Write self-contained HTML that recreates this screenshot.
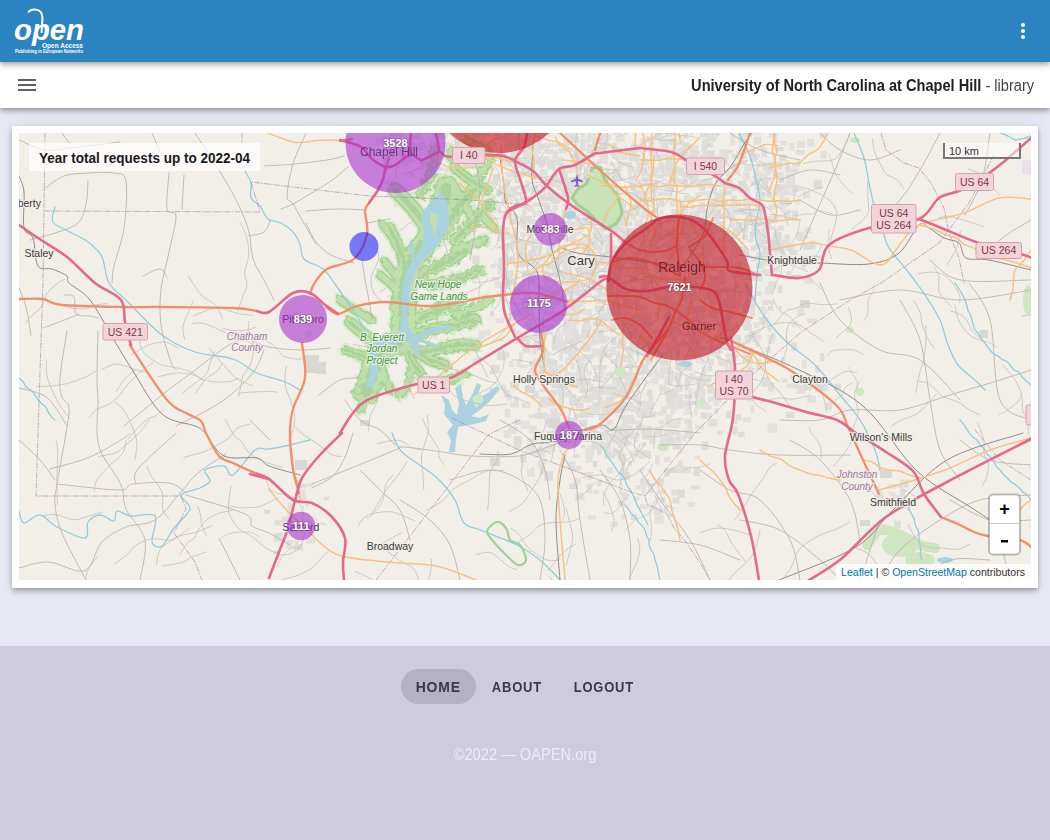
<!DOCTYPE html>
<html><head><meta charset="utf-8">
<style>
*{margin:0;padding:0;box-sizing:border-box}
html,body{width:1050px;height:840px;overflow:hidden;background:#e6e8f4;font-family:"Liberation Sans",sans-serif}
#hdr{position:absolute;left:0;top:0;width:1050px;height:62px;background:#2b83bf;z-index:3;box-shadow:0 2px 4px -1px rgba(0,0,0,.2),0 4px 5px 0 rgba(0,0,0,.14),0 1px 10px 0 rgba(0,0,0,.12)}
#bar{position:absolute;left:0;top:62px;width:1050px;height:46px;background:#fff;z-index:2;box-shadow:0 2px 4px -1px rgba(0,0,0,.2),0 4px 5px 0 rgba(0,0,0,.14),0 1px 10px 0 rgba(0,0,0,.12)}
#card{position:absolute;left:12px;top:126px;width:1026px;height:462px;background:#fff;box-shadow:0 2px 4px -1px rgba(0,0,0,.2),0 4px 5px 0 rgba(0,0,0,.14),0 1px 10px 0 rgba(0,0,0,.12)}
#map{position:absolute;left:19px;top:133px;width:1012px;height:447px;background:#f2efe9;overflow:hidden}
#map svg{position:absolute;left:0;top:0}
#foot{position:absolute;left:0;top:646px;width:1050px;height:194px;background:#cdcbdc}
.ham{position:absolute;left:18px;width:18px;height:2px;background:#5f5f5f}
.dot{position:absolute;left:1021px;width:4px;height:4px;border-radius:2px;background:#fff}
#inst{position:absolute;right:16px;top:15px;font-size:16px;color:#212121;white-space:nowrap;transform:scaleX(0.912);transform-origin:right center}
#inst b{font-weight:bold}
#inst span{color:#444}
.btn{position:absolute;top:669px;height:35px;border-radius:18px;font-size:15px;font-weight:bold;letter-spacing:0.9px;color:#3a3947;line-height:36px;text-align:center}
#copy{position:absolute;left:0;width:1050px;top:746px;text-align:center;font-size:16px;color:#ecebf2;transform:scaleX(0.915)}
</style></head><body>
<div id="hdr">
<svg width="90" height="62" viewBox="0 0 90 62" style="position:absolute;left:0;top:0">
<g fill="#fff">
<text x="14" y="40" font-family="Liberation Sans" font-style="italic" font-weight="bold" font-size="30" textLength="70" lengthAdjust="spacingAndGlyphs">open</text>
<text x="42" y="47.8" font-family="Liberation Sans" font-weight="bold" font-size="7.4" textLength="41" lengthAdjust="spacingAndGlyphs">Open Access</text>
<text x="15" y="52.8" font-family="Liberation Sans" font-weight="bold" font-size="5" textLength="68" lengthAdjust="spacingAndGlyphs">Publishing in European Networks</text>
</g>
<path d="M28 12.5 C31 8.5,42 7,42.5 18 L41.5 33" fill="none" stroke="#fff" stroke-width="2"/>
</svg>
<div class="dot" style="top:23px"></div><div class="dot" style="top:29px"></div><div class="dot" style="top:35px"></div>
</div>
<div id="bar">
 <div class="ham" style="top:17px"></div><div class="ham" style="top:22px"></div><div class="ham" style="top:27px"></div>
 <div id="inst"><b>University of North Carolina at Chapel Hill</b><span> - library</span></div>
</div>
<div id="card"></div>
<div id="map"><svg width="1012" height="447" viewBox="19 133 1012 447" font-family="Liberation Sans, sans-serif"><rect x="390.2" y="129.4" width="6.6" height="7.3" fill="#dddcd9"/><rect x="395.5" y="131.4" width="6.7" height="8.8" fill="#e3e1de"/><rect x="417.2" y="129.8" width="3.6" height="6.7" fill="#e1e0dd"/><rect x="435.9" y="130.2" width="7.0" height="4.7" fill="#dfdedb"/><rect x="456.4" y="131.8" width="9.5" height="9.5" fill="#dddcd9"/><rect x="465.4" y="129.4" width="3.7" height="6.9" fill="#dddcd9"/><rect x="471.0" y="129.8" width="9.2" height="8.6" fill="#dfdedb"/><rect x="477.3" y="131.5" width="9.4" height="5.9" fill="#dddcd9"/><rect x="484.6" y="132.7" width="5.4" height="3.6" fill="#e1e0dd"/><rect x="492.2" y="129.7" width="4.1" height="3.9" fill="#e1e0dd"/><rect x="495.5" y="131.6" width="4.6" height="7.9" fill="#dfdedb"/><rect x="504.5" y="132.9" width="9.4" height="3.5" fill="#dddcd9"/><rect x="515.4" y="131.3" width="4.6" height="9.5" fill="#dfdedb"/><rect x="526.3" y="130.2" width="5.0" height="8.1" fill="#dfdedb"/><rect x="531.1" y="130.5" width="4.8" height="7.3" fill="#e3e1de"/><rect x="537.5" y="130.5" width="7.0" height="8.5" fill="#e1e0dd"/><rect x="545.9" y="129.6" width="4.9" height="7.2" fill="#e1e0dd"/><rect x="555.2" y="129.4" width="6.4" height="4.0" fill="#dddcd9"/><rect x="564.3" y="131.4" width="7.7" height="5.0" fill="#dddcd9"/><rect x="567.5" y="130.9" width="9.1" height="9.4" fill="#dfdedb"/><rect x="573.1" y="130.1" width="9.0" height="4.7" fill="#e3e1de"/><rect x="581.1" y="132.9" width="3.8" height="5.2" fill="#dfdedb"/><rect x="587.6" y="131.8" width="8.8" height="9.4" fill="#e1e0dd"/><rect x="603.1" y="131.4" width="5.6" height="5.4" fill="#dfdedb"/><rect x="613.0" y="129.3" width="7.9" height="5.4" fill="#dddcd9"/><rect x="654.5" y="130.7" width="7.6" height="8.9" fill="#dfdedb"/><rect x="665.3" y="131.4" width="7.2" height="5.8" fill="#dfdedb"/><rect x="670.7" y="130.3" width="4.2" height="5.0" fill="#e3e1de"/><rect x="678.0" y="129.1" width="8.5" height="4.0" fill="#dfdedb"/><rect x="683.0" y="131.5" width="4.9" height="7.7" fill="#e3e1de"/><rect x="689.7" y="129.8" width="3.6" height="5.3" fill="#e1e0dd"/><rect x="700.0" y="130.6" width="9.1" height="6.5" fill="#dddcd9"/><rect x="708.7" y="132.5" width="6.1" height="8.3" fill="#e3e1de"/><rect x="711.5" y="130.4" width="9.0" height="4.8" fill="#dfdedb"/><rect x="730.1" y="129.9" width="4.5" height="6.2" fill="#e3e1de"/><rect x="737.9" y="132.4" width="6.6" height="7.5" fill="#e3e1de"/><rect x="743.4" y="131.7" width="8.5" height="5.2" fill="#dddcd9"/><rect x="753.5" y="130.8" width="8.2" height="3.6" fill="#dfdedb"/><rect x="768.9" y="129.5" width="8.2" height="8.3" fill="#dfdedb"/><rect x="819.7" y="130.1" width="6.3" height="7.8" fill="#dddcd9"/><rect x="375.9" y="136.6" width="8.6" height="7.7" fill="#e3e1de"/><rect x="384.6" y="136.5" width="6.2" height="7.3" fill="#dddcd9"/><rect x="401.6" y="137.9" width="7.8" height="8.4" fill="#e1e0dd"/><rect x="406.2" y="138.9" width="5.8" height="4.0" fill="#dddcd9"/><rect x="413.0" y="135.1" width="7.8" height="3.6" fill="#dddcd9"/><rect x="438.2" y="135.7" width="8.4" height="3.9" fill="#dddcd9"/><rect x="455.1" y="137.7" width="9.5" height="8.9" fill="#e3e1de"/><rect x="465.9" y="137.1" width="9.2" height="4.0" fill="#dddcd9"/><rect x="480.6" y="136.0" width="4.5" height="6.6" fill="#e3e1de"/><rect x="497.2" y="136.1" width="5.3" height="4.3" fill="#e3e1de"/><rect x="503.4" y="135.1" width="6.7" height="6.5" fill="#dfdedb"/><rect x="509.3" y="137.0" width="5.9" height="8.3" fill="#e1e0dd"/><rect x="516.8" y="138.7" width="6.7" height="6.0" fill="#dddcd9"/><rect x="522.6" y="138.7" width="6.5" height="5.5" fill="#e3e1de"/><rect x="525.1" y="136.0" width="4.2" height="6.0" fill="#dfdedb"/><rect x="532.1" y="137.9" width="4.4" height="3.6" fill="#e1e0dd"/><rect x="537.5" y="137.0" width="4.1" height="7.9" fill="#dddcd9"/><rect x="563.5" y="137.2" width="7.3" height="8.5" fill="#e1e0dd"/><rect x="570.4" y="135.9" width="8.6" height="7.2" fill="#dddcd9"/><rect x="579.9" y="139.0" width="5.4" height="9.0" fill="#dfdedb"/><rect x="586.0" y="135.4" width="4.9" height="7.9" fill="#e3e1de"/><rect x="593.5" y="138.2" width="7.7" height="4.7" fill="#dfdedb"/><rect x="600.9" y="135.5" width="7.6" height="9.0" fill="#dddcd9"/><rect x="603.3" y="135.4" width="7.6" height="4.6" fill="#dfdedb"/><rect x="615.8" y="135.5" width="8.9" height="6.4" fill="#e1e0dd"/><rect x="640.8" y="138.1" width="3.9" height="9.2" fill="#dddcd9"/><rect x="645.8" y="136.5" width="6.1" height="5.6" fill="#dfdedb"/><rect x="658.6" y="135.8" width="6.2" height="7.9" fill="#e1e0dd"/><rect x="663.3" y="138.4" width="8.3" height="5.4" fill="#e3e1de"/><rect x="670.4" y="138.0" width="4.6" height="7.0" fill="#dddcd9"/><rect x="701.8" y="138.1" width="8.9" height="8.8" fill="#e1e0dd"/><rect x="706.4" y="136.9" width="7.8" height="3.9" fill="#dfdedb"/><rect x="730.2" y="135.9" width="5.1" height="9.3" fill="#e3e1de"/><rect x="739.0" y="137.6" width="6.7" height="5.8" fill="#dfdedb"/><rect x="754.0" y="136.6" width="7.2" height="7.9" fill="#dfdedb"/><rect x="772.4" y="137.2" width="5.1" height="5.2" fill="#e3e1de"/><rect x="807.2" y="138.7" width="7.1" height="8.1" fill="#e1e0dd"/><rect x="383.1" y="142.9" width="5.9" height="5.4" fill="#dddcd9"/><rect x="393.1" y="142.0" width="7.8" height="5.3" fill="#dfdedb"/><rect x="406.3" y="142.6" width="7.6" height="3.8" fill="#dddcd9"/><rect x="412.9" y="144.9" width="8.9" height="6.1" fill="#e1e0dd"/><rect x="420.6" y="141.6" width="4.1" height="8.4" fill="#e1e0dd"/><rect x="429.8" y="141.2" width="7.2" height="6.2" fill="#e1e0dd"/><rect x="436.8" y="142.0" width="6.2" height="7.5" fill="#e3e1de"/><rect x="441.5" y="142.2" width="8.0" height="8.4" fill="#e1e0dd"/><rect x="450.1" y="143.5" width="4.2" height="8.9" fill="#dddcd9"/><rect x="455.8" y="141.8" width="7.2" height="7.9" fill="#dddcd9"/><rect x="468.7" y="144.5" width="5.0" height="9.4" fill="#dfdedb"/><rect x="477.2" y="141.9" width="5.1" height="3.7" fill="#dddcd9"/><rect x="485.2" y="143.5" width="4.0" height="7.6" fill="#dddcd9"/><rect x="491.0" y="141.5" width="5.6" height="5.5" fill="#dfdedb"/><rect x="504.1" y="142.8" width="8.4" height="8.5" fill="#dddcd9"/><rect x="510.3" y="143.4" width="4.4" height="4.4" fill="#dddcd9"/><rect x="514.7" y="142.5" width="8.0" height="9.0" fill="#dfdedb"/><rect x="520.7" y="143.3" width="5.4" height="6.8" fill="#e3e1de"/><rect x="525.9" y="143.6" width="8.2" height="4.0" fill="#dfdedb"/><rect x="532.3" y="144.5" width="6.5" height="8.1" fill="#e1e0dd"/><rect x="537.5" y="143.8" width="7.9" height="5.7" fill="#dddcd9"/><rect x="544.3" y="142.6" width="8.3" height="5.3" fill="#e1e0dd"/><rect x="551.7" y="143.3" width="8.5" height="3.6" fill="#e1e0dd"/><rect x="563.4" y="141.7" width="5.8" height="4.4" fill="#dfdedb"/><rect x="581.2" y="143.3" width="3.6" height="6.6" fill="#dfdedb"/><rect x="587.2" y="144.2" width="8.3" height="3.9" fill="#dfdedb"/><rect x="592.3" y="141.1" width="5.1" height="4.1" fill="#e1e0dd"/><rect x="599.8" y="143.0" width="8.4" height="6.0" fill="#dddcd9"/><rect x="611.7" y="143.0" width="5.5" height="9.3" fill="#dfdedb"/><rect x="630.4" y="144.2" width="8.5" height="7.5" fill="#dfdedb"/><rect x="648.2" y="142.7" width="6.6" height="7.8" fill="#e3e1de"/><rect x="659.7" y="142.3" width="4.5" height="7.3" fill="#e3e1de"/><rect x="663.2" y="142.2" width="5.3" height="9.3" fill="#dfdedb"/><rect x="672.6" y="144.0" width="4.4" height="9.0" fill="#dfdedb"/><rect x="675.4" y="141.7" width="9.0" height="3.7" fill="#e1e0dd"/><rect x="683.0" y="142.8" width="7.1" height="6.3" fill="#dddcd9"/><rect x="689.5" y="144.8" width="9.0" height="9.1" fill="#e3e1de"/><rect x="701.6" y="144.1" width="5.9" height="9.2" fill="#dfdedb"/><rect x="708.8" y="144.2" width="4.8" height="3.8" fill="#e3e1de"/><rect x="738.5" y="144.6" width="9.0" height="8.9" fill="#e3e1de"/><rect x="760.0" y="144.5" width="4.4" height="5.4" fill="#e1e0dd"/><rect x="780.1" y="141.0" width="6.7" height="4.4" fill="#e1e0dd"/><rect x="789.4" y="142.9" width="5.1" height="7.8" fill="#e3e1de"/><rect x="797.0" y="141.1" width="8.0" height="6.8" fill="#e1e0dd"/><rect x="389.9" y="148.4" width="5.3" height="6.3" fill="#e1e0dd"/><rect x="396.9" y="150.3" width="5.9" height="6.3" fill="#e3e1de"/><rect x="399.9" y="149.3" width="5.8" height="7.8" fill="#e3e1de"/><rect x="438.0" y="150.8" width="7.3" height="9.1" fill="#e3e1de"/><rect x="447.4" y="148.2" width="4.6" height="5.8" fill="#dddcd9"/><rect x="465.6" y="147.4" width="8.5" height="4.1" fill="#e1e0dd"/><rect x="473.4" y="147.4" width="5.9" height="8.5" fill="#e1e0dd"/><rect x="480.1" y="148.4" width="9.4" height="6.1" fill="#e3e1de"/><rect x="491.8" y="148.9" width="4.7" height="4.4" fill="#e3e1de"/><rect x="496.3" y="150.2" width="7.9" height="7.2" fill="#e1e0dd"/><rect x="502.3" y="148.4" width="7.2" height="3.6" fill="#e3e1de"/><rect x="510.2" y="150.3" width="5.8" height="6.6" fill="#e1e0dd"/><rect x="513.9" y="149.4" width="6.7" height="5.3" fill="#e1e0dd"/><rect x="523.0" y="149.8" width="4.7" height="9.1" fill="#e1e0dd"/><rect x="528.1" y="147.5" width="3.7" height="7.5" fill="#e3e1de"/><rect x="534.7" y="148.4" width="7.7" height="5.5" fill="#e3e1de"/><rect x="545.3" y="149.2" width="7.9" height="4.9" fill="#dfdedb"/><rect x="553.0" y="150.3" width="5.1" height="9.0" fill="#e1e0dd"/><rect x="558.6" y="148.0" width="8.4" height="5.2" fill="#dddcd9"/><rect x="567.1" y="147.7" width="6.8" height="4.0" fill="#e1e0dd"/><rect x="574.5" y="149.4" width="7.5" height="7.9" fill="#dfdedb"/><rect x="581.1" y="147.5" width="6.0" height="3.7" fill="#e3e1de"/><rect x="587.3" y="148.3" width="6.6" height="5.1" fill="#dfdedb"/><rect x="593.0" y="147.4" width="8.2" height="5.9" fill="#dddcd9"/><rect x="600.0" y="150.0" width="7.2" height="7.6" fill="#e3e1de"/><rect x="612.3" y="147.5" width="8.9" height="7.6" fill="#dfdedb"/><rect x="624.6" y="148.3" width="6.7" height="6.1" fill="#dfdedb"/><rect x="628.5" y="148.3" width="7.2" height="6.1" fill="#dddcd9"/><rect x="648.5" y="150.9" width="8.6" height="5.0" fill="#e3e1de"/><rect x="652.2" y="148.6" width="6.7" height="4.9" fill="#e1e0dd"/><rect x="671.2" y="149.3" width="8.7" height="5.7" fill="#e1e0dd"/><rect x="678.6" y="147.4" width="8.0" height="6.9" fill="#e1e0dd"/><rect x="681.0" y="148.0" width="6.7" height="9.2" fill="#dddcd9"/><rect x="688.8" y="149.1" width="4.5" height="6.1" fill="#e1e0dd"/><rect x="693.1" y="150.6" width="7.0" height="3.8" fill="#dddcd9"/><rect x="702.1" y="150.5" width="4.4" height="8.2" fill="#e1e0dd"/><rect x="705.8" y="150.4" width="9.0" height="8.9" fill="#dddcd9"/><rect x="719.2" y="149.1" width="7.3" height="7.7" fill="#e1e0dd"/><rect x="723.4" y="149.9" width="8.8" height="3.8" fill="#dddcd9"/><rect x="736.3" y="150.8" width="6.0" height="8.8" fill="#e3e1de"/><rect x="741.5" y="149.8" width="4.5" height="8.7" fill="#dddcd9"/><rect x="750.2" y="148.5" width="4.9" height="7.5" fill="#dfdedb"/><rect x="761.7" y="148.1" width="5.3" height="9.1" fill="#dfdedb"/><rect x="774.6" y="147.0" width="9.0" height="3.9" fill="#dddcd9"/><rect x="795.7" y="149.9" width="9.4" height="4.6" fill="#dfdedb"/><rect x="820.5" y="150.7" width="6.3" height="8.0" fill="#e3e1de"/><rect x="383.5" y="156.9" width="5.2" height="8.5" fill="#e1e0dd"/><rect x="401.2" y="154.0" width="6.1" height="7.5" fill="#e1e0dd"/><rect x="407.4" y="154.0" width="6.8" height="8.6" fill="#e1e0dd"/><rect x="437.0" y="154.7" width="4.4" height="3.6" fill="#e3e1de"/><rect x="455.6" y="155.3" width="4.2" height="4.6" fill="#e1e0dd"/><rect x="468.3" y="156.0" width="6.1" height="7.7" fill="#dddcd9"/><rect x="478.5" y="154.0" width="7.4" height="6.6" fill="#e3e1de"/><rect x="501.9" y="156.9" width="6.0" height="5.7" fill="#dfdedb"/><rect x="507.5" y="156.0" width="8.0" height="7.1" fill="#dfdedb"/><rect x="513.4" y="155.2" width="6.0" height="6.7" fill="#e3e1de"/><rect x="523.0" y="156.1" width="4.0" height="3.7" fill="#e1e0dd"/><rect x="526.7" y="153.3" width="4.2" height="8.6" fill="#e1e0dd"/><rect x="533.4" y="153.2" width="5.5" height="9.4" fill="#e3e1de"/><rect x="539.3" y="156.6" width="9.5" height="7.9" fill="#e1e0dd"/><rect x="544.5" y="156.1" width="5.9" height="8.6" fill="#e1e0dd"/><rect x="552.2" y="154.9" width="5.0" height="8.3" fill="#e3e1de"/><rect x="556.8" y="157.0" width="6.3" height="5.4" fill="#e1e0dd"/><rect x="569.8" y="154.5" width="5.8" height="3.9" fill="#dddcd9"/><rect x="575.0" y="155.3" width="6.6" height="7.9" fill="#e1e0dd"/><rect x="582.7" y="154.4" width="5.7" height="4.4" fill="#e1e0dd"/><rect x="586.3" y="154.5" width="8.9" height="3.6" fill="#dfdedb"/><rect x="599.7" y="154.2" width="5.0" height="8.8" fill="#e1e0dd"/><rect x="603.5" y="153.8" width="4.6" height="6.6" fill="#e3e1de"/><rect x="611.8" y="154.0" width="6.8" height="4.3" fill="#e3e1de"/><rect x="616.1" y="155.9" width="4.4" height="4.7" fill="#e3e1de"/><rect x="621.4" y="154.5" width="6.6" height="5.6" fill="#e1e0dd"/><rect x="628.9" y="153.0" width="8.6" height="8.0" fill="#dddcd9"/><rect x="635.2" y="154.4" width="3.9" height="8.6" fill="#dfdedb"/><rect x="652.7" y="154.6" width="7.3" height="4.0" fill="#dfdedb"/><rect x="659.8" y="153.9" width="9.1" height="5.2" fill="#e3e1de"/><rect x="665.8" y="155.1" width="8.1" height="5.6" fill="#dddcd9"/><rect x="682.2" y="156.7" width="5.0" height="8.6" fill="#e3e1de"/><rect x="688.1" y="154.5" width="9.0" height="9.0" fill="#dddcd9"/><rect x="693.1" y="154.4" width="5.5" height="5.0" fill="#dddcd9"/><rect x="699.7" y="154.9" width="5.1" height="7.5" fill="#dddcd9"/><rect x="714.1" y="155.5" width="7.0" height="9.2" fill="#e3e1de"/><rect x="718.9" y="154.8" width="3.9" height="3.9" fill="#e3e1de"/><rect x="724.2" y="154.4" width="4.3" height="6.5" fill="#dfdedb"/><rect x="731.7" y="153.9" width="4.7" height="4.9" fill="#dfdedb"/><rect x="750.1" y="153.3" width="6.8" height="8.6" fill="#dddcd9"/><rect x="756.2" y="153.8" width="4.1" height="3.6" fill="#e3e1de"/><rect x="779.3" y="154.5" width="7.2" height="6.4" fill="#dddcd9"/><rect x="400.9" y="160.4" width="7.2" height="6.0" fill="#e3e1de"/><rect x="419.9" y="160.3" width="7.8" height="5.0" fill="#dddcd9"/><rect x="432.9" y="161.6" width="6.9" height="4.3" fill="#e1e0dd"/><rect x="453.9" y="159.7" width="5.8" height="7.5" fill="#dfdedb"/><rect x="462.7" y="160.1" width="7.7" height="8.2" fill="#dddcd9"/><rect x="468.7" y="163.0" width="7.3" height="5.9" fill="#dfdedb"/><rect x="471.8" y="160.4" width="9.5" height="8.7" fill="#dfdedb"/><rect x="480.4" y="159.7" width="8.9" height="8.5" fill="#dfdedb"/><rect x="484.1" y="160.6" width="8.3" height="8.5" fill="#e3e1de"/><rect x="504.2" y="159.6" width="7.7" height="6.8" fill="#e1e0dd"/><rect x="514.7" y="159.6" width="8.9" height="8.8" fill="#dfdedb"/><rect x="520.6" y="160.3" width="6.9" height="5.1" fill="#dfdedb"/><rect x="525.2" y="159.3" width="5.7" height="5.1" fill="#dddcd9"/><rect x="531.6" y="162.2" width="3.5" height="5.5" fill="#e3e1de"/><rect x="538.6" y="159.2" width="6.0" height="8.3" fill="#dddcd9"/><rect x="547.0" y="160.8" width="9.1" height="8.7" fill="#dfdedb"/><rect x="549.5" y="159.3" width="3.7" height="4.5" fill="#dddcd9"/><rect x="556.9" y="162.5" width="6.8" height="3.9" fill="#dfdedb"/><rect x="570.2" y="161.9" width="6.7" height="8.4" fill="#e3e1de"/><rect x="576.2" y="162.1" width="6.7" height="7.5" fill="#e3e1de"/><rect x="582.6" y="159.1" width="7.7" height="5.0" fill="#e1e0dd"/><rect x="587.6" y="162.2" width="5.8" height="5.7" fill="#dddcd9"/><rect x="591.3" y="161.6" width="6.2" height="5.4" fill="#dfdedb"/><rect x="597.2" y="159.5" width="4.8" height="4.6" fill="#dddcd9"/><rect x="603.6" y="160.4" width="4.6" height="4.1" fill="#e3e1de"/><rect x="609.4" y="162.8" width="5.9" height="3.8" fill="#e1e0dd"/><rect x="617.4" y="161.3" width="4.5" height="3.9" fill="#dddcd9"/><rect x="622.6" y="161.8" width="9.3" height="4.8" fill="#e1e0dd"/><rect x="636.5" y="162.1" width="5.8" height="9.0" fill="#dfdedb"/><rect x="641.6" y="159.8" width="7.3" height="5.8" fill="#dddcd9"/><rect x="657.5" y="162.3" width="6.5" height="6.9" fill="#e3e1de"/><rect x="665.0" y="160.5" width="6.3" height="8.5" fill="#dfdedb"/><rect x="670.8" y="161.4" width="3.7" height="7.3" fill="#dfdedb"/><rect x="684.0" y="160.3" width="6.3" height="9.5" fill="#e3e1de"/><rect x="697.0" y="161.0" width="8.7" height="4.3" fill="#e1e0dd"/><rect x="699.6" y="159.5" width="9.0" height="8.2" fill="#dfdedb"/><rect x="708.5" y="161.8" width="9.5" height="3.9" fill="#dddcd9"/><rect x="711.1" y="160.7" width="5.6" height="4.7" fill="#e3e1de"/><rect x="719.2" y="162.1" width="7.4" height="3.9" fill="#e3e1de"/><rect x="732.5" y="162.9" width="6.5" height="3.8" fill="#dfdedb"/><rect x="741.1" y="160.4" width="5.7" height="4.1" fill="#e1e0dd"/><rect x="756.4" y="161.5" width="4.6" height="5.8" fill="#e3e1de"/><rect x="761.5" y="162.5" width="9.4" height="4.7" fill="#e1e0dd"/><rect x="768.3" y="161.8" width="9.5" height="5.8" fill="#dddcd9"/><rect x="777.7" y="161.3" width="4.8" height="8.1" fill="#dfdedb"/><rect x="785.4" y="160.4" width="4.2" height="9.1" fill="#e1e0dd"/><rect x="791.9" y="162.5" width="3.9" height="4.7" fill="#e3e1de"/><rect x="796.5" y="161.5" width="3.9" height="5.1" fill="#dddcd9"/><rect x="424.8" y="168.8" width="6.0" height="5.2" fill="#dddcd9"/><rect x="436.5" y="167.4" width="7.2" height="3.6" fill="#dddcd9"/><rect x="444.5" y="168.1" width="5.2" height="4.1" fill="#dfdedb"/><rect x="454.5" y="166.5" width="8.9" height="4.0" fill="#dddcd9"/><rect x="485.0" y="166.9" width="3.9" height="4.5" fill="#dfdedb"/><rect x="509.8" y="169.0" width="8.5" height="7.4" fill="#dfdedb"/><rect x="521.1" y="167.3" width="8.2" height="9.1" fill="#e3e1de"/><rect x="528.0" y="165.3" width="4.4" height="5.9" fill="#e1e0dd"/><rect x="539.7" y="168.9" width="8.2" height="8.9" fill="#e3e1de"/><rect x="552.4" y="168.8" width="6.3" height="3.6" fill="#dfdedb"/><rect x="558.9" y="168.1" width="6.0" height="6.9" fill="#dfdedb"/><rect x="563.3" y="165.5" width="6.5" height="4.2" fill="#dfdedb"/><rect x="568.0" y="167.4" width="5.4" height="5.6" fill="#e3e1de"/><rect x="575.2" y="166.8" width="4.8" height="6.2" fill="#dfdedb"/><rect x="585.7" y="167.5" width="4.4" height="6.9" fill="#dfdedb"/><rect x="594.3" y="167.9" width="3.6" height="4.4" fill="#e3e1de"/><rect x="597.4" y="166.2" width="6.7" height="3.7" fill="#dfdedb"/><rect x="605.1" y="167.6" width="5.3" height="4.8" fill="#e3e1de"/><rect x="612.5" y="168.8" width="6.4" height="7.4" fill="#dfdedb"/><rect x="616.0" y="166.5" width="5.3" height="7.9" fill="#e3e1de"/><rect x="627.5" y="166.2" width="7.4" height="5.5" fill="#dfdedb"/><rect x="636.3" y="167.7" width="5.8" height="5.4" fill="#dddcd9"/><rect x="641.1" y="167.1" width="5.7" height="9.2" fill="#dfdedb"/><rect x="647.8" y="166.4" width="7.1" height="4.1" fill="#e1e0dd"/><rect x="652.2" y="167.4" width="7.1" height="5.7" fill="#dfdedb"/><rect x="660.0" y="165.2" width="6.5" height="6.6" fill="#dfdedb"/><rect x="666.8" y="167.6" width="7.0" height="8.3" fill="#dddcd9"/><rect x="669.3" y="168.9" width="5.2" height="7.6" fill="#dddcd9"/><rect x="678.2" y="167.6" width="5.4" height="8.4" fill="#dfdedb"/><rect x="687.6" y="166.4" width="5.9" height="4.0" fill="#dfdedb"/><rect x="695.2" y="168.3" width="7.6" height="4.8" fill="#e3e1de"/><rect x="702.7" y="165.3" width="7.6" height="9.4" fill="#dfdedb"/><rect x="706.8" y="166.7" width="8.0" height="5.8" fill="#dfdedb"/><rect x="714.3" y="168.8" width="8.9" height="7.9" fill="#dddcd9"/><rect x="717.5" y="166.2" width="6.8" height="4.2" fill="#dfdedb"/><rect x="732.4" y="165.5" width="6.0" height="6.7" fill="#dddcd9"/><rect x="736.5" y="167.7" width="3.7" height="6.1" fill="#e3e1de"/><rect x="744.1" y="165.4" width="7.6" height="5.8" fill="#e1e0dd"/><rect x="755.6" y="166.5" width="3.6" height="8.4" fill="#e3e1de"/><rect x="762.1" y="165.6" width="7.0" height="6.3" fill="#e3e1de"/><rect x="766.0" y="167.9" width="7.7" height="4.9" fill="#dfdedb"/><rect x="772.5" y="167.9" width="3.9" height="8.4" fill="#e3e1de"/><rect x="785.1" y="166.5" width="4.6" height="6.0" fill="#dfdedb"/><rect x="790.2" y="168.4" width="8.0" height="4.1" fill="#dfdedb"/><rect x="409.0" y="172.5" width="4.6" height="4.5" fill="#dddcd9"/><rect x="430.1" y="172.0" width="8.6" height="7.9" fill="#dfdedb"/><rect x="436.1" y="173.2" width="8.8" height="7.5" fill="#dddcd9"/><rect x="449.0" y="174.5" width="5.2" height="5.2" fill="#e1e0dd"/><rect x="465.7" y="174.0" width="4.0" height="8.3" fill="#dddcd9"/><rect x="473.6" y="173.2" width="6.1" height="8.2" fill="#e3e1de"/><rect x="480.8" y="173.0" width="5.7" height="7.9" fill="#dddcd9"/><rect x="492.7" y="174.0" width="6.8" height="6.9" fill="#dddcd9"/><rect x="505.0" y="172.2" width="6.9" height="4.2" fill="#e1e0dd"/><rect x="507.1" y="173.3" width="7.5" height="3.9" fill="#dfdedb"/><rect x="515.8" y="173.5" width="7.6" height="4.0" fill="#e1e0dd"/><rect x="527.8" y="171.1" width="4.3" height="4.7" fill="#dfdedb"/><rect x="533.8" y="174.8" width="5.3" height="5.5" fill="#e1e0dd"/><rect x="551.7" y="173.5" width="6.4" height="7.0" fill="#dddcd9"/><rect x="561.1" y="171.4" width="6.6" height="9.3" fill="#dddcd9"/><rect x="575.8" y="173.1" width="3.7" height="8.5" fill="#dfdedb"/><rect x="582.9" y="174.3" width="3.9" height="8.3" fill="#e3e1de"/><rect x="588.6" y="172.0" width="4.8" height="5.9" fill="#dfdedb"/><rect x="593.7" y="172.8" width="6.7" height="5.5" fill="#e1e0dd"/><rect x="604.8" y="171.9" width="4.7" height="4.8" fill="#dddcd9"/><rect x="611.4" y="173.3" width="7.6" height="7.2" fill="#dfdedb"/><rect x="616.3" y="173.9" width="4.9" height="5.3" fill="#dfdedb"/><rect x="628.0" y="171.9" width="4.0" height="8.1" fill="#e3e1de"/><rect x="633.3" y="171.3" width="4.3" height="7.5" fill="#e3e1de"/><rect x="649.0" y="171.8" width="7.5" height="4.9" fill="#dddcd9"/><rect x="654.9" y="174.6" width="9.2" height="3.9" fill="#dfdedb"/><rect x="660.7" y="171.6" width="5.8" height="3.9" fill="#e1e0dd"/><rect x="664.3" y="171.6" width="6.5" height="4.9" fill="#e1e0dd"/><rect x="669.8" y="171.5" width="7.8" height="9.2" fill="#e1e0dd"/><rect x="682.5" y="171.5" width="9.2" height="6.2" fill="#dddcd9"/><rect x="689.9" y="173.7" width="8.7" height="9.4" fill="#dfdedb"/><rect x="695.1" y="173.2" width="4.6" height="4.2" fill="#e3e1de"/><rect x="705.9" y="171.3" width="9.2" height="4.0" fill="#dddcd9"/><rect x="725.6" y="171.4" width="4.6" height="9.3" fill="#e3e1de"/><rect x="742.9" y="171.8" width="7.1" height="8.6" fill="#e3e1de"/><rect x="753.2" y="171.7" width="8.1" height="5.9" fill="#e1e0dd"/><rect x="759.1" y="172.7" width="8.4" height="9.3" fill="#e3e1de"/><rect x="766.4" y="171.7" width="3.9" height="3.6" fill="#dfdedb"/><rect x="773.8" y="172.0" width="8.6" height="6.9" fill="#dddcd9"/><rect x="779.4" y="172.7" width="4.4" height="7.0" fill="#e3e1de"/><rect x="785.7" y="173.5" width="9.2" height="6.4" fill="#e1e0dd"/><rect x="384.0" y="180.2" width="6.4" height="4.2" fill="#e3e1de"/><rect x="423.2" y="177.6" width="5.4" height="7.3" fill="#dfdedb"/><rect x="432.2" y="177.9" width="6.2" height="4.0" fill="#e3e1de"/><rect x="442.7" y="179.2" width="8.9" height="6.5" fill="#dfdedb"/><rect x="460.4" y="177.8" width="8.5" height="6.5" fill="#e1e0dd"/><rect x="471.5" y="178.0" width="5.3" height="7.5" fill="#dddcd9"/><rect x="490.0" y="180.7" width="8.4" height="5.3" fill="#dfdedb"/><rect x="503.7" y="178.6" width="6.3" height="7.4" fill="#dfdedb"/><rect x="514.6" y="178.0" width="5.1" height="5.2" fill="#dddcd9"/><rect x="525.2" y="180.5" width="4.3" height="7.9" fill="#e3e1de"/><rect x="545.0" y="178.5" width="9.2" height="7.3" fill="#dddcd9"/><rect x="552.9" y="177.9" width="8.8" height="6.5" fill="#dfdedb"/><rect x="556.1" y="177.7" width="6.6" height="5.4" fill="#dddcd9"/><rect x="564.7" y="180.6" width="9.2" height="5.5" fill="#dddcd9"/><rect x="568.9" y="177.2" width="7.0" height="5.3" fill="#dfdedb"/><rect x="573.1" y="180.5" width="6.6" height="6.4" fill="#dfdedb"/><rect x="579.8" y="179.3" width="8.0" height="5.0" fill="#e1e0dd"/><rect x="588.8" y="178.2" width="5.9" height="5.5" fill="#e3e1de"/><rect x="594.7" y="177.3" width="9.0" height="8.2" fill="#e3e1de"/><rect x="599.2" y="179.6" width="7.6" height="8.1" fill="#dddcd9"/><rect x="603.3" y="177.7" width="6.0" height="3.6" fill="#dfdedb"/><rect x="612.1" y="179.3" width="4.6" height="9.3" fill="#dddcd9"/><rect x="615.2" y="177.2" width="8.3" height="3.7" fill="#dfdedb"/><rect x="629.2" y="177.0" width="5.0" height="8.9" fill="#e3e1de"/><rect x="634.7" y="179.3" width="6.1" height="4.3" fill="#e1e0dd"/><rect x="641.5" y="177.2" width="7.4" height="7.6" fill="#e1e0dd"/><rect x="646.5" y="180.0" width="6.9" height="5.9" fill="#e3e1de"/><rect x="654.0" y="180.9" width="4.7" height="5.0" fill="#dddcd9"/><rect x="666.3" y="179.9" width="5.5" height="3.6" fill="#e3e1de"/><rect x="669.1" y="177.4" width="8.7" height="4.6" fill="#dddcd9"/><rect x="676.8" y="178.3" width="5.7" height="6.1" fill="#dfdedb"/><rect x="682.8" y="178.9" width="5.3" height="8.1" fill="#e3e1de"/><rect x="690.2" y="180.7" width="7.6" height="6.5" fill="#dfdedb"/><rect x="696.8" y="179.6" width="5.3" height="7.8" fill="#e3e1de"/><rect x="702.1" y="179.2" width="7.4" height="4.9" fill="#dddcd9"/><rect x="706.4" y="178.7" width="5.8" height="8.5" fill="#dfdedb"/><rect x="715.0" y="177.8" width="4.8" height="5.9" fill="#e3e1de"/><rect x="720.3" y="178.6" width="7.0" height="8.4" fill="#dddcd9"/><rect x="725.8" y="179.2" width="7.0" height="5.0" fill="#e1e0dd"/><rect x="737.9" y="180.8" width="8.2" height="5.4" fill="#dddcd9"/><rect x="750.7" y="180.2" width="9.2" height="5.5" fill="#e3e1de"/><rect x="754.7" y="177.6" width="5.2" height="8.3" fill="#dfdedb"/><rect x="761.3" y="180.8" width="6.7" height="9.4" fill="#dddcd9"/><rect x="767.2" y="177.7" width="3.8" height="3.6" fill="#dddcd9"/><rect x="779.1" y="177.1" width="5.1" height="5.7" fill="#dddcd9"/><rect x="785.5" y="180.3" width="5.9" height="8.2" fill="#e1e0dd"/><rect x="791.5" y="177.1" width="3.7" height="9.0" fill="#e1e0dd"/><rect x="813.8" y="179.8" width="8.4" height="8.7" fill="#dddcd9"/><rect x="424.8" y="184.7" width="9.3" height="5.5" fill="#e1e0dd"/><rect x="441.9" y="186.5" width="5.6" height="7.7" fill="#e1e0dd"/><rect x="456.4" y="186.0" width="6.5" height="7.5" fill="#dfdedb"/><rect x="462.9" y="185.4" width="3.8" height="5.6" fill="#e3e1de"/><rect x="467.8" y="183.7" width="4.1" height="3.6" fill="#dddcd9"/><rect x="471.2" y="186.1" width="4.4" height="7.6" fill="#e1e0dd"/><rect x="484.2" y="184.0" width="5.7" height="5.0" fill="#dfdedb"/><rect x="489.7" y="183.6" width="6.0" height="4.5" fill="#dfdedb"/><rect x="498.5" y="186.0" width="6.6" height="5.4" fill="#e3e1de"/><rect x="502.6" y="185.0" width="6.5" height="6.0" fill="#e3e1de"/><rect x="510.2" y="186.4" width="7.0" height="9.5" fill="#dddcd9"/><rect x="516.2" y="185.5" width="5.3" height="3.7" fill="#dddcd9"/><rect x="521.2" y="184.9" width="5.7" height="9.0" fill="#dddcd9"/><rect x="527.2" y="186.5" width="6.2" height="5.9" fill="#e1e0dd"/><rect x="533.2" y="185.1" width="5.0" height="9.3" fill="#dddcd9"/><rect x="540.8" y="185.1" width="5.2" height="5.6" fill="#dfdedb"/><rect x="545.6" y="183.4" width="4.4" height="5.8" fill="#e3e1de"/><rect x="551.8" y="183.3" width="6.8" height="3.8" fill="#e1e0dd"/><rect x="557.2" y="184.3" width="4.8" height="6.2" fill="#dfdedb"/><rect x="563.4" y="184.0" width="7.8" height="9.0" fill="#dddcd9"/><rect x="567.4" y="185.5" width="9.2" height="6.9" fill="#dddcd9"/><rect x="573.7" y="184.4" width="8.3" height="4.8" fill="#e1e0dd"/><rect x="587.6" y="186.9" width="7.9" height="8.8" fill="#dddcd9"/><rect x="597.0" y="185.7" width="5.4" height="4.2" fill="#dddcd9"/><rect x="605.9" y="183.7" width="8.4" height="5.0" fill="#e3e1de"/><rect x="610.1" y="183.8" width="3.7" height="7.0" fill="#dfdedb"/><rect x="616.2" y="186.4" width="4.6" height="4.9" fill="#dfdedb"/><rect x="629.9" y="185.0" width="7.3" height="5.8" fill="#dfdedb"/><rect x="634.0" y="183.5" width="7.0" height="4.2" fill="#dddcd9"/><rect x="647.4" y="186.7" width="5.5" height="4.4" fill="#e1e0dd"/><rect x="653.6" y="185.5" width="3.6" height="7.4" fill="#e3e1de"/><rect x="660.5" y="183.1" width="7.8" height="4.0" fill="#e1e0dd"/><rect x="664.5" y="183.7" width="4.9" height="6.1" fill="#dddcd9"/><rect x="669.6" y="183.6" width="3.8" height="8.5" fill="#dfdedb"/><rect x="683.9" y="183.6" width="7.4" height="4.4" fill="#dddcd9"/><rect x="687.5" y="184.1" width="9.0" height="3.7" fill="#e1e0dd"/><rect x="695.1" y="183.3" width="6.1" height="3.9" fill="#e3e1de"/><rect x="699.4" y="183.0" width="5.8" height="8.0" fill="#dddcd9"/><rect x="706.3" y="183.0" width="7.2" height="4.7" fill="#e3e1de"/><rect x="711.6" y="186.2" width="5.2" height="7.5" fill="#dddcd9"/><rect x="724.2" y="184.0" width="7.4" height="5.1" fill="#dfdedb"/><rect x="730.6" y="186.4" width="9.0" height="4.6" fill="#dddcd9"/><rect x="738.5" y="184.4" width="9.4" height="7.9" fill="#dddcd9"/><rect x="754.6" y="185.3" width="9.3" height="4.4" fill="#e1e0dd"/><rect x="765.8" y="186.8" width="6.1" height="7.0" fill="#e3e1de"/><rect x="774.9" y="184.1" width="6.2" height="8.6" fill="#dddcd9"/><rect x="778.1" y="184.5" width="7.1" height="6.8" fill="#dddcd9"/><rect x="791.6" y="184.9" width="7.6" height="7.3" fill="#dfdedb"/><rect x="796.9" y="185.9" width="7.8" height="4.9" fill="#e3e1de"/><rect x="411.7" y="191.9" width="3.7" height="6.0" fill="#dddcd9"/><rect x="424.8" y="192.3" width="4.1" height="3.7" fill="#dddcd9"/><rect x="447.9" y="189.1" width="7.3" height="3.7" fill="#e1e0dd"/><rect x="461.8" y="192.4" width="5.6" height="4.1" fill="#dfdedb"/><rect x="478.0" y="189.2" width="6.1" height="7.3" fill="#dddcd9"/><rect x="484.9" y="189.0" width="8.1" height="7.3" fill="#e3e1de"/><rect x="496.1" y="191.2" width="9.0" height="4.4" fill="#dddcd9"/><rect x="504.2" y="190.2" width="7.6" height="9.4" fill="#e3e1de"/><rect x="510.8" y="191.7" width="6.0" height="5.2" fill="#e3e1de"/><rect x="513.5" y="191.8" width="8.6" height="4.0" fill="#dfdedb"/><rect x="531.9" y="189.6" width="6.9" height="4.1" fill="#dddcd9"/><rect x="539.9" y="189.0" width="5.8" height="9.0" fill="#e1e0dd"/><rect x="546.6" y="192.0" width="4.3" height="4.3" fill="#dfdedb"/><rect x="549.7" y="192.9" width="4.4" height="5.5" fill="#dddcd9"/><rect x="561.4" y="189.1" width="4.4" height="8.2" fill="#dddcd9"/><rect x="567.8" y="189.2" width="8.9" height="8.2" fill="#e1e0dd"/><rect x="573.8" y="191.6" width="5.3" height="9.0" fill="#dfdedb"/><rect x="579.7" y="189.2" width="4.4" height="6.2" fill="#e3e1de"/><rect x="599.2" y="192.8" width="6.5" height="4.3" fill="#dddcd9"/><rect x="603.7" y="192.0" width="6.8" height="5.4" fill="#e1e0dd"/><rect x="611.9" y="190.9" width="6.0" height="7.7" fill="#dfdedb"/><rect x="616.7" y="192.4" width="4.9" height="5.0" fill="#e3e1de"/><rect x="624.9" y="191.4" width="5.7" height="4.6" fill="#e1e0dd"/><rect x="630.9" y="192.3" width="6.5" height="6.6" fill="#e3e1de"/><rect x="634.6" y="190.5" width="7.4" height="5.7" fill="#dddcd9"/><rect x="642.2" y="191.7" width="5.6" height="8.6" fill="#dddcd9"/><rect x="646.3" y="189.4" width="7.4" height="5.0" fill="#e1e0dd"/><rect x="657.6" y="191.6" width="5.8" height="4.2" fill="#dfdedb"/><rect x="663.4" y="189.3" width="8.2" height="6.4" fill="#e3e1de"/><rect x="695.3" y="192.1" width="6.4" height="4.8" fill="#e3e1de"/><rect x="702.2" y="191.4" width="4.2" height="4.0" fill="#dfdedb"/><rect x="706.3" y="191.1" width="6.3" height="6.4" fill="#e3e1de"/><rect x="714.7" y="192.5" width="9.3" height="5.7" fill="#dfdedb"/><rect x="719.2" y="189.4" width="8.3" height="4.0" fill="#dfdedb"/><rect x="724.3" y="190.2" width="7.2" height="5.3" fill="#dddcd9"/><rect x="743.7" y="189.6" width="6.3" height="8.2" fill="#e3e1de"/><rect x="756.3" y="192.1" width="8.9" height="7.1" fill="#e3e1de"/><rect x="759.6" y="192.8" width="4.4" height="3.8" fill="#dddcd9"/><rect x="767.3" y="191.5" width="4.3" height="4.5" fill="#dddcd9"/><rect x="773.0" y="190.5" width="5.5" height="6.0" fill="#e1e0dd"/><rect x="779.4" y="191.7" width="5.1" height="8.1" fill="#e3e1de"/><rect x="783.2" y="189.2" width="7.4" height="6.1" fill="#e3e1de"/><rect x="791.1" y="191.3" width="4.3" height="4.7" fill="#dfdedb"/><rect x="802.9" y="191.6" width="7.4" height="7.3" fill="#e3e1de"/><rect x="489.2" y="196.5" width="6.9" height="4.4" fill="#dddcd9"/><rect x="501.9" y="196.4" width="8.9" height="7.5" fill="#dfdedb"/><rect x="507.5" y="197.4" width="5.7" height="5.4" fill="#e3e1de"/><rect x="514.8" y="198.1" width="4.6" height="5.5" fill="#e1e0dd"/><rect x="519.8" y="196.3" width="8.2" height="4.0" fill="#dfdedb"/><rect x="526.4" y="196.9" width="5.3" height="6.2" fill="#dddcd9"/><rect x="539.1" y="195.4" width="5.3" height="5.6" fill="#dddcd9"/><rect x="544.2" y="196.8" width="8.3" height="4.2" fill="#dddcd9"/><rect x="551.0" y="195.2" width="8.9" height="8.7" fill="#dddcd9"/><rect x="568.7" y="196.6" width="4.0" height="8.6" fill="#e3e1de"/><rect x="573.3" y="195.2" width="5.5" height="4.9" fill="#e3e1de"/><rect x="581.2" y="196.5" width="5.3" height="9.1" fill="#e3e1de"/><rect x="586.5" y="196.1" width="5.5" height="6.4" fill="#dfdedb"/><rect x="592.0" y="198.2" width="8.0" height="4.4" fill="#dfdedb"/><rect x="599.1" y="195.7" width="3.7" height="3.5" fill="#e3e1de"/><rect x="605.0" y="196.4" width="8.2" height="6.8" fill="#dddcd9"/><rect x="612.6" y="197.9" width="8.3" height="8.5" fill="#dddcd9"/><rect x="617.1" y="198.3" width="6.7" height="7.0" fill="#dfdedb"/><rect x="635.4" y="195.5" width="6.9" height="8.8" fill="#dfdedb"/><rect x="648.0" y="197.0" width="6.9" height="4.4" fill="#dddcd9"/><rect x="658.5" y="197.8" width="5.5" height="8.9" fill="#dddcd9"/><rect x="671.4" y="197.8" width="6.3" height="9.1" fill="#dfdedb"/><rect x="675.4" y="198.5" width="6.4" height="5.5" fill="#e3e1de"/><rect x="683.7" y="195.4" width="6.2" height="5.1" fill="#dddcd9"/><rect x="687.5" y="196.2" width="6.6" height="6.6" fill="#dfdedb"/><rect x="713.6" y="197.4" width="5.0" height="6.3" fill="#dddcd9"/><rect x="717.5" y="198.7" width="5.3" height="7.4" fill="#dfdedb"/><rect x="723.3" y="198.5" width="4.1" height="4.2" fill="#dfdedb"/><rect x="731.3" y="195.5" width="5.2" height="8.9" fill="#dddcd9"/><rect x="743.6" y="196.3" width="5.1" height="6.7" fill="#e1e0dd"/><rect x="747.9" y="198.8" width="9.3" height="4.8" fill="#dfdedb"/><rect x="780.3" y="198.4" width="3.9" height="7.9" fill="#dfdedb"/><rect x="783.2" y="197.3" width="6.6" height="8.0" fill="#e3e1de"/><rect x="795.2" y="198.9" width="5.4" height="6.1" fill="#e3e1de"/><rect x="393.9" y="201.9" width="5.9" height="5.0" fill="#e3e1de"/><rect x="448.4" y="205.0" width="4.0" height="7.3" fill="#dfdedb"/><rect x="491.6" y="204.5" width="3.6" height="7.2" fill="#dddcd9"/><rect x="497.5" y="204.9" width="3.5" height="8.5" fill="#e1e0dd"/><rect x="519.0" y="202.3" width="8.9" height="5.9" fill="#dddcd9"/><rect x="525.3" y="204.5" width="6.9" height="5.4" fill="#dddcd9"/><rect x="533.0" y="202.4" width="8.0" height="4.1" fill="#dfdedb"/><rect x="539.1" y="201.9" width="9.4" height="4.7" fill="#dfdedb"/><rect x="544.4" y="204.4" width="6.0" height="7.6" fill="#dddcd9"/><rect x="552.6" y="204.8" width="5.6" height="5.9" fill="#e1e0dd"/><rect x="564.0" y="204.4" width="3.8" height="4.3" fill="#e1e0dd"/><rect x="574.5" y="202.3" width="6.1" height="6.3" fill="#dddcd9"/><rect x="581.9" y="201.1" width="6.1" height="8.4" fill="#dfdedb"/><rect x="586.3" y="203.7" width="5.3" height="7.1" fill="#e1e0dd"/><rect x="605.3" y="201.3" width="8.4" height="4.0" fill="#dfdedb"/><rect x="611.9" y="203.3" width="7.6" height="4.8" fill="#e1e0dd"/><rect x="617.0" y="202.8" width="8.8" height="8.4" fill="#dfdedb"/><rect x="621.0" y="202.9" width="5.1" height="7.4" fill="#dfdedb"/><rect x="629.9" y="204.4" width="4.6" height="6.0" fill="#e1e0dd"/><rect x="634.1" y="204.6" width="6.7" height="5.2" fill="#dddcd9"/><rect x="642.7" y="201.4" width="5.9" height="4.7" fill="#dfdedb"/><rect x="657.2" y="203.4" width="3.9" height="4.5" fill="#e3e1de"/><rect x="669.6" y="201.1" width="4.9" height="4.8" fill="#e3e1de"/><rect x="678.5" y="202.2" width="6.0" height="6.8" fill="#e1e0dd"/><rect x="683.4" y="204.5" width="4.1" height="3.7" fill="#dfdedb"/><rect x="690.4" y="204.2" width="4.3" height="5.4" fill="#e1e0dd"/><rect x="696.7" y="204.7" width="4.4" height="9.3" fill="#e3e1de"/><rect x="699.3" y="202.2" width="5.7" height="9.0" fill="#dfdedb"/><rect x="708.5" y="201.2" width="9.0" height="8.7" fill="#e3e1de"/><rect x="712.4" y="202.2" width="8.6" height="4.9" fill="#e1e0dd"/><rect x="720.3" y="202.0" width="8.3" height="5.1" fill="#e3e1de"/><rect x="730.0" y="202.8" width="6.8" height="5.8" fill="#e1e0dd"/><rect x="736.9" y="202.1" width="4.8" height="4.7" fill="#dfdedb"/><rect x="743.1" y="201.2" width="5.6" height="8.7" fill="#e3e1de"/><rect x="755.9" y="204.8" width="9.4" height="4.5" fill="#e1e0dd"/><rect x="768.4" y="204.3" width="6.3" height="5.6" fill="#e3e1de"/><rect x="771.5" y="203.4" width="7.4" height="4.3" fill="#e1e0dd"/><rect x="779.1" y="203.5" width="6.2" height="5.9" fill="#e1e0dd"/><rect x="467.0" y="207.6" width="7.6" height="9.2" fill="#dfdedb"/><rect x="490.5" y="209.0" width="4.8" height="4.0" fill="#dfdedb"/><rect x="503.7" y="209.9" width="7.2" height="8.4" fill="#e1e0dd"/><rect x="507.5" y="210.3" width="4.0" height="6.0" fill="#dfdedb"/><rect x="522.4" y="209.3" width="4.5" height="5.2" fill="#dfdedb"/><rect x="528.0" y="207.5" width="5.6" height="4.1" fill="#dfdedb"/><rect x="532.6" y="210.7" width="3.8" height="6.9" fill="#e1e0dd"/><rect x="537.4" y="210.3" width="4.8" height="6.0" fill="#e3e1de"/><rect x="544.0" y="209.5" width="3.6" height="7.0" fill="#dddcd9"/><rect x="549.8" y="210.0" width="6.9" height="5.1" fill="#e1e0dd"/><rect x="562.0" y="209.6" width="9.2" height="7.0" fill="#dddcd9"/><rect x="568.0" y="207.3" width="8.1" height="7.0" fill="#e1e0dd"/><rect x="580.5" y="210.7" width="8.0" height="5.1" fill="#e1e0dd"/><rect x="587.3" y="208.3" width="9.1" height="7.2" fill="#e3e1de"/><rect x="592.6" y="207.7" width="5.2" height="9.4" fill="#e1e0dd"/><rect x="597.5" y="210.2" width="5.0" height="4.2" fill="#dddcd9"/><rect x="605.7" y="209.2" width="7.1" height="6.8" fill="#e1e0dd"/><rect x="609.4" y="210.7" width="7.0" height="5.4" fill="#dfdedb"/><rect x="615.7" y="210.2" width="6.6" height="6.2" fill="#dfdedb"/><rect x="621.0" y="209.6" width="7.6" height="8.5" fill="#e1e0dd"/><rect x="629.4" y="209.5" width="4.5" height="7.4" fill="#e3e1de"/><rect x="635.1" y="209.1" width="4.3" height="6.5" fill="#dddcd9"/><rect x="641.5" y="209.2" width="7.0" height="9.3" fill="#e1e0dd"/><rect x="647.9" y="209.9" width="5.7" height="6.1" fill="#e1e0dd"/><rect x="653.1" y="208.4" width="4.4" height="6.5" fill="#e1e0dd"/><rect x="659.4" y="209.9" width="4.0" height="3.6" fill="#e1e0dd"/><rect x="671.5" y="209.2" width="8.0" height="7.1" fill="#dddcd9"/><rect x="676.7" y="210.9" width="7.5" height="7.7" fill="#e3e1de"/><rect x="682.2" y="207.1" width="5.8" height="7.2" fill="#e1e0dd"/><rect x="689.1" y="211.0" width="7.8" height="4.5" fill="#dfdedb"/><rect x="693.8" y="210.6" width="6.2" height="6.8" fill="#dfdedb"/><rect x="700.4" y="208.8" width="6.3" height="4.5" fill="#dfdedb"/><rect x="705.0" y="209.3" width="9.4" height="8.4" fill="#e3e1de"/><rect x="712.1" y="209.2" width="9.2" height="7.1" fill="#dfdedb"/><rect x="724.8" y="207.8" width="5.6" height="6.5" fill="#e1e0dd"/><rect x="731.5" y="208.9" width="7.1" height="5.1" fill="#e1e0dd"/><rect x="736.3" y="208.0" width="9.4" height="6.8" fill="#e3e1de"/><rect x="743.5" y="208.5" width="9.5" height="7.1" fill="#e3e1de"/><rect x="750.7" y="208.7" width="6.0" height="4.4" fill="#e1e0dd"/><rect x="759.1" y="207.2" width="4.1" height="9.4" fill="#dddcd9"/><rect x="784.3" y="209.7" width="6.3" height="9.3" fill="#e3e1de"/><rect x="791.6" y="210.4" width="6.4" height="9.3" fill="#dfdedb"/><rect x="437.0" y="215.8" width="4.9" height="4.6" fill="#e1e0dd"/><rect x="444.5" y="213.1" width="9.1" height="5.1" fill="#e1e0dd"/><rect x="465.4" y="213.1" width="4.0" height="7.4" fill="#dfdedb"/><rect x="474.2" y="215.4" width="3.7" height="8.9" fill="#dddcd9"/><rect x="479.5" y="214.8" width="7.6" height="9.5" fill="#e1e0dd"/><rect x="501.5" y="215.0" width="8.2" height="4.1" fill="#e1e0dd"/><rect x="508.5" y="216.7" width="5.0" height="3.5" fill="#e3e1de"/><rect x="514.1" y="214.6" width="3.6" height="9.4" fill="#dddcd9"/><rect x="520.4" y="214.6" width="5.4" height="6.7" fill="#dddcd9"/><rect x="525.6" y="215.9" width="6.4" height="6.6" fill="#dddcd9"/><rect x="539.9" y="215.2" width="5.4" height="6.6" fill="#dddcd9"/><rect x="544.0" y="214.2" width="4.1" height="6.5" fill="#e3e1de"/><rect x="552.6" y="214.6" width="5.6" height="6.9" fill="#e1e0dd"/><rect x="556.2" y="215.9" width="4.3" height="6.8" fill="#e3e1de"/><rect x="561.3" y="213.9" width="3.8" height="8.1" fill="#e1e0dd"/><rect x="567.7" y="215.1" width="3.6" height="6.9" fill="#e1e0dd"/><rect x="575.4" y="214.8" width="4.6" height="6.6" fill="#e3e1de"/><rect x="582.5" y="216.9" width="8.6" height="6.7" fill="#e1e0dd"/><rect x="587.5" y="213.6" width="3.9" height="5.2" fill="#e3e1de"/><rect x="592.2" y="215.8" width="6.1" height="4.9" fill="#e1e0dd"/><rect x="598.7" y="215.5" width="5.4" height="6.2" fill="#dfdedb"/><rect x="616.8" y="215.6" width="9.3" height="6.2" fill="#dddcd9"/><rect x="624.2" y="214.7" width="5.1" height="4.9" fill="#dddcd9"/><rect x="630.8" y="213.5" width="5.2" height="6.4" fill="#dfdedb"/><rect x="639.3" y="214.2" width="3.6" height="8.8" fill="#e1e0dd"/><rect x="665.7" y="216.7" width="5.5" height="7.9" fill="#e3e1de"/><rect x="671.3" y="215.9" width="3.9" height="7.0" fill="#e3e1de"/><rect x="677.3" y="216.8" width="5.8" height="3.9" fill="#dddcd9"/><rect x="682.5" y="215.0" width="3.9" height="8.7" fill="#dddcd9"/><rect x="689.5" y="216.4" width="4.7" height="8.1" fill="#dddcd9"/><rect x="694.4" y="215.3" width="6.3" height="6.3" fill="#e1e0dd"/><rect x="701.6" y="214.8" width="4.6" height="5.8" fill="#e3e1de"/><rect x="713.7" y="217.0" width="5.7" height="5.5" fill="#e1e0dd"/><rect x="717.4" y="213.4" width="6.1" height="5.9" fill="#dddcd9"/><rect x="724.4" y="213.6" width="5.8" height="5.5" fill="#e3e1de"/><rect x="730.1" y="213.7" width="5.2" height="8.2" fill="#e1e0dd"/><rect x="744.7" y="214.7" width="8.5" height="9.0" fill="#e3e1de"/><rect x="749.5" y="213.0" width="5.7" height="5.5" fill="#e3e1de"/><rect x="756.4" y="215.5" width="6.0" height="6.4" fill="#e1e0dd"/><rect x="767.3" y="216.0" width="7.6" height="4.4" fill="#e1e0dd"/><rect x="772.4" y="214.0" width="5.4" height="9.2" fill="#dfdedb"/><rect x="479.8" y="220.2" width="6.1" height="6.6" fill="#dddcd9"/><rect x="486.3" y="219.4" width="8.4" height="5.8" fill="#e3e1de"/><rect x="508.7" y="219.5" width="8.6" height="5.1" fill="#dddcd9"/><rect x="515.6" y="220.8" width="6.4" height="4.5" fill="#dfdedb"/><rect x="520.6" y="220.3" width="6.9" height="8.3" fill="#e1e0dd"/><rect x="531.0" y="219.2" width="5.2" height="5.9" fill="#dfdedb"/><rect x="541.0" y="219.2" width="8.2" height="5.3" fill="#dfdedb"/><rect x="543.4" y="222.6" width="8.3" height="7.3" fill="#e3e1de"/><rect x="550.7" y="221.1" width="4.7" height="6.4" fill="#dfdedb"/><rect x="558.9" y="222.9" width="7.9" height="7.2" fill="#dddcd9"/><rect x="562.6" y="220.6" width="8.1" height="9.3" fill="#e3e1de"/><rect x="569.2" y="221.9" width="6.3" height="5.1" fill="#dfdedb"/><rect x="575.6" y="222.7" width="7.7" height="4.0" fill="#e3e1de"/><rect x="580.3" y="222.6" width="3.8" height="8.9" fill="#e3e1de"/><rect x="588.3" y="221.6" width="3.7" height="7.2" fill="#e1e0dd"/><rect x="591.7" y="219.8" width="4.2" height="8.7" fill="#e3e1de"/><rect x="597.2" y="221.6" width="4.6" height="4.5" fill="#e1e0dd"/><rect x="604.8" y="222.7" width="9.2" height="6.0" fill="#e3e1de"/><rect x="616.1" y="219.3" width="8.3" height="9.2" fill="#dfdedb"/><rect x="624.2" y="221.5" width="8.0" height="4.6" fill="#dfdedb"/><rect x="634.5" y="219.5" width="6.9" height="7.3" fill="#e1e0dd"/><rect x="640.5" y="222.2" width="8.1" height="8.7" fill="#e3e1de"/><rect x="654.8" y="219.1" width="4.5" height="5.4" fill="#e1e0dd"/><rect x="657.6" y="220.8" width="4.8" height="6.1" fill="#dfdedb"/><rect x="677.6" y="222.3" width="4.0" height="7.9" fill="#e3e1de"/><rect x="682.8" y="221.5" width="9.4" height="6.3" fill="#dddcd9"/><rect x="690.6" y="222.5" width="9.1" height="5.1" fill="#dddcd9"/><rect x="701.7" y="222.8" width="6.3" height="9.1" fill="#e1e0dd"/><rect x="705.9" y="220.1" width="7.5" height="6.1" fill="#dddcd9"/><rect x="720.7" y="221.7" width="4.0" height="9.2" fill="#e1e0dd"/><rect x="730.2" y="222.3" width="5.2" height="6.3" fill="#e1e0dd"/><rect x="735.9" y="221.6" width="5.7" height="6.1" fill="#dfdedb"/><rect x="741.5" y="221.2" width="6.1" height="4.0" fill="#e3e1de"/><rect x="750.9" y="219.8" width="6.4" height="9.4" fill="#e3e1de"/><rect x="755.4" y="221.9" width="8.0" height="4.7" fill="#dddcd9"/><rect x="765.5" y="219.7" width="5.1" height="7.3" fill="#dfdedb"/><rect x="469.0" y="225.4" width="5.2" height="9.2" fill="#dfdedb"/><rect x="490.4" y="226.2" width="7.3" height="8.1" fill="#dfdedb"/><rect x="497.3" y="225.7" width="8.2" height="7.3" fill="#e1e0dd"/><rect x="503.9" y="227.5" width="5.9" height="5.9" fill="#e3e1de"/><rect x="513.9" y="227.4" width="4.1" height="9.0" fill="#e1e0dd"/><rect x="521.8" y="226.5" width="5.6" height="4.3" fill="#e3e1de"/><rect x="534.7" y="227.5" width="6.0" height="5.6" fill="#e1e0dd"/><rect x="538.4" y="226.3" width="4.4" height="7.9" fill="#e3e1de"/><rect x="545.3" y="226.2" width="6.7" height="4.8" fill="#dfdedb"/><rect x="550.6" y="228.8" width="7.1" height="4.4" fill="#dfdedb"/><rect x="556.6" y="225.3" width="9.0" height="4.8" fill="#e3e1de"/><rect x="564.7" y="226.0" width="7.2" height="6.4" fill="#e1e0dd"/><rect x="569.4" y="227.2" width="3.5" height="4.7" fill="#e1e0dd"/><rect x="593.5" y="227.5" width="5.4" height="7.1" fill="#e1e0dd"/><rect x="598.1" y="226.9" width="6.4" height="5.0" fill="#e1e0dd"/><rect x="609.0" y="226.5" width="9.3" height="7.2" fill="#dddcd9"/><rect x="616.9" y="225.0" width="8.1" height="8.5" fill="#e3e1de"/><rect x="621.8" y="229.0" width="7.9" height="6.3" fill="#e3e1de"/><rect x="628.4" y="228.0" width="8.0" height="8.2" fill="#dddcd9"/><rect x="646.9" y="228.2" width="5.3" height="3.7" fill="#dfdedb"/><rect x="653.8" y="228.0" width="9.0" height="7.9" fill="#e3e1de"/><rect x="665.1" y="228.8" width="7.5" height="6.8" fill="#dddcd9"/><rect x="669.9" y="226.5" width="3.9" height="7.0" fill="#e3e1de"/><rect x="676.6" y="227.7" width="4.8" height="7.2" fill="#e3e1de"/><rect x="682.3" y="227.2" width="9.1" height="5.8" fill="#e3e1de"/><rect x="689.0" y="229.0" width="7.2" height="6.5" fill="#e3e1de"/><rect x="696.8" y="228.7" width="8.6" height="6.3" fill="#e1e0dd"/><rect x="702.1" y="227.4" width="5.8" height="7.1" fill="#e1e0dd"/><rect x="708.7" y="225.4" width="7.0" height="8.9" fill="#dfdedb"/><rect x="712.2" y="226.2" width="7.2" height="8.0" fill="#e1e0dd"/><rect x="732.8" y="227.9" width="7.3" height="7.9" fill="#dddcd9"/><rect x="737.7" y="227.4" width="9.2" height="5.2" fill="#dddcd9"/><rect x="744.3" y="225.5" width="4.0" height="7.6" fill="#dfdedb"/><rect x="753.1" y="228.5" width="6.7" height="8.4" fill="#dddcd9"/><rect x="761.0" y="228.2" width="9.0" height="6.5" fill="#e1e0dd"/><rect x="766.0" y="226.2" width="9.5" height="3.7" fill="#dfdedb"/><rect x="773.8" y="228.5" width="4.0" height="5.4" fill="#dfdedb"/><rect x="777.7" y="225.3" width="6.0" height="5.5" fill="#dfdedb"/><rect x="804.4" y="227.4" width="7.2" height="5.7" fill="#e1e0dd"/><rect x="442.1" y="233.1" width="8.8" height="4.3" fill="#dfdedb"/><rect x="480.6" y="233.1" width="6.7" height="3.8" fill="#e3e1de"/><rect x="498.0" y="232.5" width="5.6" height="4.8" fill="#e1e0dd"/><rect x="503.6" y="233.5" width="5.6" height="6.4" fill="#e1e0dd"/><rect x="508.6" y="233.9" width="7.0" height="5.0" fill="#dfdedb"/><rect x="513.1" y="231.1" width="4.8" height="4.2" fill="#dddcd9"/><rect x="520.1" y="231.7" width="3.7" height="4.9" fill="#e1e0dd"/><rect x="525.8" y="232.3" width="8.8" height="4.3" fill="#e3e1de"/><rect x="550.7" y="231.0" width="3.7" height="5.5" fill="#dddcd9"/><rect x="556.6" y="231.2" width="3.6" height="6.9" fill="#dddcd9"/><rect x="562.0" y="235.0" width="6.1" height="4.8" fill="#dddcd9"/><rect x="570.9" y="233.5" width="5.6" height="9.4" fill="#e1e0dd"/><rect x="574.1" y="231.7" width="5.9" height="4.2" fill="#e1e0dd"/><rect x="582.6" y="233.6" width="3.6" height="4.0" fill="#dddcd9"/><rect x="586.2" y="234.1" width="3.6" height="9.1" fill="#e3e1de"/><rect x="594.3" y="232.6" width="6.7" height="9.0" fill="#e1e0dd"/><rect x="597.2" y="232.6" width="5.6" height="5.4" fill="#dfdedb"/><rect x="603.5" y="234.9" width="6.1" height="8.3" fill="#dddcd9"/><rect x="617.0" y="234.3" width="9.3" height="7.2" fill="#dddcd9"/><rect x="622.0" y="234.0" width="5.9" height="9.4" fill="#dfdedb"/><rect x="635.3" y="231.8" width="9.5" height="5.6" fill="#e3e1de"/><rect x="653.3" y="232.5" width="8.2" height="7.8" fill="#dddcd9"/><rect x="660.3" y="235.0" width="5.7" height="4.9" fill="#e1e0dd"/><rect x="666.6" y="234.1" width="4.8" height="3.6" fill="#dddcd9"/><rect x="669.5" y="232.7" width="9.2" height="8.3" fill="#e3e1de"/><rect x="678.5" y="231.8" width="9.2" height="7.3" fill="#e3e1de"/><rect x="683.3" y="233.3" width="7.4" height="7.7" fill="#e1e0dd"/><rect x="700.6" y="233.0" width="7.9" height="4.0" fill="#dfdedb"/><rect x="711.2" y="231.8" width="4.1" height="8.8" fill="#dddcd9"/><rect x="723.2" y="233.8" width="6.1" height="4.4" fill="#e3e1de"/><rect x="731.3" y="233.8" width="5.0" height="5.1" fill="#e3e1de"/><rect x="742.2" y="234.0" width="5.5" height="6.1" fill="#dfdedb"/><rect x="749.7" y="232.0" width="3.8" height="9.0" fill="#dfdedb"/><rect x="756.0" y="233.6" width="4.5" height="5.8" fill="#e3e1de"/><rect x="759.8" y="233.5" width="8.7" height="5.1" fill="#e1e0dd"/><rect x="772.9" y="232.2" width="8.9" height="7.6" fill="#dddcd9"/><rect x="784.4" y="234.4" width="5.8" height="7.1" fill="#dfdedb"/><rect x="796.4" y="232.0" width="7.1" height="9.1" fill="#dfdedb"/><rect x="801.6" y="234.1" width="6.7" height="4.5" fill="#e1e0dd"/><rect x="437.1" y="240.8" width="7.7" height="3.7" fill="#dfdedb"/><rect x="487.0" y="240.1" width="4.2" height="6.5" fill="#e1e0dd"/><rect x="497.1" y="237.1" width="6.6" height="3.6" fill="#dfdedb"/><rect x="501.3" y="239.1" width="3.8" height="7.9" fill="#dfdedb"/><rect x="510.7" y="237.5" width="9.2" height="9.4" fill="#e1e0dd"/><rect x="514.8" y="238.6" width="5.0" height="8.0" fill="#dddcd9"/><rect x="519.1" y="239.9" width="6.9" height="5.5" fill="#dfdedb"/><rect x="527.3" y="237.1" width="6.9" height="9.1" fill="#e3e1de"/><rect x="532.9" y="238.7" width="7.9" height="5.3" fill="#e1e0dd"/><rect x="555.4" y="237.4" width="4.0" height="4.1" fill="#dddcd9"/><rect x="564.4" y="237.2" width="7.3" height="4.3" fill="#dfdedb"/><rect x="579.3" y="239.2" width="8.0" height="6.0" fill="#e3e1de"/><rect x="587.7" y="240.4" width="8.4" height="6.6" fill="#dddcd9"/><rect x="594.3" y="237.8" width="3.7" height="7.7" fill="#dddcd9"/><rect x="599.5" y="237.6" width="4.4" height="7.4" fill="#e1e0dd"/><rect x="604.7" y="239.1" width="7.4" height="3.6" fill="#e3e1de"/><rect x="618.4" y="238.3" width="6.0" height="4.9" fill="#dfdedb"/><rect x="627.2" y="238.6" width="5.2" height="7.6" fill="#e3e1de"/><rect x="640.4" y="238.8" width="6.4" height="8.4" fill="#dfdedb"/><rect x="645.1" y="238.5" width="8.4" height="3.6" fill="#e3e1de"/><rect x="653.8" y="239.3" width="4.2" height="4.8" fill="#e3e1de"/><rect x="664.7" y="238.8" width="3.9" height="6.3" fill="#e3e1de"/><rect x="672.3" y="239.7" width="5.9" height="6.6" fill="#e1e0dd"/><rect x="678.5" y="239.4" width="3.6" height="4.7" fill="#e3e1de"/><rect x="689.0" y="240.8" width="5.7" height="8.0" fill="#e1e0dd"/><rect x="702.6" y="240.1" width="6.7" height="7.0" fill="#dfdedb"/><rect x="706.8" y="240.9" width="9.3" height="6.4" fill="#e1e0dd"/><rect x="717.3" y="238.6" width="4.3" height="5.7" fill="#e3e1de"/><rect x="730.4" y="239.9" width="5.5" height="4.0" fill="#e3e1de"/><rect x="747.8" y="239.2" width="5.0" height="3.5" fill="#e1e0dd"/><rect x="756.0" y="239.5" width="8.1" height="9.3" fill="#e1e0dd"/><rect x="760.5" y="239.3" width="7.9" height="4.7" fill="#dddcd9"/><rect x="767.3" y="238.1" width="6.7" height="6.5" fill="#e3e1de"/><rect x="773.4" y="240.8" width="6.9" height="7.4" fill="#e3e1de"/><rect x="779.6" y="239.7" width="6.8" height="7.3" fill="#e1e0dd"/><rect x="783.1" y="239.4" width="6.0" height="7.8" fill="#e3e1de"/><rect x="809.2" y="240.9" width="6.2" height="8.5" fill="#dddcd9"/><rect x="503.7" y="243.4" width="5.8" height="7.8" fill="#dddcd9"/><rect x="510.2" y="243.6" width="4.1" height="6.8" fill="#e3e1de"/><rect x="515.6" y="246.0" width="8.7" height="7.3" fill="#e3e1de"/><rect x="519.0" y="245.5" width="8.2" height="4.0" fill="#dfdedb"/><rect x="531.5" y="245.5" width="9.0" height="4.8" fill="#dddcd9"/><rect x="538.1" y="246.8" width="4.0" height="8.2" fill="#e1e0dd"/><rect x="545.8" y="246.3" width="8.2" height="7.8" fill="#e3e1de"/><rect x="549.3" y="243.2" width="5.1" height="6.4" fill="#dfdedb"/><rect x="557.0" y="244.9" width="9.3" height="5.2" fill="#e1e0dd"/><rect x="562.4" y="244.4" width="5.0" height="7.3" fill="#e1e0dd"/><rect x="575.6" y="244.2" width="5.1" height="3.8" fill="#dfdedb"/><rect x="582.3" y="245.5" width="5.0" height="4.9" fill="#dfdedb"/><rect x="592.4" y="243.7" width="5.8" height="4.8" fill="#e3e1de"/><rect x="597.2" y="244.4" width="3.6" height="8.8" fill="#dfdedb"/><rect x="604.8" y="243.9" width="6.9" height="7.9" fill="#dfdedb"/><rect x="609.7" y="245.6" width="8.5" height="9.0" fill="#dddcd9"/><rect x="621.8" y="246.9" width="9.5" height="3.9" fill="#e3e1de"/><rect x="640.5" y="246.8" width="6.3" height="7.5" fill="#e3e1de"/><rect x="648.5" y="243.8" width="5.8" height="6.6" fill="#dfdedb"/><rect x="652.7" y="245.8" width="8.7" height="8.1" fill="#dfdedb"/><rect x="660.6" y="244.0" width="6.2" height="3.6" fill="#dfdedb"/><rect x="666.7" y="244.7" width="9.1" height="9.2" fill="#dfdedb"/><rect x="670.1" y="243.8" width="8.1" height="7.4" fill="#e1e0dd"/><rect x="675.5" y="245.1" width="8.9" height="5.1" fill="#dddcd9"/><rect x="684.7" y="245.3" width="5.8" height="8.0" fill="#e3e1de"/><rect x="691.0" y="244.2" width="7.0" height="5.8" fill="#dfdedb"/><rect x="696.8" y="243.3" width="3.8" height="5.7" fill="#dddcd9"/><rect x="701.1" y="246.2" width="4.9" height="6.9" fill="#dddcd9"/><rect x="707.9" y="245.7" width="7.4" height="6.4" fill="#e3e1de"/><rect x="712.3" y="244.2" width="9.2" height="3.6" fill="#dddcd9"/><rect x="723.0" y="246.3" width="4.6" height="7.1" fill="#e1e0dd"/><rect x="731.2" y="245.0" width="7.1" height="8.8" fill="#e3e1de"/><rect x="737.9" y="246.0" width="8.1" height="6.4" fill="#dddcd9"/><rect x="750.9" y="245.6" width="5.3" height="5.3" fill="#dfdedb"/><rect x="754.7" y="243.5" width="9.3" height="3.5" fill="#dddcd9"/><rect x="762.6" y="245.2" width="8.5" height="5.1" fill="#dddcd9"/><rect x="767.1" y="244.5" width="9.2" height="6.9" fill="#e3e1de"/><rect x="774.0" y="244.1" width="8.8" height="8.9" fill="#dfdedb"/><rect x="786.4" y="245.6" width="7.1" height="5.3" fill="#dddcd9"/><rect x="791.1" y="243.9" width="3.7" height="6.4" fill="#e1e0dd"/><rect x="803.0" y="244.1" width="7.4" height="5.7" fill="#dddcd9"/><rect x="502.0" y="250.5" width="6.6" height="7.4" fill="#dfdedb"/><rect x="516.1" y="251.9" width="9.1" height="7.4" fill="#dddcd9"/><rect x="522.8" y="252.8" width="8.4" height="5.9" fill="#e1e0dd"/><rect x="528.5" y="249.9" width="8.0" height="6.1" fill="#dddcd9"/><rect x="531.0" y="252.6" width="3.6" height="5.9" fill="#dfdedb"/><rect x="538.1" y="251.6" width="3.5" height="9.1" fill="#e1e0dd"/><rect x="545.9" y="249.5" width="4.2" height="5.0" fill="#e3e1de"/><rect x="557.5" y="251.0" width="8.8" height="7.0" fill="#e1e0dd"/><rect x="561.7" y="251.2" width="8.5" height="8.5" fill="#e3e1de"/><rect x="569.2" y="251.4" width="4.5" height="4.2" fill="#dddcd9"/><rect x="586.9" y="250.9" width="4.3" height="7.5" fill="#e1e0dd"/><rect x="592.5" y="251.3" width="4.3" height="8.8" fill="#e3e1de"/><rect x="599.1" y="252.5" width="8.1" height="8.3" fill="#dddcd9"/><rect x="605.4" y="250.6" width="5.1" height="8.8" fill="#e3e1de"/><rect x="616.8" y="251.7" width="7.4" height="8.4" fill="#dfdedb"/><rect x="622.4" y="249.1" width="5.0" height="7.2" fill="#e1e0dd"/><rect x="634.8" y="250.5" width="7.5" height="4.1" fill="#dddcd9"/><rect x="646.1" y="251.9" width="8.6" height="4.7" fill="#dddcd9"/><rect x="659.6" y="250.5" width="5.6" height="7.8" fill="#e3e1de"/><rect x="665.8" y="250.9" width="8.6" height="7.8" fill="#dfdedb"/><rect x="677.0" y="249.8" width="6.1" height="7.7" fill="#dfdedb"/><rect x="690.0" y="249.7" width="4.2" height="6.6" fill="#e3e1de"/><rect x="695.3" y="252.3" width="7.9" height="5.4" fill="#dddcd9"/><rect x="702.9" y="249.1" width="8.9" height="8.1" fill="#dfdedb"/><rect x="705.6" y="252.4" width="9.0" height="4.5" fill="#dfdedb"/><rect x="729.5" y="251.6" width="9.4" height="6.5" fill="#e3e1de"/><rect x="736.8" y="252.4" width="5.1" height="3.6" fill="#e3e1de"/><rect x="744.5" y="250.6" width="4.6" height="9.1" fill="#dddcd9"/><rect x="756.3" y="251.9" width="8.2" height="8.8" fill="#e1e0dd"/><rect x="762.0" y="250.4" width="9.2" height="4.5" fill="#dfdedb"/><rect x="780.0" y="249.2" width="5.1" height="6.5" fill="#dddcd9"/><rect x="789.2" y="250.0" width="8.4" height="5.2" fill="#dddcd9"/><rect x="472.5" y="255.6" width="7.1" height="8.7" fill="#dddcd9"/><rect x="498.2" y="257.2" width="9.2" height="7.9" fill="#dfdedb"/><rect x="504.8" y="256.3" width="9.2" height="6.2" fill="#dddcd9"/><rect x="520.6" y="255.5" width="7.7" height="6.7" fill="#dfdedb"/><rect x="525.3" y="256.5" width="5.4" height="5.5" fill="#dddcd9"/><rect x="531.2" y="257.7" width="5.5" height="4.4" fill="#dddcd9"/><rect x="538.9" y="255.7" width="6.2" height="5.7" fill="#e1e0dd"/><rect x="551.1" y="257.1" width="9.3" height="8.4" fill="#dfdedb"/><rect x="558.3" y="257.7" width="4.0" height="6.2" fill="#dfdedb"/><rect x="562.5" y="256.5" width="7.7" height="6.0" fill="#e1e0dd"/><rect x="570.5" y="257.0" width="7.2" height="7.8" fill="#dfdedb"/><rect x="580.2" y="257.8" width="4.4" height="4.1" fill="#e1e0dd"/><rect x="591.7" y="257.0" width="6.4" height="8.2" fill="#dfdedb"/><rect x="598.5" y="257.0" width="8.8" height="8.6" fill="#dddcd9"/><rect x="605.8" y="258.6" width="6.5" height="7.3" fill="#e1e0dd"/><rect x="610.7" y="255.1" width="4.7" height="8.6" fill="#dddcd9"/><rect x="615.8" y="258.3" width="5.1" height="9.0" fill="#dddcd9"/><rect x="622.4" y="256.9" width="5.5" height="5.5" fill="#e1e0dd"/><rect x="629.8" y="256.9" width="5.7" height="4.4" fill="#e3e1de"/><rect x="639.8" y="257.6" width="8.3" height="9.1" fill="#e3e1de"/><rect x="645.4" y="257.5" width="3.7" height="5.1" fill="#e1e0dd"/><rect x="654.6" y="258.1" width="3.7" height="5.3" fill="#dddcd9"/><rect x="666.6" y="258.0" width="7.1" height="9.4" fill="#e3e1de"/><rect x="669.4" y="255.3" width="7.5" height="4.6" fill="#e3e1de"/><rect x="677.5" y="255.9" width="3.6" height="5.6" fill="#e1e0dd"/><rect x="681.8" y="258.9" width="6.7" height="6.9" fill="#e1e0dd"/><rect x="690.7" y="256.7" width="3.9" height="8.8" fill="#dfdedb"/><rect x="694.0" y="257.7" width="5.8" height="6.7" fill="#e1e0dd"/><rect x="700.3" y="255.8" width="8.8" height="3.6" fill="#e1e0dd"/><rect x="712.3" y="257.1" width="5.9" height="3.8" fill="#dfdedb"/><rect x="719.2" y="256.8" width="6.5" height="8.1" fill="#e1e0dd"/><rect x="723.5" y="257.4" width="9.4" height="8.0" fill="#e1e0dd"/><rect x="750.7" y="258.4" width="6.7" height="3.5" fill="#e3e1de"/><rect x="766.0" y="255.2" width="6.9" height="7.4" fill="#e1e0dd"/><rect x="780.3" y="256.4" width="7.4" height="8.9" fill="#e3e1de"/><rect x="785.7" y="255.4" width="5.1" height="6.4" fill="#e1e0dd"/><rect x="789.3" y="257.1" width="4.8" height="8.7" fill="#dfdedb"/><rect x="814.1" y="255.3" width="6.6" height="5.1" fill="#e1e0dd"/><rect x="489.8" y="264.1" width="6.1" height="3.6" fill="#dfdedb"/><rect x="497.2" y="265.0" width="4.1" height="9.2" fill="#e1e0dd"/><rect x="501.3" y="262.3" width="3.8" height="6.9" fill="#dddcd9"/><rect x="513.6" y="262.7" width="9.3" height="5.1" fill="#e3e1de"/><rect x="519.9" y="261.2" width="7.6" height="5.6" fill="#dddcd9"/><rect x="528.0" y="262.0" width="5.1" height="4.0" fill="#dfdedb"/><rect x="532.9" y="261.7" width="5.2" height="8.5" fill="#e1e0dd"/><rect x="538.8" y="263.8" width="5.8" height="5.1" fill="#dddcd9"/><rect x="546.8" y="261.5" width="4.8" height="7.5" fill="#dddcd9"/><rect x="550.5" y="264.2" width="8.9" height="5.4" fill="#dfdedb"/><rect x="562.8" y="261.5" width="5.4" height="9.5" fill="#dfdedb"/><rect x="577.0" y="261.3" width="5.7" height="3.6" fill="#dfdedb"/><rect x="588.9" y="264.9" width="4.8" height="4.9" fill="#dfdedb"/><rect x="594.5" y="265.0" width="5.6" height="5.1" fill="#e1e0dd"/><rect x="597.1" y="261.3" width="4.4" height="4.2" fill="#dfdedb"/><rect x="611.5" y="261.3" width="8.3" height="8.1" fill="#dfdedb"/><rect x="616.4" y="261.6" width="6.6" height="8.2" fill="#dddcd9"/><rect x="629.8" y="262.4" width="4.7" height="3.9" fill="#e1e0dd"/><rect x="634.8" y="263.4" width="7.3" height="5.1" fill="#e1e0dd"/><rect x="639.7" y="263.8" width="8.2" height="3.8" fill="#dfdedb"/><rect x="653.1" y="263.3" width="5.1" height="6.6" fill="#e3e1de"/><rect x="663.9" y="262.3" width="7.1" height="3.7" fill="#e1e0dd"/><rect x="670.6" y="263.2" width="7.5" height="9.4" fill="#e3e1de"/><rect x="675.7" y="263.5" width="5.8" height="5.8" fill="#dddcd9"/><rect x="684.3" y="262.5" width="4.9" height="3.6" fill="#dddcd9"/><rect x="688.6" y="261.0" width="4.6" height="8.8" fill="#e3e1de"/><rect x="694.8" y="263.2" width="3.6" height="6.9" fill="#e1e0dd"/><rect x="700.9" y="261.6" width="9.3" height="6.3" fill="#e1e0dd"/><rect x="707.9" y="264.4" width="6.4" height="3.8" fill="#dfdedb"/><rect x="711.6" y="261.5" width="7.9" height="4.0" fill="#e3e1de"/><rect x="724.2" y="262.9" width="8.2" height="3.8" fill="#e3e1de"/><rect x="732.5" y="265.0" width="6.7" height="5.3" fill="#e1e0dd"/><rect x="735.4" y="261.5" width="6.4" height="6.0" fill="#dfdedb"/><rect x="755.9" y="263.0" width="7.7" height="5.6" fill="#dddcd9"/><rect x="760.2" y="261.2" width="8.3" height="5.1" fill="#e1e0dd"/><rect x="777.5" y="261.0" width="3.9" height="5.0" fill="#dddcd9"/><rect x="801.4" y="263.4" width="4.2" height="5.7" fill="#e3e1de"/><rect x="474.0" y="267.3" width="5.6" height="4.5" fill="#dfdedb"/><rect x="504.6" y="270.4" width="6.7" height="6.1" fill="#e3e1de"/><rect x="507.5" y="270.2" width="6.3" height="4.9" fill="#e3e1de"/><rect x="521.9" y="270.3" width="6.4" height="7.7" fill="#e1e0dd"/><rect x="525.2" y="270.8" width="8.8" height="6.5" fill="#e1e0dd"/><rect x="534.6" y="268.4" width="4.8" height="6.7" fill="#dddcd9"/><rect x="545.0" y="270.1" width="3.7" height="9.5" fill="#e3e1de"/><rect x="552.7" y="268.6" width="3.6" height="8.7" fill="#dfdedb"/><rect x="558.9" y="269.8" width="9.1" height="7.2" fill="#dddcd9"/><rect x="563.4" y="267.5" width="6.0" height="5.4" fill="#e3e1de"/><rect x="568.2" y="268.9" width="4.4" height="4.9" fill="#e3e1de"/><rect x="576.8" y="267.9" width="4.9" height="7.9" fill="#dddcd9"/><rect x="579.5" y="267.2" width="8.5" height="8.9" fill="#dfdedb"/><rect x="587.3" y="269.6" width="8.3" height="6.4" fill="#dddcd9"/><rect x="597.5" y="268.0" width="7.9" height="3.6" fill="#e1e0dd"/><rect x="604.3" y="267.3" width="3.5" height="5.6" fill="#e1e0dd"/><rect x="609.3" y="268.8" width="8.0" height="7.0" fill="#e1e0dd"/><rect x="616.1" y="269.9" width="6.0" height="7.7" fill="#e3e1de"/><rect x="624.7" y="267.2" width="5.9" height="6.5" fill="#e1e0dd"/><rect x="633.9" y="269.6" width="7.4" height="3.6" fill="#dddcd9"/><rect x="639.3" y="268.3" width="5.8" height="5.8" fill="#dddcd9"/><rect x="655.0" y="268.2" width="5.8" height="5.7" fill="#e3e1de"/><rect x="660.8" y="269.2" width="4.0" height="6.4" fill="#dfdedb"/><rect x="664.8" y="270.7" width="5.8" height="8.4" fill="#e3e1de"/><rect x="672.9" y="270.3" width="4.5" height="7.7" fill="#dfdedb"/><rect x="676.7" y="268.3" width="4.7" height="7.5" fill="#e3e1de"/><rect x="684.2" y="267.6" width="7.9" height="6.8" fill="#e3e1de"/><rect x="689.2" y="269.9" width="5.1" height="6.2" fill="#e3e1de"/><rect x="694.8" y="269.4" width="7.1" height="6.3" fill="#dddcd9"/><rect x="700.2" y="268.4" width="6.2" height="4.7" fill="#dfdedb"/><rect x="711.5" y="267.3" width="5.0" height="3.5" fill="#dddcd9"/><rect x="718.8" y="270.5" width="6.3" height="8.0" fill="#dddcd9"/><rect x="731.8" y="270.7" width="6.0" height="6.7" fill="#dddcd9"/><rect x="735.9" y="268.0" width="7.9" height="9.4" fill="#dfdedb"/><rect x="753.0" y="270.9" width="9.4" height="8.9" fill="#e3e1de"/><rect x="762.1" y="268.6" width="6.3" height="5.3" fill="#dfdedb"/><rect x="765.4" y="269.7" width="7.4" height="6.4" fill="#e3e1de"/><rect x="773.2" y="268.0" width="6.6" height="4.4" fill="#e1e0dd"/><rect x="786.2" y="270.8" width="5.4" height="4.5" fill="#dddcd9"/><rect x="465.9" y="274.5" width="4.7" height="6.7" fill="#dfdedb"/><rect x="491.1" y="276.9" width="8.3" height="3.6" fill="#dddcd9"/><rect x="502.2" y="276.5" width="8.9" height="4.7" fill="#dfdedb"/><rect x="507.6" y="273.9" width="5.2" height="7.3" fill="#e1e0dd"/><rect x="514.5" y="274.0" width="3.6" height="5.2" fill="#e3e1de"/><rect x="521.9" y="276.5" width="7.9" height="5.1" fill="#e1e0dd"/><rect x="528.3" y="275.1" width="6.8" height="4.0" fill="#dfdedb"/><rect x="532.9" y="275.5" width="3.7" height="6.5" fill="#e3e1de"/><rect x="543.9" y="273.1" width="8.7" height="9.5" fill="#dfdedb"/><rect x="552.9" y="273.1" width="5.2" height="5.0" fill="#e1e0dd"/><rect x="562.1" y="276.9" width="7.5" height="5.7" fill="#dfdedb"/><rect x="569.8" y="276.3" width="7.0" height="5.6" fill="#dddcd9"/><rect x="585.8" y="276.6" width="8.8" height="8.4" fill="#dfdedb"/><rect x="597.7" y="274.4" width="4.5" height="8.3" fill="#dfdedb"/><rect x="613.0" y="275.5" width="6.0" height="7.7" fill="#dddcd9"/><rect x="615.5" y="276.8" width="6.1" height="4.9" fill="#dddcd9"/><rect x="623.6" y="276.6" width="3.6" height="6.7" fill="#e1e0dd"/><rect x="629.2" y="275.6" width="7.2" height="7.2" fill="#dfdedb"/><rect x="635.0" y="275.5" width="3.8" height="7.6" fill="#dddcd9"/><rect x="643.0" y="275.3" width="5.0" height="7.5" fill="#dfdedb"/><rect x="646.9" y="276.7" width="8.3" height="5.3" fill="#e1e0dd"/><rect x="653.1" y="276.3" width="4.4" height="7.0" fill="#dfdedb"/><rect x="660.8" y="273.2" width="8.6" height="6.0" fill="#e1e0dd"/><rect x="689.0" y="275.4" width="7.3" height="6.7" fill="#e3e1de"/><rect x="693.2" y="273.8" width="9.4" height="4.2" fill="#dfdedb"/><rect x="708.2" y="276.6" width="6.5" height="6.5" fill="#e1e0dd"/><rect x="712.9" y="276.2" width="9.0" height="4.6" fill="#dddcd9"/><rect x="719.8" y="276.6" width="5.8" height="7.3" fill="#dddcd9"/><rect x="742.4" y="276.0" width="6.4" height="4.2" fill="#dfdedb"/><rect x="748.5" y="275.7" width="8.4" height="5.1" fill="#dddcd9"/><rect x="756.7" y="275.4" width="6.3" height="5.8" fill="#e3e1de"/><rect x="802.5" y="276.4" width="9.0" height="4.0" fill="#dddcd9"/><rect x="495.2" y="281.3" width="8.7" height="6.7" fill="#e3e1de"/><rect x="501.1" y="281.4" width="9.5" height="7.9" fill="#e1e0dd"/><rect x="508.0" y="280.7" width="8.7" height="4.4" fill="#dddcd9"/><rect x="520.1" y="282.3" width="5.1" height="9.1" fill="#e1e0dd"/><rect x="528.2" y="279.8" width="5.7" height="3.9" fill="#dfdedb"/><rect x="544.6" y="282.3" width="4.2" height="8.1" fill="#e3e1de"/><rect x="556.9" y="280.1" width="8.5" height="4.5" fill="#dddcd9"/><rect x="561.9" y="279.3" width="7.3" height="6.4" fill="#e3e1de"/><rect x="568.0" y="279.8" width="6.6" height="7.5" fill="#e3e1de"/><rect x="573.2" y="282.9" width="7.2" height="5.1" fill="#dddcd9"/><rect x="581.3" y="281.8" width="8.3" height="5.7" fill="#dddcd9"/><rect x="587.1" y="279.6" width="8.2" height="5.4" fill="#e3e1de"/><rect x="598.9" y="280.2" width="3.9" height="9.2" fill="#e1e0dd"/><rect x="605.8" y="279.8" width="3.8" height="8.9" fill="#e3e1de"/><rect x="609.7" y="281.3" width="3.8" height="7.1" fill="#dddcd9"/><rect x="616.0" y="282.5" width="5.2" height="4.7" fill="#e3e1de"/><rect x="640.7" y="281.7" width="8.7" height="7.7" fill="#dddcd9"/><rect x="648.5" y="279.4" width="7.1" height="3.8" fill="#dddcd9"/><rect x="672.0" y="282.2" width="6.9" height="3.9" fill="#e1e0dd"/><rect x="677.8" y="282.0" width="6.5" height="8.1" fill="#e1e0dd"/><rect x="681.9" y="280.5" width="8.9" height="8.8" fill="#dfdedb"/><rect x="687.3" y="282.3" width="8.7" height="6.1" fill="#dddcd9"/><rect x="695.8" y="283.0" width="6.6" height="5.5" fill="#dfdedb"/><rect x="700.9" y="281.6" width="3.9" height="4.3" fill="#dddcd9"/><rect x="708.9" y="282.9" width="4.8" height="6.6" fill="#e1e0dd"/><rect x="714.0" y="280.6" width="5.9" height="9.1" fill="#e3e1de"/><rect x="735.3" y="282.3" width="3.7" height="6.3" fill="#dddcd9"/><rect x="743.9" y="281.9" width="5.0" height="8.6" fill="#dfdedb"/><rect x="768.2" y="281.3" width="8.2" height="8.2" fill="#dfdedb"/><rect x="804.7" y="279.5" width="8.6" height="4.4" fill="#e1e0dd"/><rect x="514.2" y="286.5" width="7.0" height="9.2" fill="#e1e0dd"/><rect x="537.5" y="285.6" width="7.9" height="9.4" fill="#dfdedb"/><rect x="545.0" y="285.4" width="9.3" height="7.4" fill="#dfdedb"/><rect x="552.1" y="287.8" width="5.0" height="4.8" fill="#e3e1de"/><rect x="556.1" y="286.4" width="5.2" height="7.8" fill="#e3e1de"/><rect x="564.3" y="287.5" width="5.7" height="8.0" fill="#dddcd9"/><rect x="568.7" y="287.4" width="9.1" height="6.5" fill="#dfdedb"/><rect x="575.1" y="288.7" width="7.7" height="7.2" fill="#dddcd9"/><rect x="581.4" y="288.6" width="4.6" height="3.8" fill="#e1e0dd"/><rect x="592.5" y="287.2" width="4.1" height="4.0" fill="#dddcd9"/><rect x="597.5" y="288.3" width="5.1" height="8.4" fill="#dddcd9"/><rect x="606.8" y="285.9" width="5.1" height="6.6" fill="#dddcd9"/><rect x="617.2" y="288.4" width="5.6" height="4.2" fill="#e3e1de"/><rect x="630.2" y="286.4" width="6.5" height="5.7" fill="#dddcd9"/><rect x="640.6" y="285.8" width="8.7" height="6.8" fill="#dddcd9"/><rect x="647.5" y="288.6" width="5.1" height="7.5" fill="#e3e1de"/><rect x="653.6" y="287.2" width="6.7" height="4.3" fill="#dddcd9"/><rect x="658.4" y="288.1" width="9.0" height="3.9" fill="#e1e0dd"/><rect x="666.3" y="286.7" width="9.3" height="6.2" fill="#e1e0dd"/><rect x="672.9" y="287.4" width="6.9" height="7.0" fill="#dddcd9"/><rect x="675.5" y="286.5" width="5.0" height="5.4" fill="#dfdedb"/><rect x="683.0" y="288.6" width="4.7" height="7.5" fill="#dddcd9"/><rect x="702.0" y="288.0" width="4.8" height="9.2" fill="#e3e1de"/><rect x="706.1" y="289.0" width="3.7" height="8.9" fill="#e3e1de"/><rect x="713.4" y="285.5" width="5.1" height="5.0" fill="#e1e0dd"/><rect x="718.5" y="288.1" width="5.5" height="5.3" fill="#dddcd9"/><rect x="724.0" y="287.3" width="6.5" height="8.1" fill="#dfdedb"/><rect x="731.7" y="287.2" width="4.4" height="5.8" fill="#dddcd9"/><rect x="744.1" y="287.2" width="8.5" height="9.1" fill="#e1e0dd"/><rect x="747.2" y="287.7" width="3.5" height="8.4" fill="#e1e0dd"/><rect x="765.2" y="286.1" width="8.0" height="8.5" fill="#e1e0dd"/><rect x="777.9" y="285.5" width="4.3" height="7.7" fill="#dfdedb"/><rect x="527.1" y="293.5" width="4.0" height="8.1" fill="#dddcd9"/><rect x="551.8" y="291.8" width="7.9" height="5.0" fill="#e3e1de"/><rect x="556.0" y="294.4" width="6.9" height="4.6" fill="#dddcd9"/><rect x="568.8" y="292.9" width="5.5" height="7.0" fill="#dddcd9"/><rect x="581.1" y="291.8" width="4.8" height="4.3" fill="#e1e0dd"/><rect x="593.9" y="294.9" width="6.6" height="7.0" fill="#dfdedb"/><rect x="598.2" y="293.0" width="9.2" height="4.4" fill="#dddcd9"/><rect x="604.5" y="291.6" width="4.5" height="5.5" fill="#dfdedb"/><rect x="610.1" y="291.4" width="5.7" height="5.7" fill="#e3e1de"/><rect x="618.9" y="293.4" width="8.0" height="5.6" fill="#dddcd9"/><rect x="622.1" y="291.7" width="7.8" height="8.8" fill="#dddcd9"/><rect x="639.6" y="292.8" width="3.6" height="6.3" fill="#dddcd9"/><rect x="645.4" y="295.0" width="4.4" height="4.0" fill="#dfdedb"/><rect x="653.4" y="292.3" width="5.7" height="6.8" fill="#e3e1de"/><rect x="657.2" y="294.3" width="8.1" height="6.3" fill="#dfdedb"/><rect x="664.4" y="294.7" width="8.0" height="8.2" fill="#e1e0dd"/><rect x="670.3" y="294.6" width="5.7" height="4.4" fill="#e3e1de"/><rect x="677.9" y="294.0" width="7.8" height="7.9" fill="#e1e0dd"/><rect x="681.8" y="293.0" width="9.3" height="4.3" fill="#e1e0dd"/><rect x="688.0" y="293.4" width="9.3" height="7.4" fill="#dddcd9"/><rect x="693.6" y="291.6" width="7.0" height="6.8" fill="#e3e1de"/><rect x="699.1" y="294.6" width="6.6" height="4.4" fill="#e3e1de"/><rect x="706.3" y="294.2" width="7.3" height="4.7" fill="#dfdedb"/><rect x="713.8" y="291.6" width="8.2" height="7.8" fill="#dddcd9"/><rect x="726.4" y="293.5" width="7.6" height="8.8" fill="#e1e0dd"/><rect x="730.6" y="292.4" width="4.8" height="4.1" fill="#e1e0dd"/><rect x="738.0" y="293.5" width="3.8" height="4.7" fill="#e3e1de"/><rect x="749.7" y="294.9" width="6.3" height="4.3" fill="#e3e1de"/><rect x="756.5" y="291.3" width="4.7" height="4.5" fill="#e1e0dd"/><rect x="484.1" y="298.3" width="7.5" height="4.3" fill="#dfdedb"/><rect x="520.7" y="297.9" width="7.0" height="5.0" fill="#dddcd9"/><rect x="528.9" y="300.6" width="7.0" height="8.3" fill="#e1e0dd"/><rect x="534.4" y="300.0" width="6.9" height="4.5" fill="#e3e1de"/><rect x="537.7" y="297.2" width="8.8" height="4.2" fill="#e3e1de"/><rect x="545.8" y="298.1" width="9.3" height="5.7" fill="#e1e0dd"/><rect x="551.2" y="297.4" width="9.0" height="8.2" fill="#e1e0dd"/><rect x="569.8" y="299.9" width="8.3" height="8.2" fill="#e3e1de"/><rect x="574.0" y="299.1" width="9.1" height="8.3" fill="#e1e0dd"/><rect x="579.2" y="299.9" width="7.2" height="4.1" fill="#e1e0dd"/><rect x="594.7" y="300.2" width="5.4" height="4.2" fill="#e1e0dd"/><rect x="599.3" y="299.5" width="6.0" height="3.5" fill="#dddcd9"/><rect x="605.0" y="297.6" width="3.9" height="4.4" fill="#dfdedb"/><rect x="611.7" y="300.0" width="3.6" height="7.4" fill="#e3e1de"/><rect x="622.5" y="298.9" width="8.9" height="9.4" fill="#dfdedb"/><rect x="628.8" y="298.5" width="7.3" height="5.8" fill="#e1e0dd"/><rect x="635.4" y="297.0" width="4.5" height="8.4" fill="#e1e0dd"/><rect x="659.1" y="297.8" width="9.1" height="6.9" fill="#dddcd9"/><rect x="665.8" y="300.9" width="8.4" height="7.1" fill="#dddcd9"/><rect x="672.7" y="300.6" width="8.3" height="7.8" fill="#dfdedb"/><rect x="684.5" y="297.6" width="9.3" height="5.7" fill="#e3e1de"/><rect x="702.5" y="298.3" width="3.5" height="4.1" fill="#e3e1de"/><rect x="708.8" y="297.3" width="6.0" height="7.3" fill="#e3e1de"/><rect x="713.9" y="297.9" width="8.0" height="6.0" fill="#dddcd9"/><rect x="719.4" y="299.4" width="6.9" height="8.9" fill="#e3e1de"/><rect x="723.1" y="299.0" width="8.1" height="7.2" fill="#dddcd9"/><rect x="736.4" y="299.8" width="4.0" height="8.4" fill="#e1e0dd"/><rect x="744.9" y="298.8" width="4.1" height="5.3" fill="#dddcd9"/><rect x="750.7" y="299.8" width="5.2" height="7.2" fill="#dfdedb"/><rect x="761.7" y="300.1" width="7.3" height="5.0" fill="#e1e0dd"/><rect x="768.3" y="299.8" width="5.7" height="4.4" fill="#dfdedb"/><rect x="515.7" y="305.6" width="4.3" height="3.8" fill="#e1e0dd"/><rect x="522.9" y="307.0" width="7.0" height="8.5" fill="#dddcd9"/><rect x="526.8" y="305.9" width="6.4" height="8.0" fill="#dfdedb"/><rect x="538.7" y="305.7" width="4.2" height="6.4" fill="#e3e1de"/><rect x="546.0" y="304.3" width="6.6" height="5.6" fill="#e1e0dd"/><rect x="549.9" y="306.7" width="4.3" height="6.4" fill="#dddcd9"/><rect x="564.5" y="303.4" width="6.6" height="4.1" fill="#dddcd9"/><rect x="569.4" y="303.2" width="5.9" height="7.1" fill="#e3e1de"/><rect x="573.3" y="306.7" width="7.4" height="7.8" fill="#e1e0dd"/><rect x="594.7" y="305.7" width="4.3" height="6.1" fill="#dfdedb"/><rect x="597.4" y="305.4" width="7.3" height="6.1" fill="#dddcd9"/><rect x="606.1" y="306.4" width="8.2" height="6.9" fill="#e1e0dd"/><rect x="610.5" y="306.3" width="4.4" height="6.2" fill="#e1e0dd"/><rect x="615.9" y="304.5" width="9.5" height="6.0" fill="#dfdedb"/><rect x="629.0" y="304.0" width="4.2" height="5.8" fill="#dfdedb"/><rect x="633.6" y="304.8" width="7.1" height="4.7" fill="#e3e1de"/><rect x="639.9" y="304.6" width="7.3" height="6.1" fill="#e1e0dd"/><rect x="659.0" y="303.5" width="6.2" height="8.5" fill="#e1e0dd"/><rect x="672.0" y="304.6" width="9.4" height="8.2" fill="#dddcd9"/><rect x="676.8" y="304.9" width="7.8" height="7.5" fill="#e3e1de"/><rect x="684.9" y="305.4" width="7.6" height="9.5" fill="#dddcd9"/><rect x="688.1" y="306.6" width="4.7" height="6.6" fill="#dfdedb"/><rect x="694.0" y="306.0" width="7.4" height="7.2" fill="#dfdedb"/><rect x="699.5" y="305.5" width="6.8" height="6.5" fill="#dfdedb"/><rect x="707.8" y="303.1" width="6.7" height="4.0" fill="#e3e1de"/><rect x="726.2" y="304.7" width="7.3" height="4.2" fill="#dfdedb"/><rect x="729.3" y="304.0" width="8.7" height="4.7" fill="#e1e0dd"/><rect x="742.1" y="303.7" width="5.4" height="8.1" fill="#dfdedb"/><rect x="747.0" y="304.3" width="7.8" height="7.1" fill="#dddcd9"/><rect x="759.9" y="306.6" width="5.6" height="5.6" fill="#e1e0dd"/><rect x="768.2" y="306.1" width="5.3" height="5.1" fill="#e1e0dd"/><rect x="797.0" y="306.6" width="6.6" height="8.8" fill="#e3e1de"/><rect x="292.2" y="312.5" width="5.0" height="9.0" fill="#dddcd9"/><rect x="489.8" y="311.3" width="4.0" height="5.1" fill="#dddcd9"/><rect x="509.7" y="312.1" width="5.8" height="4.2" fill="#dfdedb"/><rect x="515.7" y="312.0" width="5.9" height="3.6" fill="#e1e0dd"/><rect x="520.2" y="310.7" width="6.1" height="5.5" fill="#e3e1de"/><rect x="540.4" y="309.9" width="6.5" height="5.5" fill="#e1e0dd"/><rect x="546.6" y="310.1" width="5.0" height="6.8" fill="#dddcd9"/><rect x="552.1" y="311.3" width="8.4" height="4.7" fill="#e3e1de"/><rect x="557.6" y="312.7" width="3.8" height="7.3" fill="#e3e1de"/><rect x="561.8" y="309.8" width="9.1" height="5.7" fill="#dfdedb"/><rect x="569.1" y="312.3" width="9.4" height="8.8" fill="#e1e0dd"/><rect x="575.2" y="310.3" width="4.3" height="4.5" fill="#dfdedb"/><rect x="580.3" y="309.2" width="9.2" height="5.5" fill="#e3e1de"/><rect x="587.7" y="309.1" width="4.6" height="9.5" fill="#e3e1de"/><rect x="598.6" y="310.8" width="5.6" height="7.3" fill="#e1e0dd"/><rect x="604.1" y="312.6" width="8.8" height="8.8" fill="#dddcd9"/><rect x="612.7" y="310.5" width="8.6" height="4.9" fill="#dfdedb"/><rect x="615.8" y="312.8" width="4.7" height="7.7" fill="#dfdedb"/><rect x="623.1" y="311.5" width="8.1" height="5.3" fill="#e1e0dd"/><rect x="635.6" y="312.4" width="6.8" height="8.7" fill="#dfdedb"/><rect x="640.8" y="311.1" width="4.8" height="5.4" fill="#e1e0dd"/><rect x="646.3" y="311.8" width="5.8" height="5.9" fill="#e3e1de"/><rect x="653.9" y="311.6" width="4.9" height="5.9" fill="#dfdedb"/><rect x="663.9" y="312.5" width="6.8" height="8.7" fill="#dddcd9"/><rect x="678.2" y="312.4" width="9.3" height="8.7" fill="#dddcd9"/><rect x="682.9" y="311.5" width="4.5" height="6.6" fill="#e1e0dd"/><rect x="688.8" y="310.2" width="3.8" height="3.7" fill="#e3e1de"/><rect x="696.0" y="312.5" width="5.8" height="9.0" fill="#e1e0dd"/><rect x="700.4" y="310.4" width="4.4" height="8.3" fill="#dfdedb"/><rect x="708.9" y="310.3" width="8.3" height="7.6" fill="#dfdedb"/><rect x="714.3" y="309.3" width="8.1" height="4.2" fill="#dddcd9"/><rect x="720.5" y="309.2" width="3.9" height="3.9" fill="#e1e0dd"/><rect x="724.8" y="310.9" width="7.4" height="6.2" fill="#dfdedb"/><rect x="732.0" y="310.2" width="6.0" height="3.9" fill="#dfdedb"/><rect x="744.3" y="309.4" width="9.0" height="3.6" fill="#dddcd9"/><rect x="750.1" y="309.9" width="4.9" height="6.5" fill="#e1e0dd"/><rect x="306.9" y="316.3" width="4.9" height="5.9" fill="#e1e0dd"/><rect x="495.5" y="318.4" width="8.6" height="4.8" fill="#e3e1de"/><rect x="508.7" y="317.0" width="8.1" height="4.5" fill="#dfdedb"/><rect x="527.4" y="317.9" width="5.7" height="8.4" fill="#e1e0dd"/><rect x="534.5" y="317.1" width="4.7" height="4.3" fill="#e3e1de"/><rect x="540.8" y="317.5" width="4.1" height="7.8" fill="#dddcd9"/><rect x="546.2" y="317.4" width="9.2" height="4.0" fill="#dddcd9"/><rect x="552.8" y="319.0" width="5.9" height="3.8" fill="#e1e0dd"/><rect x="556.7" y="315.0" width="9.4" height="5.8" fill="#dfdedb"/><rect x="563.3" y="318.1" width="7.0" height="7.2" fill="#e3e1de"/><rect x="574.4" y="315.2" width="5.1" height="9.3" fill="#e1e0dd"/><rect x="582.5" y="317.5" width="5.0" height="5.6" fill="#dddcd9"/><rect x="586.3" y="317.7" width="4.2" height="9.0" fill="#e3e1de"/><rect x="594.6" y="318.5" width="5.1" height="4.8" fill="#e3e1de"/><rect x="604.1" y="315.5" width="7.4" height="3.7" fill="#dfdedb"/><rect x="610.5" y="317.8" width="7.4" height="4.8" fill="#dfdedb"/><rect x="618.6" y="315.3" width="4.6" height="6.0" fill="#e3e1de"/><rect x="623.0" y="317.2" width="3.7" height="5.3" fill="#dfdedb"/><rect x="630.1" y="315.2" width="7.7" height="5.7" fill="#dddcd9"/><rect x="633.1" y="317.2" width="7.9" height="5.4" fill="#e1e0dd"/><rect x="640.8" y="316.4" width="6.9" height="4.8" fill="#dddcd9"/><rect x="648.2" y="318.0" width="3.8" height="8.9" fill="#dfdedb"/><rect x="663.4" y="315.9" width="3.6" height="4.4" fill="#dfdedb"/><rect x="671.5" y="317.8" width="8.5" height="5.8" fill="#e1e0dd"/><rect x="683.5" y="317.7" width="9.0" height="8.9" fill="#e1e0dd"/><rect x="688.4" y="317.2" width="6.6" height="7.0" fill="#dddcd9"/><rect x="693.2" y="316.2" width="4.4" height="6.2" fill="#e3e1de"/><rect x="726.0" y="316.6" width="4.6" height="7.7" fill="#dfdedb"/><rect x="741.9" y="318.4" width="8.5" height="8.8" fill="#dddcd9"/><rect x="759.2" y="316.9" width="9.4" height="8.0" fill="#dfdedb"/><rect x="807.3" y="318.5" width="9.3" height="4.6" fill="#dfdedb"/><rect x="525.0" y="322.1" width="5.5" height="6.5" fill="#e3e1de"/><rect x="534.6" y="323.6" width="4.1" height="3.6" fill="#e1e0dd"/><rect x="538.7" y="323.9" width="8.4" height="6.2" fill="#e1e0dd"/><rect x="546.2" y="323.9" width="6.9" height="6.8" fill="#dddcd9"/><rect x="550.1" y="323.5" width="4.2" height="6.6" fill="#dddcd9"/><rect x="563.0" y="321.7" width="9.5" height="6.2" fill="#dfdedb"/><rect x="567.2" y="321.7" width="9.4" height="7.8" fill="#e3e1de"/><rect x="581.7" y="324.7" width="7.2" height="8.6" fill="#dfdedb"/><rect x="586.0" y="324.5" width="4.0" height="8.9" fill="#e1e0dd"/><rect x="593.0" y="321.5" width="8.1" height="4.8" fill="#dddcd9"/><rect x="600.9" y="323.5" width="6.1" height="3.6" fill="#dddcd9"/><rect x="603.3" y="324.8" width="9.3" height="4.6" fill="#e3e1de"/><rect x="609.8" y="321.2" width="6.3" height="8.5" fill="#e1e0dd"/><rect x="617.7" y="321.8" width="4.9" height="4.4" fill="#dfdedb"/><rect x="622.6" y="322.4" width="7.7" height="5.6" fill="#e3e1de"/><rect x="627.9" y="322.9" width="9.2" height="6.6" fill="#dddcd9"/><rect x="634.2" y="321.3" width="3.9" height="9.1" fill="#e3e1de"/><rect x="640.1" y="321.2" width="8.2" height="5.7" fill="#dddcd9"/><rect x="646.0" y="324.2" width="4.0" height="7.6" fill="#e3e1de"/><rect x="666.2" y="324.3" width="8.7" height="9.0" fill="#e1e0dd"/><rect x="669.3" y="324.5" width="6.2" height="9.3" fill="#dfdedb"/><rect x="684.5" y="322.2" width="8.1" height="3.7" fill="#dddcd9"/><rect x="696.4" y="321.5" width="8.5" height="3.5" fill="#e3e1de"/><rect x="702.7" y="322.5" width="4.5" height="6.6" fill="#dfdedb"/><rect x="718.6" y="322.8" width="6.3" height="7.3" fill="#dfdedb"/><rect x="725.2" y="321.1" width="4.9" height="6.2" fill="#dfdedb"/><rect x="731.8" y="323.5" width="7.4" height="8.6" fill="#e1e0dd"/><rect x="743.5" y="324.5" width="8.7" height="6.2" fill="#dfdedb"/><rect x="753.6" y="322.1" width="5.5" height="6.0" fill="#e3e1de"/><rect x="767.9" y="324.7" width="3.6" height="7.3" fill="#e1e0dd"/><rect x="791.7" y="321.3" width="5.4" height="5.5" fill="#e1e0dd"/><rect x="305.2" y="330.9" width="7.4" height="6.4" fill="#dfdedb"/><rect x="478.8" y="330.9" width="5.8" height="8.3" fill="#dfdedb"/><rect x="484.7" y="329.9" width="6.0" height="5.7" fill="#e3e1de"/><rect x="509.7" y="328.2" width="6.2" height="4.2" fill="#dfdedb"/><rect x="515.9" y="330.4" width="4.8" height="4.6" fill="#e3e1de"/><rect x="528.5" y="328.7" width="6.7" height="4.2" fill="#e3e1de"/><rect x="534.9" y="330.9" width="5.1" height="5.2" fill="#dddcd9"/><rect x="539.8" y="327.0" width="4.5" height="9.2" fill="#dddcd9"/><rect x="545.6" y="330.4" width="7.6" height="4.5" fill="#e3e1de"/><rect x="557.0" y="329.4" width="3.8" height="6.6" fill="#e3e1de"/><rect x="562.0" y="327.9" width="8.3" height="7.8" fill="#e3e1de"/><rect x="570.7" y="328.6" width="5.1" height="8.1" fill="#e1e0dd"/><rect x="575.1" y="329.3" width="3.6" height="7.7" fill="#dfdedb"/><rect x="581.2" y="329.6" width="9.2" height="8.7" fill="#dfdedb"/><rect x="592.4" y="328.8" width="4.3" height="4.3" fill="#e3e1de"/><rect x="597.3" y="328.8" width="6.3" height="9.2" fill="#dddcd9"/><rect x="610.0" y="329.2" width="3.7" height="3.8" fill="#e1e0dd"/><rect x="621.1" y="329.0" width="7.4" height="9.1" fill="#e1e0dd"/><rect x="627.6" y="330.0" width="7.9" height="8.0" fill="#dfdedb"/><rect x="633.5" y="327.7" width="5.3" height="7.3" fill="#dddcd9"/><rect x="642.3" y="329.3" width="5.0" height="7.0" fill="#e1e0dd"/><rect x="652.8" y="330.8" width="4.2" height="3.7" fill="#e1e0dd"/><rect x="657.9" y="328.8" width="4.9" height="5.8" fill="#e3e1de"/><rect x="665.5" y="330.2" width="6.6" height="4.8" fill="#e3e1de"/><rect x="670.2" y="327.6" width="8.9" height="3.6" fill="#e3e1de"/><rect x="675.9" y="328.8" width="6.7" height="6.4" fill="#e1e0dd"/><rect x="690.5" y="328.2" width="7.1" height="6.1" fill="#e3e1de"/><rect x="693.9" y="329.8" width="7.3" height="9.4" fill="#dddcd9"/><rect x="700.6" y="328.4" width="6.3" height="4.5" fill="#e1e0dd"/><rect x="707.9" y="327.9" width="3.8" height="4.2" fill="#dfdedb"/><rect x="717.2" y="330.6" width="6.2" height="7.9" fill="#dfdedb"/><rect x="723.3" y="328.8" width="6.1" height="3.7" fill="#dddcd9"/><rect x="732.3" y="327.3" width="6.4" height="5.5" fill="#dfdedb"/><rect x="748.5" y="330.7" width="8.4" height="4.9" fill="#e3e1de"/><rect x="519.2" y="336.2" width="8.6" height="5.5" fill="#dfdedb"/><rect x="533.8" y="333.9" width="3.7" height="5.9" fill="#e1e0dd"/><rect x="537.4" y="333.7" width="4.7" height="6.0" fill="#dddcd9"/><rect x="552.2" y="335.3" width="4.0" height="9.3" fill="#dddcd9"/><rect x="555.5" y="334.4" width="7.4" height="8.4" fill="#e3e1de"/><rect x="564.9" y="336.3" width="4.2" height="7.4" fill="#dddcd9"/><rect x="567.1" y="336.5" width="7.6" height="7.4" fill="#e1e0dd"/><rect x="574.3" y="335.3" width="7.0" height="7.8" fill="#dfdedb"/><rect x="580.0" y="334.6" width="4.2" height="4.3" fill="#e1e0dd"/><rect x="591.9" y="333.0" width="4.7" height="6.7" fill="#e3e1de"/><rect x="598.7" y="335.6" width="8.7" height="8.0" fill="#dfdedb"/><rect x="603.2" y="336.6" width="6.8" height="4.5" fill="#dfdedb"/><rect x="610.9" y="336.7" width="5.4" height="8.7" fill="#dddcd9"/><rect x="618.8" y="336.8" width="6.5" height="4.8" fill="#dddcd9"/><rect x="624.4" y="334.8" width="7.3" height="4.3" fill="#e1e0dd"/><rect x="631.0" y="333.3" width="8.9" height="4.9" fill="#dddcd9"/><rect x="634.7" y="335.4" width="8.5" height="4.4" fill="#dfdedb"/><rect x="639.2" y="334.2" width="5.8" height="7.5" fill="#e1e0dd"/><rect x="646.0" y="336.3" width="6.5" height="8.3" fill="#e1e0dd"/><rect x="654.8" y="334.8" width="7.4" height="8.9" fill="#dfdedb"/><rect x="660.0" y="334.0" width="6.3" height="5.0" fill="#dddcd9"/><rect x="665.0" y="333.3" width="6.8" height="5.2" fill="#dfdedb"/><rect x="671.4" y="336.1" width="5.9" height="7.7" fill="#dddcd9"/><rect x="683.5" y="333.0" width="7.7" height="4.8" fill="#dfdedb"/><rect x="688.2" y="334.9" width="9.3" height="8.7" fill="#dfdedb"/><rect x="694.4" y="336.6" width="6.0" height="8.6" fill="#e1e0dd"/><rect x="699.5" y="336.4" width="4.6" height="3.8" fill="#e3e1de"/><rect x="713.0" y="333.6" width="4.9" height="5.1" fill="#e3e1de"/><rect x="720.4" y="336.6" width="7.0" height="6.6" fill="#e1e0dd"/><rect x="729.1" y="334.3" width="8.7" height="6.6" fill="#e3e1de"/><rect x="736.7" y="335.3" width="4.2" height="9.4" fill="#dddcd9"/><rect x="744.6" y="335.3" width="5.6" height="8.1" fill="#dfdedb"/><rect x="747.6" y="333.2" width="8.9" height="9.0" fill="#e1e0dd"/><rect x="756.3" y="334.9" width="5.0" height="5.0" fill="#e1e0dd"/><rect x="767.7" y="334.9" width="6.7" height="8.7" fill="#e1e0dd"/><rect x="771.1" y="333.4" width="4.8" height="5.7" fill="#e3e1de"/><rect x="525.4" y="340.0" width="4.5" height="4.9" fill="#dfdedb"/><rect x="533.7" y="340.7" width="6.8" height="7.3" fill="#dddcd9"/><rect x="538.3" y="342.1" width="5.3" height="5.7" fill="#dfdedb"/><rect x="551.5" y="341.0" width="9.3" height="7.8" fill="#e1e0dd"/><rect x="558.7" y="340.4" width="8.1" height="5.5" fill="#dfdedb"/><rect x="561.9" y="339.5" width="4.0" height="5.0" fill="#e3e1de"/><rect x="569.8" y="339.3" width="7.3" height="8.8" fill="#dddcd9"/><rect x="582.4" y="342.7" width="8.4" height="9.0" fill="#dddcd9"/><rect x="588.6" y="340.4" width="4.1" height="6.0" fill="#e3e1de"/><rect x="591.5" y="339.2" width="7.0" height="5.3" fill="#e1e0dd"/><rect x="616.6" y="342.2" width="5.4" height="6.5" fill="#dddcd9"/><rect x="621.1" y="340.8" width="4.8" height="6.9" fill="#e3e1de"/><rect x="629.5" y="340.4" width="5.0" height="8.8" fill="#dfdedb"/><rect x="634.8" y="340.4" width="3.6" height="5.7" fill="#e3e1de"/><rect x="639.4" y="340.2" width="4.1" height="4.8" fill="#dfdedb"/><rect x="647.6" y="339.6" width="4.3" height="8.6" fill="#e1e0dd"/><rect x="651.4" y="343.0" width="6.1" height="5.0" fill="#dddcd9"/><rect x="659.4" y="342.8" width="7.5" height="4.8" fill="#e3e1de"/><rect x="664.2" y="342.1" width="5.7" height="5.5" fill="#e3e1de"/><rect x="672.9" y="342.6" width="6.6" height="5.1" fill="#e3e1de"/><rect x="677.7" y="342.3" width="9.5" height="4.0" fill="#dfdedb"/><rect x="681.1" y="339.5" width="3.7" height="5.6" fill="#dddcd9"/><rect x="691.0" y="339.1" width="9.2" height="5.5" fill="#dddcd9"/><rect x="695.4" y="343.0" width="6.2" height="8.1" fill="#e1e0dd"/><rect x="706.2" y="339.3" width="6.3" height="4.4" fill="#e3e1de"/><rect x="720.1" y="342.3" width="3.8" height="5.7" fill="#dddcd9"/><rect x="724.4" y="339.6" width="7.0" height="9.4" fill="#e1e0dd"/><rect x="732.6" y="339.4" width="4.7" height="4.4" fill="#e3e1de"/><rect x="738.1" y="342.5" width="6.6" height="6.2" fill="#dddcd9"/><rect x="755.1" y="340.4" width="4.3" height="6.5" fill="#e1e0dd"/><rect x="791.3" y="342.4" width="5.6" height="8.7" fill="#dfdedb"/><rect x="497.4" y="347.2" width="5.4" height="3.5" fill="#e1e0dd"/><rect x="522.6" y="345.9" width="7.9" height="6.8" fill="#dddcd9"/><rect x="532.3" y="348.1" width="3.9" height="6.2" fill="#dfdedb"/><rect x="537.2" y="346.5" width="3.8" height="3.8" fill="#dddcd9"/><rect x="543.6" y="347.1" width="3.6" height="7.3" fill="#dddcd9"/><rect x="552.0" y="346.4" width="5.0" height="4.0" fill="#dddcd9"/><rect x="557.6" y="346.3" width="7.5" height="6.4" fill="#e1e0dd"/><rect x="563.6" y="346.1" width="8.7" height="7.5" fill="#dddcd9"/><rect x="573.2" y="347.6" width="8.1" height="4.7" fill="#e1e0dd"/><rect x="580.6" y="345.5" width="6.6" height="3.6" fill="#dfdedb"/><rect x="591.7" y="348.5" width="9.1" height="9.0" fill="#e3e1de"/><rect x="600.5" y="346.2" width="4.4" height="7.2" fill="#e3e1de"/><rect x="604.2" y="345.7" width="4.3" height="7.7" fill="#e3e1de"/><rect x="610.2" y="346.6" width="6.1" height="8.5" fill="#e3e1de"/><rect x="622.5" y="346.9" width="9.4" height="3.8" fill="#e1e0dd"/><rect x="627.7" y="345.8" width="9.1" height="8.5" fill="#dfdedb"/><rect x="641.8" y="345.2" width="3.6" height="8.7" fill="#e1e0dd"/><rect x="648.7" y="346.7" width="9.4" height="6.9" fill="#dddcd9"/><rect x="666.1" y="347.0" width="7.0" height="6.8" fill="#dddcd9"/><rect x="670.1" y="345.7" width="7.1" height="4.8" fill="#e1e0dd"/><rect x="675.5" y="348.9" width="4.3" height="8.4" fill="#dddcd9"/><rect x="688.8" y="346.0" width="4.1" height="8.9" fill="#e1e0dd"/><rect x="696.1" y="346.5" width="6.7" height="7.6" fill="#e3e1de"/><rect x="700.2" y="346.1" width="6.2" height="4.3" fill="#dddcd9"/><rect x="708.2" y="345.7" width="8.0" height="8.6" fill="#dddcd9"/><rect x="717.3" y="347.2" width="5.3" height="6.2" fill="#e1e0dd"/><rect x="732.3" y="347.7" width="5.1" height="4.8" fill="#dfdedb"/><rect x="742.6" y="346.9" width="3.8" height="6.9" fill="#e3e1de"/><rect x="748.4" y="347.3" width="5.1" height="6.8" fill="#dddcd9"/><rect x="765.1" y="347.1" width="6.0" height="5.7" fill="#e1e0dd"/><rect x="497.2" y="351.4" width="9.2" height="8.7" fill="#dfdedb"/><rect x="503.2" y="352.0" width="6.1" height="5.7" fill="#e1e0dd"/><rect x="519.1" y="352.6" width="3.5" height="9.4" fill="#dfdedb"/><rect x="539.4" y="353.5" width="9.0" height="6.5" fill="#e1e0dd"/><rect x="544.0" y="353.5" width="6.2" height="8.7" fill="#e1e0dd"/><rect x="558.9" y="352.2" width="3.9" height="8.7" fill="#e3e1de"/><rect x="567.7" y="351.4" width="8.3" height="8.5" fill="#e1e0dd"/><rect x="576.6" y="354.8" width="6.3" height="8.1" fill="#e3e1de"/><rect x="582.6" y="354.3" width="3.7" height="6.9" fill="#dfdedb"/><rect x="586.7" y="354.4" width="6.6" height="4.8" fill="#dddcd9"/><rect x="598.5" y="351.4" width="3.6" height="5.5" fill="#e3e1de"/><rect x="603.1" y="353.6" width="8.9" height="4.1" fill="#dddcd9"/><rect x="617.4" y="352.6" width="5.6" height="9.3" fill="#e1e0dd"/><rect x="623.3" y="354.6" width="8.6" height="4.0" fill="#dfdedb"/><rect x="628.2" y="354.2" width="5.1" height="3.8" fill="#dfdedb"/><rect x="636.2" y="351.4" width="9.2" height="4.6" fill="#dfdedb"/><rect x="642.5" y="353.5" width="7.7" height="7.0" fill="#e1e0dd"/><rect x="645.7" y="352.8" width="6.2" height="4.5" fill="#dddcd9"/><rect x="659.8" y="352.5" width="5.6" height="5.1" fill="#dfdedb"/><rect x="663.7" y="354.5" width="4.7" height="4.0" fill="#e3e1de"/><rect x="684.0" y="354.7" width="7.3" height="9.2" fill="#dfdedb"/><rect x="689.9" y="354.5" width="7.9" height="5.5" fill="#e1e0dd"/><rect x="695.1" y="351.8" width="5.2" height="7.7" fill="#e1e0dd"/><rect x="699.8" y="352.5" width="9.4" height="5.9" fill="#e3e1de"/><rect x="705.3" y="354.2" width="3.9" height="3.9" fill="#dfdedb"/><rect x="725.4" y="352.9" width="8.4" height="5.0" fill="#e1e0dd"/><rect x="732.8" y="353.8" width="6.0" height="4.0" fill="#e1e0dd"/><rect x="742.4" y="354.7" width="8.4" height="8.6" fill="#dddcd9"/><rect x="819.9" y="353.0" width="4.4" height="8.3" fill="#dddcd9"/><rect x="472.9" y="357.9" width="7.7" height="7.0" fill="#e3e1de"/><rect x="508.7" y="360.9" width="4.8" height="6.2" fill="#e3e1de"/><rect x="516.6" y="359.4" width="4.0" height="7.6" fill="#dfdedb"/><rect x="528.8" y="360.6" width="4.6" height="6.0" fill="#dddcd9"/><rect x="533.1" y="358.2" width="8.3" height="7.0" fill="#e3e1de"/><rect x="546.5" y="359.2" width="8.2" height="7.7" fill="#dddcd9"/><rect x="549.0" y="360.0" width="8.5" height="9.3" fill="#dfdedb"/><rect x="564.9" y="357.4" width="6.6" height="8.1" fill="#e3e1de"/><rect x="575.7" y="358.7" width="5.7" height="4.1" fill="#dddcd9"/><rect x="579.3" y="359.0" width="4.0" height="8.4" fill="#e3e1de"/><rect x="587.6" y="358.8" width="4.4" height="4.3" fill="#e1e0dd"/><rect x="598.1" y="357.5" width="5.6" height="4.0" fill="#e1e0dd"/><rect x="610.5" y="359.0" width="5.8" height="4.9" fill="#dfdedb"/><rect x="617.5" y="360.9" width="5.2" height="7.9" fill="#e3e1de"/><rect x="622.3" y="358.2" width="8.9" height="4.0" fill="#e1e0dd"/><rect x="628.7" y="360.4" width="4.4" height="7.9" fill="#e1e0dd"/><rect x="639.9" y="360.8" width="4.1" height="4.5" fill="#e3e1de"/><rect x="645.7" y="359.3" width="4.9" height="5.5" fill="#dddcd9"/><rect x="659.4" y="360.1" width="8.9" height="5.9" fill="#dddcd9"/><rect x="664.7" y="360.8" width="5.5" height="4.5" fill="#dfdedb"/><rect x="675.1" y="360.7" width="5.1" height="7.7" fill="#e1e0dd"/><rect x="682.5" y="359.5" width="6.0" height="9.2" fill="#dfdedb"/><rect x="687.4" y="357.9" width="4.3" height="3.6" fill="#e3e1de"/><rect x="699.6" y="357.4" width="4.7" height="6.7" fill="#e3e1de"/><rect x="707.5" y="359.1" width="6.3" height="6.2" fill="#dfdedb"/><rect x="717.9" y="359.0" width="8.3" height="7.1" fill="#e1e0dd"/><rect x="726.4" y="358.5" width="8.7" height="4.5" fill="#dddcd9"/><rect x="745.0" y="358.0" width="7.9" height="3.7" fill="#dddcd9"/><rect x="747.1" y="359.4" width="4.9" height="5.7" fill="#e3e1de"/><rect x="756.8" y="358.9" width="4.2" height="9.1" fill="#e1e0dd"/><rect x="781.0" y="357.1" width="4.5" height="8.1" fill="#e1e0dd"/><rect x="801.8" y="359.6" width="4.8" height="8.1" fill="#e3e1de"/><rect x="491.0" y="364.8" width="9.0" height="8.3" fill="#dfdedb"/><rect x="519.2" y="364.3" width="8.6" height="3.6" fill="#e1e0dd"/><rect x="531.2" y="366.6" width="6.6" height="8.6" fill="#e1e0dd"/><rect x="539.4" y="364.8" width="4.1" height="6.0" fill="#dfdedb"/><rect x="544.6" y="364.0" width="8.5" height="4.1" fill="#e3e1de"/><rect x="549.9" y="366.2" width="8.7" height="6.3" fill="#e3e1de"/><rect x="558.8" y="364.2" width="4.4" height="4.6" fill="#e1e0dd"/><rect x="564.0" y="366.9" width="3.7" height="5.7" fill="#e1e0dd"/><rect x="570.9" y="363.1" width="3.8" height="7.0" fill="#e3e1de"/><rect x="576.9" y="364.5" width="8.6" height="6.1" fill="#e1e0dd"/><rect x="580.3" y="363.1" width="7.7" height="8.6" fill="#e1e0dd"/><rect x="593.8" y="365.0" width="6.9" height="5.3" fill="#e1e0dd"/><rect x="599.9" y="364.9" width="7.1" height="4.3" fill="#dddcd9"/><rect x="615.0" y="365.0" width="4.3" height="5.5" fill="#dfdedb"/><rect x="624.9" y="364.2" width="9.2" height="3.5" fill="#dddcd9"/><rect x="628.8" y="365.0" width="3.9" height="7.5" fill="#dfdedb"/><rect x="635.6" y="365.2" width="3.7" height="5.7" fill="#e1e0dd"/><rect x="640.8" y="364.2" width="7.4" height="8.5" fill="#dfdedb"/><rect x="651.9" y="365.0" width="5.6" height="7.7" fill="#e3e1de"/><rect x="659.8" y="364.1" width="5.0" height="8.3" fill="#e3e1de"/><rect x="664.6" y="366.7" width="7.5" height="8.5" fill="#e3e1de"/><rect x="675.2" y="366.6" width="6.6" height="3.8" fill="#e3e1de"/><rect x="682.5" y="364.1" width="4.3" height="6.4" fill="#e1e0dd"/><rect x="687.3" y="365.3" width="4.8" height="5.8" fill="#dddcd9"/><rect x="701.4" y="366.3" width="4.9" height="9.0" fill="#e1e0dd"/><rect x="707.5" y="365.5" width="4.6" height="5.5" fill="#dddcd9"/><rect x="724.8" y="363.1" width="3.6" height="8.9" fill="#e1e0dd"/><rect x="729.0" y="364.0" width="7.5" height="6.9" fill="#dfdedb"/><rect x="747.0" y="366.4" width="5.5" height="6.1" fill="#e1e0dd"/><rect x="755.9" y="364.6" width="6.6" height="5.7" fill="#e1e0dd"/><rect x="815.1" y="365.3" width="4.1" height="7.4" fill="#dddcd9"/><rect x="489.5" y="370.6" width="5.5" height="3.8" fill="#dddcd9"/><rect x="527.5" y="371.9" width="9.3" height="6.8" fill="#e1e0dd"/><rect x="538.1" y="371.0" width="6.9" height="6.9" fill="#dddcd9"/><rect x="545.9" y="369.3" width="5.1" height="4.5" fill="#e3e1de"/><rect x="550.8" y="369.8" width="5.5" height="4.1" fill="#dddcd9"/><rect x="555.1" y="370.2" width="6.8" height="7.6" fill="#e3e1de"/><rect x="563.8" y="371.5" width="7.4" height="7.4" fill="#e3e1de"/><rect x="569.4" y="372.6" width="8.2" height="6.7" fill="#e3e1de"/><rect x="576.0" y="370.7" width="3.6" height="5.2" fill="#e3e1de"/><rect x="579.7" y="371.4" width="4.4" height="6.5" fill="#e3e1de"/><rect x="586.6" y="371.0" width="5.3" height="4.6" fill="#e3e1de"/><rect x="594.2" y="372.1" width="6.4" height="8.5" fill="#e1e0dd"/><rect x="599.3" y="369.5" width="5.1" height="8.4" fill="#e3e1de"/><rect x="605.3" y="372.5" width="7.0" height="3.5" fill="#e3e1de"/><rect x="609.2" y="371.9" width="4.7" height="6.6" fill="#dddcd9"/><rect x="618.2" y="369.1" width="3.5" height="3.7" fill="#e3e1de"/><rect x="621.2" y="372.1" width="9.0" height="7.0" fill="#dddcd9"/><rect x="629.3" y="372.2" width="6.6" height="8.8" fill="#dfdedb"/><rect x="637.0" y="371.5" width="7.0" height="3.7" fill="#dddcd9"/><rect x="642.1" y="369.2" width="4.4" height="5.1" fill="#dddcd9"/><rect x="647.3" y="369.7" width="5.9" height="7.2" fill="#e3e1de"/><rect x="654.1" y="371.9" width="8.0" height="6.4" fill="#e1e0dd"/><rect x="658.7" y="369.6" width="5.8" height="8.7" fill="#e3e1de"/><rect x="669.6" y="370.4" width="4.4" height="8.9" fill="#dfdedb"/><rect x="677.3" y="372.4" width="5.2" height="4.1" fill="#dddcd9"/><rect x="688.8" y="372.7" width="6.8" height="6.6" fill="#e3e1de"/><rect x="700.3" y="372.9" width="5.6" height="9.4" fill="#dfdedb"/><rect x="730.7" y="370.0" width="7.1" height="4.1" fill="#dfdedb"/><rect x="747.1" y="371.8" width="4.3" height="3.9" fill="#dddcd9"/><rect x="513.7" y="376.6" width="6.2" height="3.8" fill="#e3e1de"/><rect x="527.2" y="378.7" width="3.8" height="5.8" fill="#dfdedb"/><rect x="546.2" y="376.2" width="4.9" height="9.2" fill="#dddcd9"/><rect x="550.9" y="376.1" width="7.1" height="8.5" fill="#dfdedb"/><rect x="556.5" y="379.0" width="4.1" height="4.2" fill="#dddcd9"/><rect x="563.8" y="377.9" width="4.1" height="7.0" fill="#dddcd9"/><rect x="567.6" y="375.6" width="6.1" height="4.8" fill="#e3e1de"/><rect x="576.8" y="377.0" width="8.2" height="8.5" fill="#e3e1de"/><rect x="581.4" y="376.7" width="3.9" height="6.9" fill="#dddcd9"/><rect x="585.3" y="377.7" width="5.7" height="8.0" fill="#e1e0dd"/><rect x="592.9" y="376.0" width="5.6" height="5.8" fill="#e1e0dd"/><rect x="597.2" y="377.5" width="4.5" height="5.0" fill="#e1e0dd"/><rect x="603.1" y="376.8" width="5.8" height="4.3" fill="#e1e0dd"/><rect x="612.4" y="376.8" width="9.1" height="7.6" fill="#dfdedb"/><rect x="616.3" y="377.4" width="6.2" height="9.5" fill="#dddcd9"/><rect x="624.8" y="375.7" width="5.9" height="8.1" fill="#e1e0dd"/><rect x="634.2" y="378.3" width="6.1" height="8.6" fill="#e3e1de"/><rect x="640.9" y="377.0" width="5.0" height="4.0" fill="#e1e0dd"/><rect x="651.5" y="378.2" width="7.0" height="6.5" fill="#e3e1de"/><rect x="664.3" y="376.3" width="8.1" height="7.1" fill="#e1e0dd"/><rect x="670.5" y="376.3" width="6.5" height="5.0" fill="#e3e1de"/><rect x="675.8" y="375.7" width="5.3" height="8.4" fill="#e1e0dd"/><rect x="684.9" y="376.4" width="5.8" height="8.4" fill="#dddcd9"/><rect x="688.9" y="377.7" width="4.9" height="4.3" fill="#e3e1de"/><rect x="695.6" y="376.0" width="5.2" height="8.3" fill="#dfdedb"/><rect x="702.8" y="377.2" width="7.4" height="5.5" fill="#e1e0dd"/><rect x="706.1" y="375.4" width="5.4" height="5.1" fill="#e3e1de"/><rect x="719.5" y="375.9" width="9.2" height="6.6" fill="#dddcd9"/><rect x="726.8" y="377.3" width="6.0" height="6.1" fill="#dfdedb"/><rect x="732.5" y="378.6" width="7.5" height="3.6" fill="#e3e1de"/><rect x="736.2" y="376.5" width="7.0" height="4.6" fill="#dddcd9"/><rect x="761.3" y="377.0" width="7.3" height="6.7" fill="#dfdedb"/><rect x="780.8" y="378.4" width="6.8" height="4.2" fill="#e1e0dd"/><rect x="790.1" y="375.3" width="4.5" height="3.8" fill="#dfdedb"/><rect x="816.0" y="378.6" width="3.9" height="4.3" fill="#e1e0dd"/><rect x="501.2" y="384.4" width="4.9" height="5.7" fill="#e1e0dd"/><rect x="510.1" y="381.9" width="8.9" height="6.4" fill="#dddcd9"/><rect x="514.2" y="384.4" width="3.6" height="5.5" fill="#e3e1de"/><rect x="551.8" y="382.6" width="7.4" height="5.5" fill="#dddcd9"/><rect x="557.8" y="383.0" width="8.8" height="7.3" fill="#dddcd9"/><rect x="563.8" y="382.2" width="8.0" height="5.6" fill="#e3e1de"/><rect x="570.2" y="381.0" width="8.8" height="7.0" fill="#e1e0dd"/><rect x="577.0" y="382.3" width="6.8" height="4.2" fill="#e1e0dd"/><rect x="580.6" y="382.3" width="5.2" height="8.4" fill="#dddcd9"/><rect x="588.7" y="383.8" width="5.1" height="9.0" fill="#dfdedb"/><rect x="598.2" y="384.7" width="6.6" height="7.8" fill="#dfdedb"/><rect x="605.7" y="384.3" width="5.9" height="6.6" fill="#e3e1de"/><rect x="611.7" y="381.5" width="5.2" height="7.7" fill="#e3e1de"/><rect x="618.7" y="382.5" width="5.9" height="8.8" fill="#e3e1de"/><rect x="623.7" y="382.3" width="9.2" height="8.7" fill="#dfdedb"/><rect x="627.2" y="384.4" width="7.0" height="9.3" fill="#e3e1de"/><rect x="658.9" y="384.5" width="6.9" height="6.7" fill="#e1e0dd"/><rect x="665.2" y="381.4" width="7.0" height="3.6" fill="#dfdedb"/><rect x="676.2" y="383.7" width="6.3" height="8.3" fill="#e3e1de"/><rect x="684.9" y="382.2" width="4.2" height="8.2" fill="#dddcd9"/><rect x="696.8" y="382.8" width="6.7" height="8.0" fill="#dddcd9"/><rect x="702.3" y="381.8" width="5.7" height="4.2" fill="#dfdedb"/><rect x="707.3" y="384.4" width="6.5" height="9.3" fill="#dfdedb"/><rect x="724.6" y="381.2" width="5.2" height="5.1" fill="#dddcd9"/><rect x="731.2" y="383.3" width="7.0" height="3.5" fill="#dfdedb"/><rect x="735.6" y="383.0" width="6.1" height="8.0" fill="#dfdedb"/><rect x="743.6" y="382.6" width="8.7" height="6.0" fill="#dddcd9"/><rect x="748.5" y="383.4" width="4.2" height="7.3" fill="#dddcd9"/><rect x="760.9" y="381.8" width="8.2" height="5.0" fill="#dfdedb"/><rect x="768.2" y="382.1" width="5.8" height="9.4" fill="#dfdedb"/><rect x="786.3" y="384.0" width="6.1" height="3.6" fill="#dfdedb"/><rect x="790.5" y="383.3" width="7.9" height="5.0" fill="#dfdedb"/><rect x="796.8" y="384.9" width="9.1" height="8.8" fill="#e1e0dd"/><rect x="803.9" y="381.0" width="8.1" height="9.3" fill="#dddcd9"/><rect x="815.1" y="383.3" width="4.0" height="8.7" fill="#dddcd9"/><rect x="820.4" y="382.1" width="8.0" height="9.2" fill="#e3e1de"/><rect x="834.3" y="383.7" width="6.8" height="6.4" fill="#dfdedb"/><rect x="489.4" y="387.8" width="6.2" height="7.1" fill="#dddcd9"/><rect x="503.7" y="389.5" width="6.7" height="8.4" fill="#e1e0dd"/><rect x="527.2" y="388.8" width="8.7" height="4.0" fill="#e3e1de"/><rect x="532.1" y="391.0" width="6.8" height="7.7" fill="#e1e0dd"/><rect x="539.5" y="388.4" width="7.8" height="3.6" fill="#e1e0dd"/><rect x="549.5" y="389.8" width="7.0" height="5.2" fill="#e1e0dd"/><rect x="556.2" y="389.5" width="9.3" height="5.4" fill="#e3e1de"/><rect x="564.4" y="390.4" width="7.2" height="6.5" fill="#e1e0dd"/><rect x="579.7" y="388.8" width="8.0" height="3.9" fill="#dddcd9"/><rect x="591.6" y="388.6" width="9.0" height="9.2" fill="#dfdedb"/><rect x="599.4" y="390.4" width="6.8" height="4.2" fill="#dddcd9"/><rect x="604.5" y="388.3" width="9.3" height="7.4" fill="#e1e0dd"/><rect x="611.7" y="389.2" width="5.0" height="6.9" fill="#e3e1de"/><rect x="616.5" y="388.7" width="5.8" height="8.8" fill="#dddcd9"/><rect x="621.4" y="390.4" width="5.4" height="9.4" fill="#dddcd9"/><rect x="636.5" y="387.5" width="3.7" height="5.7" fill="#dfdedb"/><rect x="646.8" y="389.5" width="5.2" height="6.3" fill="#dddcd9"/><rect x="660.5" y="387.0" width="8.3" height="3.9" fill="#e1e0dd"/><rect x="664.2" y="387.6" width="6.4" height="7.7" fill="#dfdedb"/><rect x="669.5" y="390.2" width="8.9" height="9.4" fill="#dfdedb"/><rect x="687.9" y="388.5" width="5.0" height="7.5" fill="#e3e1de"/><rect x="693.8" y="390.4" width="6.7" height="7.6" fill="#dfdedb"/><rect x="701.3" y="389.1" width="4.1" height="6.7" fill="#e1e0dd"/><rect x="713.2" y="387.9" width="5.5" height="8.9" fill="#dddcd9"/><rect x="725.7" y="387.9" width="4.2" height="8.4" fill="#dddcd9"/><rect x="731.4" y="389.7" width="4.6" height="8.9" fill="#e1e0dd"/><rect x="507.3" y="395.1" width="4.4" height="5.5" fill="#dddcd9"/><rect x="513.9" y="396.4" width="4.7" height="6.4" fill="#dfdedb"/><rect x="531.6" y="394.6" width="6.9" height="4.1" fill="#dddcd9"/><rect x="539.5" y="396.7" width="6.5" height="7.6" fill="#dfdedb"/><rect x="544.8" y="396.7" width="4.8" height="6.8" fill="#dddcd9"/><rect x="549.6" y="393.3" width="5.8" height="7.9" fill="#dfdedb"/><rect x="557.9" y="393.2" width="6.4" height="8.6" fill="#e1e0dd"/><rect x="569.2" y="394.4" width="6.9" height="8.4" fill="#e1e0dd"/><rect x="573.4" y="396.1" width="9.1" height="5.7" fill="#e3e1de"/><rect x="581.2" y="395.9" width="8.1" height="6.6" fill="#e1e0dd"/><rect x="586.0" y="393.9" width="7.6" height="8.4" fill="#dfdedb"/><rect x="594.1" y="395.5" width="7.5" height="4.4" fill="#e1e0dd"/><rect x="597.4" y="397.0" width="5.4" height="9.4" fill="#dddcd9"/><rect x="605.4" y="396.9" width="8.6" height="8.0" fill="#dddcd9"/><rect x="611.1" y="393.1" width="5.7" height="5.7" fill="#dfdedb"/><rect x="623.7" y="394.2" width="5.8" height="6.1" fill="#dddcd9"/><rect x="633.6" y="393.6" width="5.3" height="9.3" fill="#e3e1de"/><rect x="648.2" y="394.4" width="5.2" height="7.2" fill="#dfdedb"/><rect x="665.4" y="393.9" width="9.1" height="7.1" fill="#dddcd9"/><rect x="678.6" y="394.3" width="4.3" height="9.0" fill="#e1e0dd"/><rect x="684.3" y="394.1" width="7.9" height="4.8" fill="#dddcd9"/><rect x="696.4" y="396.2" width="8.8" height="8.6" fill="#e3e1de"/><rect x="708.1" y="396.1" width="9.3" height="5.8" fill="#e1e0dd"/><rect x="713.9" y="395.3" width="7.7" height="7.5" fill="#e3e1de"/><rect x="747.2" y="394.4" width="8.2" height="6.8" fill="#e3e1de"/><rect x="807.3" y="396.0" width="8.7" height="6.7" fill="#e1e0dd"/><rect x="510.0" y="402.2" width="9.1" height="5.2" fill="#e3e1de"/><rect x="521.9" y="402.9" width="8.2" height="5.1" fill="#dfdedb"/><rect x="525.2" y="401.6" width="5.3" height="5.4" fill="#e3e1de"/><rect x="538.8" y="402.8" width="8.5" height="4.9" fill="#e3e1de"/><rect x="546.3" y="400.9" width="7.8" height="5.7" fill="#dfdedb"/><rect x="558.7" y="401.8" width="4.3" height="7.4" fill="#e3e1de"/><rect x="569.0" y="400.1" width="7.7" height="5.7" fill="#dfdedb"/><rect x="575.6" y="402.8" width="8.1" height="5.7" fill="#dfdedb"/><rect x="592.6" y="402.5" width="7.0" height="5.2" fill="#dddcd9"/><rect x="600.1" y="400.2" width="5.2" height="8.4" fill="#e1e0dd"/><rect x="611.0" y="401.0" width="5.7" height="6.0" fill="#dfdedb"/><rect x="616.9" y="402.1" width="6.8" height="7.9" fill="#e3e1de"/><rect x="623.0" y="401.9" width="5.5" height="7.2" fill="#e1e0dd"/><rect x="629.6" y="402.5" width="3.8" height="5.1" fill="#e3e1de"/><rect x="636.3" y="400.6" width="7.4" height="4.3" fill="#dfdedb"/><rect x="642.9" y="400.7" width="7.6" height="7.7" fill="#e3e1de"/><rect x="646.4" y="402.0" width="8.0" height="8.2" fill="#e3e1de"/><rect x="666.6" y="400.1" width="9.1" height="8.9" fill="#dfdedb"/><rect x="672.3" y="402.7" width="4.2" height="9.0" fill="#e1e0dd"/><rect x="676.4" y="399.6" width="7.1" height="9.2" fill="#dfdedb"/><rect x="683.9" y="400.8" width="7.7" height="5.8" fill="#e1e0dd"/><rect x="690.3" y="400.9" width="6.9" height="3.8" fill="#dddcd9"/><rect x="695.0" y="402.9" width="8.8" height="5.9" fill="#e1e0dd"/><rect x="700.4" y="402.0" width="8.6" height="4.1" fill="#e1e0dd"/><rect x="713.8" y="402.0" width="4.9" height="4.0" fill="#e1e0dd"/><rect x="825.1" y="402.2" width="6.8" height="7.7" fill="#dddcd9"/><rect x="504.6" y="408.8" width="5.8" height="8.4" fill="#e1e0dd"/><rect x="537.3" y="407.4" width="3.7" height="4.4" fill="#dfdedb"/><rect x="550.9" y="408.0" width="7.3" height="6.1" fill="#e1e0dd"/><rect x="567.5" y="407.5" width="4.3" height="3.8" fill="#e1e0dd"/><rect x="579.8" y="409.0" width="9.1" height="9.0" fill="#dddcd9"/><rect x="587.5" y="405.8" width="9.1" height="6.7" fill="#e1e0dd"/><rect x="592.7" y="408.0" width="7.5" height="5.6" fill="#e1e0dd"/><rect x="600.9" y="406.1" width="8.7" height="8.8" fill="#e1e0dd"/><rect x="605.0" y="405.0" width="8.8" height="8.2" fill="#dfdedb"/><rect x="612.4" y="406.3" width="7.6" height="6.3" fill="#dfdedb"/><rect x="617.3" y="405.7" width="7.2" height="8.2" fill="#dfdedb"/><rect x="623.4" y="405.1" width="8.7" height="5.9" fill="#dddcd9"/><rect x="630.5" y="405.4" width="9.2" height="6.8" fill="#e3e1de"/><rect x="636.5" y="407.8" width="8.1" height="9.1" fill="#e1e0dd"/><rect x="642.8" y="408.9" width="5.8" height="9.0" fill="#dfdedb"/><rect x="660.9" y="406.3" width="5.6" height="7.2" fill="#dfdedb"/><rect x="670.6" y="406.4" width="3.9" height="8.9" fill="#e1e0dd"/><rect x="684.9" y="405.6" width="5.9" height="5.9" fill="#e3e1de"/><rect x="694.2" y="408.6" width="3.6" height="7.2" fill="#e3e1de"/><rect x="702.3" y="405.2" width="9.3" height="4.4" fill="#e1e0dd"/><rect x="714.3" y="408.1" width="4.1" height="6.1" fill="#e3e1de"/><rect x="750.6" y="405.6" width="3.7" height="7.5" fill="#e3e1de"/><rect x="528.6" y="414.4" width="5.3" height="3.6" fill="#e1e0dd"/><rect x="534.1" y="412.7" width="8.1" height="5.3" fill="#dfdedb"/><rect x="537.7" y="412.6" width="8.9" height="6.2" fill="#dddcd9"/><rect x="543.2" y="414.3" width="7.2" height="3.6" fill="#e3e1de"/><rect x="551.2" y="412.3" width="8.5" height="7.3" fill="#dfdedb"/><rect x="556.9" y="412.2" width="5.2" height="4.0" fill="#e3e1de"/><rect x="574.3" y="413.5" width="6.4" height="4.4" fill="#dfdedb"/><rect x="587.7" y="411.5" width="6.1" height="5.7" fill="#e1e0dd"/><rect x="598.6" y="414.7" width="9.2" height="5.7" fill="#dfdedb"/><rect x="618.6" y="414.9" width="7.9" height="3.5" fill="#dddcd9"/><rect x="625.0" y="414.9" width="8.8" height="7.4" fill="#e1e0dd"/><rect x="646.8" y="411.2" width="9.3" height="6.6" fill="#e1e0dd"/><rect x="657.5" y="411.6" width="5.9" height="4.3" fill="#e1e0dd"/><rect x="665.2" y="413.7" width="6.7" height="7.5" fill="#e3e1de"/><rect x="683.5" y="411.1" width="9.2" height="3.8" fill="#e3e1de"/><rect x="700.6" y="412.4" width="6.5" height="6.6" fill="#dddcd9"/><rect x="706.7" y="412.7" width="5.2" height="5.1" fill="#e3e1de"/><rect x="726.0" y="411.2" width="5.6" height="6.9" fill="#dddcd9"/><rect x="735.9" y="414.5" width="5.4" height="5.7" fill="#dddcd9"/><rect x="785.2" y="412.1" width="8.9" height="6.0" fill="#dddcd9"/><rect x="515.0" y="419.5" width="5.9" height="5.5" fill="#dddcd9"/><rect x="520.8" y="420.6" width="8.7" height="8.2" fill="#e3e1de"/><rect x="544.5" y="418.3" width="4.1" height="8.6" fill="#e3e1de"/><rect x="558.9" y="420.9" width="8.2" height="5.8" fill="#e3e1de"/><rect x="563.3" y="419.3" width="8.2" height="3.7" fill="#e3e1de"/><rect x="568.0" y="417.8" width="8.6" height="8.6" fill="#dfdedb"/><rect x="579.4" y="419.5" width="7.9" height="7.1" fill="#dfdedb"/><rect x="606.4" y="419.8" width="5.8" height="4.8" fill="#e1e0dd"/><rect x="609.6" y="420.4" width="4.4" height="4.0" fill="#e3e1de"/><rect x="621.7" y="418.1" width="7.5" height="7.2" fill="#e1e0dd"/><rect x="630.3" y="418.5" width="5.2" height="5.5" fill="#dfdedb"/><rect x="636.0" y="420.6" width="5.7" height="7.3" fill="#dfdedb"/><rect x="658.8" y="420.3" width="5.6" height="4.0" fill="#e1e0dd"/><rect x="666.0" y="418.2" width="7.9" height="8.9" fill="#e1e0dd"/><rect x="670.4" y="420.3" width="8.9" height="7.9" fill="#e3e1de"/><rect x="676.6" y="418.2" width="4.3" height="6.3" fill="#e1e0dd"/><rect x="683.8" y="418.5" width="4.9" height="5.8" fill="#e1e0dd"/><rect x="687.4" y="420.2" width="4.8" height="8.5" fill="#dfdedb"/><rect x="707.9" y="419.0" width="9.2" height="7.6" fill="#e1e0dd"/><rect x="731.4" y="418.4" width="6.3" height="5.7" fill="#e3e1de"/><rect x="742.4" y="417.4" width="8.8" height="4.7" fill="#e3e1de"/><rect x="508.0" y="426.2" width="9.5" height="7.8" fill="#e3e1de"/><rect x="528.9" y="425.5" width="7.7" height="7.6" fill="#e3e1de"/><rect x="552.5" y="423.4" width="3.7" height="9.4" fill="#e1e0dd"/><rect x="557.8" y="423.4" width="8.6" height="7.0" fill="#e1e0dd"/><rect x="568.8" y="426.2" width="5.4" height="4.8" fill="#dddcd9"/><rect x="588.6" y="426.5" width="6.9" height="4.3" fill="#dfdedb"/><rect x="592.0" y="424.9" width="4.7" height="8.7" fill="#e3e1de"/><rect x="597.8" y="425.4" width="4.1" height="3.5" fill="#dfdedb"/><rect x="603.5" y="423.7" width="5.6" height="5.8" fill="#e3e1de"/><rect x="611.5" y="426.2" width="9.4" height="4.1" fill="#dfdedb"/><rect x="617.7" y="426.3" width="8.8" height="6.1" fill="#dddcd9"/><rect x="621.6" y="423.8" width="7.0" height="5.4" fill="#e1e0dd"/><rect x="627.9" y="425.1" width="4.1" height="5.9" fill="#e1e0dd"/><rect x="640.2" y="425.2" width="5.1" height="6.1" fill="#e3e1de"/><rect x="646.4" y="426.0" width="5.7" height="5.5" fill="#dddcd9"/><rect x="654.1" y="426.7" width="8.7" height="8.9" fill="#dfdedb"/><rect x="695.0" y="424.7" width="9.1" height="4.3" fill="#e3e1de"/><rect x="731.7" y="426.2" width="5.7" height="8.2" fill="#dddcd9"/><rect x="767.7" y="423.5" width="9.4" height="9.4" fill="#e3e1de"/><rect x="503.9" y="430.0" width="7.3" height="8.0" fill="#e1e0dd"/><rect x="532.9" y="430.5" width="8.3" height="7.0" fill="#e3e1de"/><rect x="545.6" y="431.3" width="9.1" height="8.7" fill="#dddcd9"/><rect x="558.8" y="431.9" width="4.4" height="9.1" fill="#dfdedb"/><rect x="575.1" y="429.2" width="6.9" height="6.0" fill="#e1e0dd"/><rect x="585.7" y="430.6" width="9.1" height="7.0" fill="#e1e0dd"/><rect x="592.8" y="431.3" width="7.8" height="7.0" fill="#dddcd9"/><rect x="600.2" y="431.9" width="8.7" height="8.2" fill="#dfdedb"/><rect x="605.8" y="432.7" width="9.4" height="7.1" fill="#e3e1de"/><rect x="612.9" y="431.2" width="6.3" height="9.1" fill="#e3e1de"/><rect x="615.6" y="431.9" width="7.4" height="5.9" fill="#e3e1de"/><rect x="624.5" y="429.0" width="8.7" height="9.1" fill="#dddcd9"/><rect x="628.6" y="431.2" width="6.1" height="7.9" fill="#e1e0dd"/><rect x="635.2" y="432.8" width="4.5" height="4.8" fill="#dfdedb"/><rect x="641.5" y="429.2" width="7.2" height="5.7" fill="#dfdedb"/><rect x="647.0" y="430.5" width="5.6" height="9.1" fill="#dfdedb"/><rect x="664.4" y="430.4" width="8.5" height="9.3" fill="#e1e0dd"/><rect x="671.9" y="429.8" width="3.9" height="5.4" fill="#dfdedb"/><rect x="675.9" y="430.8" width="4.6" height="7.6" fill="#e3e1de"/><rect x="684.3" y="429.2" width="8.6" height="9.3" fill="#dfdedb"/><rect x="717.3" y="430.8" width="5.2" height="4.0" fill="#dfdedb"/><rect x="738.0" y="432.0" width="6.5" height="5.3" fill="#dddcd9"/><rect x="513.7" y="436.3" width="8.0" height="8.3" fill="#dddcd9"/><rect x="527.1" y="438.3" width="9.3" height="3.6" fill="#dfdedb"/><rect x="533.9" y="435.7" width="4.5" height="4.6" fill="#e3e1de"/><rect x="544.5" y="436.5" width="4.5" height="4.3" fill="#dddcd9"/><rect x="563.5" y="436.1" width="7.8" height="7.0" fill="#dfdedb"/><rect x="585.9" y="435.1" width="6.8" height="6.3" fill="#dfdedb"/><rect x="591.5" y="438.5" width="5.5" height="5.8" fill="#e1e0dd"/><rect x="606.4" y="435.6" width="9.1" height="7.6" fill="#e1e0dd"/><rect x="615.6" y="437.7" width="7.8" height="6.3" fill="#e3e1de"/><rect x="621.8" y="435.4" width="5.6" height="8.8" fill="#dfdedb"/><rect x="633.9" y="436.8" width="4.5" height="5.9" fill="#e3e1de"/><rect x="642.6" y="435.3" width="7.5" height="4.3" fill="#dfdedb"/><rect x="649.0" y="436.4" width="6.5" height="7.5" fill="#e1e0dd"/><rect x="659.8" y="436.1" width="9.2" height="9.3" fill="#e3e1de"/><rect x="666.7" y="438.4" width="8.7" height="6.1" fill="#dddcd9"/><rect x="673.0" y="437.5" width="7.9" height="5.6" fill="#dfdedb"/><rect x="681.8" y="435.0" width="4.2" height="6.1" fill="#e1e0dd"/><rect x="513.9" y="443.4" width="7.0" height="5.1" fill="#e1e0dd"/><rect x="526.4" y="443.2" width="8.9" height="7.4" fill="#e3e1de"/><rect x="545.6" y="444.1" width="9.1" height="8.1" fill="#e3e1de"/><rect x="551.5" y="444.6" width="3.6" height="7.0" fill="#dddcd9"/><rect x="557.9" y="443.2" width="5.4" height="5.2" fill="#e3e1de"/><rect x="581.1" y="444.7" width="4.4" height="3.6" fill="#dfdedb"/><rect x="587.2" y="444.8" width="6.9" height="6.2" fill="#e3e1de"/><rect x="592.2" y="441.9" width="5.6" height="7.8" fill="#dddcd9"/><rect x="598.1" y="441.0" width="6.6" height="8.0" fill="#e3e1de"/><rect x="604.4" y="443.1" width="6.8" height="7.3" fill="#e3e1de"/><rect x="617.8" y="442.4" width="5.4" height="5.3" fill="#e1e0dd"/><rect x="624.2" y="441.3" width="5.7" height="4.5" fill="#dddcd9"/><rect x="641.2" y="442.0" width="5.0" height="4.7" fill="#e3e1de"/><rect x="672.5" y="444.5" width="8.8" height="4.9" fill="#dddcd9"/><rect x="701.6" y="441.5" width="7.0" height="8.5" fill="#dfdedb"/><rect x="531.4" y="450.7" width="9.3" height="4.0" fill="#e3e1de"/><rect x="538.0" y="447.4" width="7.2" height="9.4" fill="#e1e0dd"/><rect x="585.7" y="448.6" width="8.5" height="8.1" fill="#e3e1de"/><rect x="597.1" y="449.4" width="4.2" height="5.9" fill="#dddcd9"/><rect x="604.1" y="450.9" width="7.7" height="7.8" fill="#e1e0dd"/><rect x="612.5" y="448.6" width="5.2" height="7.5" fill="#e1e0dd"/><rect x="617.8" y="449.4" width="3.5" height="4.8" fill="#dddcd9"/><rect x="630.4" y="450.8" width="5.5" height="4.4" fill="#e3e1de"/><rect x="636.7" y="450.4" width="7.6" height="7.1" fill="#e1e0dd"/><rect x="642.4" y="450.4" width="8.7" height="7.6" fill="#dfdedb"/><rect x="677.8" y="449.5" width="5.2" height="4.0" fill="#e3e1de"/><rect x="520.2" y="453.7" width="6.1" height="9.2" fill="#dfdedb"/><rect x="573.2" y="454.0" width="6.0" height="3.7" fill="#dfdedb"/><rect x="585.7" y="453.9" width="6.9" height="8.8" fill="#e1e0dd"/><rect x="609.4" y="453.9" width="5.4" height="4.5" fill="#dfdedb"/><rect x="619.0" y="453.8" width="7.0" height="7.8" fill="#dfdedb"/><rect x="639.3" y="453.8" width="3.9" height="5.2" fill="#dfdedb"/><rect x="655.0" y="455.6" width="4.8" height="9.1" fill="#e1e0dd"/><rect x="663.7" y="456.8" width="6.9" height="5.4" fill="#e3e1de"/><rect x="695.1" y="455.5" width="5.2" height="3.8" fill="#dfdedb"/><rect x="537.9" y="459.8" width="7.5" height="7.9" fill="#e3e1de"/><rect x="562.6" y="459.2" width="3.9" height="4.2" fill="#e3e1de"/><rect x="567.2" y="461.6" width="8.3" height="8.2" fill="#e3e1de"/><rect x="593.0" y="461.0" width="3.9" height="6.2" fill="#dddcd9"/><rect x="621.4" y="461.4" width="4.0" height="5.3" fill="#dddcd9"/><rect x="628.0" y="460.6" width="3.9" height="5.0" fill="#dddcd9"/><rect x="677.7" y="460.4" width="4.9" height="8.8" fill="#e1e0dd"/><rect x="527.1" y="468.8" width="7.6" height="8.2" fill="#e3e1de"/><rect x="531.1" y="467.1" width="3.8" height="9.3" fill="#e1e0dd"/><rect x="539.8" y="466.2" width="5.1" height="8.6" fill="#dddcd9"/><rect x="576.0" y="465.7" width="5.6" height="4.4" fill="#dfdedb"/><rect x="607.0" y="467.1" width="6.0" height="6.3" fill="#e3e1de"/><rect x="621.1" y="467.6" width="5.8" height="7.2" fill="#e1e0dd"/><rect x="639.6" y="467.5" width="5.2" height="3.6" fill="#e3e1de"/><rect x="664.4" y="468.3" width="5.1" height="7.9" fill="#dddcd9"/><rect x="669.3" y="467.6" width="7.9" height="5.4" fill="#dddcd9"/><rect x="677.3" y="468.2" width="7.4" height="5.0" fill="#e1e0dd"/><rect x="682.1" y="466.3" width="8.9" height="6.7" fill="#e1e0dd"/><rect x="693.6" y="466.9" width="6.3" height="9.2" fill="#dddcd9"/><rect x="544.2" y="471.3" width="8.8" height="9.4" fill="#dddcd9"/><rect x="587.8" y="474.6" width="3.7" height="5.3" fill="#dddcd9"/><rect x="622.6" y="471.9" width="7.2" height="7.8" fill="#dddcd9"/><rect x="573.8" y="477.9" width="7.0" height="5.6" fill="#dfdedb"/><rect x="597.1" y="479.7" width="4.5" height="6.1" fill="#dddcd9"/><rect x="605.1" y="478.0" width="3.5" height="6.0" fill="#e1e0dd"/><rect x="640.1" y="479.0" width="9.2" height="6.7" fill="#e1e0dd"/><rect x="658.6" y="478.3" width="5.6" height="7.5" fill="#e3e1de"/><rect x="900.1" y="479.6" width="8.6" height="8.0" fill="#dfdedb"/><rect x="297.7" y="483.7" width="8.8" height="4.7" fill="#dfdedb"/><rect x="305.9" y="483.4" width="7.6" height="3.8" fill="#e1e0dd"/><rect x="569.3" y="483.5" width="8.7" height="5.5" fill="#dddcd9"/><rect x="586.3" y="483.6" width="5.9" height="9.5" fill="#dfdedb"/><rect x="635.5" y="485.1" width="5.5" height="4.4" fill="#dfdedb"/><rect x="641.7" y="485.6" width="3.9" height="8.3" fill="#e1e0dd"/><rect x="647.8" y="484.0" width="5.7" height="9.0" fill="#e3e1de"/><rect x="690.7" y="485.6" width="8.8" height="3.8" fill="#dfdedb"/><rect x="876.0" y="485.9" width="3.5" height="9.2" fill="#e3e1de"/><rect x="887.9" y="483.7" width="8.4" height="5.0" fill="#e1e0dd"/><rect x="298.3" y="489.6" width="7.0" height="7.8" fill="#e3e1de"/><rect x="575.6" y="492.6" width="8.9" height="7.6" fill="#e3e1de"/><rect x="593.6" y="490.0" width="4.9" height="3.7" fill="#e3e1de"/><rect x="618.7" y="489.1" width="4.3" height="6.1" fill="#e1e0dd"/><rect x="621.7" y="492.6" width="6.3" height="7.9" fill="#e1e0dd"/><rect x="660.5" y="489.3" width="5.4" height="4.1" fill="#dfdedb"/><rect x="671.4" y="489.8" width="6.9" height="5.7" fill="#dfdedb"/><rect x="677.8" y="489.6" width="7.0" height="8.1" fill="#dddcd9"/><rect x="876.7" y="491.5" width="6.3" height="8.5" fill="#e1e0dd"/><rect x="888.8" y="491.5" width="3.5" height="4.2" fill="#e3e1de"/><rect x="891.7" y="492.1" width="3.8" height="9.1" fill="#e3e1de"/><rect x="899.7" y="489.2" width="5.9" height="6.9" fill="#dddcd9"/><rect x="300.8" y="495.9" width="5.7" height="4.2" fill="#e3e1de"/><rect x="323.8" y="496.7" width="5.3" height="3.7" fill="#dddcd9"/><rect x="633.5" y="496.8" width="5.4" height="4.1" fill="#e1e0dd"/><rect x="659.6" y="497.1" width="5.8" height="5.6" fill="#dfdedb"/><rect x="672.4" y="497.5" width="7.2" height="6.2" fill="#dfdedb"/><rect x="874.6" y="495.4" width="9.2" height="4.8" fill="#dfdedb"/><rect x="892.1" y="495.2" width="9.2" height="5.6" fill="#dfdedb"/><rect x="897.3" y="496.5" width="8.8" height="6.9" fill="#dddcd9"/><rect x="287.9" y="502.7" width="4.3" height="8.8" fill="#e1e0dd"/><rect x="305.0" y="502.0" width="4.4" height="4.4" fill="#e1e0dd"/><rect x="617.7" y="501.0" width="7.0" height="5.3" fill="#dddcd9"/><rect x="640.1" y="504.4" width="9.2" height="4.4" fill="#e1e0dd"/><rect x="663.9" y="505.0" width="4.7" height="5.9" fill="#e3e1de"/><rect x="687.8" y="501.7" width="7.3" height="5.2" fill="#e3e1de"/><rect x="901.0" y="504.2" width="4.6" height="4.8" fill="#e1e0dd"/><rect x="264.3" y="510.0" width="6.2" height="3.7" fill="#dddcd9"/><rect x="286.8" y="510.9" width="6.7" height="8.7" fill="#e3e1de"/><rect x="654.1" y="507.5" width="7.8" height="8.0" fill="#e1e0dd"/><rect x="906.6" y="507.2" width="4.0" height="3.8" fill="#e3e1de"/><rect x="281.9" y="516.4" width="6.4" height="6.3" fill="#dfdedb"/><rect x="587.8" y="515.0" width="7.9" height="4.6" fill="#e3e1de"/><rect x="621.2" y="513.9" width="4.2" height="5.8" fill="#e3e1de"/><rect x="630.6" y="514.5" width="6.2" height="5.3" fill="#dfdedb"/><rect x="654.8" y="515.3" width="8.9" height="8.6" fill="#e3e1de"/><rect x="274.4" y="519.8" width="7.2" height="5.9" fill="#dfdedb"/><rect x="282.2" y="520.7" width="7.5" height="5.9" fill="#dddcd9"/><rect x="286.5" y="521.7" width="7.2" height="9.4" fill="#e1e0dd"/><rect x="305.8" y="521.7" width="4.7" height="9.4" fill="#dddcd9"/><rect x="610.4" y="521.8" width="7.4" height="5.0" fill="#e1e0dd"/><rect x="893.8" y="520.7" width="6.9" height="7.4" fill="#dfdedb"/><rect x="288.2" y="525.8" width="4.5" height="7.0" fill="#dfdedb"/><rect x="274.0" y="532.9" width="8.8" height="8.7" fill="#dddcd9"/><rect x="285.8" y="540.0" width="7.0" height="8.6" fill="#e1e0dd"/><rect x="294.9" y="540.4" width="3.7" height="8.2" fill="#e1e0dd"/><rect x="306.3" y="537.8" width="8.7" height="5.9" fill="#e3e1de"/><rect x="293.8" y="544.3" width="9.2" height="6.0" fill="#dddcd9"/><rect x="273.8" y="550.6" width="6.3" height="3.7" fill="#dddcd9"/><rect x="305" y="355" width="14" height="18" fill="#dad8d5"/><rect x="316" y="362" width="10" height="12" fill="#dad8d5"/><rect x="525" y="385" width="10" height="8" fill="#dad8d5"/><rect x="548" y="418" width="12" height="10" fill="#dad8d5"/><rect x="640" y="262" width="8" height="6" fill="#dad8d5"/><rect x="800" y="300" width="10" height="8" fill="#dad8d5"/><rect x="980" y="330" width="8" height="8" fill="#dad8d5"/><rect x="880" y="470" width="12" height="8" fill="#dad8d5"/><rect x="360" y="420" width="10" height="6" fill="#dad8d5"/><rect x="770" y="240" width="10" height="8" fill="#dad8d5"/><rect x="295" y="460" width="12" height="10" fill="#dad8d5"/><rect x="490" y="458" width="10" height="8" fill="#dad8d5"/><rect x="860" y="520" width="10" height="6" fill="#dad8d5"/><path d="M499.3 245.8 C500.6 247.7 506.1 253.4 507.4 257.3 C508.6 261.3 507.1 265.9 506.9 269.4 C506.7 273.0 506.2 277.1 506.1 278.6" fill="none" stroke="#c6c3be" stroke-width="0.75" stroke-linecap="round" stroke-linejoin="round" /><path d="M682.1 388.4 C681.2 387.2 677.8 383.9 676.8 381.3 C675.8 378.6 676.1 373.9 675.9 372.4" fill="none" stroke="#c6c3be" stroke-width="0.75" stroke-linecap="round" stroke-linejoin="round" /><path d="M545.2 326.8 C543.3 328.2 536.5 333.4 533.7 335.6 C530.8 337.9 529.0 339.5 528.0 340.2" fill="none" stroke="#c6c3be" stroke-width="0.75" stroke-linecap="round" stroke-linejoin="round" /><path d="M443.5 195.6 C443.6 197.8 443.8 204.7 444.2 208.9 C444.6 213.2 445.5 219.1 445.7 221.1" fill="none" stroke="#c6c3be" stroke-width="0.75" stroke-linecap="round" stroke-linejoin="round" /><path d="M829.2 154.4 C829.6 155.7 830.7 159.2 831.7 162.3 C832.7 165.4 833.3 169.3 835.2 173.1 C837.1 176.8 840.3 181.2 843.2 184.6 C846.1 188.0 850.8 192.1 852.4 193.6" fill="none" stroke="#c6c3be" stroke-width="0.75" stroke-linecap="round" stroke-linejoin="round" /><path d="M756.3 198.5 C756.5 197.1 756.4 193.5 757.2 190.2 C757.9 186.8 760.3 180.4 760.9 178.5" fill="none" stroke="#c6c3be" stroke-width="0.75" stroke-linecap="round" stroke-linejoin="round" /><path d="M661.3 138.7 C663.0 137.5 668.2 134.3 671.7 131.4 C675.3 128.6 679.6 124.0 682.7 121.7 C685.8 119.3 689.0 118.0 690.2 117.2" fill="none" stroke="#c6c3be" stroke-width="0.75" stroke-linecap="round" stroke-linejoin="round" /><path d="M553.7 343.3 C554.3 341.0 554.9 333.4 557.4 329.8 C559.8 326.1 565.8 324.1 568.3 321.5 C570.7 318.9 571.4 315.3 572.1 314.1" fill="none" stroke="#c6c3be" stroke-width="0.75" stroke-linecap="round" stroke-linejoin="round" /><path d="M650.0 415.5 C650.3 414.2 651.3 410.1 652.2 408.0 C653.1 405.9 653.9 405.5 655.5 402.7 C657.1 399.9 660.7 393.3 661.7 391.4" fill="none" stroke="#c6c3be" stroke-width="0.75" stroke-linecap="round" stroke-linejoin="round" /><path d="M764.7 274.1 C765.7 274.4 767.3 275.4 770.9 275.9 C774.4 276.4 781.0 277.2 786.0 277.1 C791.0 276.9 798.5 275.3 800.9 275.0" fill="none" stroke="#c6c3be" stroke-width="0.75" stroke-linecap="round" stroke-linejoin="round" /><path d="M550.9 453.9 C549.7 453.4 547.8 451.0 544.1 450.8 C540.3 450.6 531.0 452.5 528.4 452.8" fill="none" stroke="#c6c3be" stroke-width="0.75" stroke-linecap="round" stroke-linejoin="round" /><path d="M520.9 314.6 C520.2 313.5 518.1 310.7 516.7 307.8 C515.4 304.8 513.8 300.0 512.6 296.9 C511.5 293.8 511.1 293.1 509.9 289.4 C508.7 285.6 506.1 276.7 505.4 274.1" fill="none" stroke="#c6c3be" stroke-width="0.75" stroke-linecap="round" stroke-linejoin="round" /><path d="M559.6 220.3 C560.7 222.1 565.3 227.5 566.6 231.1 C567.8 234.7 567.2 240.1 567.3 242.0" fill="none" stroke="#c6c3be" stroke-width="0.75" stroke-linecap="round" stroke-linejoin="round" /><path d="M772.6 293.7 C773.2 291.7 775.1 285.1 776.6 281.7 C778.0 278.3 780.3 276.2 781.2 273.2 C782.0 270.2 781.6 265.2 781.7 263.6" fill="none" stroke="#c6c3be" stroke-width="0.75" stroke-linecap="round" stroke-linejoin="round" /><path d="M576.0 181.4 C577.6 180.8 582.8 178.9 585.6 177.9 C588.3 177.0 589.8 176.8 592.5 175.9 C595.1 174.9 600.0 172.7 601.5 172.1" fill="none" stroke="#c6c3be" stroke-width="0.75" stroke-linecap="round" stroke-linejoin="round" /><path d="M610.0 198.8 C607.9 198.2 600.7 197.4 597.3 195.5 C593.9 193.6 590.7 188.8 589.4 187.5" fill="none" stroke="#c6c3be" stroke-width="0.75" stroke-linecap="round" stroke-linejoin="round" /><path d="M499.0 218.9 C497.4 218.7 492.7 217.9 489.0 218.1 C485.4 218.2 479.0 219.5 476.9 219.8" fill="none" stroke="#c6c3be" stroke-width="0.75" stroke-linecap="round" stroke-linejoin="round" /><path d="M414.8 169.9 C416.0 169.6 419.4 169.5 422.4 168.2 C425.4 166.9 431.1 163.1 432.8 162.1" fill="none" stroke="#c6c3be" stroke-width="0.75" stroke-linecap="round" stroke-linejoin="round" /><path d="M659.9 349.4 C659.2 351.8 657.3 359.5 655.2 363.6 C653.1 367.7 648.5 372.2 647.1 374.0" fill="none" stroke="#c6c3be" stroke-width="0.75" stroke-linecap="round" stroke-linejoin="round" /><path d="M610.8 298.9 C609.4 300.2 604.5 303.1 602.1 306.7 C599.8 310.3 597.5 317.0 596.8 320.7 C596.1 324.3 597.7 327.2 597.9 328.5" fill="none" stroke="#c6c3be" stroke-width="0.75" stroke-linecap="round" stroke-linejoin="round" /><path d="M675.7 155.5 C676.7 155.1 679.0 155.0 681.7 153.2 C684.5 151.5 690.5 146.2 692.3 144.8" fill="none" stroke="#c6c3be" stroke-width="0.75" stroke-linecap="round" stroke-linejoin="round" /><path d="M772.1 164.2 C770.6 164.1 766.5 165.3 763.1 163.4 C759.7 161.5 753.5 154.5 751.6 152.7" fill="none" stroke="#c6c3be" stroke-width="0.75" stroke-linecap="round" stroke-linejoin="round" /><path d="M548.5 328.0 C547.9 330.2 546.4 337.0 544.4 341.0 C542.5 344.9 537.9 350.1 536.6 352.0" fill="none" stroke="#c6c3be" stroke-width="0.75" stroke-linecap="round" stroke-linejoin="round" /><path d="M705.6 334.0 C706.9 335.4 711.1 340.4 713.4 342.6 C715.8 344.9 716.8 346.3 719.5 347.5 C722.2 348.7 726.5 349.8 729.7 349.8 C732.8 349.9 737.1 348.1 738.6 347.7" fill="none" stroke="#c6c3be" stroke-width="0.75" stroke-linecap="round" stroke-linejoin="round" /><path d="M389.9 159.9 C391.6 158.8 397.3 155.9 400.1 153.1 C402.9 150.2 405.8 144.5 406.9 142.8" fill="none" stroke="#c6c3be" stroke-width="0.75" stroke-linecap="round" stroke-linejoin="round" /><path d="M751.0 212.4 C750.2 213.3 747.6 215.8 746.6 217.8 C745.6 219.8 745.2 220.7 744.7 224.2 C744.3 227.6 743.9 236.3 743.7 238.7" fill="none" stroke="#c6c3be" stroke-width="0.75" stroke-linecap="round" stroke-linejoin="round" /><path d="M561.5 423.8 C561.5 425.1 562.5 429.2 561.7 431.7 C560.8 434.3 558.1 435.4 556.7 439.1 C555.2 442.9 553.6 450.4 552.8 454.3 C551.9 458.1 551.6 460.8 551.3 462.1" fill="none" stroke="#c6c3be" stroke-width="0.75" stroke-linecap="round" stroke-linejoin="round" /><path d="M684.2 339.4 C685.4 340.9 689.3 345.8 691.5 348.8 C693.7 351.7 694.8 354.9 697.3 357.1 C699.8 359.3 704.8 361.3 706.3 362.1" fill="none" stroke="#c6c3be" stroke-width="0.75" stroke-linecap="round" stroke-linejoin="round" /><path d="M259.1 536.4 C257.6 535.6 252.6 532.8 250.0 532.1 C247.3 531.4 246.6 532.0 243.2 532.2 C239.8 532.4 234.0 532.1 229.8 533.4 C225.7 534.7 220.2 538.9 218.3 540.0" fill="none" stroke="#c6c3be" stroke-width="0.75" stroke-linecap="round" stroke-linejoin="round" /><path d="M734.2 333.5 C733.1 332.7 730.9 330.2 727.6 328.5 C724.3 326.8 716.8 324.3 714.6 323.4" fill="none" stroke="#c6c3be" stroke-width="0.75" stroke-linecap="round" stroke-linejoin="round" /><path d="M657.2 491.9 C657.1 493.7 658.0 498.8 656.7 502.4 C655.3 506.0 652.8 510.6 649.2 513.5 C645.6 516.5 638.9 517.2 634.8 520.1 C630.8 523.0 626.5 529.2 624.9 531.0" fill="none" stroke="#c6c3be" stroke-width="0.75" stroke-linecap="round" stroke-linejoin="round" /><path d="M693.1 181.7 C691.2 183.3 685.0 189.6 681.2 191.1 C677.4 192.6 674.6 191.3 670.4 190.9 C666.2 190.5 658.4 189.0 656.0 188.6" fill="none" stroke="#c6c3be" stroke-width="0.75" stroke-linecap="round" stroke-linejoin="round" /><path d="M616.1 274.0 C614.0 273.6 607.5 271.5 603.3 271.4 C599.1 271.3 594.0 273.1 590.8 273.4 C587.6 273.7 587.1 272.1 583.9 273.2 C580.7 274.3 573.6 278.8 571.6 279.9" fill="none" stroke="#c6c3be" stroke-width="0.75" stroke-linecap="round" stroke-linejoin="round" /><path d="M621.1 170.2 C619.8 170.2 616.5 169.9 613.1 169.8 C609.7 169.7 603.6 169.0 600.7 169.6 C597.7 170.2 597.2 171.5 595.3 173.5 C593.5 175.6 590.6 180.3 589.7 181.7" fill="none" stroke="#c6c3be" stroke-width="0.75" stroke-linecap="round" stroke-linejoin="round" /><path d="M631.7 492.5 C630.5 493.6 627.0 496.4 624.6 499.3 C622.2 502.1 619.9 507.0 617.4 509.4 C615.0 511.8 612.2 513.1 609.9 513.6 C607.7 514.1 604.9 512.7 603.9 512.5" fill="none" stroke="#c6c3be" stroke-width="0.75" stroke-linecap="round" stroke-linejoin="round" /><path d="M791.9 270.6 C792.7 269.2 793.9 264.6 796.7 262.3 C799.6 259.9 805.2 257.4 809.1 256.5 C812.9 255.6 818.0 256.9 819.8 257.0" fill="none" stroke="#c6c3be" stroke-width="0.75" stroke-linecap="round" stroke-linejoin="round" /><path d="M619.0 306.3 C616.4 305.9 608.2 305.2 603.3 303.6 C598.4 301.9 593.7 297.2 589.7 296.4 C585.6 295.6 580.6 298.4 578.8 298.8" fill="none" stroke="#c6c3be" stroke-width="0.75" stroke-linecap="round" stroke-linejoin="round" /><path d="M632.2 215.1 C630.1 214.5 623.9 211.9 619.8 211.3 C615.8 210.7 609.9 211.4 607.9 211.4" fill="none" stroke="#c6c3be" stroke-width="0.75" stroke-linecap="round" stroke-linejoin="round" /><path d="M773.3 199.5 C771.2 198.1 763.4 193.5 760.8 191.0 C758.2 188.4 759.1 186.7 757.8 184.3 C756.5 182.0 753.7 178.1 752.9 176.8" fill="none" stroke="#c6c3be" stroke-width="0.75" stroke-linecap="round" stroke-linejoin="round" /><path d="M605.7 320.3 C604.6 319.9 601.4 317.8 599.0 317.6 C596.7 317.4 592.7 318.9 591.4 319.2" fill="none" stroke="#c6c3be" stroke-width="0.75" stroke-linecap="round" stroke-linejoin="round" /><path d="M579.3 402.1 C577.6 400.4 571.6 394.3 569.3 391.7 C567.0 389.1 568.2 388.5 565.3 386.7 C562.5 384.9 554.4 382.0 552.2 381.1" fill="none" stroke="#c6c3be" stroke-width="0.75" stroke-linecap="round" stroke-linejoin="round" /><path d="M591.9 326.1 C590.9 328.2 588.0 335.9 585.7 338.7 C583.3 341.5 581.0 341.6 577.9 343.1 C574.7 344.6 570.6 346.0 566.7 347.7 C562.7 349.5 556.2 352.7 554.1 353.7" fill="none" stroke="#c6c3be" stroke-width="0.75" stroke-linecap="round" stroke-linejoin="round" /><path d="M809.0 427.4 C809.5 428.5 810.3 431.5 812.0 434.0 C813.6 436.6 817.3 440.1 818.8 442.8 C820.3 445.4 820.6 447.4 821.0 450.0 C821.4 452.7 821.0 457.2 821.0 458.6" fill="none" stroke="#c6c3be" stroke-width="0.75" stroke-linecap="round" stroke-linejoin="round" /><path d="M532.5 167.7 C531.6 168.4 530.2 170.8 527.3 172.3 C524.4 173.8 517.1 176.0 515.1 176.7" fill="none" stroke="#c6c3be" stroke-width="0.75" stroke-linecap="round" stroke-linejoin="round" /><path d="M895.8 484.6 C897.3 485.5 901.1 488.0 904.8 490.2 C908.5 492.4 915.8 496.6 918.0 497.9" fill="none" stroke="#c6c3be" stroke-width="0.75" stroke-linecap="round" stroke-linejoin="round" /><path d="M597.2 249.2 C594.8 249.7 586.7 250.0 582.7 252.2 C578.6 254.5 574.9 259.8 572.7 262.7 C570.6 265.6 570.2 267.2 570.0 269.6 C569.8 271.9 571.3 275.6 571.6 276.8" fill="none" stroke="#c6c3be" stroke-width="0.75" stroke-linecap="round" stroke-linejoin="round" /><path d="M630.5 434.2 C629.8 435.0 627.4 436.7 626.4 438.6 C625.4 440.6 625.6 443.4 624.6 445.8 C623.5 448.3 621.2 450.9 620.1 453.2 C619.0 455.4 618.3 458.2 618.0 459.3" fill="none" stroke="#c6c3be" stroke-width="0.75" stroke-linecap="round" stroke-linejoin="round" /><path d="M525.8 335.5 C528.0 336.7 534.9 339.7 538.7 342.6 C542.6 345.5 546.0 350.7 548.8 352.7 C551.5 354.7 554.1 354.2 555.2 354.6" fill="none" stroke="#c6c3be" stroke-width="0.75" stroke-linecap="round" stroke-linejoin="round" /><path d="M302.2 522.1 C302.3 520.1 303.8 514.0 302.8 510.2 C301.8 506.4 297.2 502.3 296.2 499.0 C295.1 495.8 296.4 492.0 296.5 490.6" fill="none" stroke="#c6c3be" stroke-width="0.75" stroke-linecap="round" stroke-linejoin="round" /><path d="M791.7 203.5 C789.9 203.4 784.2 204.2 781.0 203.2 C777.8 202.2 774.9 200.2 772.5 197.4 C770.1 194.5 767.6 188.0 766.6 186.2" fill="none" stroke="#c6c3be" stroke-width="0.75" stroke-linecap="round" stroke-linejoin="round" /><path d="M630.8 399.4 C632.8 397.9 640.2 393.4 642.8 390.3 C645.5 387.2 646.1 382.2 646.7 380.6" fill="none" stroke="#c6c3be" stroke-width="0.75" stroke-linecap="round" stroke-linejoin="round" /><path d="M573.9 310.4 C573.4 309.2 570.7 306.1 570.4 302.8 C570.2 299.4 572.0 293.5 572.6 290.4 C573.2 287.4 573.8 285.5 574.0 284.5" fill="none" stroke="#c6c3be" stroke-width="0.75" stroke-linecap="round" stroke-linejoin="round" /><path d="M676.6 140.4 C674.0 140.3 665.8 140.5 661.5 140.1 C657.3 139.6 652.9 138.2 651.1 137.8" fill="none" stroke="#c6c3be" stroke-width="0.75" stroke-linecap="round" stroke-linejoin="round" /><path d="M588.0 182.3 C587.3 183.9 584.2 188.2 583.6 191.4 C583.0 194.7 584.3 199.9 584.5 201.6" fill="none" stroke="#c6c3be" stroke-width="0.75" stroke-linecap="round" stroke-linejoin="round" /><path d="M493.3 166.6 C492.5 165.5 490.7 162.2 488.3 160.1 C486.0 158.0 480.7 155.1 479.2 154.1" fill="none" stroke="#c6c3be" stroke-width="0.75" stroke-linecap="round" stroke-linejoin="round" /><path d="M623.5 208.4 C622.9 210.4 621.3 217.9 619.9 220.6 C618.5 223.2 615.8 223.6 615.0 224.2" fill="none" stroke="#c6c3be" stroke-width="0.75" stroke-linecap="round" stroke-linejoin="round" /><path d="M734.3 211.7 C735.3 211.5 737.5 211.1 740.4 210.7 C743.3 210.3 748.2 209.1 751.8 209.2 C755.4 209.3 760.3 211.1 762.0 211.5" fill="none" stroke="#c6c3be" stroke-width="0.75" stroke-linecap="round" stroke-linejoin="round" /><path d="M476.7 270.5 C477.2 272.6 479.5 280.2 479.9 283.6 C480.3 287.0 479.3 287.3 479.1 290.8 C478.8 294.3 478.6 302.2 478.5 304.5" fill="none" stroke="#c6c3be" stroke-width="0.75" stroke-linecap="round" stroke-linejoin="round" /><path d="M312.9 516.1 C314.0 517.2 317.3 521.1 319.5 522.5 C321.7 523.9 325.0 524.2 326.1 524.5" fill="none" stroke="#c6c3be" stroke-width="0.75" stroke-linecap="round" stroke-linejoin="round" /><path d="M576.7 220.9 C578.0 221.5 581.7 224.0 584.5 224.6 C587.2 225.1 589.6 223.7 593.2 224.0 C596.8 224.4 602.8 226.0 606.0 226.7 C609.2 227.4 611.3 228.0 612.4 228.2" fill="none" stroke="#c6c3be" stroke-width="0.75" stroke-linecap="round" stroke-linejoin="round" /><path d="M633.7 247.2 C632.9 246.1 630.4 243.9 629.3 240.9 C628.2 237.9 628.2 233.2 627.3 229.2 C626.4 225.2 624.5 218.8 623.9 216.7" fill="none" stroke="#c6c3be" stroke-width="0.75" stroke-linecap="round" stroke-linejoin="round" /><path d="M821.4 260.9 C821.8 259.6 822.5 256.6 823.6 253.1 C824.8 249.7 827.4 244.0 828.3 240.2 C829.2 236.3 828.9 231.7 829.0 230.0" fill="none" stroke="#c6c3be" stroke-width="0.75" stroke-linecap="round" stroke-linejoin="round" /><path d="M442.2 184.9 C443.3 184.7 446.7 184.1 448.9 183.7 C451.0 183.4 452.9 183.6 455.1 182.9 C457.3 182.2 458.8 181.1 462.1 179.6 C465.3 178.1 472.5 174.6 474.5 173.7" fill="none" stroke="#c6c3be" stroke-width="0.75" stroke-linecap="round" stroke-linejoin="round" /><path d="M604.9 191.0 C606.8 191.5 611.8 193.7 616.2 194.0 C620.6 194.4 627.3 192.3 631.1 192.9 C635.0 193.5 635.9 196.3 639.1 197.7 C642.2 199.2 648.2 200.9 650.1 201.5" fill="none" stroke="#c6c3be" stroke-width="0.75" stroke-linecap="round" stroke-linejoin="round" /><path d="M598.7 197.7 C599.0 196.7 598.2 194.5 600.5 191.8 C602.9 189.2 608.7 183.8 612.7 181.7 C616.8 179.7 621.2 180.4 624.8 179.5 C628.4 178.6 632.9 176.9 634.5 176.4" fill="none" stroke="#c6c3be" stroke-width="0.75" stroke-linecap="round" stroke-linejoin="round" /><path d="M510.6 245.6 C511.2 247.6 514.0 254.6 514.5 257.6 C515.1 260.7 514.1 262.7 514.0 263.8" fill="none" stroke="#c6c3be" stroke-width="0.75" stroke-linecap="round" stroke-linejoin="round" /><path d="M586.7 413.5 C589.1 413.7 597.2 414.8 601.5 414.7 C605.8 414.7 609.4 413.8 612.3 413.1 C615.2 412.4 615.7 412.4 618.9 410.6 C622.2 408.8 629.6 403.7 631.8 402.3" fill="none" stroke="#c6c3be" stroke-width="0.75" stroke-linecap="round" stroke-linejoin="round" /><path d="M289.3 495.2 C287.8 495.0 282.9 494.7 280.1 494.0 C277.4 493.4 274.7 492.8 272.8 491.5 C270.8 490.2 269.4 488.5 268.4 486.4 C267.3 484.3 266.6 480.1 266.2 478.8" fill="none" stroke="#c6c3be" stroke-width="0.75" stroke-linecap="round" stroke-linejoin="round" /><path d="M681.8 275.8 C682.8 275.0 686.0 272.6 687.6 270.6 C689.2 268.6 690.8 266.3 691.4 263.8 C691.9 261.2 691.6 259.1 690.9 255.5 C690.2 251.8 688.0 244.0 687.4 241.7" fill="none" stroke="#c6c3be" stroke-width="0.75" stroke-linecap="round" stroke-linejoin="round" /><path d="M607.2 222.7 C608.4 223.1 611.4 223.3 614.0 224.8 C616.6 226.3 619.9 229.6 622.8 231.8 C625.8 234.0 629.2 236.1 631.5 238.1 C633.8 240.1 635.6 242.8 636.5 243.7" fill="none" stroke="#c6c3be" stroke-width="0.75" stroke-linecap="round" stroke-linejoin="round" /><path d="M519.6 239.2 C521.3 239.6 526.3 241.2 529.7 242.0 C533.1 242.8 535.8 243.2 540.1 244.0 C544.3 244.8 552.6 246.4 555.2 246.8" fill="none" stroke="#c6c3be" stroke-width="0.75" stroke-linecap="round" stroke-linejoin="round" /><path d="M700.6 247.5 C700.1 246.4 699.1 242.5 697.6 240.8 C696.2 239.2 694.7 239.7 691.9 237.9 C689.0 236.0 682.4 231.1 680.5 229.7" fill="none" stroke="#c6c3be" stroke-width="0.75" stroke-linecap="round" stroke-linejoin="round" /><path d="M535.9 451.0 C536.9 449.9 540.9 447.7 542.1 444.6 C543.4 441.5 542.4 436.5 543.2 432.4 C544.1 428.3 546.6 422.1 547.2 420.0" fill="none" stroke="#c6c3be" stroke-width="0.75" stroke-linecap="round" stroke-linejoin="round" /><path d="M573.5 292.5 C571.9 292.3 566.4 292.0 563.7 291.1 C561.0 290.2 559.3 289.2 557.3 287.1 C555.4 285.0 554.6 281.3 551.9 278.5 C549.2 275.7 542.7 271.5 540.9 270.1" fill="none" stroke="#c6c3be" stroke-width="0.75" stroke-linecap="round" stroke-linejoin="round" /><path d="M719.3 337.5 C720.4 338.6 723.5 342.4 726.0 343.9 C728.6 345.4 731.2 346.6 734.4 346.5 C737.7 346.5 742.4 345.4 745.7 343.4 C749.0 341.3 752.8 335.8 754.2 334.3" fill="none" stroke="#c6c3be" stroke-width="0.75" stroke-linecap="round" stroke-linejoin="round" /><path d="M775.9 205.7 C777.2 206.8 781.9 209.2 783.9 212.5 C785.9 215.8 787.3 223.3 788.0 225.4" fill="none" stroke="#c6c3be" stroke-width="0.75" stroke-linecap="round" stroke-linejoin="round" /><path d="M720.4 231.2 C722.1 231.5 727.2 231.2 730.8 233.4 C734.5 235.6 740.4 242.6 742.3 244.4" fill="none" stroke="#c6c3be" stroke-width="0.75" stroke-linecap="round" stroke-linejoin="round" /><path d="M672.5 178.2 C672.7 179.6 674.1 183.6 673.6 186.9 C673.1 190.1 671.2 194.4 669.6 197.6 C667.9 200.8 664.7 204.7 663.8 206.1" fill="none" stroke="#c6c3be" stroke-width="0.75" stroke-linecap="round" stroke-linejoin="round" /><path d="M848.7 367.5 C850.0 369.8 855.3 377.5 856.7 381.3 C858.1 385.1 857.0 388.9 857.1 390.5" fill="none" stroke="#c6c3be" stroke-width="0.75" stroke-linecap="round" stroke-linejoin="round" /><path d="M596.5 258.2 C595.3 258.9 593.0 260.5 589.5 262.3 C586.0 264.1 577.9 267.9 575.6 269.0" fill="none" stroke="#c6c3be" stroke-width="0.75" stroke-linecap="round" stroke-linejoin="round" /><path d="M574.5 152.8 C574.9 154.2 576.5 158.1 576.8 160.8 C577.2 163.4 576.8 167.3 576.8 168.6" fill="none" stroke="#c6c3be" stroke-width="0.75" stroke-linecap="round" stroke-linejoin="round" /><path d="M661.8 263.6 C661.8 265.2 663.0 269.5 662.2 273.1 C661.3 276.8 657.6 283.5 656.7 285.6" fill="none" stroke="#c6c3be" stroke-width="0.75" stroke-linecap="round" stroke-linejoin="round" /><path d="M698.7 273.7 C700.2 275.2 705.7 279.5 707.5 282.8 C709.3 286.0 708.8 289.3 709.5 293.2 C710.2 297.2 710.3 301.8 711.5 306.4 C712.8 311.1 716.3 318.6 717.2 321.1" fill="none" stroke="#c6c3be" stroke-width="0.75" stroke-linecap="round" stroke-linejoin="round" /><path d="M576.1 360.4 C576.5 361.6 577.8 363.6 578.7 367.4 C579.6 371.1 580.8 380.5 581.3 383.1" fill="none" stroke="#c6c3be" stroke-width="0.75" stroke-linecap="round" stroke-linejoin="round" /><path d="M562.6 412.0 C562.7 410.3 563.0 405.4 562.9 401.5 C562.8 397.5 563.5 392.1 562.0 388.3 C560.4 384.5 555.2 380.3 553.9 378.7" fill="none" stroke="#c6c3be" stroke-width="0.75" stroke-linecap="round" stroke-linejoin="round" /><path d="M492.6 311.2 C493.7 309.8 497.9 306.6 499.3 302.8 C500.7 298.9 500.6 290.6 500.9 288.1" fill="none" stroke="#c6c3be" stroke-width="0.75" stroke-linecap="round" stroke-linejoin="round" /><path d="M655.6 500.3 C654.6 502.3 650.5 508.0 649.8 512.2 C649.1 516.5 651.4 520.9 651.5 525.7 C651.6 530.4 650.6 538.3 650.4 540.9" fill="none" stroke="#c6c3be" stroke-width="0.75" stroke-linecap="round" stroke-linejoin="round" /><path d="M786.8 206.3 C787.9 205.2 791.8 202.5 793.5 199.5 C795.1 196.5 796.1 190.3 796.6 188.4" fill="none" stroke="#c6c3be" stroke-width="0.75" stroke-linecap="round" stroke-linejoin="round" /><path d="M641.2 144.2 C641.7 145.7 644.0 150.4 644.4 153.4 C644.8 156.3 643.8 160.5 643.7 161.9" fill="none" stroke="#c6c3be" stroke-width="0.75" stroke-linecap="round" stroke-linejoin="round" /><path d="M682.9 141.8 C681.8 139.6 678.9 132.7 676.6 128.4 C674.3 124.1 670.7 120.1 669.1 116.0 C667.6 111.8 668.3 107.8 667.3 103.4 C666.3 99.1 663.8 92.1 663.1 89.9" fill="none" stroke="#c6c3be" stroke-width="0.75" stroke-linecap="round" stroke-linejoin="round" /><path d="M511.5 258.0 C510.4 260.2 507.0 268.0 504.9 271.3 C502.7 274.6 501.6 276.1 498.5 277.8 C495.4 279.6 490.3 281.1 486.0 281.9 C481.8 282.6 475.1 282.1 472.9 282.2" fill="none" stroke="#c6c3be" stroke-width="0.75" stroke-linecap="round" stroke-linejoin="round" /><path d="M576.3 279.4 C578.4 280.7 585.5 285.7 589.0 287.3 C592.6 288.9 594.5 288.9 597.5 288.8 C600.5 288.6 604.1 287.4 607.1 286.4 C610.0 285.4 613.9 283.4 615.2 282.8" fill="none" stroke="#c6c3be" stroke-width="0.75" stroke-linecap="round" stroke-linejoin="round" /><path d="M706.3 353.4 C707.3 353.7 709.7 353.8 712.6 354.9 C715.5 356.0 720.3 358.3 723.7 359.8 C727.1 361.3 729.8 363.5 733.0 364.1 C736.3 364.6 741.4 363.2 743.1 363.1" fill="none" stroke="#c6c3be" stroke-width="0.75" stroke-linecap="round" stroke-linejoin="round" /><path d="M669.1 292.0 C668.4 291.3 666.6 288.8 664.8 287.8 C663.0 286.8 660.6 288.0 658.2 285.9 C655.8 283.7 651.8 276.5 650.5 274.6" fill="none" stroke="#c6c3be" stroke-width="0.75" stroke-linecap="round" stroke-linejoin="round" /><path d="M488.2 162.9 C489.5 163.7 494.5 165.9 496.4 167.9 C498.3 170.0 498.8 172.2 499.5 175.2 C500.1 178.2 500.3 182.3 500.1 185.9 C500.0 189.4 498.9 194.7 498.7 196.5" fill="none" stroke="#c6c3be" stroke-width="0.75" stroke-linecap="round" stroke-linejoin="round" /><path d="M616.8 294.8 C617.0 296.1 617.2 299.3 617.8 302.6 C618.5 305.9 620.2 312.5 620.7 314.4" fill="none" stroke="#c6c3be" stroke-width="0.75" stroke-linecap="round" stroke-linejoin="round" /><path d="M706.3 222.6 C704.4 224.3 699.3 230.8 694.9 232.7 C690.5 234.6 685.0 233.7 680.1 234.0 C675.3 234.3 670.0 233.2 665.9 234.6 C661.8 236.0 657.4 241.3 655.7 242.6" fill="none" stroke="#c6c3be" stroke-width="0.75" stroke-linecap="round" stroke-linejoin="round" /><path d="M726.8 161.8 C724.6 162.0 717.9 161.6 713.9 162.6 C709.9 163.7 706.8 166.3 702.8 168.1 C698.9 169.9 693.7 171.1 690.2 173.6 C686.7 176.1 683.2 181.5 681.9 183.1" fill="none" stroke="#c6c3be" stroke-width="0.75" stroke-linecap="round" stroke-linejoin="round" /><path d="M660.9 161.7 C660.3 160.5 658.6 156.6 657.5 154.4 C656.4 152.1 654.8 149.2 654.3 148.2" fill="none" stroke="#c6c3be" stroke-width="0.75" stroke-linecap="round" stroke-linejoin="round" /><path d="M584.9 398.3 C585.4 396.4 587.8 390.5 587.7 386.6 C587.6 382.8 585.0 378.5 584.5 375.3 C584.1 372.1 584.5 369.9 585.2 367.4 C586.0 364.8 588.5 361.3 589.1 360.0" fill="none" stroke="#c6c3be" stroke-width="0.75" stroke-linecap="round" stroke-linejoin="round" /><path d="M666.7 434.5 C665.0 434.9 660.7 436.5 656.8 436.7 C652.8 437.0 645.3 436.1 643.0 435.9" fill="none" stroke="#c6c3be" stroke-width="0.75" stroke-linecap="round" stroke-linejoin="round" /><path d="M771.7 178.1 C770.4 178.2 767.2 177.6 763.8 178.8 C760.5 179.9 754.7 183.2 751.8 185.1 C748.9 187.1 747.5 189.5 746.6 190.4" fill="none" stroke="#c6c3be" stroke-width="0.75" stroke-linecap="round" stroke-linejoin="round" /><path d="M729.0 309.3 C729.9 308.5 733.0 307.6 734.1 304.1 C735.2 300.5 735.4 293.1 735.5 288.3 C735.6 283.4 734.7 277.2 734.6 275.0" fill="none" stroke="#c6c3be" stroke-width="0.75" stroke-linecap="round" stroke-linejoin="round" /><path d="M601.5 250.0 C601.6 248.3 603.0 243.2 602.1 239.6 C601.2 236.1 597.0 230.6 596.0 228.8" fill="none" stroke="#c6c3be" stroke-width="0.75" stroke-linecap="round" stroke-linejoin="round" /><path d="M747.6 160.4 C745.6 161.1 738.3 163.1 735.3 164.6 C732.2 166.0 731.6 167.2 729.4 169.2 C727.1 171.1 723.1 175.2 721.9 176.4" fill="none" stroke="#c6c3be" stroke-width="0.75" stroke-linecap="round" stroke-linejoin="round" /><path d="M615.2 175.2 C613.8 176.6 608.6 180.1 606.3 183.5 C604.1 186.9 602.7 193.4 601.9 195.4" fill="none" stroke="#c6c3be" stroke-width="0.75" stroke-linecap="round" stroke-linejoin="round" /><path d="M503.6 350.3 C503.7 352.7 504.5 360.1 503.8 364.4 C503.1 368.7 501.6 372.3 499.5 376.0 C497.4 379.7 494.6 383.7 491.1 386.5 C487.7 389.4 481.0 392.2 479.0 393.3" fill="none" stroke="#c6c3be" stroke-width="0.75" stroke-linecap="round" stroke-linejoin="round" /><path d="M740.0 209.0 C742.4 209.2 750.3 210.1 754.1 210.1 C757.9 210.0 761.4 209.0 762.8 208.8" fill="none" stroke="#c6c3be" stroke-width="0.75" stroke-linecap="round" stroke-linejoin="round" /><path d="M583.5 189.4 C585.5 188.5 592.6 185.9 595.8 184.0 C599.0 182.0 600.0 179.5 602.6 177.6 C605.3 175.8 609.3 173.7 611.8 172.9 C614.3 172.0 616.8 172.4 617.8 172.3" fill="none" stroke="#c6c3be" stroke-width="0.75" stroke-linecap="round" stroke-linejoin="round" /><path d="M532.2 292.7 C534.1 294.2 541.4 298.9 543.6 301.8 C545.8 304.7 545.6 307.1 545.5 310.0 C545.4 312.9 543.4 316.5 543.1 319.2 C542.8 322.0 543.6 325.2 543.7 326.3" fill="none" stroke="#c6c3be" stroke-width="0.75" stroke-linecap="round" stroke-linejoin="round" /><path d="M624.9 263.1 C623.8 265.2 620.0 271.2 618.7 275.3 C617.4 279.3 617.6 284.0 617.2 287.4 C616.9 290.9 616.3 293.3 616.7 296.1 C617.1 298.9 619.1 302.8 619.6 304.1" fill="none" stroke="#c6c3be" stroke-width="0.75" stroke-linecap="round" stroke-linejoin="round" /><path d="M574.1 452.6 C574.3 450.8 575.8 445.3 575.2 441.8 C574.7 438.2 571.5 432.9 570.8 431.1" fill="none" stroke="#c6c3be" stroke-width="0.75" stroke-linecap="round" stroke-linejoin="round" /><path d="M569.6 381.4 C571.9 381.1 578.9 379.8 583.0 379.6 C587.2 379.4 590.8 379.8 594.5 380.3 C598.2 380.8 603.6 382.3 605.4 382.8" fill="none" stroke="#c6c3be" stroke-width="0.75" stroke-linecap="round" stroke-linejoin="round" /><path d="M755.8 204.8 C757.7 205.2 763.7 205.7 767.0 207.6 C770.4 209.4 773.1 214.1 776.0 215.7 C778.8 217.2 780.5 216.3 784.0 216.9 C787.4 217.5 794.5 218.8 796.7 219.1" fill="none" stroke="#c6c3be" stroke-width="0.75" stroke-linecap="round" stroke-linejoin="round" /><path d="M572.4 406.8 C573.3 409.0 574.8 416.3 577.6 420.1 C580.4 424.0 586.1 428.1 589.2 429.9 C592.2 431.7 594.8 430.7 595.9 430.9" fill="none" stroke="#c6c3be" stroke-width="0.75" stroke-linecap="round" stroke-linejoin="round" /><path d="M669.6 385.8 C669.4 384.6 668.6 381.8 668.6 378.7 C668.7 375.6 669.1 371.5 669.6 367.3 C670.2 363.2 671.6 356.0 672.0 353.7" fill="none" stroke="#c6c3be" stroke-width="0.75" stroke-linecap="round" stroke-linejoin="round" /><path d="M575.7 404.4 C577.2 402.6 581.5 396.6 584.6 393.8 C587.7 391.0 590.9 388.6 594.3 387.6 C597.6 386.6 601.2 387.7 604.9 387.8 C608.6 388.0 614.6 388.3 616.5 388.4" fill="none" stroke="#c6c3be" stroke-width="0.75" stroke-linecap="round" stroke-linejoin="round" /><path d="M647.9 335.5 C649.1 334.8 652.7 331.9 655.4 331.1 C658.1 330.2 660.8 331.0 663.9 330.4 C667.1 329.9 670.5 329.2 674.5 327.7 C678.5 326.3 685.5 322.8 687.7 321.8" fill="none" stroke="#c6c3be" stroke-width="0.75" stroke-linecap="round" stroke-linejoin="round" /><path d="M621.9 180.6 C621.1 179.3 619.0 175.6 617.2 172.4 C615.5 169.2 612.2 163.1 611.2 161.3" fill="none" stroke="#c6c3be" stroke-width="0.75" stroke-linecap="round" stroke-linejoin="round" /><path d="M300.1 501.8 C299.0 501.2 295.6 499.0 293.5 498.1 C291.4 497.2 289.4 497.8 287.5 496.4 C285.7 494.9 283.3 490.6 282.5 489.5" fill="none" stroke="#c6c3be" stroke-width="0.75" stroke-linecap="round" stroke-linejoin="round" /><path d="M772.5 221.8 C770.6 222.1 765.2 221.5 761.5 223.4 C757.8 225.2 752.2 231.3 750.3 232.9" fill="none" stroke="#c6c3be" stroke-width="0.75" stroke-linecap="round" stroke-linejoin="round" /><path d="M675.3 278.6 C677.6 278.5 684.4 277.8 689.4 277.8 C694.3 277.9 702.5 278.7 705.1 278.9" fill="none" stroke="#c6c3be" stroke-width="0.75" stroke-linecap="round" stroke-linejoin="round" /><path d="M709.7 171.3 C710.5 170.5 713.0 168.5 714.7 166.5 C716.5 164.5 719.2 160.4 720.2 159.2" fill="none" stroke="#c6c3be" stroke-width="0.75" stroke-linecap="round" stroke-linejoin="round" /><path d="M627.0 394.0 C626.1 391.8 623.2 384.9 621.6 380.9 C619.9 376.9 617.7 373.8 616.8 370.0 C616.0 366.2 616.0 361.4 616.4 358.3 C616.8 355.1 618.8 352.2 619.3 351.0" fill="none" stroke="#c6c3be" stroke-width="0.75" stroke-linecap="round" stroke-linejoin="round" /><path d="M688.4 421.6 C688.9 420.6 691.4 418.9 691.5 415.8 C691.7 412.7 689.5 406.4 689.4 402.9 C689.2 399.4 690.4 396.2 690.7 394.8" fill="none" stroke="#c6c3be" stroke-width="0.75" stroke-linecap="round" stroke-linejoin="round" /><path d="M506.2 284.0 C505.8 282.0 505.5 275.9 503.6 272.4 C501.8 268.8 496.6 264.2 495.3 262.6" fill="none" stroke="#c6c3be" stroke-width="0.75" stroke-linecap="round" stroke-linejoin="round" /><path d="M642.3 154.4 C643.6 153.2 648.0 149.9 650.1 147.1 C652.1 144.3 653.1 141.0 654.6 137.7 C656.0 134.3 657.9 128.9 658.6 127.1" fill="none" stroke="#c6c3be" stroke-width="0.75" stroke-linecap="round" stroke-linejoin="round" /><path d="M722.8 323.5 C723.4 326.1 724.5 335.3 726.0 339.1 C727.4 343.0 730.0 342.9 731.6 346.4 C733.3 349.9 735.4 357.9 736.1 360.2" fill="none" stroke="#c6c3be" stroke-width="0.75" stroke-linecap="round" stroke-linejoin="round" /><path d="M749.4 204.1 C749.6 206.0 749.7 211.8 750.6 215.6 C751.5 219.4 752.3 223.4 754.8 227.0 C757.4 230.7 763.9 235.7 765.8 237.5" fill="none" stroke="#c6c3be" stroke-width="0.75" stroke-linecap="round" stroke-linejoin="round" /><path d="M637.2 355.0 C637.6 354.0 637.4 351.1 639.6 349.1 C641.8 347.2 648.6 344.3 650.5 343.3" fill="none" stroke="#c6c3be" stroke-width="0.75" stroke-linecap="round" stroke-linejoin="round" /><path d="M699.3 323.7 C698.5 321.5 696.2 314.2 694.9 310.4 C693.6 306.6 691.5 303.8 691.3 301.0 C691.1 298.2 692.4 297.0 693.4 293.9 C694.5 290.7 696.8 284.2 697.5 282.3" fill="none" stroke="#c6c3be" stroke-width="0.75" stroke-linecap="round" stroke-linejoin="round" /><path d="M672.4 335.6 C671.9 334.4 671.6 330.8 669.6 328.7 C667.6 326.5 661.9 323.6 660.4 322.6" fill="none" stroke="#c6c3be" stroke-width="0.75" stroke-linecap="round" stroke-linejoin="round" /><path d="M674.2 508.9 C672.9 508.2 668.5 506.9 666.2 504.5 C663.9 502.0 662.2 498.5 660.4 494.2 C658.6 490.0 657.5 483.2 655.5 479.1 C653.4 475.0 649.1 471.1 647.9 469.5" fill="none" stroke="#c6c3be" stroke-width="0.75" stroke-linecap="round" stroke-linejoin="round" /><path d="M634.6 462.2 C633.5 460.2 630.9 453.7 628.2 449.7 C625.5 445.8 621.8 441.4 618.2 438.6 C614.6 435.7 609.9 435.4 606.7 432.9 C603.5 430.4 600.3 425.1 599.0 423.5" fill="none" stroke="#c6c3be" stroke-width="0.75" stroke-linecap="round" stroke-linejoin="round" /><path d="M770.3 214.2 C772.1 214.4 778.1 216.0 781.3 215.5 C784.6 215.0 788.3 212.1 789.7 211.4" fill="none" stroke="#c6c3be" stroke-width="0.75" stroke-linecap="round" stroke-linejoin="round" /><path d="M681.7 471.8 C682.8 471.2 685.6 468.7 688.5 468.0 C691.5 467.2 695.8 468.0 699.4 467.3 C702.9 466.7 708.2 464.4 710.0 463.9" fill="none" stroke="#c6c3be" stroke-width="0.75" stroke-linecap="round" stroke-linejoin="round" /><path d="M775.2 221.0 C774.2 221.3 772.7 222.7 769.1 223.2 C765.5 223.7 757.5 223.7 753.7 224.0 C749.9 224.4 747.6 225.1 746.4 225.4" fill="none" stroke="#c6c3be" stroke-width="0.75" stroke-linecap="round" stroke-linejoin="round" /><path d="M490.3 212.6 C491.6 214.3 496.6 219.1 498.1 222.8 C499.5 226.6 499.1 231.6 498.9 235.2 C498.7 238.8 498.0 241.9 496.7 244.4 C495.5 246.9 492.4 249.4 491.5 250.3" fill="none" stroke="#c6c3be" stroke-width="0.75" stroke-linecap="round" stroke-linejoin="round" /><path d="M626.7 472.0 C627.0 470.8 627.3 467.8 628.8 465.2 C630.3 462.6 633.9 459.9 635.8 456.4 C637.6 452.8 639.1 446.0 639.8 444.0" fill="none" stroke="#c6c3be" stroke-width="0.75" stroke-linecap="round" stroke-linejoin="round" /><path d="M544.9 368.7 C542.8 367.7 536.8 364.4 532.4 363.0 C528.1 361.6 522.1 360.7 518.8 360.2 C515.5 359.7 513.7 360.0 512.6 360.0" fill="none" stroke="#c6c3be" stroke-width="0.75" stroke-linecap="round" stroke-linejoin="round" /><path d="M544.2 279.6 C545.8 278.5 551.3 274.4 554.0 273.1 C556.8 271.7 558.1 271.1 560.9 271.6 C563.6 272.1 568.9 275.3 570.5 276.1" fill="none" stroke="#c6c3be" stroke-width="0.75" stroke-linecap="round" stroke-linejoin="round" /><path d="M653.8 448.6 C653.9 447.3 654.0 443.7 654.1 441.0 C654.2 438.3 654.2 434.0 654.3 432.6" fill="none" stroke="#c6c3be" stroke-width="0.75" stroke-linecap="round" stroke-linejoin="round" /><path d="M433.6 211.0 C431.6 212.0 426.0 215.0 421.9 217.1 C417.7 219.2 412.0 221.6 408.7 223.5 C405.5 225.5 405.2 227.2 402.4 229.0 C399.6 230.7 393.5 233.4 391.8 234.3" fill="none" stroke="#c6c3be" stroke-width="0.75" stroke-linecap="round" stroke-linejoin="round" /><path d="M642.7 180.3 C645.0 180.3 651.8 179.5 656.1 180.5 C660.5 181.5 665.3 184.3 668.7 186.3 C672.1 188.2 673.1 190.9 676.5 192.2 C679.9 193.5 687.2 193.7 689.3 194.0" fill="none" stroke="#c6c3be" stroke-width="0.75" stroke-linecap="round" stroke-linejoin="round" /><path d="M768.8 192.9 C767.1 191.3 761.4 185.3 758.7 183.7 C755.9 182.1 753.4 183.2 752.4 183.1" fill="none" stroke="#c6c3be" stroke-width="0.75" stroke-linecap="round" stroke-linejoin="round" /><path d="M679.6 211.7 C678.0 213.2 672.7 218.4 669.7 220.3 C666.8 222.2 664.2 221.7 662.0 223.1 C659.8 224.4 658.3 225.3 656.5 228.4 C654.7 231.6 652.1 239.7 651.2 242.0" fill="none" stroke="#c6c3be" stroke-width="0.75" stroke-linecap="round" stroke-linejoin="round" /><path d="M487.7 181.9 C489.5 183.3 494.9 188.6 498.1 190.8 C501.4 192.9 504.3 193.4 507.1 194.6 C509.8 195.7 512.5 195.8 514.5 197.5 C516.5 199.3 518.2 204.0 519.0 205.2" fill="none" stroke="#c6c3be" stroke-width="0.75" stroke-linecap="round" stroke-linejoin="round" /><path d="M645.0 350.9 C643.0 349.4 635.9 345.5 633.3 342.4 C630.7 339.2 631.4 335.9 629.4 332.0 C627.4 328.2 622.6 321.4 621.3 319.3" fill="none" stroke="#c6c3be" stroke-width="0.75" stroke-linecap="round" stroke-linejoin="round" /><path d="M758.8 380.5 C756.6 380.1 750.4 377.8 745.6 378.2 C740.9 378.6 734.9 381.5 730.4 382.9 C726.0 384.4 720.8 386.1 718.9 386.8" fill="none" stroke="#c6c3be" stroke-width="0.75" stroke-linecap="round" stroke-linejoin="round" /><path d="M642.0 405.8 C640.3 404.6 635.3 400.4 631.8 398.7 C628.3 397.1 624.2 396.9 621.1 396.0 C618.1 395.0 614.8 393.6 613.5 393.2" fill="none" stroke="#c6c3be" stroke-width="0.75" stroke-linecap="round" stroke-linejoin="round" /><path d="M638.6 268.5 C640.3 269.7 645.4 274.3 649.0 275.9 C652.5 277.5 656.2 277.1 659.9 278.2 C663.7 279.4 669.5 282.0 671.4 282.8" fill="none" stroke="#c6c3be" stroke-width="0.75" stroke-linecap="round" stroke-linejoin="round" /><path d="M625.4 459.8 C624.9 458.7 623.3 455.4 622.5 453.2 C621.6 451.0 622.2 449.3 620.2 446.7 C618.3 444.1 612.3 439.1 610.7 437.6" fill="none" stroke="#c6c3be" stroke-width="0.75" stroke-linecap="round" stroke-linejoin="round" /><path d="M622.6 326.4 C624.3 324.8 630.6 319.7 632.9 316.8 C635.3 313.9 636.5 312.6 636.7 309.1 C637.0 305.6 635.0 298.1 634.6 295.9" fill="none" stroke="#c6c3be" stroke-width="0.75" stroke-linecap="round" stroke-linejoin="round" /><path d="M635.5 362.8 C634.0 360.9 629.4 354.8 626.7 351.4 C624.1 348.0 620.6 343.9 619.4 342.4" fill="none" stroke="#c6c3be" stroke-width="0.75" stroke-linecap="round" stroke-linejoin="round" /><path d="M501.5 153.9 C502.6 154.4 505.5 156.5 508.0 157.1 C510.5 157.7 515.0 157.4 516.4 157.5" fill="none" stroke="#c6c3be" stroke-width="0.75" stroke-linecap="round" stroke-linejoin="round" /><path d="M631.8 368.1 C632.8 366.5 637.1 362.6 638.0 358.8 C639.0 355.0 637.0 349.8 637.7 345.3 C638.3 340.9 640.8 335.3 641.8 332.1 C642.8 328.9 643.4 327.1 643.8 326.1" fill="none" stroke="#c6c3be" stroke-width="0.75" stroke-linecap="round" stroke-linejoin="round" /><path d="M709.8 330.5 C708.0 332.2 701.8 336.6 699.2 340.6 C696.6 344.5 694.9 351.8 694.0 354.1" fill="none" stroke="#c6c3be" stroke-width="0.75" stroke-linecap="round" stroke-linejoin="round" /><path d="M455.7 158.5 C453.7 158.0 447.3 157.4 444.0 155.4 C440.8 153.5 437.7 148.3 436.4 146.9" fill="none" stroke="#c6c3be" stroke-width="0.75" stroke-linecap="round" stroke-linejoin="round" /><path d="M601.7 223.5 C600.1 223.2 596.2 220.6 592.2 221.4 C588.3 222.1 580.4 226.8 578.0 227.9" fill="none" stroke="#c6c3be" stroke-width="0.75" stroke-linecap="round" stroke-linejoin="round" /><path d="M299.8 547.2 C298.4 547.4 294.2 547.0 291.3 548.3 C288.5 549.6 285.3 552.0 282.9 555.1 C280.6 558.2 278.2 564.9 277.3 566.9" fill="none" stroke="#c6c3be" stroke-width="0.75" stroke-linecap="round" stroke-linejoin="round" /><path d="M560.3 323.5 C558.0 324.7 550.2 328.6 546.9 330.5 C543.7 332.4 544.0 334.0 540.7 335.0 C537.4 336.0 531.2 335.0 527.1 336.4 C523.1 337.7 518.1 341.8 516.2 342.9" fill="none" stroke="#c6c3be" stroke-width="0.75" stroke-linecap="round" stroke-linejoin="round" /><path d="M589.2 193.1 C588.6 190.8 586.5 184.3 585.7 179.6 C584.8 174.9 584.3 167.4 584.0 165.0" fill="none" stroke="#c6c3be" stroke-width="0.75" stroke-linecap="round" stroke-linejoin="round" /><path d="M513.0 162.4 C513.9 161.5 515.8 158.8 518.1 156.6 C520.5 154.4 524.5 150.8 527.0 149.1 C529.5 147.5 532.2 147.2 533.2 146.8" fill="none" stroke="#c6c3be" stroke-width="0.75" stroke-linecap="round" stroke-linejoin="round" /><path d="M742.8 292.7 C741.3 292.4 737.5 291.1 733.5 290.8 C729.4 290.4 722.0 290.2 718.3 290.6 C714.7 290.9 712.5 292.5 711.4 292.8" fill="none" stroke="#c6c3be" stroke-width="0.75" stroke-linecap="round" stroke-linejoin="round" /><path d="M656.4 413.7 C655.4 414.1 653.0 415.6 650.2 416.3 C647.4 416.9 641.3 417.6 639.6 417.9" fill="none" stroke="#c6c3be" stroke-width="0.75" stroke-linecap="round" stroke-linejoin="round" /><path d="M603.6 504.7 C603.7 503.0 603.1 498.4 604.1 494.9 C605.1 491.4 606.9 487.3 609.7 483.5 C612.5 479.8 619.0 474.0 620.8 472.1" fill="none" stroke="#c6c3be" stroke-width="0.75" stroke-linecap="round" stroke-linejoin="round" /><path d="M569.0 263.0 C570.2 264.1 574.0 266.8 575.8 269.5 C577.6 272.3 578.2 276.1 579.6 279.6 C581.1 283.0 582.0 287.3 584.3 290.2 C586.7 293.2 592.3 296.1 593.9 297.3" fill="none" stroke="#c6c3be" stroke-width="0.75" stroke-linecap="round" stroke-linejoin="round" /><path d="M383.7 172.3 C383.6 171.3 382.6 168.4 383.1 166.3 C383.6 164.2 384.8 162.0 386.6 159.7 C388.4 157.5 392.4 155.9 394.0 152.6 C395.6 149.3 395.8 141.9 396.1 139.8" fill="none" stroke="#c6c3be" stroke-width="0.75" stroke-linecap="round" stroke-linejoin="round" /><path d="M665.7 178.9 C664.0 179.7 658.7 182.8 655.0 183.7 C651.4 184.7 646.6 183.6 644.0 184.5 C641.4 185.3 640.1 188.2 639.3 188.9" fill="none" stroke="#c6c3be" stroke-width="0.75" stroke-linecap="round" stroke-linejoin="round" /><path d="M420.7 142.7 C422.1 144.0 427.4 148.3 429.3 150.6 C431.1 152.9 431.5 154.4 432.1 156.6 C432.6 158.8 432.5 162.5 432.6 163.7" fill="none" stroke="#c6c3be" stroke-width="0.75" stroke-linecap="round" stroke-linejoin="round" /><path d="M692.9 364.0 C691.1 365.4 684.4 368.8 681.8 372.5 C679.3 376.2 679.5 383.0 677.6 386.0 C675.8 389.0 673.4 389.2 670.6 390.6 C667.8 392.0 662.4 393.8 660.7 394.4" fill="none" stroke="#c6c3be" stroke-width="0.75" stroke-linecap="round" stroke-linejoin="round" /><path d="M583.6 324.4 C585.7 322.7 592.6 317.0 595.8 314.1 C599.0 311.3 601.2 309.4 602.7 307.2 C604.1 304.9 604.2 301.8 604.5 300.7" fill="none" stroke="#c6c3be" stroke-width="0.75" stroke-linecap="round" stroke-linejoin="round" /><path d="M794.2 215.8 C796.1 215.5 802.3 214.4 805.2 214.1 C808.1 213.8 809.3 214.7 811.6 214.1 C814.0 213.5 815.7 210.6 819.1 210.6 C822.6 210.6 830.1 213.3 832.3 213.8" fill="none" stroke="#c6c3be" stroke-width="0.75" stroke-linecap="round" stroke-linejoin="round" /><path d="M521.2 190.4 C522.8 189.2 527.1 184.1 531.1 183.0 C535.1 181.8 541.6 182.6 545.0 183.5 C548.4 184.5 549.1 186.8 551.2 188.7 C553.3 190.6 556.4 194.0 557.5 195.0" fill="none" stroke="#c6c3be" stroke-width="0.75" stroke-linecap="round" stroke-linejoin="round" /><path d="M529.4 166.1 C530.9 165.3 535.3 163.5 537.9 161.0 C540.5 158.5 543.1 153.7 545.0 151.2 C546.9 148.8 548.6 147.0 549.3 146.2" fill="none" stroke="#c6c3be" stroke-width="0.75" stroke-linecap="round" stroke-linejoin="round" /><path d="M647.6 229.9 C647.7 230.9 649.2 233.0 648.0 236.0 C646.8 238.9 642.1 243.9 640.1 247.5 C638.2 251.1 636.9 255.9 636.2 257.6" fill="none" stroke="#c6c3be" stroke-width="0.75" stroke-linecap="round" stroke-linejoin="round" /><path d="M685.1 219.5 C683.6 221.1 678.7 226.7 676.1 229.0 C673.5 231.4 672.0 231.6 669.2 233.6 C666.5 235.5 661.4 239.7 659.9 240.9" fill="none" stroke="#c6c3be" stroke-width="0.75" stroke-linecap="round" stroke-linejoin="round" /><path d="M834.3 401.2 C835.7 400.0 840.8 396.3 842.6 394.1 C844.3 391.9 843.2 389.7 844.8 387.8 C846.3 386.0 850.6 383.8 851.7 383.0" fill="none" stroke="#c6c3be" stroke-width="0.75" stroke-linecap="round" stroke-linejoin="round" /><path d="M693.4 320.4 C695.6 321.0 703.3 323.4 706.7 324.1 C710.0 324.8 711.5 324.8 713.8 324.5 C716.1 324.2 717.9 323.4 720.5 322.1 C723.1 320.8 728.0 317.5 729.5 316.6" fill="none" stroke="#c6c3be" stroke-width="0.75" stroke-linecap="round" stroke-linejoin="round" /><path d="M600.1 388.5 C601.4 387.2 605.0 383.9 608.1 380.7 C611.1 377.5 614.9 371.5 618.3 369.3 C621.7 367.0 625.1 367.7 628.4 367.3 C631.6 366.8 636.2 366.6 637.7 366.5" fill="none" stroke="#c6c3be" stroke-width="0.75" stroke-linecap="round" stroke-linejoin="round" /><path d="M645.1 168.8 C646.2 171.1 650.1 178.9 651.6 182.5 C653.2 186.2 654.3 187.3 654.4 190.9 C654.5 194.6 652.5 202.2 652.1 204.5" fill="none" stroke="#c6c3be" stroke-width="0.75" stroke-linecap="round" stroke-linejoin="round" /><path d="M595.5 481.6 C594.1 483.2 589.6 488.6 587.1 491.0 C584.6 493.3 582.4 494.4 580.4 495.8 C578.4 497.2 576.0 498.7 575.1 499.3" fill="none" stroke="#c6c3be" stroke-width="0.75" stroke-linecap="round" stroke-linejoin="round" /><path d="M802.2 265.2 C803.2 265.1 806.4 265.6 808.3 264.7 C810.1 263.8 811.2 262.9 813.4 259.8 C815.6 256.8 820.3 248.6 821.7 246.3" fill="none" stroke="#c6c3be" stroke-width="0.75" stroke-linecap="round" stroke-linejoin="round" /><path d="M609.9 349.6 C608.4 351.2 602.9 354.9 601.3 359.1 C599.6 363.2 600.1 369.3 599.8 374.3 C599.5 379.3 599.5 386.7 599.5 389.2" fill="none" stroke="#c6c3be" stroke-width="0.75" stroke-linecap="round" stroke-linejoin="round" /><path d="M597.7 378.2 C596.8 376.0 594.4 369.1 592.0 365.1 C589.6 361.1 586.2 357.1 583.2 354.2 C580.3 351.3 576.8 349.6 574.3 347.6 C571.7 345.6 568.9 343.2 567.9 342.3" fill="none" stroke="#c6c3be" stroke-width="0.75" stroke-linecap="round" stroke-linejoin="round" /><path d="M670.6 308.1 C669.8 309.5 668.0 314.2 665.6 316.3 C663.1 318.3 659.7 318.5 656.2 320.6 C652.7 322.7 646.4 327.6 644.5 329.0" fill="none" stroke="#c6c3be" stroke-width="0.75" stroke-linecap="round" stroke-linejoin="round" /><path d="M662.7 358.8 C662.2 357.7 661.9 354.8 659.8 352.6 C657.6 350.3 652.6 348.0 649.7 345.2 C646.8 342.5 643.7 337.4 642.5 335.9" fill="none" stroke="#c6c3be" stroke-width="0.75" stroke-linecap="round" stroke-linejoin="round" /><path d="M621.8 151.4 C619.8 150.3 613.7 146.5 609.5 145.1 C605.2 143.8 598.3 143.6 596.1 143.3" fill="none" stroke="#c6c3be" stroke-width="0.75" stroke-linecap="round" stroke-linejoin="round" /><path d="M593.5 472.9 C591.4 472.9 584.4 473.8 581.0 472.9 C577.6 472.0 574.5 468.4 573.2 467.5" fill="none" stroke="#c6c3be" stroke-width="0.75" stroke-linecap="round" stroke-linejoin="round" /><path d="M581.6 222.2 C580.4 221.1 576.4 217.2 574.6 215.3 C572.7 213.4 571.1 211.6 570.4 210.9" fill="none" stroke="#c6c3be" stroke-width="0.75" stroke-linecap="round" stroke-linejoin="round" /><path d="M724.6 160.2 C726.3 162.1 732.2 168.9 735.0 171.6 C737.8 174.3 740.4 175.4 741.5 176.2" fill="none" stroke="#c6c3be" stroke-width="0.75" stroke-linecap="round" stroke-linejoin="round" /><path d="M586.9 274.4 C587.6 275.7 588.2 279.9 590.9 282.1 C593.6 284.4 599.9 286.2 603.0 287.9 C606.1 289.5 606.7 291.1 609.5 292.3 C612.2 293.4 617.9 294.2 619.5 294.6" fill="none" stroke="#c6c3be" stroke-width="0.75" stroke-linecap="round" stroke-linejoin="round" /><path d="M539.5 264.4 C538.5 263.6 535.1 261.6 533.4 259.7 C531.7 257.9 530.0 254.5 529.4 253.5" fill="none" stroke="#c6c3be" stroke-width="0.75" stroke-linecap="round" stroke-linejoin="round" /><path d="M504.9 159.2 C506.7 161.0 512.7 167.7 516.1 170.0 C519.6 172.2 521.4 171.5 525.5 172.8 C529.6 174.1 535.5 177.3 540.6 177.6 C545.7 178.0 553.6 175.3 556.2 174.8" fill="none" stroke="#c6c3be" stroke-width="0.75" stroke-linecap="round" stroke-linejoin="round" /><path d="M673.9 319.7 C673.0 318.1 669.6 312.8 668.3 310.2 C667.0 307.7 666.3 307.7 665.9 304.3 C665.6 300.9 666.3 292.2 666.4 289.7" fill="none" stroke="#c6c3be" stroke-width="0.75" stroke-linecap="round" stroke-linejoin="round" /><path d="M753.7 368.4 C753.4 369.4 752.3 371.0 751.7 374.6 C751.1 378.2 749.8 385.3 750.2 390.0 C750.6 394.7 751.4 399.2 754.0 402.7 C756.7 406.2 764.2 409.8 766.3 411.2" fill="none" stroke="#c6c3be" stroke-width="0.75" stroke-linecap="round" stroke-linejoin="round" /><path d="M531.9 264.6 C533.0 263.0 536.5 257.9 538.0 254.9 C539.5 252.0 540.4 249.9 541.2 247.1 C541.9 244.3 542.1 239.6 542.3 238.1" fill="none" stroke="#c6c3be" stroke-width="0.75" stroke-linecap="round" stroke-linejoin="round" /><path d="M428.8 211.4 C431.0 212.0 438.2 214.7 442.0 214.7 C445.7 214.7 447.2 212.7 451.2 211.4 C455.2 210.2 463.6 207.9 466.1 207.2" fill="none" stroke="#c6c3be" stroke-width="0.75" stroke-linecap="round" stroke-linejoin="round" /><path d="M661.5 427.4 C663.2 426.2 668.2 421.5 671.7 420.1 C675.2 418.6 680.7 419.0 682.5 418.8" fill="none" stroke="#c6c3be" stroke-width="0.75" stroke-linecap="round" stroke-linejoin="round" /><path d="M697.0 137.7 C695.7 137.4 692.0 136.4 689.2 136.1 C686.4 135.7 683.2 136.0 680.0 135.6 C676.8 135.1 673.9 134.1 670.0 133.6 C666.1 133.1 658.7 132.9 656.4 132.8" fill="none" stroke="#c6c3be" stroke-width="0.75" stroke-linecap="round" stroke-linejoin="round" /><path d="M714.5 177.2 C716.6 176.0 722.7 172.1 727.0 169.9 C731.4 167.7 736.2 164.8 740.5 164.0 C744.7 163.2 748.3 165.0 752.5 165.2 C756.8 165.4 763.9 165.3 766.2 165.3" fill="none" stroke="#c6c3be" stroke-width="0.75" stroke-linecap="round" stroke-linejoin="round" /><path d="M698.5 169.7 C696.9 171.3 691.7 176.6 689.0 178.9 C686.3 181.2 683.5 182.9 682.4 183.7" fill="none" stroke="#c6c3be" stroke-width="0.75" stroke-linecap="round" stroke-linejoin="round" /><path d="M403.8 174.5 C406.2 173.5 413.3 170.6 418.1 168.4 C422.8 166.2 429.3 163.8 432.3 161.4 C435.2 159.0 435.1 155.4 435.7 154.2" fill="none" stroke="#c6c3be" stroke-width="0.75" stroke-linecap="round" stroke-linejoin="round" /><path d="M611.2 217.4 C612.8 216.6 617.2 214.0 620.7 212.7 C624.3 211.4 629.5 210.6 632.6 209.5 C635.7 208.4 638.3 206.5 639.4 205.9" fill="none" stroke="#c6c3be" stroke-width="0.75" stroke-linecap="round" stroke-linejoin="round" /><path d="M579.5 178.0 C579.7 176.1 581.1 171.0 580.6 166.5 C580.0 162.1 576.8 155.8 576.1 151.5 C575.3 147.2 575.8 144.1 575.9 140.7 C576.0 137.4 576.7 133.0 576.9 131.4" fill="none" stroke="#c6c3be" stroke-width="0.75" stroke-linecap="round" stroke-linejoin="round" /><path d="M651.1 220.5 C651.4 218.6 652.8 212.8 653.3 209.2 C653.8 205.6 653.9 200.5 654.0 198.7" fill="none" stroke="#c6c3be" stroke-width="0.75" stroke-linecap="round" stroke-linejoin="round" /><path d="M530.4 231.5 C529.8 230.5 528.8 228.4 526.4 225.8 C524.1 223.1 519.3 217.6 516.3 215.6 C513.3 213.6 511.6 214.7 508.6 213.9 C505.6 213.1 499.9 211.3 498.1 210.7" fill="none" stroke="#c6c3be" stroke-width="0.75" stroke-linecap="round" stroke-linejoin="round" /><path d="M777.2 254.5 C774.8 254.8 767.0 256.2 762.7 256.6 C758.4 257.0 754.5 257.7 751.5 257.0 C748.4 256.3 745.6 253.3 744.4 252.5" fill="none" stroke="#c6c3be" stroke-width="0.75" stroke-linecap="round" stroke-linejoin="round" /><path d="M619.0 283.5 C621.2 283.0 628.6 281.8 632.2 280.1 C635.9 278.5 638.3 274.6 641.0 273.6 C643.6 272.5 647.0 273.7 648.2 273.8" fill="none" stroke="#c6c3be" stroke-width="0.75" stroke-linecap="round" stroke-linejoin="round" /><path d="M681.2 213.1 C680.0 215.0 675.6 220.2 674.1 224.2 C672.7 228.2 673.5 232.9 672.5 237.2 C671.5 241.5 668.9 247.8 668.1 249.9" fill="none" stroke="#c6c3be" stroke-width="0.75" stroke-linecap="round" stroke-linejoin="round" /><path d="M646.8 160.6 C645.9 159.1 643.5 155.0 641.1 151.8 C638.6 148.5 633.6 142.9 632.1 141.2" fill="none" stroke="#c6c3be" stroke-width="0.75" stroke-linecap="round" stroke-linejoin="round" /><path d="M578.4 169.6 C579.9 167.9 585.1 162.9 587.7 159.4 C590.4 155.9 592.1 152.1 594.3 148.6 C596.5 145.0 599.9 141.3 601.0 138.1 C602.2 134.9 601.1 130.8 601.2 129.4" fill="none" stroke="#c6c3be" stroke-width="0.75" stroke-linecap="round" stroke-linejoin="round" /><path d="M596.3 146.4 C598.2 147.3 604.2 149.4 607.8 151.8 C611.4 154.3 614.0 158.7 618.1 161.2 C622.1 163.7 629.5 165.9 631.8 166.8" fill="none" stroke="#c6c3be" stroke-width="0.75" stroke-linecap="round" stroke-linejoin="round" /><path d="M596.4 267.7 C597.7 265.5 601.7 257.1 604.3 254.3 C606.8 251.5 609.2 251.1 611.5 250.7 C613.9 250.4 615.0 252.8 618.4 252.0 C621.8 251.2 629.7 246.9 631.9 245.9" fill="none" stroke="#c6c3be" stroke-width="0.75" stroke-linecap="round" stroke-linejoin="round" /><path d="M579.0 241.7 C578.4 243.0 578.1 247.1 575.3 249.5 C572.4 252.0 565.5 254.6 561.8 256.6 C558.1 258.6 555.6 259.8 552.9 261.5 C550.3 263.1 547.1 265.7 545.9 266.5" fill="none" stroke="#c6c3be" stroke-width="0.75" stroke-linecap="round" stroke-linejoin="round" /><path d="M616.0 195.1 C614.6 196.2 611.0 200.3 607.5 202.1 C604.1 203.9 598.6 203.6 595.3 205.8 C592.0 208.0 589.3 212.7 587.7 215.4 C586.1 218.0 585.9 220.7 585.5 221.8" fill="none" stroke="#c6c3be" stroke-width="0.75" stroke-linecap="round" stroke-linejoin="round" /><path d="M631.2 280.5 C632.1 278.7 635.3 273.6 636.3 270.1 C637.3 266.5 635.9 262.7 637.1 259.3 C638.4 255.9 640.6 252.3 643.8 249.6 C647.0 247.0 654.4 244.6 656.6 243.6" fill="none" stroke="#c6c3be" stroke-width="0.75" stroke-linecap="round" stroke-linejoin="round" /><path d="M501.9 230.3 C500.0 229.5 493.8 227.9 490.2 225.7 C486.5 223.4 482.3 220.2 479.8 216.9 C477.3 213.6 475.9 207.8 475.2 206.0" fill="none" stroke="#c6c3be" stroke-width="0.75" stroke-linecap="round" stroke-linejoin="round" /><path d="M570.2 409.7 C570.1 410.9 570.2 413.9 569.3 416.9 C568.3 419.9 566.8 425.0 564.4 427.6 C561.9 430.2 557.5 430.9 554.7 432.5 C551.8 434.1 548.6 436.5 547.4 437.3" fill="none" stroke="#c6c3be" stroke-width="0.75" stroke-linecap="round" stroke-linejoin="round" /><path d="M636.9 277.0 C636.2 277.8 635.0 280.5 632.8 282.0 C630.6 283.5 626.3 283.4 623.6 286.1 C620.9 288.7 618.4 294.7 616.7 297.8 C615.0 300.9 614.0 303.6 613.4 304.8" fill="none" stroke="#c6c3be" stroke-width="0.75" stroke-linecap="round" stroke-linejoin="round" /><path d="M694.7 333.7 C694.4 336.3 692.3 344.2 692.8 349.1 C693.4 353.9 697.1 360.7 698.0 363.1" fill="none" stroke="#c6c3be" stroke-width="0.75" stroke-linecap="round" stroke-linejoin="round" /><path d="M718.5 241.7 C720.3 241.4 725.1 241.8 728.9 240.1 C732.8 238.4 738.5 234.2 741.6 231.4 C744.8 228.6 745.6 225.0 747.9 223.1 C750.2 221.3 754.2 220.7 755.5 220.3" fill="none" stroke="#c6c3be" stroke-width="0.75" stroke-linecap="round" stroke-linejoin="round" /><path d="M490.8 154.2 C492.5 154.1 497.4 152.5 501.1 153.2 C504.8 153.9 508.7 157.5 512.9 158.4 C517.2 159.2 524.3 158.3 526.6 158.3" fill="none" stroke="#c6c3be" stroke-width="0.75" stroke-linecap="round" stroke-linejoin="round" /><path d="M595.2 266.7 C594.3 269.0 590.5 277.0 589.5 280.8 C588.6 284.7 590.6 286.7 589.7 289.7 C588.8 292.7 585.2 297.2 584.3 298.7" fill="none" stroke="#c6c3be" stroke-width="0.75" stroke-linecap="round" stroke-linejoin="round" /><path d="M718.1 358.8 C717.9 357.4 716.4 353.7 717.0 350.1 C717.5 346.4 720.2 340.7 721.1 336.8 C722.0 332.8 722.2 328.1 722.4 326.3" fill="none" stroke="#c6c3be" stroke-width="0.75" stroke-linecap="round" stroke-linejoin="round" /><path d="M555.4 275.6 C553.5 275.0 548.3 272.0 543.8 271.8 C539.4 271.6 533.7 273.1 528.7 274.3 C523.8 275.6 518.9 277.3 514.2 279.4 C509.4 281.5 502.5 285.7 500.2 286.9" fill="none" stroke="#c6c3be" stroke-width="0.75" stroke-linecap="round" stroke-linejoin="round" /><path d="M772.7 250.1 C775.3 249.5 783.9 249.0 788.0 246.3 C792.0 243.6 795.0 238.4 797.0 233.9 C799.1 229.4 799.6 221.9 800.2 219.5" fill="none" stroke="#c6c3be" stroke-width="0.75" stroke-linecap="round" stroke-linejoin="round" /><path d="M460.1 162.8 C459.9 161.5 459.6 157.9 458.9 155.0 C458.2 152.1 456.5 148.2 455.9 145.6 C455.3 143.0 455.2 140.6 455.0 139.6" fill="none" stroke="#c6c3be" stroke-width="0.75" stroke-linecap="round" stroke-linejoin="round" /><path d="M643.8 413.5 C643.3 415.5 642.1 421.2 640.5 425.6 C639.0 430.0 635.2 435.4 634.5 439.7 C633.8 444.1 635.9 449.6 636.2 451.6" fill="none" stroke="#c6c3be" stroke-width="0.75" stroke-linecap="round" stroke-linejoin="round" /><path d="M594.5 283.5 C594.9 281.9 595.1 276.7 596.9 274.0 C598.6 271.4 602.6 270.8 605.0 267.8 C607.5 264.9 610.4 258.4 611.5 256.5" fill="none" stroke="#c6c3be" stroke-width="0.75" stroke-linecap="round" stroke-linejoin="round" /><path d="M709.0 276.1 C710.0 276.4 712.3 276.0 715.3 278.2 C718.2 280.4 724.6 287.4 726.4 289.3" fill="none" stroke="#c6c3be" stroke-width="0.75" stroke-linecap="round" stroke-linejoin="round" /><path d="M596.3 233.9 C595.0 235.6 590.0 240.7 588.8 243.8 C587.5 246.9 588.9 251.2 588.9 252.7" fill="none" stroke="#c6c3be" stroke-width="0.75" stroke-linecap="round" stroke-linejoin="round" /><path d="M706.4 146.8 C707.7 145.9 712.2 143.6 714.1 141.3 C716.0 139.0 717.3 134.6 718.0 133.2" fill="none" stroke="#c6c3be" stroke-width="0.75" stroke-linecap="round" stroke-linejoin="round" /><path d="M863.6 320.8 C864.3 319.6 866.9 317.2 867.7 313.7 C868.5 310.3 867.1 304.3 868.2 300.2 C869.3 296.1 873.4 291.0 874.5 289.2" fill="none" stroke="#c6c3be" stroke-width="0.75" stroke-linecap="round" stroke-linejoin="round" /><path d="M515.5 270.3 C516.5 270.7 519.4 271.7 521.5 272.6 C523.6 273.4 525.4 273.1 528.3 275.4 C531.1 277.8 534.9 283.9 538.7 286.8 C542.5 289.7 549.0 292.0 551.1 293.0" fill="none" stroke="#c6c3be" stroke-width="0.75" stroke-linecap="round" stroke-linejoin="round" /><path d="M562.2 260.4 C561.6 261.5 559.5 264.6 558.8 266.9 C558.1 269.1 559.2 270.7 558.2 273.9 C557.1 277.1 553.3 284.2 552.3 286.2" fill="none" stroke="#c6c3be" stroke-width="0.75" stroke-linecap="round" stroke-linejoin="round" /><path d="M546.2 336.7 C545.1 335.7 541.6 333.8 539.4 330.7 C537.3 327.7 534.7 321.8 533.5 318.5 C532.3 315.2 532.6 312.2 532.4 311.0" fill="none" stroke="#c6c3be" stroke-width="0.75" stroke-linecap="round" stroke-linejoin="round" /><path d="M593.8 332.4 C596.2 332.2 604.3 331.5 608.2 330.8 C612.1 330.2 615.5 329.1 617.0 328.7" fill="none" stroke="#c6c3be" stroke-width="0.75" stroke-linecap="round" stroke-linejoin="round" /><path d="M509.5 216.8 C508.8 215.2 508.1 210.5 505.4 207.2 C502.7 204.0 496.6 201.0 493.0 197.3 C489.5 193.6 485.5 187.0 484.0 185.0" fill="none" stroke="#c6c3be" stroke-width="0.75" stroke-linecap="round" stroke-linejoin="round" /><path d="M497.1 248.0 C499.4 247.2 507.0 244.4 510.8 243.3 C514.5 242.2 517.5 242.7 519.7 241.6 C521.9 240.5 522.3 239.7 524.0 236.5 C525.7 233.3 528.8 224.7 529.8 222.3" fill="none" stroke="#c6c3be" stroke-width="0.75" stroke-linecap="round" stroke-linejoin="round" /><path d="M504.2 189.2 C505.4 187.6 509.3 182.5 511.7 179.7 C514.0 176.9 517.1 173.6 518.2 172.4" fill="none" stroke="#c6c3be" stroke-width="0.75" stroke-linecap="round" stroke-linejoin="round" /><path d="M649.8 220.2 C651.3 221.2 656.0 223.9 659.0 226.1 C662.1 228.4 664.8 231.4 667.9 233.6 C671.0 235.7 675.9 238.1 677.5 239.1" fill="none" stroke="#c6c3be" stroke-width="0.75" stroke-linecap="round" stroke-linejoin="round" /><path d="M502.4 192.7 C500.5 193.4 494.9 195.6 491.0 197.3 C487.1 198.9 480.9 201.7 478.9 202.6" fill="none" stroke="#c6c3be" stroke-width="0.75" stroke-linecap="round" stroke-linejoin="round" /><path d="M669.9 259.4 C671.4 257.8 675.2 253.1 678.6 250.0 C681.9 247.0 686.0 243.8 690.0 241.2 C694.0 238.7 700.4 235.7 702.5 234.6" fill="none" stroke="#c6c3be" stroke-width="0.75" stroke-linecap="round" stroke-linejoin="round" /><path d="M601.3 365.7 C601.3 364.3 600.4 361.0 601.2 357.8 C602.0 354.6 603.2 350.1 605.9 346.4 C608.7 342.8 614.6 338.9 617.7 335.8 C620.8 332.6 623.5 328.9 624.7 327.5" fill="none" stroke="#c6c3be" stroke-width="0.75" stroke-linecap="round" stroke-linejoin="round" /><path d="M785.8 255.1 C784.5 253.2 779.6 248.1 777.8 244.0 C776.0 239.9 775.6 232.7 775.2 230.4" fill="none" stroke="#c6c3be" stroke-width="0.75" stroke-linecap="round" stroke-linejoin="round" /><path d="M659.8 133.6 C658.4 134.3 655.2 135.8 651.9 137.8 C648.5 139.8 641.5 144.4 639.4 145.7" fill="none" stroke="#c6c3be" stroke-width="0.75" stroke-linecap="round" stroke-linejoin="round" /><path d="M677.9 465.0 C676.8 465.8 673.2 467.7 671.2 469.5 C669.3 471.2 668.5 473.3 666.1 475.5 C663.8 477.7 660.1 481.2 657.1 482.8 C654.2 484.4 649.9 484.8 648.5 485.2" fill="none" stroke="#c6c3be" stroke-width="0.75" stroke-linecap="round" stroke-linejoin="round" /><path d="M822.6 388.1 C823.2 387.3 823.3 385.3 826.0 383.1 C828.7 380.8 835.4 376.6 839.0 374.7 C842.5 372.7 844.3 371.7 847.3 371.3 C850.3 371.0 855.2 372.6 856.8 372.8" fill="none" stroke="#c6c3be" stroke-width="0.75" stroke-linecap="round" stroke-linejoin="round" /><path d="M717.5 176.6 C715.0 177.3 705.8 179.3 702.5 180.9 C699.2 182.6 698.6 185.6 697.9 186.5" fill="none" stroke="#c6c3be" stroke-width="0.75" stroke-linecap="round" stroke-linejoin="round" /><path d="M575.7 194.1 C577.7 193.3 584.3 191.8 587.7 189.2 C591.0 186.6 594.1 182.9 595.7 178.6 C597.4 174.3 597.4 165.8 597.7 163.2" fill="none" stroke="#c6c3be" stroke-width="0.75" stroke-linecap="round" stroke-linejoin="round" /><path d="M483.0 158.1 C484.0 158.9 486.9 161.5 488.8 163.2 C490.7 164.8 493.5 167.3 494.4 168.2" fill="none" stroke="#c6c3be" stroke-width="0.75" stroke-linecap="round" stroke-linejoin="round" /><path d="M707.0 277.0 C706.9 275.4 706.8 270.1 706.8 267.5 C706.7 264.9 707.7 263.5 706.8 261.3 C705.9 259.2 704.1 256.8 701.3 254.6 C698.6 252.4 692.1 249.3 690.2 248.2" fill="none" stroke="#c6c3be" stroke-width="0.75" stroke-linecap="round" stroke-linejoin="round" /><path d="M691.4 337.9 C690.9 340.0 689.4 347.4 688.5 350.6 C687.6 353.9 686.5 356.4 686.1 357.5" fill="none" stroke="#c6c3be" stroke-width="0.75" stroke-linecap="round" stroke-linejoin="round" /><path d="M678.0 368.8 C678.8 369.6 679.7 372.0 682.8 373.7 C685.9 375.4 691.7 378.1 696.3 379.2 C701.0 380.4 708.5 380.2 710.9 380.4" fill="none" stroke="#c6c3be" stroke-width="0.75" stroke-linecap="round" stroke-linejoin="round" /><path d="M548.6 253.6 C547.5 254.1 544.4 254.7 542.0 257.0 C539.6 259.2 537.4 264.1 534.2 267.1 C531.0 270.1 524.8 273.6 522.9 274.9" fill="none" stroke="#c6c3be" stroke-width="0.75" stroke-linecap="round" stroke-linejoin="round" /><path d="M554.0 301.8 C556.3 301.6 564.0 300.7 567.8 300.2 C571.6 299.6 574.0 300.0 576.8 298.4 C579.6 296.9 581.9 293.6 584.8 290.8 C587.6 288.0 592.4 283.0 593.9 281.4" fill="none" stroke="#c6c3be" stroke-width="0.75" stroke-linecap="round" stroke-linejoin="round" /><path d="M632.9 252.1 C633.5 253.0 634.2 255.8 636.8 257.4 C639.3 259.0 643.8 260.3 648.2 261.7 C652.6 263.0 660.6 264.9 663.1 265.5" fill="none" stroke="#c6c3be" stroke-width="0.75" stroke-linecap="round" stroke-linejoin="round" /><path d="M504.0 317.0 C505.5 316.2 509.2 313.9 513.2 312.2 C517.3 310.5 523.2 308.8 528.1 306.9 C532.9 305.0 540.1 301.8 542.5 300.8" fill="none" stroke="#c6c3be" stroke-width="0.75" stroke-linecap="round" stroke-linejoin="round" /><path d="M579.8 232.1 C581.4 233.3 586.4 236.5 589.2 239.4 C592.0 242.2 595.4 247.6 596.7 249.3" fill="none" stroke="#c6c3be" stroke-width="0.75" stroke-linecap="round" stroke-linejoin="round" /><path d="M529.3 303.9 C531.1 303.3 537.1 301.4 540.3 300.5 C543.4 299.5 545.2 299.4 548.2 298.3 C551.2 297.3 556.6 294.7 558.3 294.0" fill="none" stroke="#c6c3be" stroke-width="0.75" stroke-linecap="round" stroke-linejoin="round" /><path d="M604.0 350.7 C604.7 351.9 606.5 355.8 608.3 358.1 C610.1 360.3 612.7 361.9 614.7 364.1 C616.8 366.3 619.7 370.2 620.7 371.4" fill="none" stroke="#c6c3be" stroke-width="0.75" stroke-linecap="round" stroke-linejoin="round" /><path d="M774.3 268.9 C775.2 268.5 777.2 267.4 779.9 266.6 C782.6 265.9 786.9 264.0 790.4 264.4 C794.0 264.8 798.3 268.0 801.2 269.2 C804.0 270.3 806.6 271.0 807.7 271.4" fill="none" stroke="#c6c3be" stroke-width="0.75" stroke-linecap="round" stroke-linejoin="round" /><path d="M881.8 505.5 C880.4 503.5 876.1 496.7 873.2 493.3 C870.3 489.8 865.8 486.3 864.4 484.9" fill="none" stroke="#c6c3be" stroke-width="0.75" stroke-linecap="round" stroke-linejoin="round" /><path d="M710.4 352.1 C710.7 350.3 711.3 344.3 712.1 341.6 C712.8 338.8 714.6 336.7 715.1 335.7" fill="none" stroke="#c6c3be" stroke-width="0.75" stroke-linecap="round" stroke-linejoin="round" /><path d="M625.9 260.8 C626.8 259.3 630.7 255.1 631.7 252.0 C632.7 249.0 631.9 244.1 632.0 242.5" fill="none" stroke="#c6c3be" stroke-width="0.75" stroke-linecap="round" stroke-linejoin="round" /><path d="M701.2 237.4 C701.3 235.5 700.5 230.2 702.0 226.3 C703.5 222.4 707.8 217.4 710.2 214.1 C712.6 210.7 713.6 207.9 716.3 206.1 C718.9 204.3 724.5 203.7 726.1 203.3" fill="none" stroke="#c6c3be" stroke-width="0.75" stroke-linecap="round" stroke-linejoin="round" /><path d="M616.6 431.0 C617.5 431.5 619.5 431.8 622.0 434.0 C624.5 436.1 628.8 441.1 631.5 443.7 C634.1 446.4 634.6 447.4 637.7 449.9 C640.8 452.5 648.0 457.4 650.1 458.9" fill="none" stroke="#c6c3be" stroke-width="0.75" stroke-linecap="round" stroke-linejoin="round" /><path d="M545.0 357.8 C543.1 359.3 536.6 363.2 533.1 366.7 C529.6 370.2 525.6 376.6 524.1 378.6" fill="none" stroke="#c6c3be" stroke-width="0.75" stroke-linecap="round" stroke-linejoin="round" /><path d="M747.5 310.6 C746.4 311.0 743.1 311.9 740.6 312.8 C738.2 313.7 735.7 314.1 732.8 316.1 C729.8 318.0 724.4 323.3 722.8 324.7" fill="none" stroke="#c6c3be" stroke-width="0.75" stroke-linecap="round" stroke-linejoin="round" /><path d="M693.6 371.2 C695.8 371.9 702.5 374.8 706.6 375.5 C710.6 376.3 716.1 375.6 717.9 375.6" fill="none" stroke="#c6c3be" stroke-width="0.75" stroke-linecap="round" stroke-linejoin="round" /><path d="M648.4 185.7 C649.5 187.2 653.5 192.0 655.0 194.8 C656.4 197.7 656.5 199.1 657.0 202.6 C657.5 206.2 657.2 212.2 658.0 216.2 C658.8 220.2 661.1 224.9 661.7 226.6" fill="none" stroke="#c6c3be" stroke-width="0.75" stroke-linecap="round" stroke-linejoin="round" /><path d="M528.9 272.9 C528.9 275.1 529.3 282.9 528.8 286.4 C528.4 289.8 527.4 290.4 526.2 293.8 C525.1 297.2 524.2 302.4 522.1 306.7 C520.0 310.9 515.0 317.2 513.6 319.3" fill="none" stroke="#c6c3be" stroke-width="0.75" stroke-linecap="round" stroke-linejoin="round" /><path d="M528.1 402.6 C525.8 401.8 517.8 398.7 514.1 397.5 C510.3 396.2 507.1 395.3 505.7 394.9" fill="none" stroke="#c6c3be" stroke-width="0.75" stroke-linecap="round" stroke-linejoin="round" /><path d="M553.2 178.1 C551.9 178.5 548.6 178.8 545.6 180.5 C542.5 182.3 537.6 185.6 535.0 188.6 C532.4 191.7 530.9 197.0 530.1 198.7" fill="none" stroke="#c6c3be" stroke-width="0.75" stroke-linecap="round" stroke-linejoin="round" /><path d="M679.0 350.1 C678.6 352.2 676.2 359.2 676.6 362.9 C677.1 366.7 680.9 370.9 681.8 372.5" fill="none" stroke="#c6c3be" stroke-width="0.75" stroke-linecap="round" stroke-linejoin="round" /><path d="M488.5 159.5 C487.9 158.6 485.9 156.7 484.6 154.1 C483.2 151.5 481.1 145.6 480.4 143.9" fill="none" stroke="#c6c3be" stroke-width="0.75" stroke-linecap="round" stroke-linejoin="round" /><path d="M724.8 221.7 C722.6 222.1 716.2 224.3 711.6 224.1 C706.9 224.0 699.2 221.3 696.7 220.7" fill="none" stroke="#c6c3be" stroke-width="0.75" stroke-linecap="round" stroke-linejoin="round" /><path d="M600.2 135.6 C600.3 134.6 600.7 133.0 601.1 129.5 C601.5 126.1 602.3 119.8 602.4 115.0 C602.5 110.3 601.1 105.4 601.8 101.0 C602.5 96.7 605.6 90.9 606.4 88.9" fill="none" stroke="#c6c3be" stroke-width="0.75" stroke-linecap="round" stroke-linejoin="round" /><path d="M613.5 447.8 C614.4 448.8 617.2 451.2 618.7 453.6 C620.2 456.0 621.6 459.4 622.3 462.3 C623.0 465.3 623.6 467.5 623.1 471.4 C622.7 475.3 620.1 483.4 619.5 485.8" fill="none" stroke="#c6c3be" stroke-width="0.75" stroke-linecap="round" stroke-linejoin="round" /><path d="M708.6 358.2 C707.9 359.5 706.2 362.4 704.8 366.1 C703.3 369.9 701.0 376.7 699.8 380.6 C698.7 384.6 698.3 385.7 697.6 389.6 C696.9 393.6 695.8 401.9 695.5 404.3" fill="none" stroke="#c6c3be" stroke-width="0.75" stroke-linecap="round" stroke-linejoin="round" /><path d="M605.1 150.0 C605.3 148.8 605.9 145.4 606.3 142.8 C606.8 140.2 608.2 137.9 607.6 134.6 C607.0 131.4 603.6 125.2 602.8 123.4" fill="none" stroke="#c6c3be" stroke-width="0.75" stroke-linecap="round" stroke-linejoin="round" /><path d="M558.9 491.4 C559.6 493.4 562.4 499.5 563.3 503.4 C564.2 507.3 564.6 512.1 564.4 514.9 C564.2 517.8 562.4 519.7 562.0 520.6" fill="none" stroke="#c6c3be" stroke-width="0.75" stroke-linecap="round" stroke-linejoin="round" /><path d="M582.0 203.2 C580.4 201.6 575.4 196.7 572.3 193.4 C569.2 190.2 566.9 186.0 563.3 183.7 C559.6 181.3 552.5 180.0 550.3 179.3" fill="none" stroke="#c6c3be" stroke-width="0.75" stroke-linecap="round" stroke-linejoin="round" /><path d="M723.2 342.2 C722.7 343.2 720.4 345.3 719.8 348.1 C719.3 350.8 720.0 357.0 720.1 358.7" fill="none" stroke="#c6c3be" stroke-width="0.75" stroke-linecap="round" stroke-linejoin="round" /><path d="M690.5 300.8 C690.9 302.0 692.2 305.2 692.8 307.8 C693.4 310.5 694.2 313.1 694.0 316.6 C693.8 320.0 691.1 324.1 691.6 328.5 C692.2 332.8 696.3 340.2 697.3 342.6" fill="none" stroke="#c6c3be" stroke-width="0.75" stroke-linecap="round" stroke-linejoin="round" /><path d="M573.0 178.6 C574.9 177.5 582.3 174.5 584.8 172.3 C587.4 170.1 586.8 167.3 588.2 165.5 C589.7 163.6 592.7 161.8 593.6 161.1" fill="none" stroke="#c6c3be" stroke-width="0.75" stroke-linecap="round" stroke-linejoin="round" /><path d="M768.2 232.7 C766.9 230.7 764.1 223.7 760.7 220.5 C757.3 217.4 751.5 215.6 747.7 213.8 C744.0 212.1 739.8 210.6 738.3 210.0" fill="none" stroke="#c6c3be" stroke-width="0.75" stroke-linecap="round" stroke-linejoin="round" /><path d="M563.9 279.3 C563.1 277.4 559.6 272.0 558.6 268.3 C557.7 264.6 558.1 260.4 558.3 257.2 C558.5 254.0 559.7 250.5 559.9 249.2" fill="none" stroke="#c6c3be" stroke-width="0.75" stroke-linecap="round" stroke-linejoin="round" /><path d="M792.4 275.2 C794.9 275.7 804.0 276.9 807.6 277.9 C811.1 279.0 811.7 279.7 813.9 281.7 C816.2 283.6 819.9 288.3 821.1 289.6" fill="none" stroke="#c6c3be" stroke-width="0.75" stroke-linecap="round" stroke-linejoin="round" /><path d="M494.4 200.0 C493.3 200.7 490.6 203.1 487.5 204.4 C484.4 205.8 477.8 207.5 475.9 208.1" fill="none" stroke="#c6c3be" stroke-width="0.75" stroke-linecap="round" stroke-linejoin="round" /><path d="M773.2 303.5 C771.6 305.5 765.6 311.8 763.9 315.4 C762.3 319.1 764.2 322.8 763.5 325.5 C762.8 328.2 762.5 329.7 759.9 331.5 C757.4 333.3 749.9 335.3 747.9 336.1" fill="none" stroke="#c6c3be" stroke-width="0.75" stroke-linecap="round" stroke-linejoin="round" /><path d="M694.5 384.5 C692.0 384.8 683.4 385.8 679.3 385.9 C675.3 386.0 671.7 385.2 670.2 385.1" fill="none" stroke="#c6c3be" stroke-width="0.75" stroke-linecap="round" stroke-linejoin="round" /><path d="M414.6 155.9 C415.8 156.8 419.3 159.4 421.8 161.7 C424.3 164.0 427.8 166.5 429.5 169.5 C431.2 172.6 431.4 178.3 431.8 180.0" fill="none" stroke="#c6c3be" stroke-width="0.75" stroke-linecap="round" stroke-linejoin="round" /><path d="M617.2 136.5 C619.2 135.8 626.6 133.9 629.2 132.3 C631.8 130.8 632.0 128.2 632.6 127.4" fill="none" stroke="#c6c3be" stroke-width="0.75" stroke-linecap="round" stroke-linejoin="round" /><path d="M613.7 291.3 C612.9 289.4 609.7 284.3 608.9 280.3 C608.2 276.3 609.3 269.6 609.4 267.4" fill="none" stroke="#c6c3be" stroke-width="0.75" stroke-linecap="round" stroke-linejoin="round" /><path d="M618.3 339.9 C620.1 341.4 625.7 346.3 629.2 348.5 C632.6 350.7 635.5 351.1 639.2 352.9 C642.9 354.7 649.1 358.2 651.1 359.3" fill="none" stroke="#c6c3be" stroke-width="0.75" stroke-linecap="round" stroke-linejoin="round" /><path d="M710.7 339.3 C712.0 339.2 715.2 339.0 718.7 338.6 C722.2 338.2 729.5 337.0 731.6 336.7" fill="none" stroke="#c6c3be" stroke-width="0.75" stroke-linecap="round" stroke-linejoin="round" /><path d="M710.4 202.9 C712.6 203.7 720.8 205.3 723.9 207.4 C727.1 209.4 728.3 212.8 729.4 215.4 C730.4 218.0 730.9 219.7 730.3 222.9 C729.7 226.1 726.5 232.8 725.8 234.8" fill="none" stroke="#c6c3be" stroke-width="0.75" stroke-linecap="round" stroke-linejoin="round" /><path d="M497.1 291.9 C498.6 293.5 502.6 299.1 506.3 301.2 C509.9 303.2 514.6 304.3 519.1 304.1 C523.5 303.9 528.9 301.8 532.7 300.0 C536.5 298.1 540.2 294.2 541.7 293.0" fill="none" stroke="#c6c3be" stroke-width="0.75" stroke-linecap="round" stroke-linejoin="round" /><path d="M822.0 187.3 C819.7 188.0 812.5 189.7 808.4 191.4 C804.3 193.0 799.2 196.2 797.3 197.1" fill="none" stroke="#c6c3be" stroke-width="0.75" stroke-linecap="round" stroke-linejoin="round" /><path d="M637.9 367.7 C637.9 368.9 639.3 371.3 638.1 374.7 C636.9 378.1 633.1 384.6 630.7 388.2 C628.2 391.7 624.5 394.8 623.3 396.1" fill="none" stroke="#c6c3be" stroke-width="0.75" stroke-linecap="round" stroke-linejoin="round" /><path d="M581.4 158.7 C582.4 158.6 585.4 159.0 587.4 157.8 C589.3 156.6 590.9 154.8 592.9 151.7 C594.8 148.6 598.1 142.4 599.1 139.1 C600.1 135.8 598.8 133.1 598.8 131.9" fill="none" stroke="#c6c3be" stroke-width="0.75" stroke-linecap="round" stroke-linejoin="round" /><path d="M826.9 356.0 C827.9 355.2 830.2 351.7 832.8 350.7 C835.4 349.7 839.0 350.1 842.4 349.9 C845.7 349.8 849.4 349.1 852.9 349.8 C856.3 350.5 861.5 353.4 863.2 354.1" fill="none" stroke="#c6c3be" stroke-width="0.75" stroke-linecap="round" stroke-linejoin="round" /><path d="M640.2 423.9 C638.5 425.7 632.8 432.3 629.8 434.9 C626.7 437.4 623.1 438.6 621.8 439.3" fill="none" stroke="#c6c3be" stroke-width="0.75" stroke-linecap="round" stroke-linejoin="round" /><path d="M652.5 463.8 C651.7 465.6 649.2 472.0 647.4 474.6 C645.5 477.1 642.4 478.5 641.4 479.3" fill="none" stroke="#c6c3be" stroke-width="0.75" stroke-linecap="round" stroke-linejoin="round" /><path d="M480.0 213.7 C478.3 215.6 472.3 222.4 470.0 225.2 C467.6 228.1 466.8 227.8 465.9 230.9 C465.0 234.1 464.8 240.1 464.5 244.2 C464.1 248.3 463.9 253.7 463.7 255.6" fill="none" stroke="#c6c3be" stroke-width="0.75" stroke-linecap="round" stroke-linejoin="round" /><path d="M603.7 245.5 C602.8 244.5 600.5 242.0 598.6 239.9 C596.7 237.8 593.2 234.2 592.1 233.0" fill="none" stroke="#c6c3be" stroke-width="0.75" stroke-linecap="round" stroke-linejoin="round" /><path d="M618.2 172.7 C619.0 173.9 619.8 177.9 622.9 180.0 C625.9 182.1 633.4 184.1 636.6 185.5 C639.8 187.0 641.1 188.0 642.0 188.5" fill="none" stroke="#c6c3be" stroke-width="0.75" stroke-linecap="round" stroke-linejoin="round" /><path d="M606.5 449.4 C604.4 448.1 597.4 443.3 593.6 441.9 C589.8 440.6 587.3 442.1 583.7 441.4 C580.0 440.6 573.5 438.2 571.5 437.6" fill="none" stroke="#c6c3be" stroke-width="0.75" stroke-linecap="round" stroke-linejoin="round" /><path d="M614.6 252.7 C615.3 255.1 616.5 263.4 618.4 267.4 C620.4 271.3 624.8 274.7 626.1 276.2" fill="none" stroke="#c6c3be" stroke-width="0.75" stroke-linecap="round" stroke-linejoin="round" /><path d="M605.7 210.5 C604.6 211.3 602.2 214.1 599.2 215.5 C596.2 216.9 592.0 218.6 587.7 219.1 C583.4 219.6 575.7 218.4 573.3 218.3" fill="none" stroke="#c6c3be" stroke-width="0.75" stroke-linecap="round" stroke-linejoin="round" /><path d="M413.8 145.2 C412.2 147.2 406.7 153.1 403.9 157.1 C401.0 161.1 397.7 165.8 396.5 169.3 C395.2 172.9 396.3 176.9 396.3 178.4" fill="none" stroke="#c6c3be" stroke-width="0.75" stroke-linecap="round" stroke-linejoin="round" /><path d="M646.7 249.8 C646.2 251.6 643.8 256.5 644.0 260.2 C644.1 264.0 647.1 270.2 647.7 272.2" fill="none" stroke="#c6c3be" stroke-width="0.75" stroke-linecap="round" stroke-linejoin="round" /><path d="M773.6 299.0 C774.4 300.8 776.2 307.1 778.7 309.9 C781.1 312.7 785.5 313.5 788.4 315.8 C791.3 318.1 794.1 321.3 796.3 323.6 C798.4 326.0 800.5 328.9 801.3 329.9" fill="none" stroke="#c6c3be" stroke-width="0.75" stroke-linecap="round" stroke-linejoin="round" /><path d="M600.0 190.4 C600.7 189.6 602.5 188.1 604.3 185.4 C606.1 182.7 607.7 177.5 610.8 174.0 C613.9 170.5 620.8 166.2 622.8 164.7" fill="none" stroke="#c6c3be" stroke-width="0.75" stroke-linecap="round" stroke-linejoin="round" /><path d="M650.9 381.5 C650.0 382.2 647.0 382.5 645.2 385.2 C643.4 387.9 641.0 394.1 640.2 397.8 C639.4 401.5 640.9 404.8 640.1 407.5 C639.4 410.2 636.5 412.9 635.7 413.9" fill="none" stroke="#c6c3be" stroke-width="0.75" stroke-linecap="round" stroke-linejoin="round" /><path d="M654.8 495.6 C655.8 497.6 658.4 504.0 661.1 507.5 C663.9 511.0 669.6 515.0 671.3 516.5" fill="none" stroke="#c6c3be" stroke-width="0.75" stroke-linecap="round" stroke-linejoin="round" /><path d="M645.1 443.4 C643.8 445.0 640.5 450.4 637.4 453.3 C634.2 456.1 629.1 457.3 626.2 460.5 C623.4 463.8 620.9 468.3 620.2 472.7 C619.4 477.1 621.4 484.5 621.7 486.9" fill="none" stroke="#c6c3be" stroke-width="0.75" stroke-linecap="round" stroke-linejoin="round" /><path d="M605.9 451.8 C606.5 450.4 608.0 446.0 609.4 443.3 C610.8 440.7 613.0 438.4 614.2 435.7 C615.4 433.0 616.2 428.7 616.6 427.2" fill="none" stroke="#c6c3be" stroke-width="0.75" stroke-linecap="round" stroke-linejoin="round" /><path d="M657.1 209.9 C655.3 208.8 649.7 205.7 646.5 203.5 C643.4 201.3 640.8 199.8 638.1 196.7 C635.4 193.5 631.7 186.7 630.4 184.7" fill="none" stroke="#c6c3be" stroke-width="0.75" stroke-linecap="round" stroke-linejoin="round" /><path d="M657.6 273.0 C659.2 271.4 664.8 267.6 667.2 263.6 C669.7 259.6 671.5 251.4 672.3 249.0" fill="none" stroke="#c6c3be" stroke-width="0.75" stroke-linecap="round" stroke-linejoin="round" /><path d="M402.3 139.4 C403.1 140.0 404.3 142.3 407.0 143.1 C409.8 143.9 416.8 143.9 418.7 144.0" fill="none" stroke="#c6c3be" stroke-width="0.75" stroke-linecap="round" stroke-linejoin="round" /><path d="M712.4 221.7 C713.5 220.2 716.1 215.9 718.5 212.6 C720.9 209.2 725.4 203.5 726.8 201.7" fill="none" stroke="#c6c3be" stroke-width="0.75" stroke-linecap="round" stroke-linejoin="round" /><path d="M719.1 217.8 C720.5 217.7 724.2 216.4 727.4 217.1 C730.5 217.8 735.5 219.7 738.0 222.0 C740.5 224.4 741.7 229.7 742.5 231.3" fill="none" stroke="#c6c3be" stroke-width="0.75" stroke-linecap="round" stroke-linejoin="round" /><rect x="724.2" y="243.3" width="2.9" height="5.1" fill="#cfe8c4"/><rect x="711.1" y="311.9" width="4.2" height="5.9" fill="#cfe8c4"/><rect x="659.2" y="198.4" width="2.3" height="5.4" fill="#cfe8c4"/><rect x="301.3" y="506.4" width="2.1" height="5.0" fill="#cfe8c4"/><rect x="561.5" y="168.8" width="4.4" height="4.8" fill="#cfe8c4"/><rect x="617.1" y="236.3" width="3.7" height="4.5" fill="#cfe8c4"/><rect x="700.1" y="398.9" width="5.2" height="5.5" fill="#cfe8c4"/><rect x="674.0" y="166.4" width="5.1" height="5.9" fill="#cfe8c4"/><rect x="592.9" y="272.5" width="4.3" height="4.8" fill="#cfe8c4"/><rect x="540.9" y="359.6" width="3.3" height="4.9" fill="#cfe8c4"/><rect x="758.7" y="262.4" width="4.5" height="5.2" fill="#cfe8c4"/><rect x="631.7" y="270.4" width="5.6" height="3.0" fill="#cfe8c4"/><rect x="604.2" y="447.4" width="3.8" height="5.8" fill="#cfe8c4"/><rect x="573.5" y="301.1" width="2.5" height="2.9" fill="#cfe8c4"/><rect x="778.7" y="305.7" width="2.7" height="5.3" fill="#cfe8c4"/><rect x="684.3" y="236.2" width="4.9" height="6.0" fill="#cfe8c4"/><rect x="670.2" y="354.9" width="2.2" height="5.9" fill="#cfe8c4"/><rect x="534.1" y="162.2" width="4.7" height="2.6" fill="#cfe8c4"/><rect x="498.1" y="338.9" width="5.7" height="2.6" fill="#cfe8c4"/><defs><filter id="rough" x="-5%" y="-5%" width="110%" height="110%"><feTurbulence type="fractalNoise" baseFrequency="0.18" numOctaves="2" seed="3"/><feDisplacementMap in="SourceGraphic" scale="7"/></filter></defs><g filter="url(#rough)"><path d="M447.0 188.0 C445.8 192.5 443.2 206.3 440.0 215.0 C436.8 223.7 432.7 232.2 428.0 240.0 C423.3 247.8 416.0 253.7 412.0 262.0 C408.0 270.3 405.3 280.3 404.0 290.0 C402.7 299.7 404.7 311.7 404.0 320.0 C403.3 328.3 404.0 334.7 400.0 340.0 C396.0 345.3 384.7 346.2 380.0 352.0 C375.3 357.8 374.3 368.3 372.0 375.0 C369.7 381.7 367.0 389.2 366.0 392.0" fill="none" stroke="#d9ebcb" stroke-width="29" stroke-linecap="round" stroke-linejoin="round" /><path d="M395.0 190.0 C397.5 192.5 405.0 199.2 410.0 205.0 C415.0 210.8 421.7 219.2 425.0 225.0 C428.3 230.8 429.2 237.5 430.0 240.0" fill="none" stroke="#d9ebcb" stroke-width="19" stroke-linecap="round" stroke-linejoin="round" /><path d="M475.0 190.0 C472.5 192.5 464.2 200.0 460.0 205.0 C455.8 210.0 453.3 215.0 450.0 220.0 C446.7 225.0 441.7 232.5 440.0 235.0" fill="none" stroke="#d9ebcb" stroke-width="19" stroke-linecap="round" stroke-linejoin="round" /><path d="M490.0 205.0 C486.7 208.3 475.8 219.2 470.0 225.0 C464.2 230.8 457.5 237.5 455.0 240.0" fill="none" stroke="#d9ebcb" stroke-width="16" stroke-linecap="round" stroke-linejoin="round" /><path d="M465.0 250.0 C462.5 251.7 455.8 256.7 450.0 260.0 C444.2 263.3 435.3 266.7 430.0 270.0 C424.7 273.3 420.0 278.3 418.0 280.0" fill="none" stroke="#d9ebcb" stroke-width="16" stroke-linecap="round" stroke-linejoin="round" /><path d="M480.0 270.0 C475.8 271.7 463.3 277.5 455.0 280.0 C446.7 282.5 434.2 284.2 430.0 285.0" fill="none" stroke="#d9ebcb" stroke-width="15" stroke-linecap="round" stroke-linejoin="round" /><path d="M460.0 300.0 C456.7 301.7 446.7 307.0 440.0 310.0 C433.3 313.0 423.3 316.7 420.0 318.0" fill="none" stroke="#d9ebcb" stroke-width="17" stroke-linecap="round" stroke-linejoin="round" /><path d="M475.0 320.0 C471.7 320.8 462.5 323.3 455.0 325.0 C447.5 326.7 436.7 328.2 430.0 330.0 C423.3 331.8 417.5 335.0 415.0 336.0" fill="none" stroke="#d9ebcb" stroke-width="17" stroke-linecap="round" stroke-linejoin="round" /><path d="M475.0 345.0 C471.7 345.0 461.7 344.2 455.0 345.0 C448.3 345.8 440.8 348.8 435.0 350.0 C429.2 351.2 422.5 351.7 420.0 352.0" fill="none" stroke="#d9ebcb" stroke-width="16" stroke-linecap="round" stroke-linejoin="round" /><path d="M445.0 365.0 C442.5 364.2 435.0 362.5 430.0 360.0 C425.0 357.5 417.5 351.7 415.0 350.0" fill="none" stroke="#d9ebcb" stroke-width="15" stroke-linecap="round" stroke-linejoin="round" /><path d="M420.0 372.0 C418.7 370.3 414.0 365.7 412.0 362.0 C410.0 358.3 408.7 352.0 408.0 350.0" fill="none" stroke="#d9ebcb" stroke-width="14" stroke-linecap="round" stroke-linejoin="round" /><path d="M350.0 322.0 C352.5 324.2 360.0 331.2 365.0 335.0 C370.0 338.8 377.5 343.3 380.0 345.0" fill="none" stroke="#d9ebcb" stroke-width="16" stroke-linecap="round" stroke-linejoin="round" /><path d="M345.0 350.0 C347.5 350.8 355.5 353.3 360.0 355.0 C364.5 356.7 370.0 359.2 372.0 360.0" fill="none" stroke="#d9ebcb" stroke-width="14" stroke-linecap="round" stroke-linejoin="round" /><path d="M358.0 395.0 C359.2 393.3 362.7 388.8 365.0 385.0 C367.3 381.2 370.8 374.2 372.0 372.0" fill="none" stroke="#d9ebcb" stroke-width="15" stroke-linecap="round" stroke-linejoin="round" /><path d="M390.0 390.0 C389.2 388.0 386.7 382.2 385.0 378.0 C383.3 373.8 380.8 367.2 380.0 365.0" fill="none" stroke="#d9ebcb" stroke-width="13" stroke-linecap="round" stroke-linejoin="round" /><path d="M390.0 228.0 C391.7 231.7 397.5 243.8 400.0 250.0 C402.5 256.2 404.2 262.5 405.0 265.0" fill="none" stroke="#d9ebcb" stroke-width="15" stroke-linecap="round" stroke-linejoin="round" /><path d="M383.0 225.0 L395.0 240.0" fill="none" stroke="#d9ebcb" stroke-width="13" stroke-linecap="round" stroke-linejoin="round" /><path d="M420.0 195.0 C421.7 191.7 427.5 182.5 430.0 175.0 C432.5 167.5 434.2 154.2 435.0 150.0" fill="none" stroke="#d9ebcb" stroke-width="14" stroke-linecap="round" stroke-linejoin="round" /><path d="M455.0 170.0 L450.0 150.0" fill="none" stroke="#d9ebcb" stroke-width="13" stroke-linecap="round" stroke-linejoin="round" /><path d="M380.0 275.0 C382.0 276.7 388.7 281.7 392.0 285.0 C395.3 288.3 398.7 293.3 400.0 295.0" fill="none" stroke="#d9ebcb" stroke-width="13" stroke-linecap="round" stroke-linejoin="round" /><path d="M470.0 190.0 C471.7 187.5 476.7 180.0 480.0 175.0 C483.3 170.0 488.3 162.5 490.0 160.0" fill="none" stroke="#d9ebcb" stroke-width="13" stroke-linecap="round" stroke-linejoin="round" /><path d="M455.0 168.0 C457.5 170.0 464.5 176.3 470.0 180.0 C475.5 183.7 485.0 188.3 488.0 190.0" fill="none" stroke="#d9ebcb" stroke-width="14" stroke-linecap="round" stroke-linejoin="round" /><path d="M478.0 212.0 L494.0 228.0" fill="none" stroke="#d9ebcb" stroke-width="13" stroke-linecap="round" stroke-linejoin="round" /><path d="M466.0 140.0 L488.0 150.0" fill="none" stroke="#d9ebcb" stroke-width="12" stroke-linecap="round" stroke-linejoin="round" /><path d="M452.0 185.0 C453.7 187.2 459.0 193.0 462.0 198.0 C465.0 203.0 468.7 212.2 470.0 215.0" fill="none" stroke="#d9ebcb" stroke-width="13" stroke-linecap="round" stroke-linejoin="round" /><path d="M485.0 240.0 C482.5 240.8 475.0 243.3 470.0 245.0 C465.0 246.7 457.5 249.2 455.0 250.0" fill="none" stroke="#d9ebcb" stroke-width="13" stroke-linecap="round" stroke-linejoin="round" /><path d="M490.0 300.0 C486.7 301.7 475.8 307.5 470.0 310.0 C464.2 312.5 457.5 314.2 455.0 315.0" fill="none" stroke="#d9ebcb" stroke-width="13" stroke-linecap="round" stroke-linejoin="round" /><path d="M385.0 262.0 L395.0 275.0" fill="none" stroke="#d9ebcb" stroke-width="13" stroke-linecap="round" stroke-linejoin="round" /><path d="M340.0 300.0 C342.5 301.7 349.7 306.7 355.0 310.0 C360.3 313.3 369.2 318.3 372.0 320.0" fill="none" stroke="#d9ebcb" stroke-width="13" stroke-linecap="round" stroke-linejoin="round" /><path d="M465.0 375.0 C462.5 375.8 455.5 378.8 450.0 380.0 C444.5 381.2 435.0 381.7 432.0 382.0" fill="none" stroke="#d9ebcb" stroke-width="13" stroke-linecap="round" stroke-linejoin="round" /><path d="M400.0 395.0 C401.7 392.5 408.0 385.0 410.0 380.0 C412.0 375.0 411.7 367.5 412.0 365.0" fill="none" stroke="#d9ebcb" stroke-width="13" stroke-linecap="round" stroke-linejoin="round" /><path d="M360.0 410.0 L368.0 398.0" fill="none" stroke="#d9ebcb" stroke-width="12" stroke-linecap="round" stroke-linejoin="round" /><path d="M447.0 188.0 C445.8 192.5 443.2 206.3 440.0 215.0 C436.8 223.7 432.7 232.2 428.0 240.0 C423.3 247.8 416.0 253.7 412.0 262.0 C408.0 270.3 405.3 280.3 404.0 290.0 C402.7 299.7 404.7 311.7 404.0 320.0 C403.3 328.3 404.0 334.7 400.0 340.0 C396.0 345.3 384.7 346.2 380.0 352.0 C375.3 357.8 374.3 368.3 372.0 375.0 C369.7 381.7 367.0 389.2 366.0 392.0" fill="none" stroke="#a3d094" stroke-width="25" stroke-linecap="round" stroke-linejoin="round" /><path d="M395.0 190.0 C397.5 192.5 405.0 199.2 410.0 205.0 C415.0 210.8 421.7 219.2 425.0 225.0 C428.3 230.8 429.2 237.5 430.0 240.0" fill="none" stroke="#a3d094" stroke-width="15" stroke-linecap="round" stroke-linejoin="round" /><path d="M475.0 190.0 C472.5 192.5 464.2 200.0 460.0 205.0 C455.8 210.0 453.3 215.0 450.0 220.0 C446.7 225.0 441.7 232.5 440.0 235.0" fill="none" stroke="#a3d094" stroke-width="15" stroke-linecap="round" stroke-linejoin="round" /><path d="M490.0 205.0 C486.7 208.3 475.8 219.2 470.0 225.0 C464.2 230.8 457.5 237.5 455.0 240.0" fill="none" stroke="#a3d094" stroke-width="12" stroke-linecap="round" stroke-linejoin="round" /><path d="M465.0 250.0 C462.5 251.7 455.8 256.7 450.0 260.0 C444.2 263.3 435.3 266.7 430.0 270.0 C424.7 273.3 420.0 278.3 418.0 280.0" fill="none" stroke="#a3d094" stroke-width="12" stroke-linecap="round" stroke-linejoin="round" /><path d="M480.0 270.0 C475.8 271.7 463.3 277.5 455.0 280.0 C446.7 282.5 434.2 284.2 430.0 285.0" fill="none" stroke="#a3d094" stroke-width="11" stroke-linecap="round" stroke-linejoin="round" /><path d="M460.0 300.0 C456.7 301.7 446.7 307.0 440.0 310.0 C433.3 313.0 423.3 316.7 420.0 318.0" fill="none" stroke="#a3d094" stroke-width="13" stroke-linecap="round" stroke-linejoin="round" /><path d="M475.0 320.0 C471.7 320.8 462.5 323.3 455.0 325.0 C447.5 326.7 436.7 328.2 430.0 330.0 C423.3 331.8 417.5 335.0 415.0 336.0" fill="none" stroke="#a3d094" stroke-width="13" stroke-linecap="round" stroke-linejoin="round" /><path d="M475.0 345.0 C471.7 345.0 461.7 344.2 455.0 345.0 C448.3 345.8 440.8 348.8 435.0 350.0 C429.2 351.2 422.5 351.7 420.0 352.0" fill="none" stroke="#a3d094" stroke-width="12" stroke-linecap="round" stroke-linejoin="round" /><path d="M445.0 365.0 C442.5 364.2 435.0 362.5 430.0 360.0 C425.0 357.5 417.5 351.7 415.0 350.0" fill="none" stroke="#a3d094" stroke-width="11" stroke-linecap="round" stroke-linejoin="round" /><path d="M420.0 372.0 C418.7 370.3 414.0 365.7 412.0 362.0 C410.0 358.3 408.7 352.0 408.0 350.0" fill="none" stroke="#a3d094" stroke-width="10" stroke-linecap="round" stroke-linejoin="round" /><path d="M350.0 322.0 C352.5 324.2 360.0 331.2 365.0 335.0 C370.0 338.8 377.5 343.3 380.0 345.0" fill="none" stroke="#a3d094" stroke-width="12" stroke-linecap="round" stroke-linejoin="round" /><path d="M345.0 350.0 C347.5 350.8 355.5 353.3 360.0 355.0 C364.5 356.7 370.0 359.2 372.0 360.0" fill="none" stroke="#a3d094" stroke-width="10" stroke-linecap="round" stroke-linejoin="round" /><path d="M358.0 395.0 C359.2 393.3 362.7 388.8 365.0 385.0 C367.3 381.2 370.8 374.2 372.0 372.0" fill="none" stroke="#a3d094" stroke-width="11" stroke-linecap="round" stroke-linejoin="round" /><path d="M390.0 390.0 C389.2 388.0 386.7 382.2 385.0 378.0 C383.3 373.8 380.8 367.2 380.0 365.0" fill="none" stroke="#a3d094" stroke-width="9" stroke-linecap="round" stroke-linejoin="round" /><path d="M390.0 228.0 C391.7 231.7 397.5 243.8 400.0 250.0 C402.5 256.2 404.2 262.5 405.0 265.0" fill="none" stroke="#a3d094" stroke-width="11" stroke-linecap="round" stroke-linejoin="round" /><path d="M383.0 225.0 L395.0 240.0" fill="none" stroke="#a3d094" stroke-width="9" stroke-linecap="round" stroke-linejoin="round" /><path d="M420.0 195.0 C421.7 191.7 427.5 182.5 430.0 175.0 C432.5 167.5 434.2 154.2 435.0 150.0" fill="none" stroke="#a3d094" stroke-width="10" stroke-linecap="round" stroke-linejoin="round" /><path d="M455.0 170.0 L450.0 150.0" fill="none" stroke="#a3d094" stroke-width="9" stroke-linecap="round" stroke-linejoin="round" /><path d="M380.0 275.0 C382.0 276.7 388.7 281.7 392.0 285.0 C395.3 288.3 398.7 293.3 400.0 295.0" fill="none" stroke="#a3d094" stroke-width="9" stroke-linecap="round" stroke-linejoin="round" /><path d="M470.0 190.0 C471.7 187.5 476.7 180.0 480.0 175.0 C483.3 170.0 488.3 162.5 490.0 160.0" fill="none" stroke="#a3d094" stroke-width="9" stroke-linecap="round" stroke-linejoin="round" /><path d="M455.0 168.0 C457.5 170.0 464.5 176.3 470.0 180.0 C475.5 183.7 485.0 188.3 488.0 190.0" fill="none" stroke="#a3d094" stroke-width="10" stroke-linecap="round" stroke-linejoin="round" /><path d="M478.0 212.0 L494.0 228.0" fill="none" stroke="#a3d094" stroke-width="9" stroke-linecap="round" stroke-linejoin="round" /><path d="M466.0 140.0 L488.0 150.0" fill="none" stroke="#a3d094" stroke-width="8" stroke-linecap="round" stroke-linejoin="round" /><path d="M452.0 185.0 C453.7 187.2 459.0 193.0 462.0 198.0 C465.0 203.0 468.7 212.2 470.0 215.0" fill="none" stroke="#a3d094" stroke-width="9" stroke-linecap="round" stroke-linejoin="round" /><path d="M485.0 240.0 C482.5 240.8 475.0 243.3 470.0 245.0 C465.0 246.7 457.5 249.2 455.0 250.0" fill="none" stroke="#a3d094" stroke-width="9" stroke-linecap="round" stroke-linejoin="round" /><path d="M490.0 300.0 C486.7 301.7 475.8 307.5 470.0 310.0 C464.2 312.5 457.5 314.2 455.0 315.0" fill="none" stroke="#a3d094" stroke-width="9" stroke-linecap="round" stroke-linejoin="round" /><path d="M385.0 262.0 L395.0 275.0" fill="none" stroke="#a3d094" stroke-width="9" stroke-linecap="round" stroke-linejoin="round" /><path d="M340.0 300.0 C342.5 301.7 349.7 306.7 355.0 310.0 C360.3 313.3 369.2 318.3 372.0 320.0" fill="none" stroke="#a3d094" stroke-width="9" stroke-linecap="round" stroke-linejoin="round" /><path d="M465.0 375.0 C462.5 375.8 455.5 378.8 450.0 380.0 C444.5 381.2 435.0 381.7 432.0 382.0" fill="none" stroke="#a3d094" stroke-width="9" stroke-linecap="round" stroke-linejoin="round" /><path d="M400.0 395.0 C401.7 392.5 408.0 385.0 410.0 380.0 C412.0 375.0 411.7 367.5 412.0 365.0" fill="none" stroke="#a3d094" stroke-width="9" stroke-linecap="round" stroke-linejoin="round" /><path d="M360.0 410.0 L368.0 398.0" fill="none" stroke="#a3d094" stroke-width="8" stroke-linecap="round" stroke-linejoin="round" /><path d="M447.0 188.0 C445.8 192.5 443.2 206.3 440.0 215.0 C436.8 223.7 432.7 232.2 428.0 240.0 C423.3 247.8 416.0 253.7 412.0 262.0 C408.0 270.3 405.3 280.3 404.0 290.0 C402.7 299.7 404.7 311.7 404.0 320.0 C403.3 328.3 404.0 334.7 400.0 340.0 C396.0 345.3 384.7 346.2 380.0 352.0 C375.3 357.8 374.3 368.3 372.0 375.0 C369.7 381.7 367.0 389.2 366.0 392.0" fill="none" stroke="#c0deab" stroke-width="22" stroke-linecap="round" stroke-linejoin="round" /><path d="M395.0 190.0 C397.5 192.5 405.0 199.2 410.0 205.0 C415.0 210.8 421.7 219.2 425.0 225.0 C428.3 230.8 429.2 237.5 430.0 240.0" fill="none" stroke="#c0deab" stroke-width="12" stroke-linecap="round" stroke-linejoin="round" /><path d="M475.0 190.0 C472.5 192.5 464.2 200.0 460.0 205.0 C455.8 210.0 453.3 215.0 450.0 220.0 C446.7 225.0 441.7 232.5 440.0 235.0" fill="none" stroke="#c0deab" stroke-width="12" stroke-linecap="round" stroke-linejoin="round" /><path d="M490.0 205.0 C486.7 208.3 475.8 219.2 470.0 225.0 C464.2 230.8 457.5 237.5 455.0 240.0" fill="none" stroke="#c0deab" stroke-width="9" stroke-linecap="round" stroke-linejoin="round" /><path d="M465.0 250.0 C462.5 251.7 455.8 256.7 450.0 260.0 C444.2 263.3 435.3 266.7 430.0 270.0 C424.7 273.3 420.0 278.3 418.0 280.0" fill="none" stroke="#c0deab" stroke-width="9" stroke-linecap="round" stroke-linejoin="round" /><path d="M480.0 270.0 C475.8 271.7 463.3 277.5 455.0 280.0 C446.7 282.5 434.2 284.2 430.0 285.0" fill="none" stroke="#c0deab" stroke-width="8" stroke-linecap="round" stroke-linejoin="round" /><path d="M460.0 300.0 C456.7 301.7 446.7 307.0 440.0 310.0 C433.3 313.0 423.3 316.7 420.0 318.0" fill="none" stroke="#c0deab" stroke-width="10" stroke-linecap="round" stroke-linejoin="round" /><path d="M475.0 320.0 C471.7 320.8 462.5 323.3 455.0 325.0 C447.5 326.7 436.7 328.2 430.0 330.0 C423.3 331.8 417.5 335.0 415.0 336.0" fill="none" stroke="#c0deab" stroke-width="10" stroke-linecap="round" stroke-linejoin="round" /><path d="M475.0 345.0 C471.7 345.0 461.7 344.2 455.0 345.0 C448.3 345.8 440.8 348.8 435.0 350.0 C429.2 351.2 422.5 351.7 420.0 352.0" fill="none" stroke="#c0deab" stroke-width="9" stroke-linecap="round" stroke-linejoin="round" /><path d="M445.0 365.0 C442.5 364.2 435.0 362.5 430.0 360.0 C425.0 357.5 417.5 351.7 415.0 350.0" fill="none" stroke="#c0deab" stroke-width="8" stroke-linecap="round" stroke-linejoin="round" /><path d="M420.0 372.0 C418.7 370.3 414.0 365.7 412.0 362.0 C410.0 358.3 408.7 352.0 408.0 350.0" fill="none" stroke="#c0deab" stroke-width="7" stroke-linecap="round" stroke-linejoin="round" /><path d="M350.0 322.0 C352.5 324.2 360.0 331.2 365.0 335.0 C370.0 338.8 377.5 343.3 380.0 345.0" fill="none" stroke="#c0deab" stroke-width="9" stroke-linecap="round" stroke-linejoin="round" /><path d="M345.0 350.0 C347.5 350.8 355.5 353.3 360.0 355.0 C364.5 356.7 370.0 359.2 372.0 360.0" fill="none" stroke="#c0deab" stroke-width="7" stroke-linecap="round" stroke-linejoin="round" /><path d="M358.0 395.0 C359.2 393.3 362.7 388.8 365.0 385.0 C367.3 381.2 370.8 374.2 372.0 372.0" fill="none" stroke="#c0deab" stroke-width="8" stroke-linecap="round" stroke-linejoin="round" /><path d="M390.0 390.0 C389.2 388.0 386.7 382.2 385.0 378.0 C383.3 373.8 380.8 367.2 380.0 365.0" fill="none" stroke="#c0deab" stroke-width="6" stroke-linecap="round" stroke-linejoin="round" /><path d="M390.0 228.0 C391.7 231.7 397.5 243.8 400.0 250.0 C402.5 256.2 404.2 262.5 405.0 265.0" fill="none" stroke="#c0deab" stroke-width="8" stroke-linecap="round" stroke-linejoin="round" /><path d="M383.0 225.0 L395.0 240.0" fill="none" stroke="#c0deab" stroke-width="6" stroke-linecap="round" stroke-linejoin="round" /><path d="M420.0 195.0 C421.7 191.7 427.5 182.5 430.0 175.0 C432.5 167.5 434.2 154.2 435.0 150.0" fill="none" stroke="#c0deab" stroke-width="7" stroke-linecap="round" stroke-linejoin="round" /><path d="M455.0 170.0 L450.0 150.0" fill="none" stroke="#c0deab" stroke-width="6" stroke-linecap="round" stroke-linejoin="round" /><path d="M380.0 275.0 C382.0 276.7 388.7 281.7 392.0 285.0 C395.3 288.3 398.7 293.3 400.0 295.0" fill="none" stroke="#c0deab" stroke-width="6" stroke-linecap="round" stroke-linejoin="round" /><path d="M470.0 190.0 C471.7 187.5 476.7 180.0 480.0 175.0 C483.3 170.0 488.3 162.5 490.0 160.0" fill="none" stroke="#c0deab" stroke-width="6" stroke-linecap="round" stroke-linejoin="round" /><path d="M455.0 168.0 C457.5 170.0 464.5 176.3 470.0 180.0 C475.5 183.7 485.0 188.3 488.0 190.0" fill="none" stroke="#c0deab" stroke-width="7" stroke-linecap="round" stroke-linejoin="round" /><path d="M478.0 212.0 L494.0 228.0" fill="none" stroke="#c0deab" stroke-width="6" stroke-linecap="round" stroke-linejoin="round" /><path d="M466.0 140.0 L488.0 150.0" fill="none" stroke="#c0deab" stroke-width="5" stroke-linecap="round" stroke-linejoin="round" /><path d="M452.0 185.0 C453.7 187.2 459.0 193.0 462.0 198.0 C465.0 203.0 468.7 212.2 470.0 215.0" fill="none" stroke="#c0deab" stroke-width="6" stroke-linecap="round" stroke-linejoin="round" /><path d="M485.0 240.0 C482.5 240.8 475.0 243.3 470.0 245.0 C465.0 246.7 457.5 249.2 455.0 250.0" fill="none" stroke="#c0deab" stroke-width="6" stroke-linecap="round" stroke-linejoin="round" /><path d="M490.0 300.0 C486.7 301.7 475.8 307.5 470.0 310.0 C464.2 312.5 457.5 314.2 455.0 315.0" fill="none" stroke="#c0deab" stroke-width="6" stroke-linecap="round" stroke-linejoin="round" /><path d="M385.0 262.0 L395.0 275.0" fill="none" stroke="#c0deab" stroke-width="6" stroke-linecap="round" stroke-linejoin="round" /><path d="M340.0 300.0 C342.5 301.7 349.7 306.7 355.0 310.0 C360.3 313.3 369.2 318.3 372.0 320.0" fill="none" stroke="#c0deab" stroke-width="6" stroke-linecap="round" stroke-linejoin="round" /><path d="M465.0 375.0 C462.5 375.8 455.5 378.8 450.0 380.0 C444.5 381.2 435.0 381.7 432.0 382.0" fill="none" stroke="#c0deab" stroke-width="6" stroke-linecap="round" stroke-linejoin="round" /><path d="M400.0 395.0 C401.7 392.5 408.0 385.0 410.0 380.0 C412.0 375.0 411.7 367.5 412.0 365.0" fill="none" stroke="#c0deab" stroke-width="6" stroke-linecap="round" stroke-linejoin="round" /><path d="M360.0 410.0 L368.0 398.0" fill="none" stroke="#c0deab" stroke-width="5" stroke-linecap="round" stroke-linejoin="round" /><path d="M447.0 188.0 C445.8 192.5 443.2 206.3 440.0 215.0 C436.8 223.7 432.7 232.2 428.0 240.0 C423.3 247.8 416.0 253.7 412.0 262.0 C408.0 270.3 405.3 280.3 404.0 290.0 C402.7 299.7 404.7 311.7 404.0 320.0 C403.3 328.3 404.0 334.7 400.0 340.0 C396.0 345.3 384.7 346.2 380.0 352.0 C375.3 357.8 374.3 368.3 372.0 375.0 C369.7 381.7 367.0 389.2 366.0 392.0" fill="none" stroke="#a9d39a" stroke-width="9.9" stroke-linecap="round" stroke-linejoin="round" /><path d="M395.0 190.0 C397.5 192.5 405.0 199.2 410.0 205.0 C415.0 210.8 421.7 219.2 425.0 225.0 C428.3 230.8 429.2 237.5 430.0 240.0" fill="none" stroke="#a9d39a" stroke-width="5.4" stroke-linecap="round" stroke-linejoin="round" /><path d="M475.0 190.0 C472.5 192.5 464.2 200.0 460.0 205.0 C455.8 210.0 453.3 215.0 450.0 220.0 C446.7 225.0 441.7 232.5 440.0 235.0" fill="none" stroke="#a9d39a" stroke-width="5.4" stroke-linecap="round" stroke-linejoin="round" /><path d="M490.0 205.0 C486.7 208.3 475.8 219.2 470.0 225.0 C464.2 230.8 457.5 237.5 455.0 240.0" fill="none" stroke="#a9d39a" stroke-width="4.05" stroke-linecap="round" stroke-linejoin="round" /><path d="M465.0 250.0 C462.5 251.7 455.8 256.7 450.0 260.0 C444.2 263.3 435.3 266.7 430.0 270.0 C424.7 273.3 420.0 278.3 418.0 280.0" fill="none" stroke="#a9d39a" stroke-width="4.05" stroke-linecap="round" stroke-linejoin="round" /><path d="M480.0 270.0 C475.8 271.7 463.3 277.5 455.0 280.0 C446.7 282.5 434.2 284.2 430.0 285.0" fill="none" stroke="#a9d39a" stroke-width="3.6" stroke-linecap="round" stroke-linejoin="round" /><path d="M460.0 300.0 C456.7 301.7 446.7 307.0 440.0 310.0 C433.3 313.0 423.3 316.7 420.0 318.0" fill="none" stroke="#a9d39a" stroke-width="4.5" stroke-linecap="round" stroke-linejoin="round" /><path d="M475.0 320.0 C471.7 320.8 462.5 323.3 455.0 325.0 C447.5 326.7 436.7 328.2 430.0 330.0 C423.3 331.8 417.5 335.0 415.0 336.0" fill="none" stroke="#a9d39a" stroke-width="4.5" stroke-linecap="round" stroke-linejoin="round" /><path d="M475.0 345.0 C471.7 345.0 461.7 344.2 455.0 345.0 C448.3 345.8 440.8 348.8 435.0 350.0 C429.2 351.2 422.5 351.7 420.0 352.0" fill="none" stroke="#a9d39a" stroke-width="4.05" stroke-linecap="round" stroke-linejoin="round" /><path d="M445.0 365.0 C442.5 364.2 435.0 362.5 430.0 360.0 C425.0 357.5 417.5 351.7 415.0 350.0" fill="none" stroke="#a9d39a" stroke-width="3.6" stroke-linecap="round" stroke-linejoin="round" /><path d="M420.0 372.0 C418.7 370.3 414.0 365.7 412.0 362.0 C410.0 358.3 408.7 352.0 408.0 350.0" fill="none" stroke="#a9d39a" stroke-width="3.15" stroke-linecap="round" stroke-linejoin="round" /><path d="M350.0 322.0 C352.5 324.2 360.0 331.2 365.0 335.0 C370.0 338.8 377.5 343.3 380.0 345.0" fill="none" stroke="#a9d39a" stroke-width="4.05" stroke-linecap="round" stroke-linejoin="round" /><path d="M345.0 350.0 C347.5 350.8 355.5 353.3 360.0 355.0 C364.5 356.7 370.0 359.2 372.0 360.0" fill="none" stroke="#a9d39a" stroke-width="3.15" stroke-linecap="round" stroke-linejoin="round" /><path d="M358.0 395.0 C359.2 393.3 362.7 388.8 365.0 385.0 C367.3 381.2 370.8 374.2 372.0 372.0" fill="none" stroke="#a9d39a" stroke-width="3.6" stroke-linecap="round" stroke-linejoin="round" /><path d="M390.0 228.0 C391.7 231.7 397.5 243.8 400.0 250.0 C402.5 256.2 404.2 262.5 405.0 265.0" fill="none" stroke="#a9d39a" stroke-width="3.6" stroke-linecap="round" stroke-linejoin="round" /><path d="M420.0 195.0 C421.7 191.7 427.5 182.5 430.0 175.0 C432.5 167.5 434.2 154.2 435.0 150.0" fill="none" stroke="#a9d39a" stroke-width="3.15" stroke-linecap="round" stroke-linejoin="round" /><path d="M455.0 168.0 C457.5 170.0 464.5 176.3 470.0 180.0 C475.5 183.7 485.0 188.3 488.0 190.0" fill="none" stroke="#a9d39a" stroke-width="3.15" stroke-linecap="round" stroke-linejoin="round" /></g><path d="M592.0 168.0 L600.0 167.0 L604.0 178.0 L609.0 186.0 L617.0 194.0 L620.0 204.0 L622.0 214.0 L616.0 224.0 L606.0 229.0 L598.0 222.0 L588.0 212.0 L578.0 205.0 L572.0 198.0 L577.0 190.0 L586.0 184.0 L590.0 176.0Z" fill="#c8e3b7" stroke="#9fd092" stroke-width="3" stroke-linejoin="round"/><ellipse cx="620" cy="372" rx="6" ry="5" fill="#d0e5c1"/><ellipse cx="663" cy="447" rx="6" ry="4" fill="#d0e5c1"/><ellipse cx="860" cy="392" rx="4" ry="4" fill="#d0e5c1"/><ellipse cx="440" cy="135" rx="8" ry="4" fill="#d0e5c1"/><ellipse cx="590" cy="175" rx="4" ry="3" fill="#d0e5c1"/><ellipse cx="855" cy="140" rx="5" ry="3" fill="#d0e5c1"/><ellipse cx="900" cy="545" rx="18" ry="12" fill="#d0e5c1"/><ellipse cx="920" cy="560" rx="15" ry="8" fill="#d0e5c1"/><ellipse cx="850" cy="330" rx="4" ry="3" fill="#d0e5c1"/><ellipse cx="1028" cy="300" rx="5" ry="15" fill="#d0e5c1"/><path d="M867.0 545.0 C869.2 542.5 874.5 531.7 880.0 530.0 C885.5 528.3 893.3 532.5 900.0 535.0 C906.7 537.5 914.2 542.8 920.0 545.0 C925.8 547.2 932.5 547.5 935.0 548.0" fill="none" stroke="#d0e4c0" stroke-width="10" stroke-linecap="round" stroke-linejoin="round" /><path d="M487.0 531.0 C487.7 527.8 493.8 522.5 497.0 522.0 C500.2 521.5 503.8 525.0 506.0 528.0 C508.2 531.0 507.7 537.2 510.0 540.0 C512.3 542.8 517.3 541.7 520.0 545.0 C522.7 548.3 526.3 556.7 526.0 560.0 C525.7 563.3 521.3 565.8 518.0 565.0 C514.7 564.2 510.2 559.0 506.0 555.0 C501.8 551.0 496.2 545.0 493.0 541.0 C489.8 537.0 486.3 534.2 487.0 531.0Z" fill="none" stroke="#a3d096" stroke-width="2.2" stroke-linecap="round" stroke-linejoin="round" /><path d="M443.0 193.0 L448.0 205.0 L449.0 220.0 L448.0 228.0 L443.0 237.0 L437.0 246.0 L430.0 253.0 L422.0 262.0 L416.0 270.0 L411.0 285.0 L409.0 300.0 L407.0 315.0 L409.0 328.0 L415.0 336.0 L425.0 331.0 L439.0 326.0 L450.0 325.0 L451.0 329.0 L439.0 331.0 L425.0 337.0 L419.0 342.0 L419.0 355.0 L415.0 356.0 L412.0 345.0 L405.0 341.0 L398.0 343.0 L386.0 348.0 L379.0 351.0 L377.0 358.0 L378.0 370.0 L373.0 386.0 L366.0 387.0 L370.0 372.0 L370.0 358.0 L368.0 348.0 L376.0 341.0 L390.0 337.0 L399.0 332.0 L402.0 318.0 L401.0 300.0 L403.0 283.0 L407.0 270.0 L414.0 259.0 L420.0 250.0 L423.0 240.0 L424.0 231.0 L421.0 222.0 L423.0 211.0 L428.0 205.0 L436.0 197.0Z" fill="#aad3df"/><path d="M431 211 L438 216 L435 236 L430 222 Z" fill="#c2dfae"/><path d="M411.0 242.0 L413.0 260.0" fill="none" stroke="#aad3df" stroke-width="3" stroke-linecap="round" stroke-linejoin="round" /><path d="M425.0 342.0 L438.0 347.0" fill="none" stroke="#aad3df" stroke-width="3" stroke-linecap="round" stroke-linejoin="round" /><path d="M449.0 452.0 L451.0 440.0 L447.0 432.0 L453.0 425.0 L444.0 414.0 L445.0 405.0 L441.0 395.0 L449.0 400.0 L452.0 410.0 L457.0 415.0 L459.0 403.0 L455.0 388.0 L461.0 384.0 L463.0 398.0 L466.0 405.0 L472.0 395.0 L477.0 383.0 L481.0 385.0 L477.0 398.0 L488.0 393.0 L497.0 386.0 L500.0 389.0 L490.0 401.0 L480.0 410.0 L471.0 416.0 L480.0 418.0 L489.0 414.0 L486.0 421.0 L470.0 425.0 L458.0 427.0 L456.0 440.0 L455.0 452.0Z" fill="#aad3df"/><path d="M472 398 L480 392 L484 400 L476 408 Z" fill="#cdebc0"/><ellipse cx="570" cy="215" rx="6" ry="4" fill="#aad3df"/><ellipse cx="685" cy="364" rx="7" ry="3" fill="#aad3df"/><ellipse cx="945" cy="560" rx="8" ry="3" fill="#aad3df"/><rect x="1022" y="160" width="9" height="14" fill="#ebdfee"/><path d="M55.0 207.0 C54.7 209.5 50.5 217.8 53.0 222.0 C55.5 226.2 64.2 228.7 70.0 232.0 C75.8 235.3 82.7 237.8 88.0 242.0 C93.3 246.2 98.5 250.2 102.0 257.0 C105.5 263.8 104.7 275.5 109.0 283.0 C113.3 290.5 119.2 293.3 128.0 302.0 C136.8 310.7 150.8 326.7 162.0 335.0 C173.2 343.3 183.2 348.0 195.0 352.0 C206.8 356.0 222.7 355.5 233.0 359.0 C243.3 362.5 248.3 369.2 257.0 373.0 C265.7 376.8 277.8 379.2 285.0 382.0 C292.2 384.8 297.5 388.7 300.0 390.0" fill="none" stroke="#94cbde" stroke-width="1.3" stroke-linecap="round" stroke-linejoin="round" /><path d="M19.0 511.0 C19.8 513.0 20.5 522.3 24.0 523.0 C27.5 523.7 34.5 514.3 40.0 515.0 C45.5 515.7 49.5 523.2 57.0 527.0 C64.5 530.8 79.8 538.8 85.0 538.0 C90.2 537.2 85.5 525.8 88.0 522.0 C90.5 518.2 95.7 515.2 100.0 515.0 C104.3 514.8 111.2 521.7 114.0 521.0 C116.8 520.3 114.2 511.8 117.0 511.0 C119.8 510.2 124.7 515.2 131.0 516.0 C137.3 516.8 151.5 511.7 155.0 516.0 C158.5 520.3 150.8 537.0 152.0 542.0 C153.2 547.0 158.3 548.3 162.0 546.0 C165.7 543.7 169.3 534.2 174.0 528.0 C178.7 521.8 188.8 514.5 190.0 509.0 C191.2 503.5 179.3 498.5 181.0 495.0 C182.7 491.5 195.2 490.3 200.0 488.0 C204.8 485.7 209.2 484.0 210.0 481.0 C210.8 478.0 202.7 472.5 205.0 470.0 C207.3 467.5 219.3 465.2 224.0 466.0 C228.7 466.8 227.8 477.7 233.0 475.0 C238.2 472.3 249.0 454.3 255.0 450.0 C261.0 445.7 263.2 449.8 269.0 449.0 C274.8 448.2 283.2 446.5 290.0 445.0 C296.8 443.5 306.7 440.8 310.0 440.0" fill="none" stroke="#94cbde" stroke-width="1.3" stroke-linecap="round" stroke-linejoin="round" /><path d="M392.0 433.0 C393.7 436.2 394.7 444.7 402.0 452.0 C409.3 459.3 427.2 469.0 436.0 477.0 C444.8 485.0 450.3 492.3 455.0 500.0 C459.7 507.7 459.3 517.8 464.0 523.0 C468.7 528.2 474.2 527.3 483.0 531.0 C491.8 534.7 507.5 540.2 517.0 545.0 C526.5 549.8 532.8 554.2 540.0 560.0 C547.2 565.8 556.7 576.7 560.0 580.0" fill="none" stroke="#94cbde" stroke-width="1.3" stroke-linecap="round" stroke-linejoin="round" /><path d="M739.0 133.0 C740.8 136.8 747.2 148.3 750.0 156.0 C752.8 163.7 754.3 171.3 756.0 179.0 C757.7 186.7 760.0 195.0 760.0 202.0 C760.0 209.0 756.7 214.7 756.0 221.0 C755.3 227.3 755.3 234.7 756.0 240.0 C756.7 245.3 759.8 247.2 760.0 253.0 C760.2 258.8 757.8 267.2 757.0 275.0 C756.2 282.8 755.3 295.8 755.0 300.0" fill="none" stroke="#94cbde" stroke-width="1.3" stroke-linecap="round" stroke-linejoin="round" /><path d="M854.0 133.0 C855.7 137.2 861.5 149.7 864.0 158.0 C866.5 166.3 867.3 175.2 869.0 183.0 C870.7 190.8 871.5 196.3 874.0 205.0 C876.5 213.7 881.5 227.8 884.0 235.0 C886.5 242.2 884.8 241.7 889.0 248.0 C893.2 254.3 903.0 265.2 909.0 273.0 C915.0 280.8 919.8 287.2 925.0 295.0 C930.2 302.8 936.2 311.7 940.0 320.0 C943.8 328.3 945.0 337.5 948.0 345.0 C951.0 352.5 953.5 359.2 958.0 365.0 C962.5 370.8 970.5 375.8 975.0 380.0 C979.5 384.2 983.3 388.3 985.0 390.0" fill="none" stroke="#94cbde" stroke-width="1.3" stroke-linecap="round" stroke-linejoin="round" /><path d="M955.0 283.0 C955.6 283.9 957.5 286.6 958.7 288.5 C959.9 290.3 961.0 292.2 962.1 294.1 C963.1 296.0 964.2 298.2 965.0 300.0 C965.8 301.8 966.3 303.3 966.8 305.0 C967.2 306.7 967.2 308.5 967.8 310.2 C968.4 311.8 969.7 313.3 970.4 314.9 C971.0 316.5 971.5 318.2 972.0 319.9 C972.4 321.6 972.8 323.3 973.3 325.0 C973.8 326.7 974.1 328.6 975.0 330.0 C975.9 331.4 977.6 332.2 978.6 333.6 C979.6 334.9 980.0 336.7 980.9 338.1 C981.8 339.5 983.0 340.7 984.0 342.0 C985.0 343.3 985.9 344.8 986.9 346.1 C987.9 347.4 988.9 348.7 990.0 350.0 C991.1 351.3 992.2 352.7 993.5 353.7 C994.8 354.7 996.5 355.2 997.9 356.1 C999.3 357.0 1000.4 358.3 1001.9 359.2 C1003.3 360.0 1005.2 360.3 1006.5 361.3 C1007.9 362.2 1008.8 363.6 1010.0 365.0 C1011.2 366.4 1012.2 368.3 1013.6 369.6 C1015.1 370.8 1017.4 371.2 1018.9 372.5 C1020.3 373.8 1021.1 375.8 1022.4 377.2 C1023.7 378.7 1025.1 380.0 1026.6 381.2 C1028.0 382.5 1030.3 384.4 1031.0 385.0" fill="none" stroke="#94cbde" stroke-width="1.3" stroke-linecap="round" stroke-linejoin="round" /><path d="M745.0 283.0 C747.5 287.5 755.0 302.2 760.0 310.0 C765.0 317.8 770.0 324.2 775.0 330.0 C780.0 335.8 783.3 339.2 790.0 345.0 C796.7 350.8 806.7 356.7 815.0 365.0 C823.3 373.3 832.5 385.8 840.0 395.0 C847.5 404.2 854.2 410.8 860.0 420.0 C865.8 429.2 871.7 441.7 875.0 450.0 C878.3 458.3 879.2 466.7 880.0 470.0" fill="none" stroke="#94cbde" stroke-width="1.3" stroke-linecap="round" stroke-linejoin="round" /><path d="M1000.0 133.0 C1000.9 133.3 1003.6 133.9 1005.3 134.6 C1007.0 135.3 1008.6 136.4 1010.2 137.3 C1011.8 138.2 1013.3 139.7 1015.0 140.0 C1016.7 140.3 1018.6 139.4 1020.4 139.0 C1022.2 138.7 1024.0 138.3 1025.8 137.8 C1027.6 137.3 1030.1 136.3 1031.0 136.0" fill="none" stroke="#94cbde" stroke-width="1.3" stroke-linecap="round" stroke-linejoin="round" /><path d="M600.0 445.0 C600.6 445.8 602.8 448.0 603.9 449.6 C605.0 451.3 605.5 453.4 606.5 455.1 C607.6 456.8 608.9 458.5 610.0 460.0 C611.1 461.5 612.1 462.6 613.1 463.9 C614.0 465.3 614.8 466.8 615.7 468.2 C616.6 469.6 617.3 471.2 618.5 472.4 C619.6 473.6 621.5 474.3 622.6 475.6 C623.7 476.8 624.3 478.4 625.0 480.0 C625.7 481.6 626.0 483.7 626.8 485.3 C627.7 487.0 629.3 488.3 630.3 489.9 C631.3 491.4 632.1 493.1 632.9 494.8 C633.7 496.5 634.3 498.3 635.0 500.0 C635.7 501.7 636.5 503.5 637.3 505.1 C638.2 506.8 639.1 508.5 640.0 510.1 C640.8 511.8 641.7 513.4 642.6 515.1 C643.5 516.7 644.5 518.4 645.4 520.0 C646.3 521.7 647.6 524.2 648.0 525.0" fill="none" stroke="#94cbde" stroke-width="1.3" stroke-linecap="round" stroke-linejoin="round" /><path d="M245.0 171.0 C246.0 173.0 250.0 178.5 251.0 183.0 C252.0 187.5 249.5 194.2 251.0 198.0 C252.5 201.8 257.2 202.5 260.0 206.0 C262.8 209.5 264.5 216.2 268.0 219.0 C271.5 221.8 276.8 220.8 281.0 223.0 C285.2 225.2 289.8 228.5 293.0 232.0 C296.2 235.5 298.2 239.5 300.0 244.0 C301.8 248.5 300.2 254.8 304.0 259.0 C307.8 263.2 317.8 264.8 323.0 269.0 C328.2 273.2 331.2 278.8 335.0 284.0 C338.8 289.2 342.5 294.8 346.0 300.0 C349.5 305.2 352.8 310.0 356.0 315.0 C359.2 320.0 363.5 327.5 365.0 330.0" fill="none" stroke="#94cbde" stroke-width="1.3" stroke-linecap="round" stroke-linejoin="round" /><path d="M625.0 505.0 C625.6 505.7 627.5 507.5 628.6 509.0 C629.7 510.4 630.3 512.2 631.4 513.5 C632.5 514.9 634.2 515.8 635.3 517.2 C636.5 518.6 637.0 520.4 638.1 521.8 C639.2 523.2 640.9 524.2 642.0 525.6 C643.2 526.9 644.3 528.4 645.0 530.0 C645.7 531.6 645.8 533.4 646.4 535.1 C647.1 536.7 648.5 538.1 648.9 539.8 C649.4 541.5 648.8 543.6 649.2 545.3 C649.6 547.0 650.5 548.5 651.3 550.1 C652.2 551.7 653.4 553.1 654.0 554.8 C654.6 556.4 654.5 558.3 655.0 560.0 C655.5 561.7 656.3 563.2 656.8 564.9 C657.3 566.5 657.5 568.2 657.9 569.9 C658.2 571.6 658.4 573.3 658.8 575.0 C659.1 576.7 659.8 579.2 660.0 580.0" fill="none" stroke="#94cbde" stroke-width="1.3" stroke-linecap="round" stroke-linejoin="round" /><path d="M19.0 378.0 C19.7 378.7 22.0 380.5 23.2 382.0 C24.4 383.6 24.9 385.8 26.3 387.2 C27.6 388.6 29.8 389.2 31.3 390.5 C32.8 391.8 33.9 393.5 35.0 395.0 C36.1 396.5 36.9 398.0 38.0 399.5 C39.0 400.9 40.1 402.3 41.4 403.5 C42.7 404.8 44.7 405.5 45.8 406.9 C46.9 408.3 47.2 410.3 48.1 411.9 C48.9 413.5 49.9 415.0 51.1 416.3 C52.2 417.7 54.3 419.4 55.0 420.0" fill="none" stroke="#94cbde" stroke-width="1.3" stroke-linecap="round" stroke-linejoin="round" /><path d="M960.0 420.0 C960.6 420.7 962.4 422.6 963.5 424.0 C964.6 425.5 965.4 427.1 966.4 428.6 C967.4 430.1 968.2 431.6 969.3 433.1 C970.4 434.5 971.5 435.9 972.8 437.1 C974.1 438.3 976.1 439.0 977.3 440.4 C978.5 441.7 978.9 443.6 980.0 445.0 C981.1 446.4 982.9 447.2 984.0 448.6 C985.1 450.1 985.4 452.1 986.5 453.5 C987.6 454.9 989.3 455.8 990.5 457.1 C991.8 458.4 992.9 459.8 993.8 461.3 C994.8 462.8 995.2 464.7 996.2 466.2 C997.3 467.6 998.8 468.6 1000.0 470.0 C1001.2 471.4 1002.1 473.0 1003.3 474.3 C1004.5 475.7 1005.9 476.8 1007.2 478.0 C1008.5 479.3 1009.6 480.8 1011.0 481.9 C1012.4 483.0 1014.3 483.6 1015.7 484.7 C1017.2 485.9 1018.3 487.3 1019.6 488.5 C1020.8 489.8 1022.0 491.2 1023.3 492.4 C1024.7 493.6 1026.5 494.4 1027.7 495.6 C1029.0 496.9 1030.5 499.3 1031.0 500.0" fill="none" stroke="#94cbde" stroke-width="1.3" stroke-linecap="round" stroke-linejoin="round" /><path d="M905.0 500.0 C905.4 500.8 906.6 503.2 907.4 504.9 C908.1 506.6 908.6 508.3 909.4 510.0 C910.2 511.6 911.2 513.2 912.0 514.8 C912.8 516.4 913.7 518.0 914.3 519.7 C914.8 521.5 914.8 523.5 915.4 525.2 C916.1 526.9 917.4 528.4 918.0 530.0 C918.6 531.6 918.8 533.3 919.0 535.0 C919.1 536.6 918.8 538.4 918.9 540.1 C919.1 541.7 919.6 543.4 919.9 545.0 C920.2 546.7 920.6 548.3 920.7 550.0 C920.7 551.7 920.2 553.5 920.4 555.1 C920.6 556.8 921.7 559.2 922.0 560.0" fill="none" stroke="#94cbde" stroke-width="1.3" stroke-linecap="round" stroke-linejoin="round" /><path d="M45.0 133.0 L43.0 283.0 L38.0 433.0 L36.0 496.0 L181.0 496.0 L186.0 509.0 L174.0 533.0 L195.0 562.0 L202.0 580.0" fill="none" stroke="#a87aa9" stroke-width="1.0" stroke-linecap="round" stroke-linejoin="round" stroke-dasharray="5 2 1 2" opacity="0.6"/><path d="M45.0 211.0 L260.0 212.0 L251.0 182.0 L369.0 196.0 L400.0 197.0 L470.0 200.0 L530.0 205.0" fill="none" stroke="#a87aa9" stroke-width="1.0" stroke-linecap="round" stroke-linejoin="round" stroke-dasharray="5 2 1 2" opacity="0.6"/><path d="M242.0 133.0 L242.0 144.0" fill="none" stroke="#a87aa9" stroke-width="1.0" stroke-linecap="round" stroke-linejoin="round" stroke-dasharray="5 2 1 2" opacity="0.6"/><path d="M376.0 580.0 L488.0 435.0 L519.0 420.0" fill="none" stroke="#a87aa9" stroke-width="1.0" stroke-linecap="round" stroke-linejoin="round" stroke-dasharray="5 2 1 2" opacity="0.6"/><path d="M452.0 418.0 L519.0 450.0 L631.0 492.0 L645.0 496.0 L647.0 504.0 L667.0 514.0 L674.0 528.0 L686.0 542.0 L702.0 566.0 L710.0 580.0" fill="none" stroke="#a87aa9" stroke-width="1.0" stroke-linecap="round" stroke-linejoin="round" stroke-dasharray="5 2 1 2" opacity="0.6"/><path d="M645.0 496.0 L695.0 433.0 L752.0 375.0 L800.0 333.0 L850.0 300.0 L881.0 283.0 L939.0 243.0 L969.0 203.0 L994.0 155.0" fill="none" stroke="#a87aa9" stroke-width="1.0" stroke-linecap="round" stroke-linejoin="round" stroke-dasharray="5 2 1 2" opacity="0.6"/><path d="M881.0 133.0 L886.0 150.0 L904.0 163.0 L919.0 168.0 L931.0 183.0 L944.0 208.0 L949.0 233.0 L959.0 258.0 L964.0 283.0" fill="none" stroke="#a87aa9" stroke-width="1.0" stroke-linecap="round" stroke-linejoin="round" stroke-dasharray="5 2 1 2" opacity="0.6"/><path d="M975.0 430.0 L1000.0 460.0 L1031.0 480.0" fill="none" stroke="#a87aa9" stroke-width="1.0" stroke-linecap="round" stroke-linejoin="round" stroke-dasharray="5 2 1 2" opacity="0.6"/><path d="M606.0 431.0 C613.0 430.7 632.3 428.7 648.0 429.0 C663.7 429.3 691.3 432.3 700.0 433.0" fill="none" stroke="#b9b5b0" stroke-width="0.9" stroke-linecap="round" stroke-linejoin="round" /><path d="M195.0 133.0 C199.5 140.0 214.7 162.8 222.0 175.0 C229.3 187.2 234.5 196.5 239.0 206.0 C243.5 215.5 246.7 223.2 249.0 232.0 C251.3 240.8 250.5 251.0 253.0 259.0 C255.5 267.0 260.5 273.2 264.0 280.0 C267.5 286.8 272.3 296.7 274.0 300.0" fill="none" stroke="#b9b5b0" stroke-width="0.9" stroke-linecap="round" stroke-linejoin="round" /><path d="M264.0 166.0 C269.2 165.7 284.5 165.0 295.0 164.0 C305.5 163.0 318.8 161.3 327.0 160.0 C335.2 158.7 341.2 156.7 344.0 156.0" fill="none" stroke="#b9b5b0" stroke-width="0.9" stroke-linecap="round" stroke-linejoin="round" /><path d="M306.0 133.0 C303.8 138.2 296.2 153.5 293.0 164.0 C289.8 174.5 287.0 189.3 287.0 196.0 C287.0 202.7 289.8 198.8 293.0 204.0 C296.2 209.2 302.2 220.3 306.0 227.0 C309.8 233.7 314.3 241.2 316.0 244.0" fill="none" stroke="#b9b5b0" stroke-width="0.9" stroke-linecap="round" stroke-linejoin="round" /><path d="M281.0 209.0 C283.0 208.2 288.2 206.5 293.0 204.0 C297.8 201.5 303.7 197.8 310.0 194.0 C316.3 190.2 324.7 185.5 331.0 181.0 C337.3 176.5 345.2 169.3 348.0 167.0" fill="none" stroke="#b9b5b0" stroke-width="0.9" stroke-linecap="round" stroke-linejoin="round" /><path d="M306.0 211.0 C311.2 210.7 327.2 209.2 337.0 209.0 C346.8 208.8 360.3 209.8 365.0 210.0" fill="none" stroke="#b9b5b0" stroke-width="0.9" stroke-linecap="round" stroke-linejoin="round" /><path d="M249.0 236.0 C251.5 235.3 260.5 234.5 264.0 232.0 C267.5 229.5 269.0 222.8 270.0 221.0" fill="none" stroke="#b9b5b0" stroke-width="0.9" stroke-linecap="round" stroke-linejoin="round" /><path d="M306.0 223.0 C307.7 226.2 311.8 236.7 316.0 242.0 C320.2 247.3 324.7 251.5 331.0 255.0 C337.3 258.5 350.2 261.7 354.0 263.0" fill="none" stroke="#b9b5b0" stroke-width="0.9" stroke-linecap="round" stroke-linejoin="round" /><path d="M367.0 223.0 L390.0 219.0" fill="none" stroke="#b9b5b0" stroke-width="0.9" stroke-linecap="round" stroke-linejoin="round" /><path d="M362.0 259.0 C362.5 262.5 363.8 273.2 365.0 280.0 C366.2 286.8 367.8 293.3 369.0 300.0 C370.2 306.7 371.5 316.7 372.0 320.0" fill="none" stroke="#b9b5b0" stroke-width="0.9" stroke-linecap="round" stroke-linejoin="round" /><path d="M184.0 175.0 L182.0 209.0" fill="none" stroke="#b9b5b0" stroke-width="0.9" stroke-linecap="round" stroke-linejoin="round" /><path d="M62.0 133.0 L69.0 143.0" fill="none" stroke="#b9b5b0" stroke-width="0.9" stroke-linecap="round" stroke-linejoin="round" /><path d="M43.0 190.0 C46.5 187.7 56.2 178.8 64.0 176.0 C71.8 173.2 81.7 173.5 90.0 173.0 C98.3 172.5 108.0 171.7 114.0 173.0 C120.0 174.3 124.3 171.8 126.0 181.0 C127.7 190.2 126.0 213.8 124.0 228.0 C122.0 242.2 116.0 256.8 114.0 266.0 C112.0 275.2 112.3 280.2 112.0 283.0" fill="none" stroke="#b9b5b0" stroke-width="0.9" stroke-linecap="round" stroke-linejoin="round" /><path d="M88.0 181.0 C87.7 184.8 87.7 197.0 86.0 204.0 C84.3 211.0 83.2 218.2 78.0 223.0 C72.8 227.8 63.0 230.2 55.0 233.0 C47.0 235.8 34.2 238.8 30.0 240.0" fill="none" stroke="#b9b5b0" stroke-width="0.9" stroke-linecap="round" stroke-linejoin="round" /><path d="M169.0 173.0 C168.7 179.0 165.8 201.8 167.0 209.0 C168.2 216.2 175.7 208.8 176.0 216.0 C176.3 223.2 171.3 240.8 169.0 252.0 C166.7 263.2 163.5 274.0 162.0 283.0 C160.5 292.0 160.0 298.0 160.0 306.0 C160.0 314.0 160.2 321.7 162.0 331.0 C163.8 340.3 168.7 355.7 171.0 362.0 C173.3 368.3 175.2 367.8 176.0 369.0" fill="none" stroke="#b9b5b0" stroke-width="0.9" stroke-linecap="round" stroke-linejoin="round" /><path d="M152.0 133.0 L167.0 169.0" fill="none" stroke="#b9b5b0" stroke-width="0.9" stroke-linecap="round" stroke-linejoin="round" /><path d="M143.0 276.0 C145.8 274.8 156.0 268.7 160.0 269.0 C164.0 269.3 165.8 276.5 167.0 278.0" fill="none" stroke="#b9b5b0" stroke-width="0.9" stroke-linecap="round" stroke-linejoin="round" /><path d="M19.0 288.0 C20.2 291.2 24.0 299.2 26.0 307.0 C28.0 314.8 30.2 330.3 31.0 335.0" fill="none" stroke="#b9b5b0" stroke-width="0.9" stroke-linecap="round" stroke-linejoin="round" /><path d="M64.0 295.0 C65.7 295.3 72.0 293.8 74.0 297.0 C76.0 300.2 73.3 310.8 76.0 314.0 C78.7 317.2 86.3 315.3 90.0 316.0 C93.7 316.7 96.7 317.7 98.0 318.0" fill="none" stroke="#b9b5b0" stroke-width="0.9" stroke-linecap="round" stroke-linejoin="round" /><path d="M43.0 328.0 C47.0 326.5 61.0 321.3 67.0 319.0 C73.0 316.7 77.0 314.8 79.0 314.0" fill="none" stroke="#b9b5b0" stroke-width="0.9" stroke-linecap="round" stroke-linejoin="round" /><path d="M67.0 331.0 C65.8 338.8 60.8 367.0 60.0 378.0 C59.2 389.0 60.5 392.2 62.0 397.0 C63.5 401.8 68.3 401.0 69.0 407.0 C69.7 413.0 68.0 420.2 66.0 433.0 C64.0 445.8 58.8 472.2 57.0 484.0 C55.2 495.8 54.2 495.8 55.0 504.0 C55.8 512.2 56.8 520.3 62.0 533.0 C67.2 545.7 82.0 572.2 86.0 580.0" fill="none" stroke="#b9b5b0" stroke-width="0.9" stroke-linecap="round" stroke-linejoin="round" /><path d="M19.0 388.0 C23.0 389.2 37.0 391.8 43.0 395.0 C49.0 398.2 51.0 401.8 55.0 407.0 C59.0 412.2 65.0 422.8 67.0 426.0" fill="none" stroke="#b9b5b0" stroke-width="0.9" stroke-linecap="round" stroke-linejoin="round" /><path d="M98.0 331.0 C97.8 338.8 97.0 366.2 97.0 378.0 C97.0 389.8 98.0 392.8 98.0 402.0 C98.0 411.2 96.3 424.3 97.0 433.0 C97.7 441.7 98.0 445.3 102.0 454.0 C106.0 462.7 117.0 475.8 121.0 485.0 C125.0 494.2 122.0 499.8 126.0 509.0 C130.0 518.2 142.7 528.2 145.0 540.0 C147.3 551.8 140.8 573.3 140.0 580.0" fill="none" stroke="#b9b5b0" stroke-width="0.9" stroke-linecap="round" stroke-linejoin="round" /><path d="M124.0 426.0 C130.3 420.8 151.0 403.7 162.0 395.0 C173.0 386.3 178.8 382.3 190.0 374.0 C201.2 365.7 219.3 350.7 229.0 345.0 C238.7 339.3 241.3 339.7 248.0 340.0 C254.7 340.3 260.3 345.3 269.0 347.0 C277.7 348.7 289.8 349.8 300.0 350.0 C310.2 350.2 325.0 348.3 330.0 348.0" fill="none" stroke="#b9b5b0" stroke-width="0.9" stroke-linecap="round" stroke-linejoin="round" /><path d="M176.0 426.0 C183.5 422.0 208.3 410.7 221.0 402.0 C233.7 393.3 244.8 382.7 252.0 374.0 C259.2 365.3 262.0 354.0 264.0 350.0" fill="none" stroke="#b9b5b0" stroke-width="0.9" stroke-linecap="round" stroke-linejoin="round" /><path d="M19.0 140.0 C23.3 141.7 36.5 148.7 45.0 150.0 C53.5 151.3 57.5 149.3 70.0 148.0 C82.5 146.7 111.7 143.0 120.0 142.0" fill="none" stroke="#b9b5b0" stroke-width="0.9" stroke-linecap="round" stroke-linejoin="round" /><path d="M50.0 469.0 C56.7 467.0 77.7 462.2 90.0 457.0 C102.3 451.8 117.3 442.0 124.0 438.0 C130.7 434.0 129.0 433.8 130.0 433.0" fill="none" stroke="#b9b5b0" stroke-width="0.9" stroke-linecap="round" stroke-linejoin="round" /><path d="M136.0 484.0 C136.3 481.5 131.3 477.5 138.0 469.0 C144.7 460.5 169.7 439.0 176.0 433.0" fill="none" stroke="#b9b5b0" stroke-width="0.9" stroke-linecap="round" stroke-linejoin="round" /><path d="M57.0 484.0 C67.3 485.0 106.3 490.0 119.0 490.0 C131.7 490.0 124.7 485.2 133.0 484.0 C141.3 482.8 160.3 481.7 169.0 483.0 C177.7 484.3 182.3 490.5 185.0 492.0" fill="none" stroke="#b9b5b0" stroke-width="0.9" stroke-linecap="round" stroke-linejoin="round" /><path d="M186.0 495.0 C195.8 498.2 234.0 508.8 245.0 514.0 C256.0 519.2 248.0 522.8 252.0 526.0 C256.0 529.2 262.7 529.8 269.0 533.0 C275.3 536.2 286.5 543.0 290.0 545.0" fill="none" stroke="#b9b5b0" stroke-width="0.9" stroke-linecap="round" stroke-linejoin="round" /><path d="M19.0 568.0 C23.8 567.0 38.2 561.5 48.0 562.0 C57.8 562.5 71.0 570.3 78.0 571.0 C85.0 571.7 86.0 570.8 90.0 566.0 C94.0 561.2 96.0 548.5 102.0 542.0 C108.0 535.5 117.2 530.7 126.0 527.0 C134.8 523.3 145.8 525.8 155.0 520.0 C164.2 514.2 173.8 499.8 181.0 492.0 C188.2 484.2 190.5 479.3 198.0 473.0 C205.5 466.7 221.3 457.2 226.0 454.0" fill="none" stroke="#b9b5b0" stroke-width="0.9" stroke-linecap="round" stroke-linejoin="round" /><path d="M312.0 484.0 C325.5 478.5 378.0 457.2 393.0 451.0 C408.0 444.8 394.8 447.0 402.0 447.0 C409.2 447.0 424.5 449.5 436.0 451.0 C447.5 452.5 457.2 455.2 471.0 456.0 C484.8 456.8 506.7 457.3 519.0 456.0 C531.3 454.7 537.2 450.7 545.0 448.0 C552.8 445.3 562.5 441.3 566.0 440.0" fill="none" stroke="#b9b5b0" stroke-width="0.9" stroke-linecap="round" stroke-linejoin="round" /><path d="M353.0 433.0 C351.7 437.0 348.3 449.8 345.0 457.0 C341.7 464.2 338.5 470.8 333.0 476.0 C327.5 481.2 315.5 486.0 312.0 488.0" fill="none" stroke="#b9b5b0" stroke-width="0.9" stroke-linecap="round" stroke-linejoin="round" /><path d="M345.0 400.0 C347.5 403.3 354.2 415.0 360.0 420.0 C365.8 425.0 374.2 425.8 380.0 430.0 C385.8 434.2 392.5 442.5 395.0 445.0" fill="none" stroke="#b9b5b0" stroke-width="0.9" stroke-linecap="round" stroke-linejoin="round" /><path d="M319.0 395.0 C322.5 392.5 333.2 382.8 340.0 380.0 C346.8 377.2 356.7 378.3 360.0 378.0" fill="none" stroke="#b9b5b0" stroke-width="0.9" stroke-linecap="round" stroke-linejoin="round" /><path d="M500.0 420.0 C505.0 423.3 522.5 431.7 530.0 440.0 C537.5 448.3 541.7 460.0 545.0 470.0 C548.3 480.0 549.2 495.0 550.0 500.0" fill="none" stroke="#b9b5b0" stroke-width="0.9" stroke-linecap="round" stroke-linejoin="round" /><path d="M450.0 480.0 C456.7 478.3 478.3 470.0 490.0 470.0 C501.7 470.0 511.7 475.0 520.0 480.0 C528.3 485.0 535.8 490.0 540.0 500.0 C544.2 510.0 545.0 526.7 545.0 540.0 C545.0 553.3 540.8 573.3 540.0 580.0" fill="none" stroke="#b9b5b0" stroke-width="0.9" stroke-linecap="round" stroke-linejoin="round" /><path d="M400.0 500.0 C405.0 503.3 421.7 512.5 430.0 520.0 C438.3 527.5 445.0 535.0 450.0 545.0 C455.0 555.0 458.3 574.2 460.0 580.0" fill="none" stroke="#b9b5b0" stroke-width="0.9" stroke-linecap="round" stroke-linejoin="round" /><path d="M360.0 470.0 C363.3 473.3 373.3 483.3 380.0 490.0 C386.7 496.7 395.0 501.7 400.0 510.0 C405.0 518.3 408.3 535.0 410.0 540.0" fill="none" stroke="#b9b5b0" stroke-width="0.9" stroke-linecap="round" stroke-linejoin="round" /><path d="M560.0 450.0 C562.5 455.0 571.7 468.3 575.0 480.0 C578.3 491.7 577.5 503.3 580.0 520.0 C582.5 536.7 588.3 570.0 590.0 580.0" fill="none" stroke="#b9b5b0" stroke-width="0.9" stroke-linecap="round" stroke-linejoin="round" /><path d="M600.0 470.0 C603.3 475.0 615.0 488.3 620.0 500.0 C625.0 511.7 628.3 526.7 630.0 540.0 C631.7 553.3 630.0 573.3 630.0 580.0" fill="none" stroke="#b9b5b0" stroke-width="0.9" stroke-linecap="round" stroke-linejoin="round" /><path d="M640.0 470.0 C643.3 475.0 651.7 488.3 660.0 500.0 C668.3 511.7 681.7 526.7 690.0 540.0 C698.3 553.3 706.7 573.3 710.0 580.0" fill="none" stroke="#b9b5b0" stroke-width="0.9" stroke-linecap="round" stroke-linejoin="round" /><path d="M660.0 445.0 C666.7 445.0 688.3 444.2 700.0 445.0 C711.7 445.8 716.7 448.3 730.0 450.0 C743.3 451.7 760.0 454.2 780.0 455.0 C800.0 455.8 838.3 455.0 850.0 455.0" fill="none" stroke="#b9b5b0" stroke-width="0.9" stroke-linecap="round" stroke-linejoin="round" /><path d="M700.0 470.0 C705.0 473.3 720.0 485.0 730.0 490.0 C740.0 495.0 750.0 491.7 760.0 500.0 C770.0 508.3 783.3 526.7 790.0 540.0 C796.7 553.3 798.3 573.3 800.0 580.0" fill="none" stroke="#b9b5b0" stroke-width="0.9" stroke-linecap="round" stroke-linejoin="round" /><path d="M790.0 440.0 C795.0 443.3 810.0 450.0 820.0 460.0 C830.0 470.0 843.3 486.7 850.0 500.0 C856.7 513.3 858.3 533.3 860.0 540.0" fill="none" stroke="#b9b5b0" stroke-width="0.9" stroke-linecap="round" stroke-linejoin="round" /><path d="M780.0 420.0 C786.7 420.0 808.3 421.7 820.0 420.0 C831.7 418.3 836.7 411.7 850.0 410.0 C863.3 408.3 883.3 412.5 900.0 410.0 C916.7 407.5 933.3 400.0 950.0 395.0 C966.7 390.0 986.5 384.2 1000.0 380.0 C1013.5 375.8 1025.8 371.7 1031.0 370.0" fill="none" stroke="#b9b5b0" stroke-width="0.9" stroke-linecap="round" stroke-linejoin="round" /><path d="M840.0 300.0 C850.0 298.3 880.0 290.0 900.0 290.0 C920.0 290.0 938.2 300.0 960.0 300.0 C981.8 300.0 1019.2 291.7 1031.0 290.0" fill="none" stroke="#b9b5b0" stroke-width="0.9" stroke-linecap="round" stroke-linejoin="round" /><path d="M820.0 283.0 C823.3 289.2 830.0 308.8 840.0 320.0 C850.0 331.2 866.7 343.3 880.0 350.0 C893.3 356.7 906.7 351.7 920.0 360.0 C933.3 368.3 953.3 393.3 960.0 400.0" fill="none" stroke="#b9b5b0" stroke-width="0.9" stroke-linecap="round" stroke-linejoin="round" /><path d="M900.0 300.0 C903.3 306.7 915.0 323.3 920.0 340.0 C925.0 356.7 926.7 381.7 930.0 400.0 C933.3 418.3 935.0 436.7 940.0 450.0 C945.0 463.3 956.7 475.0 960.0 480.0" fill="none" stroke="#b9b5b0" stroke-width="0.9" stroke-linecap="round" stroke-linejoin="round" /><path d="M969.0 283.0 C972.5 289.2 984.8 300.5 990.0 320.0 C995.2 339.5 993.2 383.3 1000.0 400.0 C1006.8 416.7 1025.8 416.7 1031.0 420.0" fill="none" stroke="#b9b5b0" stroke-width="0.9" stroke-linecap="round" stroke-linejoin="round" /><path d="M850.0 133.0 C847.5 139.2 840.8 156.3 835.0 170.0 C829.2 183.7 820.8 201.7 815.0 215.0 C809.2 228.3 802.5 244.2 800.0 250.0" fill="none" stroke="#b9b5b0" stroke-width="0.9" stroke-linecap="round" stroke-linejoin="round" /><path d="M940.0 133.0 C936.7 139.2 926.7 158.8 920.0 170.0 C913.3 181.2 908.3 190.0 900.0 200.0 C891.7 210.0 875.0 225.0 870.0 230.0" fill="none" stroke="#b9b5b0" stroke-width="0.9" stroke-linecap="round" stroke-linejoin="round" /><path d="M990.0 133.0 C988.7 140.8 986.2 166.3 982.0 180.0 C977.8 193.7 967.8 209.2 965.0 215.0" fill="none" stroke="#b9b5b0" stroke-width="0.9" stroke-linecap="round" stroke-linejoin="round" /><path d="M930.0 260.0 C935.0 263.3 943.2 276.7 960.0 280.0 C976.8 283.3 1019.2 280.0 1031.0 280.0" fill="none" stroke="#b9b5b0" stroke-width="0.9" stroke-linecap="round" stroke-linejoin="round" /><path d="M880.0 580.0 C883.3 575.0 890.0 560.0 900.0 550.0 C910.0 540.0 926.7 528.3 940.0 520.0 C953.3 511.7 964.8 504.2 980.0 500.0 C995.2 495.8 1022.5 495.8 1031.0 495.0" fill="none" stroke="#b9b5b0" stroke-width="0.9" stroke-linecap="round" stroke-linejoin="round" /><path d="M740.0 520.0 C746.7 521.7 766.7 523.3 780.0 530.0 C793.3 536.7 810.0 551.7 820.0 560.0 C830.0 568.3 836.7 576.7 840.0 580.0" fill="none" stroke="#b9b5b0" stroke-width="0.9" stroke-linecap="round" stroke-linejoin="round" /><path d="M660.0 540.0 C666.7 540.8 686.7 541.7 700.0 545.0 C713.3 548.3 733.3 557.5 740.0 560.0" fill="none" stroke="#b9b5b0" stroke-width="0.9" stroke-linecap="round" stroke-linejoin="round" /><path d="M960.0 440.0 C965.0 443.3 978.2 455.8 990.0 460.0 C1001.8 464.2 1024.2 464.2 1031.0 465.0" fill="none" stroke="#b9b5b0" stroke-width="0.9" stroke-linecap="round" stroke-linejoin="round" /><path d="M820.0 133.0 C823.3 135.8 831.7 145.5 840.0 150.0 C848.3 154.5 860.0 160.0 870.0 160.0 C880.0 160.0 895.0 151.7 900.0 150.0" fill="none" stroke="#b9b5b0" stroke-width="0.9" stroke-linecap="round" stroke-linejoin="round" /><path d="M800.0 200.0 C805.0 202.5 820.0 213.3 830.0 215.0 C840.0 216.7 855.0 210.8 860.0 210.0" fill="none" stroke="#b9b5b0" stroke-width="0.9" stroke-linecap="round" stroke-linejoin="round" /><path d="M1031.0 220.0 C1025.8 223.3 1006.8 233.3 1000.0 240.0 C993.2 246.7 991.7 256.7 990.0 260.0" fill="none" stroke="#b9b5b0" stroke-width="0.9" stroke-linecap="round" stroke-linejoin="round" /><path d="M860.0 580.0 C861.7 575.0 866.7 560.0 870.0 550.0 C873.3 540.0 878.3 525.0 880.0 520.0" fill="none" stroke="#b9b5b0" stroke-width="0.9" stroke-linecap="round" stroke-linejoin="round" /><path d="M950.0 500.0 C956.7 503.3 976.5 516.7 990.0 520.0 C1003.5 523.3 1024.2 520.0 1031.0 520.0" fill="none" stroke="#b9b5b0" stroke-width="0.9" stroke-linecap="round" stroke-linejoin="round" /><path d="M1000.0 540.0 L1010.0 580.0" fill="none" stroke="#b9b5b0" stroke-width="0.9" stroke-linecap="round" stroke-linejoin="round" /><path d="M920.0 580.0 C925.0 576.7 938.3 563.3 950.0 560.0 C961.7 556.7 983.3 560.0 990.0 560.0" fill="none" stroke="#b9b5b0" stroke-width="0.9" stroke-linecap="round" stroke-linejoin="round" /><path d="M19.0 440.0 C22.5 443.3 34.0 453.3 40.0 460.0 C46.0 466.7 52.5 476.7 55.0 480.0" fill="none" stroke="#b9b5b0" stroke-width="0.9" stroke-linecap="round" stroke-linejoin="round" /><path d="M220.0 540.0 L240.0 580.0" fill="none" stroke="#b9b5b0" stroke-width="0.9" stroke-linecap="round" stroke-linejoin="round" /><path d="M250.0 420.0 L270.0 440.0" fill="none" stroke="#b9b5b0" stroke-width="0.9" stroke-linecap="round" stroke-linejoin="round" /><path d="M475.0 160.0 C475.8 165.0 480.0 178.3 480.0 190.0 C480.0 201.7 476.7 218.3 475.0 230.0 C473.3 241.7 470.8 255.0 470.0 260.0" fill="none" stroke="#b9b5b0" stroke-width="0.9" stroke-linecap="round" stroke-linejoin="round" /><path d="M730.0 133.0 C735.0 135.8 748.3 145.5 760.0 150.0 C771.7 154.5 793.3 158.3 800.0 160.0" fill="none" stroke="#b9b5b0" stroke-width="0.9" stroke-linecap="round" stroke-linejoin="round" /><path d="M780.0 180.0 C785.0 178.3 800.0 170.8 810.0 170.0 C820.0 169.2 835.0 174.2 840.0 175.0" fill="none" stroke="#b9b5b0" stroke-width="0.9" stroke-linecap="round" stroke-linejoin="round" /><path d="M427.8 222.4 C429.0 223.4 432.3 225.2 434.8 228.1 C437.4 231.1 441.2 236.5 443.1 239.9 C445.0 243.3 445.5 245.3 446.4 248.4 C447.3 251.5 448.3 256.8 448.7 258.5" fill="none" stroke="#c3bfba" stroke-width="0.8" stroke-linecap="round" stroke-linejoin="round" /><path d="M749.9 396.0 C751.8 393.6 758.5 386.0 761.1 381.5 C763.6 376.9 764.7 373.2 765.2 368.6 C765.7 364.0 765.8 358.6 764.1 353.8 C762.4 349.0 757.1 343.6 755.0 339.9 C753.0 336.2 752.3 332.8 751.8 331.4" fill="none" stroke="#c3bfba" stroke-width="0.8" stroke-linecap="round" stroke-linejoin="round" /><path d="M385.9 550.1 C388.5 552.1 397.5 559.1 401.8 561.8 C406.0 564.5 408.7 564.4 411.2 566.5 C413.8 568.7 415.3 570.9 416.9 574.7 C418.4 578.5 420.0 586.9 420.6 589.4" fill="none" stroke="#c3bfba" stroke-width="0.8" stroke-linecap="round" stroke-linejoin="round" /><path d="M1013.7 554.9 C1012.2 554.1 1008.1 552.1 1005.1 549.8 C1002.0 547.4 997.9 544.8 995.6 540.8 C993.3 536.8 991.9 528.3 991.2 525.9" fill="none" stroke="#c3bfba" stroke-width="0.8" stroke-linecap="round" stroke-linejoin="round" /><path d="M163.6 409.0 C162.3 410.1 158.4 414.2 155.8 415.8 C153.1 417.5 150.5 417.3 147.7 419.0 C145.0 420.8 142.7 423.0 139.4 426.3 C136.1 429.7 129.8 436.9 127.9 439.1" fill="none" stroke="#c3bfba" stroke-width="0.8" stroke-linecap="round" stroke-linejoin="round" /><path d="M377.1 443.7 C379.8 443.1 389.0 440.7 393.3 440.3 C397.7 440.0 400.2 440.4 403.1 441.6 C405.9 442.8 407.4 446.1 410.5 447.4 C413.7 448.8 420.0 449.4 421.9 449.8" fill="none" stroke="#c3bfba" stroke-width="0.8" stroke-linecap="round" stroke-linejoin="round" /><path d="M1022.0 316.2 C1024.9 315.8 1035.0 313.6 1039.4 313.6 C1043.8 313.5 1045.6 314.6 1048.5 316.0 C1051.3 317.4 1053.4 320.9 1056.6 322.2 C1059.9 323.5 1064.7 323.2 1068.0 323.8 C1071.2 324.4 1074.9 325.5 1076.3 325.8" fill="none" stroke="#c3bfba" stroke-width="0.8" stroke-linecap="round" stroke-linejoin="round" /><path d="M237.9 311.4 C238.8 308.6 241.9 298.9 243.5 294.5 C245.0 290.1 246.9 288.6 247.0 285.0 C247.2 281.4 244.4 277.6 244.6 272.8 C244.9 267.9 248.2 261.8 248.6 256.0 C249.0 250.2 248.3 243.4 246.9 237.8 C245.5 232.2 241.3 225.1 240.2 222.6" fill="none" stroke="#c3bfba" stroke-width="0.8" stroke-linecap="round" stroke-linejoin="round" /><path d="M126.0 440.5 C125.4 442.6 125.4 449.0 122.6 453.3 C119.8 457.6 113.4 461.6 109.1 466.1 C104.8 470.6 99.1 476.0 96.7 480.3 C94.2 484.5 94.7 489.7 94.3 491.6" fill="none" stroke="#c3bfba" stroke-width="0.8" stroke-linecap="round" stroke-linejoin="round" /><path d="M925.8 325.6 C925.8 328.3 926.2 335.8 925.8 341.8 C925.4 347.7 924.5 356.1 923.4 361.5 C922.3 366.8 920.5 368.9 919.3 374.1 C918.0 379.2 916.5 389.4 916.0 392.4" fill="none" stroke="#c3bfba" stroke-width="0.8" stroke-linecap="round" stroke-linejoin="round" /><path d="M368.5 431.2 C368.8 428.5 369.3 419.6 370.4 415.3 C371.6 411.0 373.6 409.6 375.5 405.3 C377.3 401.0 379.3 393.8 381.6 389.4 C383.8 385.0 387.8 380.7 389.0 378.9" fill="none" stroke="#c3bfba" stroke-width="0.8" stroke-linecap="round" stroke-linejoin="round" /><path d="M891.1 426.5 C892.7 425.4 896.7 422.2 900.9 420.1 C905.2 418.0 912.0 417.0 916.8 414.0 C921.5 410.9 926.0 405.2 929.3 401.9 C932.5 398.6 935.1 395.4 936.3 394.1" fill="none" stroke="#c3bfba" stroke-width="0.8" stroke-linecap="round" stroke-linejoin="round" /><path d="M776.6 463.3 C775.4 464.0 771.7 465.3 769.6 467.7 C767.4 470.1 766.5 473.4 763.6 477.7 C760.7 482.0 755.0 489.1 752.0 493.5 C749.1 497.9 748.6 499.7 745.7 504.2 C742.8 508.6 736.6 517.5 734.8 520.2" fill="none" stroke="#c3bfba" stroke-width="0.8" stroke-linecap="round" stroke-linejoin="round" /><path d="M784.7 576.3 C785.8 574.8 788.9 571.6 791.2 567.3 C793.6 562.9 795.1 555.0 798.7 550.3 C802.4 545.6 808.8 541.6 813.1 538.8 C817.5 536.0 820.1 535.3 824.6 533.4 C829.1 531.6 836.0 529.4 840.1 527.5 C844.2 525.7 847.6 523.1 849.1 522.2" fill="none" stroke="#c3bfba" stroke-width="0.8" stroke-linecap="round" stroke-linejoin="round" /><path d="M487.7 510.4 C488.0 507.2 488.8 497.5 489.2 491.2 C489.6 484.9 488.9 477.6 490.1 472.5 C491.4 467.4 495.6 464.1 496.9 460.6 C498.3 457.2 497.8 453.3 498.0 451.8" fill="none" stroke="#c3bfba" stroke-width="0.8" stroke-linecap="round" stroke-linejoin="round" /><path d="M261.4 338.6 C262.8 339.2 267.0 341.0 269.4 342.4 C271.8 343.9 273.6 345.0 275.9 347.2 C278.2 349.5 280.2 353.8 283.3 355.8 C286.4 357.7 291.2 358.4 294.7 358.9 C298.2 359.4 302.7 358.8 304.3 358.8" fill="none" stroke="#c3bfba" stroke-width="0.8" stroke-linecap="round" stroke-linejoin="round" /><path d="M950.0 310.6 C951.8 311.3 957.9 313.0 960.8 314.7 C963.6 316.4 965.2 318.1 967.0 320.8 C968.9 323.4 969.3 327.2 971.9 330.4 C974.4 333.5 980.5 338.0 982.2 339.5" fill="none" stroke="#c3bfba" stroke-width="0.8" stroke-linecap="round" stroke-linejoin="round" /><path d="M295.1 426.6 C296.3 427.8 298.4 430.6 302.3 433.7 C306.2 436.7 313.5 441.1 318.4 444.7 C323.4 448.2 328.1 452.8 332.0 454.8 C335.8 456.7 339.8 456.2 341.3 456.5" fill="none" stroke="#c3bfba" stroke-width="0.8" stroke-linecap="round" stroke-linejoin="round" /><path d="M157.6 376.8 C160.6 376.2 170.1 373.6 175.7 373.2 C181.3 372.8 186.1 373.2 191.1 374.3 C196.0 375.4 201.5 378.8 205.3 380.0 C209.1 381.2 209.8 381.3 213.8 381.6 C217.8 381.9 225.1 382.2 229.3 381.6 C233.4 381.0 237.1 378.5 238.7 377.9" fill="none" stroke="#c3bfba" stroke-width="0.8" stroke-linecap="round" stroke-linejoin="round" /><path d="M131.5 355.0 C134.2 353.4 142.3 347.4 147.8 345.3 C153.4 343.2 159.8 341.7 165.0 342.2 C170.1 342.7 176.3 347.1 178.5 348.1" fill="none" stroke="#c3bfba" stroke-width="0.8" stroke-linecap="round" stroke-linejoin="round" /><path d="M760.8 402.3 C763.7 401.6 773.4 398.6 778.4 398.0 C783.3 397.5 787.3 399.2 790.8 399.2 C794.3 399.1 796.0 398.7 799.2 398.0 C802.5 397.3 808.6 395.5 810.5 395.1" fill="none" stroke="#c3bfba" stroke-width="0.8" stroke-linecap="round" stroke-linejoin="round" /><path d="M179.7 554.8 C181.0 552.9 184.9 545.9 187.3 543.1 C189.6 540.3 191.6 541.2 194.1 538.1 C196.6 534.9 198.7 528.0 202.3 524.1 C205.8 520.2 209.9 517.1 215.2 514.7 C220.5 512.3 231.0 510.5 234.2 509.7" fill="none" stroke="#c3bfba" stroke-width="0.8" stroke-linecap="round" stroke-linejoin="round" /><path d="M400.2 254.0 C400.1 255.4 400.5 259.2 399.5 262.2 C398.4 265.2 395.6 268.3 393.8 272.1 C391.9 276.0 390.5 281.8 388.2 285.2 C385.9 288.5 381.3 290.8 380.0 292.0" fill="none" stroke="#c3bfba" stroke-width="0.8" stroke-linecap="round" stroke-linejoin="round" /><path d="M549.4 576.3 C550.9 578.2 555.2 584.3 558.3 588.1 C561.4 592.0 564.7 596.9 568.0 599.3 C571.3 601.6 575.1 600.5 578.0 602.2 C580.9 603.9 581.2 606.4 585.3 609.2 C589.4 612.1 599.6 617.6 602.5 619.2" fill="none" stroke="#c3bfba" stroke-width="0.8" stroke-linecap="round" stroke-linejoin="round" /><path d="M276.7 392.2 C275.3 392.0 273.0 391.4 268.3 391.4 C263.5 391.5 253.3 392.0 248.4 392.3 C243.4 392.6 240.1 393.2 238.4 393.3" fill="none" stroke="#c3bfba" stroke-width="0.8" stroke-linecap="round" stroke-linejoin="round" /><path d="M255.1 327.3 C253.5 327.8 249.5 329.7 245.6 330.2 C241.7 330.7 235.6 330.7 231.8 330.4 C228.0 330.0 224.4 328.5 222.9 328.1" fill="none" stroke="#c3bfba" stroke-width="0.8" stroke-linecap="round" stroke-linejoin="round" /><path d="M637.7 538.1 C638.1 539.9 639.9 545.3 639.8 548.9 C639.8 552.5 638.9 555.4 637.5 559.7 C636.1 564.0 633.5 569.2 631.3 574.5 C629.0 579.8 626.1 587.0 624.1 591.5 C622.1 595.9 621.4 597.2 619.3 601.2 C617.3 605.2 613.0 613.2 611.8 615.6" fill="none" stroke="#c3bfba" stroke-width="0.8" stroke-linecap="round" stroke-linejoin="round" /><path d="M445.0 367.4 C447.4 368.0 455.5 370.0 459.4 371.0 C463.3 371.9 463.8 371.5 468.3 373.1 C472.7 374.7 481.3 378.7 486.1 380.5 C491.0 382.4 493.7 381.6 497.3 384.2 C501.0 386.8 506.3 394.0 508.1 395.9" fill="none" stroke="#c3bfba" stroke-width="0.8" stroke-linecap="round" stroke-linejoin="round" /><path d="M206.3 535.4 C205.6 533.6 202.8 528.1 201.9 524.8 C200.9 521.4 201.4 518.6 200.7 515.5 C200.0 512.4 198.2 507.8 197.7 506.2" fill="none" stroke="#c3bfba" stroke-width="0.8" stroke-linecap="round" stroke-linejoin="round" /><path d="M476.8 554.8 C478.3 554.4 482.7 552.6 485.5 552.5 C488.3 552.3 489.8 551.6 493.6 553.9 C497.3 556.1 503.9 563.3 507.8 566.0 C511.7 568.6 515.4 569.1 516.9 569.8" fill="none" stroke="#c3bfba" stroke-width="0.8" stroke-linecap="round" stroke-linejoin="round" /><path d="M278.0 553.8 C276.0 552.9 270.6 551.1 266.1 548.1 C261.5 545.1 255.2 538.9 250.7 535.7 C246.3 532.6 242.9 532.7 239.4 529.2 C235.9 525.8 231.5 519.2 229.7 515.0 C227.9 510.8 228.3 508.7 228.5 503.9 C228.7 499.1 230.6 489.3 231.0 486.4" fill="none" stroke="#c3bfba" stroke-width="0.8" stroke-linecap="round" stroke-linejoin="round" /><path d="M960.5 231.2 C960.1 233.1 959.1 239.1 958.1 242.7 C957.1 246.2 956.3 248.9 954.5 252.6 C952.6 256.2 948.3 262.7 947.0 264.7" fill="none" stroke="#c3bfba" stroke-width="0.8" stroke-linecap="round" stroke-linejoin="round" /><path d="M805.0 187.5 C807.9 188.8 817.6 192.7 822.2 195.3 C826.7 198.0 830.0 200.3 832.4 203.5 C834.9 206.7 836.6 210.2 836.8 214.5 C837.0 218.8 834.9 224.0 833.6 229.4 C832.3 234.9 829.3 242.4 828.9 247.3 C828.6 252.1 831.0 256.6 831.4 258.5" fill="none" stroke="#c3bfba" stroke-width="0.8" stroke-linecap="round" stroke-linejoin="round" /><path d="M803.4 163.5 C805.4 163.1 810.6 161.8 815.3 161.3 C820.0 160.8 827.7 161.3 831.6 160.3 C835.6 159.2 836.7 157.9 839.0 155.1 C841.3 152.4 843.3 148.2 845.5 143.9 C847.6 139.6 850.3 133.0 852.1 129.4 C853.9 125.8 855.5 123.5 856.2 122.3" fill="none" stroke="#c3bfba" stroke-width="0.8" stroke-linecap="round" stroke-linejoin="round" /><path d="M225.1 419.2 C226.6 421.9 231.3 431.7 234.1 435.4 C236.8 439.1 239.2 438.9 241.5 441.5 C243.7 444.2 244.8 448.3 247.5 451.2 C250.3 454.1 254.7 456.9 258.0 458.9 C261.3 460.8 263.4 461.4 267.4 462.9 C271.5 464.3 279.8 466.8 282.3 467.5" fill="none" stroke="#c3bfba" stroke-width="0.8" stroke-linecap="round" stroke-linejoin="round" /><path d="M97.6 557.0 C96.0 559.3 89.5 565.7 87.6 570.4 C85.7 575.2 85.6 581.0 86.3 585.6 C87.1 590.2 89.6 594.8 92.0 598.1 C94.5 601.3 99.4 604.2 100.9 605.4" fill="none" stroke="#c3bfba" stroke-width="0.8" stroke-linecap="round" stroke-linejoin="round" /><path d="M509.2 511.2 C510.8 510.3 516.1 508.2 519.0 506.1 C521.8 504.1 524.2 501.7 526.3 499.0 C528.4 496.4 529.2 494.2 531.6 490.2 C534.0 486.2 538.8 479.7 540.8 475.2 C542.8 470.7 543.2 465.3 543.6 463.3" fill="none" stroke="#c3bfba" stroke-width="0.8" stroke-linecap="round" stroke-linejoin="round" /><path d="M19.3 457.0 C18.4 455.9 15.5 452.3 13.6 450.1 C11.6 447.8 11.4 445.9 7.5 443.4 C3.6 440.9 -6.8 436.2 -9.7 434.8" fill="none" stroke="#c3bfba" stroke-width="0.8" stroke-linecap="round" stroke-linejoin="round" /><path d="M134.9 459.9 C135.2 457.3 137.2 449.1 137.0 443.9 C136.7 438.8 135.3 434.4 133.2 429.0 C131.2 423.6 127.6 415.8 124.6 411.4 C121.7 407.0 117.0 403.9 115.5 402.4" fill="none" stroke="#c3bfba" stroke-width="0.8" stroke-linecap="round" stroke-linejoin="round" /><path d="M996.9 347.3 C995.7 346.6 993.9 344.7 989.7 342.9 C985.5 341.1 976.8 340.0 971.8 336.6 C966.8 333.1 962.4 327.3 959.6 322.1 C956.8 316.8 955.5 307.8 954.7 305.0" fill="none" stroke="#c3bfba" stroke-width="0.8" stroke-linecap="round" stroke-linejoin="round" /><path d="M746.0 562.4 C744.2 559.9 737.7 551.4 735.1 547.9 C732.5 544.3 732.1 544.0 730.4 541.1 C728.7 538.1 726.9 533.0 724.8 530.3 C722.8 527.6 719.1 526.0 718.0 525.1" fill="none" stroke="#c3bfba" stroke-width="0.8" stroke-linecap="round" stroke-linejoin="round" /><path d="M559.3 559.9 C557.4 560.0 551.7 561.5 547.4 560.2 C543.1 558.9 537.0 554.9 533.3 552.2 C529.6 549.5 527.6 547.0 525.2 544.0 C522.7 540.9 521.0 536.5 518.5 533.8 C516.1 531.1 511.9 529.0 510.5 528.0" fill="none" stroke="#c3bfba" stroke-width="0.8" stroke-linecap="round" stroke-linejoin="round" /><path d="M414.7 520.8 C411.9 519.6 402.3 515.4 398.1 513.9 C393.8 512.4 393.5 511.7 389.1 511.7 C384.7 511.6 376.3 512.3 371.9 513.6 C367.4 514.9 364.6 517.3 362.3 519.4 C360.1 521.5 358.9 525.2 358.2 526.3" fill="none" stroke="#c3bfba" stroke-width="0.8" stroke-linecap="round" stroke-linejoin="round" /><path d="M414.1 398.3 C413.4 396.5 410.4 391.1 409.8 387.8 C409.2 384.5 408.9 382.4 410.6 378.2 C412.3 374.0 417.7 368.0 420.1 362.8 C422.4 357.6 422.2 352.1 424.8 347.1 C427.4 342.0 433.8 334.8 435.6 332.3" fill="none" stroke="#c3bfba" stroke-width="0.8" stroke-linecap="round" stroke-linejoin="round" /><path d="M46.4 360.0 C46.5 362.4 46.1 370.1 46.8 374.6 C47.6 379.2 48.9 382.4 50.9 387.2 C52.9 392.0 55.6 398.2 58.7 403.5 C61.9 408.7 68.0 416.0 69.9 418.5" fill="none" stroke="#c3bfba" stroke-width="0.8" stroke-linecap="round" stroke-linejoin="round" /><path d="M250.2 424.1 C248.0 424.8 240.5 426.0 236.8 428.4 C233.1 430.8 232.3 435.4 228.1 438.7 C223.9 441.9 215.7 445.8 211.5 448.1 C207.3 450.3 207.5 450.6 202.9 452.1 C198.2 453.7 186.9 456.6 183.7 457.5" fill="none" stroke="#c3bfba" stroke-width="0.8" stroke-linecap="round" stroke-linejoin="round" /><path d="M804.1 372.4 C806.3 374.1 814.3 378.7 817.4 382.5 C820.5 386.2 821.2 390.0 822.7 394.8 C824.3 399.6 826.0 408.7 826.7 411.5" fill="none" stroke="#c3bfba" stroke-width="0.8" stroke-linecap="round" stroke-linejoin="round" /><path d="M521.6 454.1 C521.7 455.7 522.4 460.6 522.4 463.9 C522.4 467.2 520.6 469.5 521.5 474.1 C522.4 478.6 526.9 488.3 528.0 491.2" fill="none" stroke="#c3bfba" stroke-width="0.8" stroke-linecap="round" stroke-linejoin="round" /><path d="M836.3 337.6 C838.4 335.7 846.4 329.8 848.9 326.6 C851.4 323.4 851.5 321.5 851.4 318.3 C851.3 315.2 849.0 309.5 848.5 307.7" fill="none" stroke="#c3bfba" stroke-width="0.8" stroke-linecap="round" stroke-linejoin="round" /><path d="M417.2 299.0 C416.8 297.0 414.5 291.7 414.8 287.1 C415.1 282.5 419.0 275.9 419.1 271.4 C419.3 266.8 416.1 264.2 415.7 259.9 C415.4 255.6 416.9 247.9 417.1 245.6" fill="none" stroke="#c3bfba" stroke-width="0.8" stroke-linecap="round" stroke-linejoin="round" /><path d="M222.3 318.5 C221.3 316.4 219.6 309.7 216.4 306.1 C213.2 302.4 206.4 299.5 203.0 296.5 C199.5 293.5 198.3 291.3 195.9 287.9 C193.5 284.5 189.8 278.2 188.6 276.2" fill="none" stroke="#c3bfba" stroke-width="0.8" stroke-linecap="round" stroke-linejoin="round" /><path d="M582.5 477.3 C585.6 476.9 595.4 474.4 601.1 474.9 C606.9 475.3 611.9 479.8 616.8 480.1 C621.8 480.4 626.9 478.1 630.7 476.4 C634.6 474.8 636.8 472.7 639.9 470.3 C643.0 467.8 647.9 463.3 649.6 461.8" fill="none" stroke="#c3bfba" stroke-width="0.8" stroke-linecap="round" stroke-linejoin="round" /><path d="M913.8 300.4 C914.9 302.4 918.5 308.2 920.0 312.5 C921.5 316.8 921.1 321.4 922.6 326.0 C924.1 330.7 926.8 336.6 928.8 340.3 C930.7 344.1 933.4 347.0 934.3 348.3" fill="none" stroke="#c3bfba" stroke-width="0.8" stroke-linecap="round" stroke-linejoin="round" /><path d="M824.1 341.8 C821.7 340.2 813.7 335.0 809.7 332.3 C805.7 329.5 803.0 326.9 800.0 325.3 C797.0 323.8 795.5 323.2 791.6 322.9 C787.6 322.6 781.7 322.4 776.0 323.7 C770.3 325.0 761.8 328.2 757.4 330.6 C753.0 333.0 750.8 336.9 749.5 338.2" fill="none" stroke="#c3bfba" stroke-width="0.8" stroke-linecap="round" stroke-linejoin="round" /><path d="M431.5 559.4 C431.4 560.8 431.6 564.5 431.1 568.0 C430.6 571.5 429.8 576.6 428.6 580.3 C427.3 584.1 424.7 587.3 423.5 590.3 C422.2 593.2 421.6 596.7 421.2 598.0" fill="none" stroke="#c3bfba" stroke-width="0.8" stroke-linecap="round" stroke-linejoin="round" /><path d="M203.7 381.6 C201.4 379.9 195.5 374.0 190.2 371.5 C184.9 369.0 176.8 368.1 171.7 366.9 C166.6 365.6 164.2 366.5 159.5 364.1 C154.9 361.7 147.2 356.6 143.8 352.6 C140.4 348.5 140.9 344.1 139.2 339.8 C137.5 335.5 134.6 328.9 133.7 326.7" fill="none" stroke="#c3bfba" stroke-width="0.8" stroke-linecap="round" stroke-linejoin="round" /><path d="M471.0 340.4 C472.3 343.3 476.4 353.5 478.3 357.8 C480.2 362.1 480.8 363.0 482.4 366.3 C484.1 369.6 487.1 375.7 488.1 377.5" fill="none" stroke="#c3bfba" stroke-width="0.8" stroke-linecap="round" stroke-linejoin="round" /><path d="M918.4 273.5 C921.3 273.3 930.6 271.4 935.7 272.3 C940.8 273.1 944.9 274.8 948.9 278.6 C952.8 282.3 957.6 290.6 959.4 294.6 C961.1 298.6 959.3 301.2 959.3 302.6" fill="none" stroke="#c3bfba" stroke-width="0.8" stroke-linecap="round" stroke-linejoin="round" /><path d="M146.8 465.9 C147.6 467.6 148.6 471.6 151.2 476.1 C153.7 480.5 160.2 486.8 162.1 492.4 C164.1 498.0 161.7 505.3 162.8 509.6 C163.9 514.0 167.8 517.0 168.8 518.5" fill="none" stroke="#c3bfba" stroke-width="0.8" stroke-linecap="round" stroke-linejoin="round" /><path d="M485.8 345.9 C487.5 344.8 492.4 342.3 495.9 339.3 C499.4 336.3 504.1 332.0 506.5 327.7 C509.0 323.3 510.7 318.6 510.5 313.2 C510.3 307.9 505.7 301.4 505.4 295.5 C505.0 289.7 507.9 281.1 508.4 278.2" fill="none" stroke="#c3bfba" stroke-width="0.8" stroke-linecap="round" stroke-linejoin="round" /><path d="M423.7 489.3 C423.6 486.5 423.2 478.2 422.8 472.8 C422.4 467.4 421.0 461.9 421.4 457.0 C421.7 452.2 423.7 448.1 424.8 443.7 C426.0 439.3 427.7 435.2 428.2 430.5 C428.6 425.8 427.6 417.8 427.4 415.3" fill="none" stroke="#c3bfba" stroke-width="0.8" stroke-linecap="round" stroke-linejoin="round" /><path d="M355.0 571.5 C357.8 572.8 366.9 576.2 372.3 579.5 C377.7 582.7 382.8 589.1 387.4 591.2 C392.0 593.3 395.8 592.0 399.8 592.0 C403.9 591.9 408.0 591.7 411.9 590.8 C415.7 589.9 417.8 587.5 422.9 586.5 C427.9 585.5 439.0 585.1 442.2 584.9" fill="none" stroke="#c3bfba" stroke-width="0.8" stroke-linecap="round" stroke-linejoin="round" /><path d="M952.1 307.4 C950.1 305.1 942.4 297.6 940.2 293.9 C937.9 290.2 938.9 288.0 938.7 285.1 C938.4 282.1 939.7 279.2 938.9 276.2 C938.2 273.2 935.0 268.5 934.2 266.9" fill="none" stroke="#c3bfba" stroke-width="0.8" stroke-linecap="round" stroke-linejoin="round" /><path d="M367.2 518.3 C368.4 517.3 372.0 515.4 374.6 512.3 C377.3 509.3 381.0 504.7 382.9 500.1 C384.8 495.4 384.2 488.7 385.9 484.5 C387.6 480.4 391.7 476.7 392.9 475.1" fill="none" stroke="#c3bfba" stroke-width="0.8" stroke-linecap="round" stroke-linejoin="round" /><path d="M400.6 355.4 C402.2 353.6 407.6 346.7 410.5 344.3 C413.4 341.9 416.0 342.7 418.1 341.1 C420.3 339.4 420.2 336.3 423.2 334.4 C426.2 332.5 433.9 330.7 436.1 329.9" fill="none" stroke="#c3bfba" stroke-width="0.8" stroke-linecap="round" stroke-linejoin="round" /><path d="M377.2 248.7 C377.4 250.5 379.4 255.1 378.5 259.7 C377.5 264.3 372.4 271.0 371.5 276.1 C370.5 281.3 371.0 286.4 372.9 290.8 C374.7 295.2 380.9 300.5 382.5 302.4" fill="none" stroke="#c3bfba" stroke-width="0.8" stroke-linecap="round" stroke-linejoin="round" /><path d="M214.2 351.9 C213.4 353.9 211.1 360.4 209.7 364.2 C208.3 368.0 208.8 371.2 205.7 374.9 C202.6 378.5 194.8 383.1 191.0 386.2 C187.2 389.2 184.3 392.1 182.9 393.2" fill="none" stroke="#c3bfba" stroke-width="0.8" stroke-linecap="round" stroke-linejoin="round" /><path d="M780.7 364.8 C781.7 362.1 785.6 353.6 786.6 348.4 C787.6 343.2 786.1 337.8 786.5 333.8 C786.9 329.7 787.2 326.9 789.0 324.0 C790.8 321.1 794.7 318.1 797.4 316.5 C800.1 314.8 803.9 314.4 805.2 314.0" fill="none" stroke="#c3bfba" stroke-width="0.8" stroke-linecap="round" stroke-linejoin="round" /><path d="M98.9 456.3 C100.6 456.0 105.9 455.3 108.9 454.6 C111.9 453.9 114.4 453.6 117.0 452.1 C119.7 450.6 121.4 448.8 125.1 445.5 C128.8 442.3 135.2 437.1 139.3 432.8 C143.3 428.6 147.6 422.2 149.3 420.0" fill="none" stroke="#c3bfba" stroke-width="0.8" stroke-linecap="round" stroke-linejoin="round" /><path d="M221.9 363.3 C221.1 364.6 219.7 368.7 217.0 371.3 C214.4 373.8 208.9 376.1 206.2 378.5 C203.6 380.8 203.0 382.8 201.2 385.2 C199.5 387.6 196.7 391.7 195.8 392.9" fill="none" stroke="#c3bfba" stroke-width="0.8" stroke-linecap="round" stroke-linejoin="round" /><path d="M192.3 323.5 C194.1 323.4 198.7 322.3 203.2 323.3 C207.7 324.3 214.1 327.5 219.2 329.7 C224.3 331.9 229.0 334.4 233.9 336.4 C238.7 338.4 243.3 339.4 248.2 341.7 C253.1 343.9 260.6 348.4 263.1 349.8" fill="none" stroke="#c3bfba" stroke-width="0.8" stroke-linecap="round" stroke-linejoin="round" /><path d="M1002.5 365.0 C1004.6 367.4 1011.8 374.5 1015.0 379.6 C1018.2 384.6 1020.5 390.0 1021.7 395.2 C1023.0 400.3 1021.7 406.5 1022.6 410.5 C1023.6 414.4 1026.4 414.8 1027.4 418.8 C1028.5 422.8 1027.7 430.2 1028.7 434.4 C1029.8 438.6 1032.9 442.4 1033.7 444.0" fill="none" stroke="#c3bfba" stroke-width="0.8" stroke-linecap="round" stroke-linejoin="round" /><path d="M904.2 189.0 C903.0 187.6 900.0 182.6 897.1 180.1 C894.1 177.6 888.9 176.3 886.3 174.0 C883.8 171.8 883.7 170.5 881.7 166.7 C879.7 163.0 875.9 155.9 874.4 151.3 C872.9 146.8 872.9 141.2 872.6 139.1" fill="none" stroke="#c3bfba" stroke-width="0.8" stroke-linecap="round" stroke-linejoin="round" /><path d="M979.6 414.7 C977.8 413.8 971.9 411.5 968.7 409.5 C965.4 407.6 963.3 404.9 960.3 403.2 C957.2 401.5 953.4 400.5 950.3 399.3 C947.3 398.0 945.2 398.2 941.8 395.8 C938.4 393.3 933.7 387.0 929.9 384.6 C926.1 382.1 920.9 381.7 919.1 381.2" fill="none" stroke="#c3bfba" stroke-width="0.8" stroke-linecap="round" stroke-linejoin="round" /><path d="M279.2 555.0 C281.1 554.8 287.1 555.3 290.8 553.6 C294.5 552.0 298.9 548.5 301.3 545.1 C303.6 541.7 303.1 536.9 305.0 533.3 C306.9 529.6 311.2 524.8 312.4 523.2" fill="none" stroke="#c3bfba" stroke-width="0.8" stroke-linecap="round" stroke-linejoin="round" /><path d="M148.0 372.9 C145.7 372.3 138.2 370.5 134.3 369.3 C130.4 368.2 127.9 366.8 124.7 365.9 C121.5 365.1 118.8 363.5 115.0 364.1 C111.2 364.7 104.1 368.5 101.9 369.4" fill="none" stroke="#c3bfba" stroke-width="0.8" stroke-linecap="round" stroke-linejoin="round" /><path d="M506.6 403.9 C503.6 404.2 494.5 405.9 488.2 405.4 C481.8 405.0 474.0 402.8 468.7 401.3 C463.3 399.9 459.9 399.4 456.0 396.8 C452.1 394.3 448.7 388.9 445.2 386.2 C441.6 383.6 437.4 382.6 434.5 380.9 C431.7 379.1 429.2 376.4 428.2 375.5" fill="none" stroke="#c3bfba" stroke-width="0.8" stroke-linecap="round" stroke-linejoin="round" /><path d="M982.1 486.2 C982.8 484.6 985.6 480.6 986.7 476.8 C987.7 472.9 988.9 467.1 988.4 463.2 C988.0 459.3 984.9 457.3 984.1 453.5 C983.3 449.6 984.7 445.1 983.7 439.9 C982.6 434.8 978.8 425.6 977.8 422.7" fill="none" stroke="#c3bfba" stroke-width="0.8" stroke-linecap="round" stroke-linejoin="round" /><path d="M106.7 303.6 C104.6 303.9 97.3 304.5 93.7 305.4 C90.1 306.3 89.5 308.6 85.1 308.9 C80.7 309.2 71.7 308.3 67.3 307.4 C62.8 306.5 59.9 304.0 58.4 303.4" fill="none" stroke="#c3bfba" stroke-width="0.8" stroke-linecap="round" stroke-linejoin="round" /><path d="M856.2 548.1 C858.2 549.1 864.6 550.8 868.5 554.0 C872.4 557.3 876.0 564.0 879.6 567.6 C883.1 571.2 886.7 573.1 889.8 575.9 C892.9 578.7 896.8 582.9 898.2 584.3" fill="none" stroke="#c3bfba" stroke-width="0.8" stroke-linecap="round" stroke-linejoin="round" /><path d="M252.4 315.4 C250.4 315.2 243.7 314.6 240.3 313.9 C236.9 313.3 236.0 312.8 232.1 311.7 C228.1 310.7 221.6 307.5 216.5 307.7 C211.3 307.8 205.0 311.3 201.1 312.7 C197.3 314.2 194.5 315.6 193.2 316.2" fill="none" stroke="#c3bfba" stroke-width="0.8" stroke-linecap="round" stroke-linejoin="round" /><path d="M95.6 371.2 C93.9 372.1 90.1 375.0 85.4 377.0 C80.7 379.1 73.3 381.9 67.6 383.4 C62.0 384.8 56.6 385.3 51.4 385.9 C46.3 386.4 39.1 386.5 36.6 386.6" fill="none" stroke="#c3bfba" stroke-width="0.8" stroke-linecap="round" stroke-linejoin="round" /><path d="M504.0 470.3 C500.9 470.5 491.3 469.7 485.5 471.4 C479.7 473.1 473.3 478.2 469.0 480.4 C464.7 482.7 462.8 483.1 459.8 485.0 C456.7 486.8 453.7 488.7 450.8 491.3 C448.0 493.9 446.9 497.6 442.7 500.8 C438.6 503.9 428.9 508.6 426.2 510.2" fill="none" stroke="#c3bfba" stroke-width="0.8" stroke-linecap="round" stroke-linejoin="round" /><path d="M1030.7 166.0 C1033.8 165.8 1043.5 166.0 1049.5 165.1 C1055.5 164.2 1061.0 162.2 1066.7 160.5 C1072.5 158.8 1081.2 155.9 1084.1 155.0" fill="none" stroke="#c3bfba" stroke-width="0.8" stroke-linecap="round" stroke-linejoin="round" /><path d="M504.1 392.2 C502.7 389.5 497.8 380.1 495.6 375.9 C493.4 371.7 494.0 370.4 491.0 367.2 C488.0 363.9 479.8 358.0 477.6 356.2" fill="none" stroke="#c3bfba" stroke-width="0.8" stroke-linecap="round" stroke-linejoin="round" /><path d="M353.2 344.4 C355.5 344.8 362.0 346.2 367.3 346.7 C372.7 347.2 379.1 348.0 385.1 347.3 C391.1 346.5 399.2 344.2 403.5 342.3 C407.8 340.5 409.7 337.1 410.9 336.1" fill="none" stroke="#c3bfba" stroke-width="0.8" stroke-linecap="round" stroke-linejoin="round" /><path d="M837.0 303.9 C834.6 304.1 828.1 305.0 823.0 304.8 C817.9 304.7 811.1 302.6 806.4 303.2 C801.8 303.8 798.6 307.2 795.2 308.5 C791.8 309.8 789.4 308.4 786.0 311.0 C782.5 313.6 776.3 322.0 774.4 324.2" fill="none" stroke="#c3bfba" stroke-width="0.8" stroke-linecap="round" stroke-linejoin="round" /><path d="M153.3 362.2 C150.9 364.1 143.1 369.5 138.5 373.6 C133.8 377.7 128.7 383.3 125.5 387.0 C122.3 390.7 121.8 393.0 119.2 395.8 C116.7 398.5 113.8 401.1 109.9 403.5 C106.0 405.9 99.2 407.8 95.9 410.0 C92.6 412.3 90.9 415.9 89.9 417.1" fill="none" stroke="#c3bfba" stroke-width="0.8" stroke-linecap="round" stroke-linejoin="round" /><path d="M56.1 440.4 C56.4 441.9 57.4 445.8 57.7 449.2 C57.9 452.6 57.7 456.2 57.5 460.6 C57.4 465.1 56.9 471.9 56.8 476.0 C56.7 480.1 56.9 480.6 57.0 485.3 C57.1 489.9 57.3 501.0 57.4 504.1" fill="none" stroke="#c3bfba" stroke-width="0.8" stroke-linecap="round" stroke-linejoin="round" /><path d="M156.6 564.4 C156.9 562.6 157.3 556.5 158.5 553.4 C159.6 550.4 159.7 549.0 163.3 546.0 C167.0 543.1 174.9 538.1 180.4 535.8 C186.0 533.6 191.2 534.0 196.4 532.3 C201.5 530.6 209.0 526.8 211.5 525.7" fill="none" stroke="#c3bfba" stroke-width="0.8" stroke-linecap="round" stroke-linejoin="round" /><path d="M611.7 530.9 C612.1 529.3 614.7 525.9 614.3 521.3 C613.8 516.8 610.9 508.5 609.0 503.6 C607.1 498.6 603.9 493.7 602.9 491.7" fill="none" stroke="#c3bfba" stroke-width="0.8" stroke-linecap="round" stroke-linejoin="round" /><path d="M238.6 396.6 C238.9 395.0 239.9 390.4 240.7 386.8 C241.5 383.1 241.6 378.8 243.3 375.0 C244.9 371.2 249.1 368.9 250.8 363.9 C252.5 358.8 253.8 349.8 253.5 344.7 C253.1 339.5 249.2 336.8 248.5 332.9 C247.7 329.1 249.0 323.3 249.1 321.4" fill="none" stroke="#c3bfba" stroke-width="0.8" stroke-linecap="round" stroke-linejoin="round" /><path d="M752.5 535.9 C749.4 534.9 740.3 531.5 734.2 530.2 C728.2 528.9 721.9 527.8 716.2 528.2 C710.5 528.6 702.9 531.9 700.3 532.7" fill="none" stroke="#c3bfba" stroke-width="0.8" stroke-linecap="round" stroke-linejoin="round" /><path d="M983.8 226.7 C980.8 225.7 971.1 222.4 965.3 220.6 C959.6 218.9 953.8 217.0 949.4 216.5 C944.9 216.0 940.5 217.5 938.7 217.7" fill="none" stroke="#c3bfba" stroke-width="0.8" stroke-linecap="round" stroke-linejoin="round" /><path d="M444.3 464.6 C443.4 463.4 440.0 459.6 439.1 457.0 C438.1 454.4 440.0 452.5 438.6 449.0 C437.2 445.5 433.1 441.1 430.4 436.0 C427.7 431.0 423.8 421.7 422.4 418.8" fill="none" stroke="#c3bfba" stroke-width="0.8" stroke-linecap="round" stroke-linejoin="round" /><path d="M565.9 565.4 C566.8 562.4 569.8 552.2 570.9 547.4 C572.0 542.6 572.7 540.2 572.6 536.5 C572.6 532.8 571.5 529.8 570.3 525.0 C569.2 520.2 566.7 510.7 566.0 507.9" fill="none" stroke="#c3bfba" stroke-width="0.8" stroke-linecap="round" stroke-linejoin="round" /><path d="M371.8 514.2 C373.2 511.8 377.4 504.1 379.9 500.0 C382.4 495.8 383.6 493.7 386.7 489.5 C389.8 485.3 395.2 479.3 398.6 474.6 C402.1 469.9 405.9 463.4 407.3 461.2" fill="none" stroke="#c3bfba" stroke-width="0.8" stroke-linecap="round" stroke-linejoin="round" /><path d="M286.5 366.3 C286.3 368.1 285.0 373.5 284.9 377.3 C284.8 381.0 285.2 384.8 286.1 388.8 C287.1 392.7 289.2 396.3 290.7 401.1 C292.2 405.9 294.8 412.0 295.0 417.7 C295.1 423.5 292.1 432.7 291.5 435.7" fill="none" stroke="#c3bfba" stroke-width="0.8" stroke-linecap="round" stroke-linejoin="round" /><path d="M424.7 307.7 C426.0 307.1 428.9 305.9 432.4 304.4 C435.9 302.8 441.7 299.5 445.7 298.5 C449.6 297.5 452.8 299.3 456.3 298.4 C459.8 297.5 462.7 294.9 466.7 292.9 C470.7 290.9 476.7 288.7 480.3 286.3 C483.9 283.9 487.0 279.9 488.3 278.6" fill="none" stroke="#c3bfba" stroke-width="0.8" stroke-linecap="round" stroke-linejoin="round" /><path d="M1022.0 393.0 C1021.3 394.5 1020.3 399.0 1017.7 402.0 C1015.0 405.0 1009.2 408.9 1006.1 411.0 C1002.9 413.1 1000.1 414.0 998.9 414.6" fill="none" stroke="#c3bfba" stroke-width="0.8" stroke-linecap="round" stroke-linejoin="round" /><path d="M580.0 517.9 C578.4 518.6 575.3 520.8 570.5 521.6 C565.6 522.5 556.0 522.2 550.9 522.8 C545.9 523.4 543.6 523.2 540.0 525.3 C536.4 527.3 533.0 532.2 529.4 535.0 C525.9 537.8 520.5 540.8 518.7 542.0" fill="none" stroke="#c3bfba" stroke-width="0.8" stroke-linecap="round" stroke-linejoin="round" /><path d="M908.0 524.3 C909.6 527.0 913.9 536.6 917.3 540.4 C920.7 544.2 923.8 545.9 928.2 547.2 C932.6 548.5 938.6 547.9 943.6 548.2 C948.6 548.5 953.9 549.8 958.3 549.2 C962.6 548.5 967.6 545.1 969.5 544.3" fill="none" stroke="#c3bfba" stroke-width="0.8" stroke-linecap="round" stroke-linejoin="round" /><path d="M205.9 552.1 C203.7 552.9 197.0 554.9 192.9 556.7 C188.7 558.4 186.0 561.3 181.0 562.8 C175.9 564.3 165.5 565.4 162.4 565.9" fill="none" stroke="#c3bfba" stroke-width="0.8" stroke-linecap="round" stroke-linejoin="round" /><path d="M209.5 348.8 C211.7 351.3 218.4 358.8 222.7 363.6 C227.1 368.4 230.6 374.0 235.5 377.7 C240.5 381.3 249.7 384.3 252.6 385.6" fill="none" stroke="#c3bfba" stroke-width="0.8" stroke-linecap="round" stroke-linejoin="round" /><path d="M25.7 323.1 C26.7 321.9 29.0 318.4 31.6 315.7 C34.3 313.0 39.0 310.3 41.4 306.8 C43.9 303.2 43.7 298.3 46.4 294.3 C49.2 290.3 54.7 285.4 57.8 283.0 C60.9 280.5 63.8 280.1 65.0 279.5" fill="none" stroke="#c3bfba" stroke-width="0.8" stroke-linecap="round" stroke-linejoin="round" /><path d="M282.5 579.4 C284.9 578.8 292.0 577.5 296.9 575.7 C301.7 573.8 307.5 571.0 311.4 568.3 C315.3 565.6 317.2 562.3 320.0 559.5 C322.7 556.7 326.7 552.9 328.0 551.5" fill="none" stroke="#c3bfba" stroke-width="0.8" stroke-linecap="round" stroke-linejoin="round" /><path d="M999.5 194.8 C997.8 193.0 992.2 187.5 989.0 184.0 C985.7 180.6 983.5 176.4 980.1 173.9 C976.6 171.5 970.2 170.0 968.3 169.2" fill="none" stroke="#c3bfba" stroke-width="0.8" stroke-linecap="round" stroke-linejoin="round" /><path d="M833.7 466.2 C835.7 463.6 843.0 455.0 846.0 450.7 C849.0 446.3 850.5 443.7 851.6 440.2 C852.7 436.6 851.5 433.8 852.6 429.2 C853.7 424.7 857.9 418.4 858.2 412.8 C858.5 407.2 854.5 400.8 854.6 395.6 C854.8 390.5 858.4 384.0 859.1 381.7" fill="none" stroke="#c3bfba" stroke-width="0.8" stroke-linecap="round" stroke-linejoin="round" /><path d="M135.3 369.9 C134.0 370.9 129.8 373.6 127.5 375.9 C125.1 378.2 123.0 381.1 121.1 383.7 C119.3 386.3 117.3 390.3 116.5 391.7" fill="none" stroke="#c3bfba" stroke-width="0.8" stroke-linecap="round" stroke-linejoin="round" /><path d="M575.1 544.5 C573.7 545.3 569.5 547.3 566.7 549.5 C563.9 551.8 561.3 554.4 558.2 557.9 C555.2 561.4 549.9 568.5 548.3 570.6" fill="none" stroke="#c3bfba" stroke-width="0.8" stroke-linecap="round" stroke-linejoin="round" /><path d="M193.3 301.4 C192.3 303.4 189.4 309.0 187.7 313.4 C186.0 317.7 183.4 323.1 182.9 327.4 C182.4 331.8 184.5 337.5 184.8 339.5" fill="none" stroke="#c3bfba" stroke-width="0.8" stroke-linecap="round" stroke-linejoin="round" /><path d="M867.6 181.7 C867.7 184.3 867.8 192.1 867.9 197.0 C868.1 201.9 869.1 207.5 868.5 211.1 C868.0 214.6 867.5 215.2 864.6 218.3 C861.7 221.4 853.6 227.9 851.4 229.8" fill="none" stroke="#c3bfba" stroke-width="0.8" stroke-linecap="round" stroke-linejoin="round" /><path d="M229.8 505.9 C231.7 506.2 236.7 507.6 241.5 507.8 C246.3 507.9 253.8 507.8 258.6 506.7 C263.5 505.7 267.2 503.0 270.4 501.5 C273.7 500.0 276.9 498.3 278.2 497.6" fill="none" stroke="#c3bfba" stroke-width="0.8" stroke-linecap="round" stroke-linejoin="round" /><path d="M114.4 564.1 C116.5 562.6 123.3 557.8 126.9 554.7 C130.5 551.6 132.0 548.0 136.0 545.3 C139.9 542.7 145.4 539.7 150.9 538.8 C156.3 537.9 164.6 540.5 168.9 540.2 C173.1 539.9 173.1 539.3 176.6 537.3 C180.1 535.2 187.5 529.5 189.7 527.9" fill="none" stroke="#c3bfba" stroke-width="0.8" stroke-linecap="round" stroke-linejoin="round" /><path d="M760.1 529.7 C759.3 532.8 757.6 543.1 755.6 548.3 C753.6 553.5 751.4 556.7 747.9 560.7 C744.5 564.8 739.0 568.5 735.0 572.7 C731.1 576.8 726.0 583.4 724.1 585.6" fill="none" stroke="#c3bfba" stroke-width="0.8" stroke-linecap="round" stroke-linejoin="round" /><path d="M102.4 512.2 C99.8 512.9 91.3 515.4 86.5 516.7 C81.7 517.9 78.6 520.0 73.5 519.7 C68.5 519.4 61.1 515.4 56.1 514.7 C51.1 514.0 45.8 515.4 43.7 515.6" fill="none" stroke="#c3bfba" stroke-width="0.8" stroke-linecap="round" stroke-linejoin="round" /><path d="M773.2 332.8 C772.5 334.9 770.1 341.4 769.0 345.4 C768.0 349.3 767.7 353.1 767.1 356.5 C766.4 359.9 764.5 361.8 765.0 365.9 C765.4 370.0 767.1 376.6 769.8 381.2 C772.4 385.8 777.3 389.0 780.7 393.4 C784.2 397.8 788.8 405.2 790.4 407.5" fill="none" stroke="#c3bfba" stroke-width="0.8" stroke-linecap="round" stroke-linejoin="round" /><path d="M367.3 547.4 C369.1 547.4 374.8 548.2 378.2 547.1 C381.5 545.9 383.5 542.9 387.3 540.6 C391.2 538.2 399.0 534.2 401.3 532.9" fill="none" stroke="#c3bfba" stroke-width="0.8" stroke-linecap="round" stroke-linejoin="round" /><path d="M19.0 176.0 C19.8 178.7 23.2 183.3 24.0 192.0 C24.8 200.7 22.5 220.3 24.0 228.0 C25.5 235.7 30.7 231.7 33.0 238.0 C35.3 244.3 34.8 260.8 38.0 266.0 C41.2 271.2 47.2 267.3 52.0 269.0 C56.8 270.7 64.2 273.7 67.0 276.0 C69.8 278.3 65.2 279.0 69.0 283.0 C72.8 287.0 82.5 290.5 90.0 300.0 C97.5 309.5 106.8 328.2 114.0 340.0 C121.2 351.8 125.0 358.7 133.0 371.0 C141.0 383.3 151.7 404.8 162.0 414.0 C172.3 423.2 187.8 422.8 195.0 426.0 C202.2 429.2 200.2 428.0 205.0 433.0 C209.8 438.0 215.3 451.8 224.0 456.0 C232.7 460.2 249.5 456.3 257.0 458.0 C264.5 459.7 261.8 463.2 269.0 466.0 C276.2 468.8 294.8 473.5 300.0 475.0" fill="none" stroke="#8f8c89" stroke-width="1.0" stroke-linecap="round" stroke-linejoin="round" /><path d="M533.0 145.0 C532.8 150.7 531.2 170.2 532.0 179.0 C532.8 187.8 535.5 190.5 538.0 198.0 C540.5 205.5 544.7 215.3 547.0 224.0 C549.3 232.7 549.8 240.7 552.0 250.0 C554.2 259.3 557.8 270.0 560.0 280.0 C562.2 290.0 564.2 305.0 565.0 310.0" fill="none" stroke="#8f8c89" stroke-width="1.0" stroke-linecap="round" stroke-linejoin="round" /><path d="M500.0 157.0 C500.7 161.8 503.0 178.3 504.0 186.0 C505.0 193.7 503.8 197.7 506.0 203.0 C508.2 208.3 515.0 209.7 517.0 218.0 C519.0 226.3 514.7 244.0 518.0 253.0 C521.3 262.0 533.5 263.5 537.0 272.0 C540.5 280.5 538.5 292.7 539.0 304.0 C539.5 315.3 539.0 329.0 540.0 340.0 C541.0 351.0 544.2 365.0 545.0 370.0" fill="none" stroke="#8f8c89" stroke-width="1.0" stroke-linecap="round" stroke-linejoin="round" /><path d="M560.0 247.0 C562.8 248.0 568.5 251.3 577.0 253.0 C585.5 254.7 600.5 255.7 611.0 257.0 C621.5 258.3 630.2 259.7 640.0 261.0 C649.8 262.3 665.0 264.3 670.0 265.0" fill="none" stroke="#8f8c89" stroke-width="1.0" stroke-linecap="round" stroke-linejoin="round" /><path d="M752.0 133.0 C750.7 134.8 747.5 138.5 744.0 144.0 C740.5 149.5 735.3 160.0 731.0 166.0 C726.7 172.0 721.2 175.8 718.0 180.0 C714.8 184.2 713.8 186.2 712.0 191.0 C710.2 195.8 708.3 202.2 707.0 209.0 C705.7 215.8 706.5 224.7 704.0 232.0 C701.5 239.3 696.0 246.7 692.0 253.0 C688.0 259.3 682.0 267.2 680.0 270.0" fill="none" stroke="#8f8c89" stroke-width="1.0" stroke-linecap="round" stroke-linejoin="round" /><path d="M722.0 338.0 C734.2 343.0 771.5 356.7 795.0 368.0 C818.5 379.3 842.7 388.8 863.0 406.0 C883.3 423.2 898.3 453.7 917.0 471.0 C935.7 488.3 956.0 497.3 975.0 510.0 C994.0 522.7 1021.7 540.8 1031.0 547.0" fill="none" stroke="#8f8c89" stroke-width="1.0" stroke-linecap="round" stroke-linejoin="round" /><path d="M565.0 455.0 C564.2 459.2 561.5 469.2 560.0 480.0 C558.5 490.8 556.0 503.3 556.0 520.0 C556.0 536.7 559.3 570.0 560.0 580.0" fill="none" stroke="#8f8c89" stroke-width="1.0" stroke-linecap="round" stroke-linejoin="round" /><path d="M662.0 356.0 C656.2 364.0 635.0 391.8 627.0 404.0 C619.0 416.2 618.2 425.5 614.0 429.0 C609.8 432.5 606.8 425.0 602.0 425.0 C597.2 425.0 590.5 427.3 585.0 429.0 C579.5 430.7 574.3 432.8 569.0 435.0 C563.7 437.2 559.2 440.5 553.0 442.0 C546.8 443.5 539.0 442.0 532.0 444.0 C525.0 446.0 519.7 452.3 511.0 454.0 C502.3 455.7 485.2 454.0 480.0 454.0" fill="none" stroke="#8f8c89" stroke-width="1.0" stroke-linecap="round" stroke-linejoin="round" /><path d="M779.0 580.0 C791.8 574.5 836.8 558.8 856.0 547.0 C875.2 535.2 878.8 523.5 894.0 509.0 C909.2 494.5 925.5 472.7 947.0 460.0 C968.5 447.3 1010.3 437.5 1023.0 433.0" fill="none" stroke="#8f8c89" stroke-width="1.0" stroke-linecap="round" stroke-linejoin="round" /><path d="M740.0 255.0 C746.7 256.2 766.8 260.7 780.0 262.0 C793.2 263.3 804.2 262.7 819.0 263.0 C833.8 263.3 855.7 265.7 869.0 264.0 C882.3 262.3 890.7 259.5 899.0 253.0 C907.3 246.5 914.0 229.2 919.0 225.0 C924.0 220.8 924.8 225.8 929.0 228.0 C933.2 230.2 939.0 235.5 944.0 238.0 C949.0 240.5 955.3 239.7 959.0 243.0 C962.7 246.3 961.0 255.2 966.0 258.0 C971.0 260.8 978.2 258.0 989.0 260.0 C999.8 262.0 1024.0 268.3 1031.0 270.0" fill="none" stroke="#8f8c89" stroke-width="1.0" stroke-linecap="round" stroke-linejoin="round" /><path d="M652.0 133.0 C651.9 134.5 651.8 139.2 651.6 142.2 C651.5 145.3 651.4 148.4 651.3 151.5 C651.2 154.6 651.0 157.7 651.1 160.8 C651.2 163.8 652.0 167.0 652.0 170.0 C652.0 173.0 650.9 176.0 650.9 179.0 C650.8 182.0 651.6 185.0 651.7 188.0 C651.8 191.0 650.9 194.0 651.3 197.0 C651.8 200.0 653.9 203.0 654.2 206.0 C654.5 209.0 653.2 213.5 653.0 215.0" fill="none" stroke="#f5c380" stroke-width="1.5" stroke-linecap="round" stroke-linejoin="round" /><path d="M675.0 133.0 C675.0 134.5 675.3 139.2 675.1 142.2 C674.9 145.3 673.8 148.4 673.7 151.5 C673.6 154.6 674.3 157.7 674.6 160.8 C674.8 163.8 675.1 166.9 675.0 170.0 C674.9 173.1 673.9 176.1 674.2 179.1 C674.5 182.0 676.6 185.0 677.0 187.9 C677.3 190.9 676.2 194.0 676.3 197.0 C676.4 200.0 677.2 203.0 677.4 206.0 C677.5 209.0 677.1 213.5 677.0 215.0" fill="none" stroke="#f5c380" stroke-width="1.5" stroke-linecap="round" stroke-linejoin="round" /><path d="M640.0 160.0 C641.7 160.0 646.7 160.1 650.0 160.1 C653.3 160.2 656.7 160.5 660.0 160.2 C663.3 160.0 666.7 158.7 670.0 158.5 C673.3 158.4 676.7 158.9 680.0 159.2 C683.3 159.4 688.3 159.9 690.0 160.0" fill="none" stroke="#f5c380" stroke-width="1.5" stroke-linecap="round" stroke-linejoin="round" /><path d="M600.0 186.0 C601.7 185.9 606.7 185.1 610.0 185.3 C613.3 185.5 616.7 187.0 620.0 187.2 C623.3 187.5 626.7 187.0 630.0 186.8 C633.3 186.6 636.7 186.3 640.0 186.0 C643.3 185.7 646.7 184.8 650.0 185.0 C653.3 185.1 656.7 186.9 660.0 186.9 C663.3 186.9 666.7 185.1 670.0 184.9 C673.3 184.8 676.7 185.8 680.0 186.0 C683.3 186.2 686.7 186.5 690.0 186.4 C693.3 186.2 696.7 185.2 700.0 184.9 C703.3 184.6 706.7 184.3 710.0 184.5 C713.3 184.7 718.3 185.8 720.0 186.0" fill="none" stroke="#f5c380" stroke-width="1.5" stroke-linecap="round" stroke-linejoin="round" /><path d="M640.0 200.0 C641.7 200.2 646.7 201.3 650.0 201.1 C653.3 201.0 656.7 199.5 660.0 199.1 C663.3 198.8 666.7 198.8 670.0 199.1 C673.3 199.5 676.7 201.1 680.0 201.4 C683.3 201.8 686.7 201.4 690.0 201.1 C693.3 200.9 696.7 200.3 700.0 200.0 C703.3 199.7 706.7 199.1 710.0 199.4 C713.3 199.6 716.7 201.3 720.0 201.4 C723.3 201.5 726.7 200.3 730.0 200.1 C733.3 200.0 736.7 200.7 740.0 200.5 C743.3 200.4 746.7 199.2 750.0 199.1 C753.3 199.0 756.7 199.6 760.0 200.0 C763.3 200.4 766.7 201.2 770.0 201.3 C773.3 201.4 776.7 200.6 780.0 200.6 C783.3 200.6 786.7 201.5 790.0 201.4 C793.3 201.3 798.3 200.2 800.0 200.0" fill="none" stroke="#f5c380" stroke-width="1.5" stroke-linecap="round" stroke-linejoin="round" /><path d="M680.0 206.0 C681.7 206.2 686.7 207.3 690.0 207.2 C693.3 207.1 696.7 205.7 700.0 205.4 C703.3 205.1 706.7 205.5 710.0 205.6 C713.3 205.7 716.7 206.1 720.0 206.0 C723.3 205.9 726.7 205.2 730.0 205.0 C733.3 204.8 736.7 205.0 740.0 204.9 C743.3 204.9 746.7 204.5 750.0 204.7 C753.3 204.9 758.3 205.8 760.0 206.0" fill="none" stroke="#f5c380" stroke-width="1.5" stroke-linecap="round" stroke-linejoin="round" /><path d="M730.0 220.0 C731.7 219.9 736.7 219.4 740.0 219.4 C743.3 219.5 746.7 220.5 750.0 220.3 C753.3 220.2 756.7 218.6 760.0 218.5 C763.3 218.5 766.7 219.7 770.0 220.0 C773.3 220.3 776.7 220.6 780.0 220.5 C783.3 220.5 786.7 219.6 790.0 219.5 C793.3 219.4 798.3 219.9 800.0 220.0" fill="none" stroke="#f5c380" stroke-width="1.5" stroke-linecap="round" stroke-linejoin="round" /><path d="M724.0 183.0 C724.1 184.5 724.7 189.2 724.6 192.2 C724.4 195.3 723.1 198.4 723.0 201.5 C723.0 204.6 723.9 207.7 724.1 210.8 C724.2 213.8 724.0 216.6 724.0 220.0 C724.0 223.4 724.3 227.3 724.2 231.0 C724.1 234.7 723.6 238.3 723.4 242.0 C723.2 245.7 723.1 251.2 723.0 253.0" fill="none" stroke="#f5c380" stroke-width="1.5" stroke-linecap="round" stroke-linejoin="round" /><path d="M775.0 133.0 C774.9 134.5 774.3 139.2 774.6 142.3 C774.9 145.3 776.9 148.4 776.8 151.5 C776.8 154.6 774.5 157.7 774.3 160.8 C774.2 163.9 775.5 166.8 776.0 170.0 C776.5 173.2 777.4 176.7 777.2 180.0 C777.0 183.4 775.3 186.7 774.9 190.0 C774.4 193.3 774.1 196.6 774.4 200.0 C774.7 203.3 776.5 206.7 776.6 210.0 C776.8 213.4 775.3 218.3 775.0 220.0" fill="none" stroke="#f5c380" stroke-width="1.5" stroke-linecap="round" stroke-linejoin="round" /><path d="M609.0 144.0 C610.3 145.2 613.8 149.3 617.0 151.0 C620.2 152.7 624.5 153.5 628.3 154.3 C632.1 155.2 638.1 155.7 640.0 156.0" fill="none" stroke="#f5c380" stroke-width="1.5" stroke-linecap="round" stroke-linejoin="round" /><path d="M625.0 186.0 C626.0 188.7 630.4 197.4 631.0 202.0 C631.6 206.6 629.7 209.8 628.9 213.6 C628.1 217.4 626.5 223.1 626.0 225.0" fill="none" stroke="#f5c380" stroke-width="1.5" stroke-linecap="round" stroke-linejoin="round" /><path d="M568.0 230.0 C569.6 229.9 574.4 229.6 577.5 229.2 C580.7 228.9 584.9 226.2 587.0 228.0 C589.1 229.8 590.5 235.8 590.0 240.0 C589.5 244.2 585.0 250.8 584.0 253.0" fill="none" stroke="#f5c380" stroke-width="1.5" stroke-linecap="round" stroke-linejoin="round" /><path d="M501.0 145.0 C501.3 150.7 501.7 167.8 503.0 179.0 C504.3 190.2 506.5 199.7 509.0 212.0 C511.5 224.3 517.2 240.2 518.0 253.0 C518.8 265.8 515.3 280.5 514.0 289.0 C512.7 297.5 510.7 301.5 510.0 304.0" fill="none" stroke="#f5c380" stroke-width="1.5" stroke-linecap="round" stroke-linejoin="round" /><path d="M536.0 133.0 C535.3 135.5 532.4 143.8 532.0 148.0 C531.6 152.2 533.5 154.8 533.8 158.3 C534.1 161.7 534.2 165.2 534.0 168.6 C533.9 172.1 533.2 177.3 533.0 179.0" fill="none" stroke="#f5c380" stroke-width="1.5" stroke-linecap="round" stroke-linejoin="round" /><path d="M562.0 160.0 C564.8 160.3 574.3 161.3 579.0 162.0 C583.7 162.7 588.2 163.7 590.0 164.0" fill="none" stroke="#f5c380" stroke-width="1.5" stroke-linecap="round" stroke-linejoin="round" /><path d="M543.0 265.0 C545.8 262.2 553.0 251.3 560.0 248.0 C567.0 244.7 579.0 243.0 585.0 245.0 C591.0 247.0 595.2 254.5 596.0 260.0 C596.8 265.5 595.2 274.3 590.0 278.0 C584.8 281.7 572.5 282.0 565.0 282.0 C557.5 282.0 548.7 280.8 545.0 278.0 C541.3 275.2 543.3 267.2 543.0 265.0" fill="none" stroke="#f5c380" stroke-width="1.5" stroke-linecap="round" stroke-linejoin="round" /><path d="M507.0 264.0 C513.3 262.8 535.5 259.8 545.0 257.0 C554.5 254.2 556.7 250.8 564.0 247.0 C571.3 243.2 584.5 238.7 589.0 234.0 C593.5 229.3 590.7 221.5 591.0 219.0" fill="none" stroke="#f5c380" stroke-width="1.5" stroke-linecap="round" stroke-linejoin="round" /><path d="M596.0 262.0 C597.9 262.2 603.8 262.2 607.5 263.1 C611.2 263.9 614.7 266.5 618.4 267.3 C622.2 268.2 626.4 267.9 630.0 268.0 C633.6 268.1 636.8 267.8 640.1 268.1 C643.4 268.4 648.3 269.7 650.0 270.0" fill="none" stroke="#f5c380" stroke-width="1.5" stroke-linecap="round" stroke-linejoin="round" /><path d="M560.0 300.0 C561.7 300.1 566.7 300.6 570.0 300.8 C573.3 301.0 576.7 301.2 580.0 301.3 C583.3 301.4 586.7 301.5 590.0 301.3 C593.3 301.1 596.6 299.9 600.0 300.0 C603.4 300.1 606.8 301.3 610.1 302.0 C613.5 302.8 616.8 303.7 620.1 304.6 C623.4 305.5 626.7 306.7 630.0 307.6 C633.3 308.5 638.3 309.6 640.0 310.0" fill="none" stroke="#f5c380" stroke-width="1.5" stroke-linecap="round" stroke-linejoin="round" /><path d="M570.0 320.0 C571.7 320.1 576.7 321.0 580.0 320.8 C583.3 320.6 586.7 319.0 590.0 318.8 C593.3 318.7 596.7 318.5 600.0 320.0 C603.3 321.5 606.2 325.6 609.6 328.1 C612.9 330.6 618.3 333.8 620.0 335.0" fill="none" stroke="#f5c380" stroke-width="1.5" stroke-linecap="round" stroke-linejoin="round" /><path d="M545.0 333.0 C545.0 339.5 542.5 365.5 545.0 372.0 C547.5 378.5 555.2 374.3 560.0 372.0 C564.8 369.7 568.8 363.8 574.0 358.0 C579.2 352.2 586.3 343.3 591.0 337.0 C595.7 330.7 600.2 322.8 602.0 320.0" fill="none" stroke="#f5c380" stroke-width="1.5" stroke-linecap="round" stroke-linejoin="round" /><path d="M480.0 347.0 C481.6 346.5 486.3 345.0 489.4 343.8 C492.4 342.6 495.5 341.5 498.4 340.0 C501.4 338.5 504.4 337.7 507.0 335.0 C509.6 332.3 512.8 325.8 514.0 324.0" fill="none" stroke="#f5c380" stroke-width="1.5" stroke-linecap="round" stroke-linejoin="round" /><path d="M540.0 300.0 C542.0 299.0 547.8 295.4 552.0 293.7 C556.2 292.0 561.5 291.3 565.0 290.0 C568.5 288.7 570.7 287.8 573.2 286.1 C575.7 284.4 578.9 281.0 580.0 280.0" fill="none" stroke="#f5c380" stroke-width="1.5" stroke-linecap="round" stroke-linejoin="round" /><path d="M769.0 250.0 C775.7 248.8 799.0 243.7 809.0 243.0 C819.0 242.3 822.0 244.8 829.0 246.0 C836.0 247.2 843.5 247.2 851.0 250.0 C858.5 252.8 868.2 260.8 874.0 263.0 C879.8 265.2 881.5 266.3 886.0 263.0 C890.5 259.7 895.5 249.3 901.0 243.0 C906.5 236.7 908.5 230.0 919.0 225.0 C929.5 220.0 950.7 217.5 964.0 213.0 C977.3 208.5 987.8 200.3 999.0 198.0 C1010.2 195.7 1025.7 198.8 1031.0 199.0" fill="none" stroke="#f5c380" stroke-width="1.5" stroke-linecap="round" stroke-linejoin="round" /><path d="M919.0 225.0 C920.6 225.3 925.5 226.1 928.7 227.1 C931.8 228.1 934.7 229.7 937.7 231.0 C940.7 232.4 943.6 233.9 946.6 235.1 C949.7 236.2 953.2 236.5 956.0 238.0 C958.8 239.5 960.9 242.5 963.7 244.1 C966.5 245.7 970.0 246.1 972.9 247.6 C975.8 249.1 978.0 251.4 981.0 253.0 C984.0 254.6 987.3 256.2 990.6 257.2 C994.0 258.2 997.5 258.4 1001.0 259.1 C1004.4 259.8 1007.8 260.6 1011.2 261.5 C1014.5 262.4 1017.9 263.4 1021.2 264.5 C1024.5 265.6 1029.4 267.4 1031.0 268.0" fill="none" stroke="#f5c380" stroke-width="1.5" stroke-linecap="round" stroke-linejoin="round" /><path d="M769.0 168.0 C770.6 167.6 775.5 166.1 778.8 165.4 C782.1 164.6 785.4 163.8 788.8 163.4 C792.2 163.0 795.7 164.5 799.0 163.0 C802.3 161.5 805.0 157.2 808.4 154.7 C811.7 152.2 815.7 151.6 819.0 148.0 C822.3 144.4 826.5 135.5 828.0 133.0" fill="none" stroke="#f5c380" stroke-width="1.5" stroke-linecap="round" stroke-linejoin="round" /><path d="M774.0 133.0 C773.9 134.5 773.7 139.0 773.4 142.0 C773.2 145.0 772.2 148.0 772.5 151.0 C772.8 154.0 774.5 157.0 775.0 160.0 C775.5 163.0 775.5 166.0 775.4 169.0 C775.2 172.0 775.1 174.5 774.0 178.0 C772.9 181.5 769.8 188.0 769.0 190.0" fill="none" stroke="#f5c380" stroke-width="1.5" stroke-linecap="round" stroke-linejoin="round" /><path d="M569.0 449.0 C568.2 449.8 565.8 448.8 564.0 454.0 C562.2 459.2 558.7 469.0 558.0 480.0 C557.3 491.0 558.8 503.3 560.0 520.0 C561.2 536.7 564.2 570.0 565.0 580.0" fill="none" stroke="#f5c380" stroke-width="1.5" stroke-linecap="round" stroke-linejoin="round" /><path d="M269.0 489.0 C271.0 491.5 275.0 497.5 281.0 504.0 C287.0 510.5 295.8 519.7 305.0 528.0 C314.2 536.3 322.2 548.3 336.0 554.0 C349.8 559.7 371.3 560.0 388.0 562.0 C404.7 564.0 422.2 563.3 436.0 566.0 C449.8 568.7 463.7 575.3 471.0 578.0 C478.3 580.7 478.5 581.3 480.0 582.0" fill="none" stroke="#f5c380" stroke-width="1.5" stroke-linecap="round" stroke-linejoin="round" /><path d="M290.0 433.0 C289.9 434.5 289.1 439.1 289.3 442.1 C289.5 445.1 290.9 448.0 291.4 451.0 C291.9 454.0 292.3 457.0 292.5 460.0 C292.8 463.0 292.3 465.5 293.0 469.0 C293.7 472.5 295.8 476.8 296.8 480.8 C297.8 484.8 298.3 489.5 299.0 493.0 C299.7 496.5 300.7 500.5 301.0 502.0" fill="none" stroke="#f5c380" stroke-width="1.5" stroke-linecap="round" stroke-linejoin="round" /><path d="M268.0 133.0 C270.1 133.8 276.2 136.3 280.4 137.8 C284.6 139.3 289.0 141.2 293.0 142.0 C297.0 142.8 300.6 142.6 304.4 142.3 C308.2 142.1 311.9 140.9 315.7 140.5 C319.4 140.1 323.4 140.0 327.0 140.0 C330.6 140.0 334.0 140.1 337.5 140.3 C341.0 140.4 346.3 140.9 348.0 141.0" fill="none" stroke="#f5c380" stroke-width="1.5" stroke-linecap="round" stroke-linejoin="round" /><path d="M879.0 490.0 C885.0 488.3 903.2 483.7 915.0 480.0 C926.8 476.3 937.5 473.0 950.0 468.0 C962.5 463.0 976.5 455.0 990.0 450.0 C1003.5 445.0 1024.2 440.0 1031.0 438.0" fill="none" stroke="#f5c380" stroke-width="1.5" stroke-linecap="round" stroke-linejoin="round" /><path d="M863.0 460.0 C864.6 460.3 869.5 460.8 872.5 462.1 C875.4 463.4 877.6 466.5 880.6 467.8 C883.5 469.2 886.7 469.4 890.0 470.0 C893.3 470.6 897.0 470.4 900.4 471.3 C903.7 472.2 906.7 474.2 910.0 475.3 C913.3 476.4 918.3 477.6 920.0 478.0" fill="none" stroke="#f5c380" stroke-width="1.5" stroke-linecap="round" stroke-linejoin="round" /><path d="M415.0 394.0 C419.2 390.8 430.8 382.3 440.0 375.0 C449.2 367.7 459.5 357.5 470.0 350.0 C480.5 342.5 493.0 335.8 503.0 330.0 C513.0 324.2 525.5 317.5 530.0 315.0" fill="none" stroke="#f5c380" stroke-width="1.5" stroke-linecap="round" stroke-linejoin="round" /><path d="M760.0 450.0 C761.6 451.0 766.1 454.4 769.5 455.9 C773.0 457.4 777.1 457.4 780.5 459.0 C783.9 460.6 786.4 463.8 789.7 465.6 C792.9 467.5 796.7 468.6 800.0 470.0 C803.3 471.4 806.4 472.9 809.7 473.8 C813.0 474.7 816.6 474.6 819.9 475.4 C823.3 476.1 826.4 477.6 829.8 478.3 C833.1 479.1 838.3 479.7 840.0 480.0" fill="none" stroke="#f5c380" stroke-width="1.5" stroke-linecap="round" stroke-linejoin="round" /><path d="M1031.0 250.0 C1029.8 251.8 1026.6 257.4 1023.9 260.7 C1021.3 264.1 1016.7 266.8 1015.0 270.0 C1013.3 273.2 1013.9 276.7 1013.5 280.0 C1013.1 283.4 1013.3 286.8 1012.7 290.2 C1012.1 293.5 1010.5 298.4 1010.0 300.0" fill="none" stroke="#f5c380" stroke-width="1.5" stroke-linecap="round" stroke-linejoin="round" /><path d="M1031.0 500.0 C1029.7 501.0 1025.5 503.6 1023.3 505.9 C1021.0 508.2 1019.6 511.4 1017.4 513.8 C1015.2 516.1 1012.1 517.7 1010.0 520.0 C1007.9 522.3 1007.0 525.2 1005.1 527.6 C1003.2 529.9 1000.6 531.8 998.8 534.2 C996.9 536.6 995.6 539.3 994.1 541.9 C992.7 544.6 990.7 548.7 990.0 550.0" fill="none" stroke="#f5c380" stroke-width="1.5" stroke-linecap="round" stroke-linejoin="round" /><path d="M650.0 470.0 C650.6 471.4 652.1 475.8 653.8 478.3 C655.5 480.8 658.2 482.6 660.1 484.9 C662.0 487.3 663.4 490.0 665.0 492.5 C666.7 495.0 668.9 497.1 670.0 500.0 C671.1 502.9 671.0 506.8 671.8 510.2 C672.7 513.5 674.0 516.7 675.1 520.0 C676.1 523.3 677.3 526.5 678.1 529.8 C678.9 533.2 679.7 538.3 680.0 540.0" fill="none" stroke="#f5c380" stroke-width="1.5" stroke-linecap="round" stroke-linejoin="round" /><path d="M700.0 460.0 C701.1 461.1 704.5 464.4 706.9 466.5 C709.2 468.6 711.9 470.3 714.1 472.6 C716.3 474.8 718.1 477.5 720.0 480.0 C721.9 482.5 723.8 484.7 725.3 487.3 C726.8 489.9 727.4 493.2 728.8 495.8 C730.2 498.5 732.0 500.9 733.9 503.3 C735.7 505.6 739.0 508.9 740.0 510.0" fill="none" stroke="#f5c380" stroke-width="1.5" stroke-linecap="round" stroke-linejoin="round" /><path d="M617.7 195.0 C617.3 196.3 617.0 200.0 615.3 202.8 C613.7 205.5 609.9 207.7 607.8 211.3 C605.7 214.9 603.5 222.2 602.7 224.4" fill="none" stroke="#f5c380" stroke-width="1.4" stroke-linecap="round" stroke-linejoin="round" /><path d="M604.6 407.6 C606.8 406.8 613.8 405.2 617.7 402.7 C621.6 400.2 625.9 395.8 628.1 392.7 C630.3 389.5 629.6 386.9 631.0 383.8 C632.5 380.8 635.9 375.9 636.9 374.3" fill="none" stroke="#f5c380" stroke-width="1.4" stroke-linecap="round" stroke-linejoin="round" /><path d="M737.1 154.4 C738.8 154.0 744.6 152.8 747.8 151.7 C751.0 150.7 753.3 149.4 756.3 148.2 C759.3 146.9 762.3 144.9 765.9 144.5 C769.5 144.0 775.9 145.3 777.9 145.5" fill="none" stroke="#f5c380" stroke-width="1.4" stroke-linecap="round" stroke-linejoin="round" /><path d="M561.3 272.0 C563.2 272.5 569.0 273.8 573.0 274.6 C576.9 275.5 581.6 276.1 585.1 277.3 C588.6 278.4 590.6 279.8 593.9 281.6 C597.1 283.4 601.4 286.2 604.3 288.3 C607.3 290.4 610.4 293.3 611.6 294.3" fill="none" stroke="#f5c380" stroke-width="1.4" stroke-linecap="round" stroke-linejoin="round" /><path d="M509.5 232.9 C508.0 233.0 503.2 233.9 500.2 233.4 C497.2 232.8 494.4 230.9 491.5 229.9 C488.5 228.8 486.1 227.2 482.6 227.1 C479.1 226.9 472.6 228.7 470.6 229.0" fill="none" stroke="#f5c380" stroke-width="1.4" stroke-linecap="round" stroke-linejoin="round" /><path d="M680.3 202.3 C680.5 204.1 681.1 209.0 681.5 213.0 C682.0 217.0 683.3 222.5 683.0 226.3 C682.7 230.1 681.1 232.4 679.8 235.7 C678.6 239.1 676.9 242.4 675.5 246.4 C674.1 250.4 672.1 257.5 671.4 259.7" fill="none" stroke="#f5c380" stroke-width="1.4" stroke-linecap="round" stroke-linejoin="round" /><path d="M680.4 143.0 C680.1 141.5 680.1 137.5 678.6 134.0 C677.1 130.5 673.9 125.0 671.4 122.2 C669.0 119.4 667.0 119.8 663.8 117.2 C660.6 114.7 654.2 108.8 652.3 107.1" fill="none" stroke="#f5c380" stroke-width="1.4" stroke-linecap="round" stroke-linejoin="round" /><path d="M578.0 177.2 C577.6 175.1 576.9 169.3 575.5 165.1 C574.1 161.0 572.4 155.8 569.6 152.3 C566.9 148.8 561.3 146.7 558.9 144.1 C556.5 141.5 555.9 138.0 555.3 136.8" fill="none" stroke="#f5c380" stroke-width="1.4" stroke-linecap="round" stroke-linejoin="round" /><path d="M657.8 317.8 C657.9 315.4 658.9 307.2 658.6 303.3 C658.3 299.4 657.0 297.5 655.9 294.6 C654.8 291.7 653.4 289.6 652.1 285.9 C650.9 282.1 649.0 274.4 648.4 272.1" fill="none" stroke="#f5c380" stroke-width="1.4" stroke-linecap="round" stroke-linejoin="round" /><path d="M475.2 167.2 C472.7 167.4 464.2 168.2 460.1 168.3 C456.0 168.4 453.7 168.5 450.7 167.8 C447.6 167.1 445.2 166.1 441.8 164.0 C438.5 162.0 432.5 156.9 430.6 155.5" fill="none" stroke="#f5c380" stroke-width="1.4" stroke-linecap="round" stroke-linejoin="round" /><path d="M661.4 277.9 C663.8 278.2 671.6 279.4 676.2 279.7 C680.7 280.0 685.1 279.3 688.7 279.9 C692.3 280.6 696.4 282.9 697.9 283.5" fill="none" stroke="#f5c380" stroke-width="1.4" stroke-linecap="round" stroke-linejoin="round" /><path d="M535.6 177.8 C533.6 177.3 526.8 175.7 523.4 174.8 C520.0 173.9 518.3 173.4 515.3 172.4 C512.3 171.3 508.7 169.7 505.5 168.4 C502.3 167.1 499.6 166.2 496.0 164.4 C492.4 162.5 485.8 158.5 483.8 157.3" fill="none" stroke="#f5c380" stroke-width="1.4" stroke-linecap="round" stroke-linejoin="round" /><path d="M520.5 151.7 C520.1 149.6 518.3 143.7 518.4 138.9 C518.4 134.2 519.9 128.4 520.7 123.3 C521.4 118.1 522.6 110.4 523.0 107.9" fill="none" stroke="#f5c380" stroke-width="1.4" stroke-linecap="round" stroke-linejoin="round" /><path d="M688.0 335.5 C688.0 334.1 688.2 330.2 688.2 327.1 C688.2 324.1 687.5 321.2 687.8 317.2 C688.1 313.1 689.8 305.2 690.2 302.8" fill="none" stroke="#f5c380" stroke-width="1.4" stroke-linecap="round" stroke-linejoin="round" /><path d="M703.3 263.9 C703.3 261.3 704.0 252.6 703.2 248.2 C702.4 243.7 700.1 241.2 698.4 237.4 C696.6 233.5 693.6 226.9 692.7 224.9" fill="none" stroke="#f5c380" stroke-width="1.4" stroke-linecap="round" stroke-linejoin="round" /><path d="M715.5 324.7 C713.4 325.4 707.9 328.1 703.2 328.8 C698.5 329.4 691.3 329.3 687.5 328.7 C683.7 328.0 683.3 326.0 680.4 324.8 C677.6 323.6 672.1 322.2 670.4 321.6" fill="none" stroke="#f5c380" stroke-width="1.4" stroke-linecap="round" stroke-linejoin="round" /><path d="M586.9 174.7 C589.0 175.8 596.0 179.3 599.4 180.9 C602.8 182.6 604.7 182.2 607.5 184.6 C610.3 186.9 613.2 192.4 616.2 195.1 C619.1 197.8 621.9 198.5 625.1 201.0 C628.2 203.5 633.5 208.4 635.1 209.9" fill="none" stroke="#f5c380" stroke-width="1.4" stroke-linecap="round" stroke-linejoin="round" /><path d="M541.3 406.0 C539.8 404.6 536.0 400.2 532.5 397.7 C529.1 395.3 523.8 393.4 520.6 391.3 C517.5 389.3 514.8 386.3 513.6 385.3" fill="none" stroke="#f5c380" stroke-width="1.4" stroke-linecap="round" stroke-linejoin="round" /><path d="M587.4 248.3 C585.7 248.2 581.5 247.4 577.3 248.1 C573.1 248.8 566.5 250.2 562.2 252.6 C558.0 255.0 555.6 260.1 551.7 262.5 C547.8 264.9 542.3 264.7 538.8 266.8 C535.2 269.0 531.8 274.0 530.4 275.5" fill="none" stroke="#f5c380" stroke-width="1.4" stroke-linecap="round" stroke-linejoin="round" /><path d="M534.1 135.2 C536.5 136.0 544.5 139.0 548.4 140.1 C552.3 141.3 553.7 140.5 557.3 142.0 C560.9 143.4 568.0 147.7 570.1 148.9" fill="none" stroke="#f5c380" stroke-width="1.4" stroke-linecap="round" stroke-linejoin="round" /><path d="M635.3 147.1 C635.4 144.7 634.7 137.5 635.7 132.7 C636.8 127.9 639.5 121.7 641.4 118.4 C643.3 115.0 646.0 113.4 647.0 112.5" fill="none" stroke="#f5c380" stroke-width="1.4" stroke-linecap="round" stroke-linejoin="round" /><path d="M653.7 156.1 C653.6 158.2 653.6 164.9 653.3 168.9 C652.9 173.0 652.5 177.0 651.4 180.6 C650.3 184.1 647.9 186.8 646.7 190.2 C645.5 193.5 644.7 198.9 644.2 200.7" fill="none" stroke="#f5c380" stroke-width="1.4" stroke-linecap="round" stroke-linejoin="round" /><path d="M554.3 313.0 C556.5 313.3 563.7 314.9 567.6 314.9 C571.5 315.0 574.8 314.3 577.6 313.3 C580.4 312.2 583.3 309.3 584.4 308.6" fill="none" stroke="#f5c380" stroke-width="1.4" stroke-linecap="round" stroke-linejoin="round" /><path d="M623.3 328.4 C623.2 330.4 622.6 336.4 622.6 340.7 C622.5 345.0 623.4 349.9 623.0 354.2 C622.7 358.4 621.1 364.2 620.7 366.2" fill="none" stroke="#f5c380" stroke-width="1.4" stroke-linecap="round" stroke-linejoin="round" /><path d="M669.9 183.0 C670.6 180.5 672.8 172.2 674.2 168.3 C675.7 164.5 676.2 163.0 678.6 159.7 C681.1 156.4 685.5 152.2 689.0 148.5 C692.5 144.8 697.9 139.4 699.7 137.6" fill="none" stroke="#f5c380" stroke-width="1.4" stroke-linecap="round" stroke-linejoin="round" /><path d="M777.9 360.8 C775.6 361.2 767.9 362.6 764.0 363.0 C760.1 363.4 758.1 363.9 754.7 363.1 C751.3 362.2 746.5 360.0 743.5 358.0 C740.5 356.0 737.9 352.2 736.8 351.1" fill="none" stroke="#f5c380" stroke-width="1.4" stroke-linecap="round" stroke-linejoin="round" /><path d="M709.0 386.4 C710.8 385.3 716.1 381.6 719.6 380.1 C723.2 378.7 727.3 379.0 730.3 377.8 C733.2 376.7 734.3 375.3 737.1 373.3 C739.9 371.2 744.5 368.8 747.1 365.5 C749.7 362.2 751.8 355.5 752.7 353.4" fill="none" stroke="#f5c380" stroke-width="1.4" stroke-linecap="round" stroke-linejoin="round" /><path d="M523.8 163.7 C522.3 163.5 518.2 163.4 514.6 162.7 C511.0 161.9 506.2 160.2 502.1 159.2 C498.1 158.1 494.1 156.7 490.5 156.4 C487.0 156.0 484.7 156.0 480.9 157.0 C477.0 158.1 469.6 161.6 467.3 162.5" fill="none" stroke="#f5c380" stroke-width="1.4" stroke-linecap="round" stroke-linejoin="round" /><path d="M527.8 270.0 C527.4 267.6 525.8 260.4 525.7 255.7 C525.5 251.0 525.7 245.7 526.9 241.9 C528.1 238.1 531.3 235.4 532.9 232.7 C534.5 230.0 536.0 226.7 536.6 225.6" fill="none" stroke="#f5c380" stroke-width="1.4" stroke-linecap="round" stroke-linejoin="round" /><path d="M682.5 299.9 C682.8 297.8 683.0 291.7 684.1 287.6 C685.2 283.4 688.6 279.8 689.2 275.2 C689.9 270.6 688.2 262.5 688.0 259.9" fill="none" stroke="#f5c380" stroke-width="1.4" stroke-linecap="round" stroke-linejoin="round" /><path d="M496.3 228.8 C495.7 227.2 494.9 222.5 492.8 219.4 C490.8 216.2 486.3 212.9 483.8 209.6 C481.4 206.3 481.0 202.7 478.1 199.4 C475.2 196.2 469.6 192.7 466.4 189.9 C463.2 187.0 460.1 183.6 458.8 182.4" fill="none" stroke="#f5c380" stroke-width="1.4" stroke-linecap="round" stroke-linejoin="round" /><path d="M747.0 347.1 C748.4 348.8 752.8 353.8 755.2 357.2 C757.5 360.6 758.4 364.4 761.3 367.6 C764.2 370.8 769.5 374.1 772.4 376.4 C775.3 378.7 777.8 380.7 778.9 381.5" fill="none" stroke="#f5c380" stroke-width="1.4" stroke-linecap="round" stroke-linejoin="round" /><path d="M541.9 369.7 C543.6 370.7 548.0 373.1 552.0 375.2 C556.0 377.3 561.5 380.6 565.9 382.6 C570.2 384.6 576.1 386.5 578.1 387.3" fill="none" stroke="#f5c380" stroke-width="1.4" stroke-linecap="round" stroke-linejoin="round" /><path d="M672.5 238.0 C673.2 236.0 675.5 229.5 676.6 225.9 C677.7 222.4 677.3 220.1 679.2 216.4 C681.1 212.8 684.6 207.5 688.0 204.1 C691.4 200.7 697.7 197.3 699.6 196.0" fill="none" stroke="#f5c380" stroke-width="1.4" stroke-linecap="round" stroke-linejoin="round" /><path d="M504.0 136.9 C502.5 137.2 497.4 137.5 494.6 138.8 C491.9 140.1 489.7 142.0 487.5 144.7 C485.3 147.5 482.3 153.7 481.2 155.4" fill="none" stroke="#f5c380" stroke-width="1.4" stroke-linecap="round" stroke-linejoin="round" /><path d="M492.8 168.6 C492.3 170.1 490.9 174.8 489.8 177.9 C488.7 181.0 487.5 183.3 486.1 187.1 C484.8 190.9 482.5 198.5 481.8 200.7" fill="none" stroke="#f5c380" stroke-width="1.4" stroke-linecap="round" stroke-linejoin="round" /><path d="M589.9 408.4 C587.9 408.7 582.3 410.5 578.1 410.3 C573.8 410.0 568.1 408.0 564.3 407.0 C560.5 406.0 557.8 405.5 555.3 404.1 C552.7 402.6 549.9 399.2 548.9 398.3" fill="none" stroke="#f5c380" stroke-width="1.4" stroke-linecap="round" stroke-linejoin="round" /><path d="M635.7 180.1 C636.6 178.6 639.8 174.8 641.1 171.2 C642.3 167.6 642.4 163.2 643.0 158.7 C643.7 154.2 645.3 148.9 645.1 144.3 C645.0 139.6 642.6 133.1 642.1 130.8" fill="none" stroke="#f5c380" stroke-width="1.4" stroke-linecap="round" stroke-linejoin="round" /><path d="M559.1 245.1 C559.6 242.6 561.3 235.1 562.1 230.4 C562.9 225.8 563.0 221.2 563.8 217.0 C564.5 212.9 566.2 207.5 566.7 205.6" fill="none" stroke="#f5c380" stroke-width="1.4" stroke-linecap="round" stroke-linejoin="round" /><path d="M644.7 237.4 C644.6 235.8 643.6 231.3 644.1 227.9 C644.6 224.6 647.2 220.4 647.9 217.2 C648.6 214.1 648.8 212.8 648.3 209.0 C647.8 205.2 646.2 198.9 644.7 194.5 C643.3 190.0 640.4 184.2 639.5 182.2" fill="none" stroke="#f5c380" stroke-width="1.4" stroke-linecap="round" stroke-linejoin="round" /><path d="M19.0 299.0 C23.0 299.0 35.8 298.0 43.0 299.0 C50.2 300.0 48.5 303.7 62.0 305.0 C75.5 306.3 107.3 306.7 124.0 307.0 C140.7 307.3 143.8 306.8 162.0 307.0 C180.2 307.2 217.2 307.3 233.0 308.0 C248.8 308.7 253.0 310.5 257.0 311.0" fill="none" stroke="#f0906a" stroke-width="2.3" stroke-linecap="round" stroke-linejoin="round" /><path d="M326.0 307.0 C328.0 308.2 332.8 314.2 338.0 314.0 C343.2 313.8 349.0 308.0 357.0 306.0 C365.0 304.0 373.3 302.0 386.0 302.0 C398.7 302.0 417.3 306.7 433.0 306.0 C448.7 305.3 468.3 299.8 480.0 298.0 C491.7 296.2 493.8 295.8 503.0 295.0 C512.2 294.2 524.2 291.8 535.0 293.0 C545.8 294.2 562.5 300.5 568.0 302.0" fill="none" stroke="#f0906a" stroke-width="2.3" stroke-linecap="round" stroke-linejoin="round" /><path d="M131.0 345.0 C131.3 345.8 127.0 340.8 133.0 350.0 C139.0 359.2 158.2 389.5 167.0 400.0 C175.8 410.5 180.3 409.5 186.0 413.0 C191.7 416.5 197.7 417.7 201.0 421.0 C204.3 424.3 203.0 427.2 206.0 433.0 C209.0 438.8 214.5 451.0 219.0 456.0 C223.5 461.0 228.2 460.7 233.0 463.0 C237.8 465.3 243.8 468.2 248.0 470.0 C252.2 471.8 256.3 473.3 258.0 474.0" fill="none" stroke="#f0906a" stroke-width="2.3" stroke-linecap="round" stroke-linejoin="round" /><path d="M369.0 203.0 C368.3 204.3 365.3 205.8 365.0 211.0 C364.7 216.2 368.8 226.0 367.0 234.0 C365.2 242.0 360.7 253.2 354.0 259.0 C347.3 264.8 333.7 264.8 327.0 269.0 C320.3 273.2 316.8 279.8 314.0 284.0 C311.2 288.2 310.7 292.3 310.0 294.0" fill="none" stroke="#f0906a" stroke-width="2.3" stroke-linecap="round" stroke-linejoin="round" /><path d="M340.0 141.0 L352.0 139.0" fill="none" stroke="#f0906a" stroke-width="2.3" stroke-linecap="round" stroke-linejoin="round" /><path d="M389.0 157.0 L387.0 167.0" fill="none" stroke="#f0906a" stroke-width="2.3" stroke-linecap="round" stroke-linejoin="round" /><path d="M302.0 343.0 C302.5 348.8 306.5 367.0 305.0 378.0 C303.5 389.0 295.5 399.8 293.0 409.0 C290.5 418.2 290.0 423.0 290.0 433.0 C290.0 443.0 291.5 459.0 293.0 469.0 C294.5 479.0 298.0 489.0 299.0 493.0" fill="none" stroke="#f0906a" stroke-width="2.3" stroke-linecap="round" stroke-linejoin="round" /><path d="M560.0 133.0 C567.0 139.5 588.7 160.0 602.0 172.0 C615.3 184.0 630.3 197.0 640.0 205.0 C649.7 213.0 656.7 217.5 660.0 220.0" fill="none" stroke="#f0906a" stroke-width="2.3" stroke-linecap="round" stroke-linejoin="round" /><path d="M668.0 330.0 C664.8 333.5 653.5 345.3 649.0 351.0 C644.5 356.7 644.8 356.3 641.0 364.0 C637.2 371.7 633.0 386.8 626.0 397.0 C619.0 407.2 606.0 419.5 599.0 425.0 C592.0 430.5 586.5 429.2 584.0 430.0" fill="none" stroke="#f0906a" stroke-width="2.3" stroke-linecap="round" stroke-linejoin="round" /><path d="M727.0 339.0 C734.0 342.3 757.5 353.2 769.0 359.0 C780.5 364.8 784.7 366.2 796.0 374.0 C807.3 381.8 828.3 397.2 837.0 406.0 C845.7 414.8 843.7 418.0 848.0 427.0 C852.3 436.0 857.8 448.8 863.0 460.0 C868.2 471.2 876.3 488.3 879.0 494.0" fill="none" stroke="#f0906a" stroke-width="2.3" stroke-linecap="round" stroke-linejoin="round" /><path d="M750.0 133.0 C749.2 135.5 747.0 142.5 745.0 148.0 C743.0 153.5 740.8 160.7 738.0 166.0 C735.2 171.3 729.7 177.7 728.0 180.0" fill="none" stroke="#f0906a" stroke-width="2.3" stroke-linecap="round" stroke-linejoin="round" /><path d="M941.0 517.0 C943.8 518.2 952.5 521.5 958.0 524.0 C963.5 526.5 969.0 530.0 974.0 532.0 C979.0 534.0 980.3 534.7 988.0 536.0 C995.7 537.3 1012.8 538.2 1020.0 540.0 C1027.2 541.8 1029.2 545.8 1031.0 547.0" fill="none" stroke="#f0906a" stroke-width="2.3" stroke-linecap="round" stroke-linejoin="round" /><path d="M600.0 133.0 L595.0 150.0" fill="none" stroke="#f0906a" stroke-width="2.3" stroke-linecap="round" stroke-linejoin="round" /><path d="M541.0 333.0 C541.3 336.0 544.0 344.8 543.0 351.0 C542.0 357.2 535.0 364.3 535.0 370.0 C535.0 375.7 538.8 378.7 543.0 385.0 C547.2 391.3 556.2 402.2 560.0 408.0 C563.8 413.8 564.5 416.7 566.0 420.0 C567.5 423.3 568.5 426.7 569.0 428.0" fill="none" stroke="#f0906a" stroke-width="2.3" stroke-linecap="round" stroke-linejoin="round" /><path d="M608.0 296.0 C610.8 296.0 619.7 295.8 625.0 296.0 C630.3 296.2 635.0 295.8 640.0 297.0 C645.0 298.2 650.3 301.5 655.0 303.0 C659.7 304.5 663.0 303.7 668.0 306.0 C673.0 308.3 679.5 312.7 685.0 317.0 C690.5 321.3 695.0 327.8 701.0 332.0 C707.0 336.2 712.8 338.3 721.0 342.0 C729.2 345.7 745.2 352.0 750.0 354.0" fill="none" stroke="#f0906a" stroke-width="1.9" stroke-linecap="round" stroke-linejoin="round" /><path d="M685.0 277.0 C684.7 279.2 683.7 286.0 683.0 290.0 C682.3 294.0 682.3 297.2 681.0 301.0 C679.7 304.8 677.3 307.8 675.0 313.0 C672.7 318.2 669.7 326.5 667.0 332.0 C664.3 337.5 661.7 341.3 659.0 346.0 C656.3 350.7 652.3 357.7 651.0 360.0" fill="none" stroke="#f0906a" stroke-width="1.9" stroke-linecap="round" stroke-linejoin="round" /><path d="M679.0 218.0 C678.7 221.7 677.2 233.5 677.0 240.0 C676.8 246.5 677.5 251.2 678.0 257.0 C678.5 262.8 679.7 272.0 680.0 275.0" fill="none" stroke="#f0906a" stroke-width="1.9" stroke-linecap="round" stroke-linejoin="round" /><path d="M705.0 267.0 C708.3 267.0 719.2 266.8 725.0 267.0 C730.8 267.2 735.2 267.0 740.0 268.0 C744.8 269.0 751.7 272.2 754.0 273.0" fill="none" stroke="#f0906a" stroke-width="1.9" stroke-linecap="round" stroke-linejoin="round" /><path d="M689.0 247.0 C690.8 245.8 697.3 241.8 700.0 240.0 C702.7 238.2 702.8 239.7 705.0 236.0 C707.2 232.3 711.7 221.0 713.0 218.0" fill="none" stroke="#f0906a" stroke-width="1.9" stroke-linecap="round" stroke-linejoin="round" /><path d="M612.0 262.0 C615.0 261.3 623.7 258.0 630.0 258.0 C636.3 258.0 643.7 260.0 650.0 262.0 C656.3 264.0 663.0 267.7 668.0 270.0 C673.0 272.3 678.0 275.0 680.0 276.0" fill="none" stroke="#f0906a" stroke-width="1.9" stroke-linecap="round" stroke-linejoin="round" /><path d="M626.0 243.0 C628.3 244.2 635.2 248.5 640.0 250.0 C644.8 251.5 650.3 252.0 655.0 252.0 C659.7 252.0 664.2 251.2 668.0 250.0 C671.8 248.8 676.3 245.8 678.0 245.0" fill="none" stroke="#f0906a" stroke-width="1.9" stroke-linecap="round" stroke-linejoin="round" /><path d="M700.0 300.0 C702.0 301.3 707.0 306.0 712.0 308.0 C717.0 310.0 723.3 310.3 730.0 312.0 C736.7 313.7 748.3 317.0 752.0 318.0" fill="none" stroke="#f0906a" stroke-width="1.9" stroke-linecap="round" stroke-linejoin="round" /><path d="M612.0 320.0 C614.2 319.7 620.3 317.2 625.0 318.0 C629.7 318.8 635.5 321.7 640.0 325.0 C644.5 328.3 650.0 335.8 652.0 338.0" fill="none" stroke="#f0906a" stroke-width="1.9" stroke-linecap="round" stroke-linejoin="round" /><path d="M690.0 250.0 C691.7 252.0 697.5 257.3 700.0 262.0 C702.5 266.7 705.0 273.3 705.0 278.0 C705.0 282.7 700.8 288.0 700.0 290.0" fill="none" stroke="#f0906a" stroke-width="1.9" stroke-linecap="round" stroke-linejoin="round" /><path d="M628.0 275.0 C630.0 275.8 636.0 280.0 640.0 280.0 C644.0 280.0 648.3 275.0 652.0 275.0 C655.7 275.0 660.3 279.2 662.0 280.0" fill="none" stroke="#f5c380" stroke-width="1.4" stroke-linecap="round" stroke-linejoin="round" /><path d="M700.0 330.0 C702.0 331.3 707.3 338.0 712.0 338.0 C716.7 338.0 725.3 331.3 728.0 330.0" fill="none" stroke="#f5c380" stroke-width="1.4" stroke-linecap="round" stroke-linejoin="round" /><path d="M640.0 335.0 C641.7 337.5 648.0 345.5 650.0 350.0 C652.0 354.5 651.7 360.0 652.0 362.0" fill="none" stroke="#f5c380" stroke-width="1.4" stroke-linecap="round" stroke-linejoin="round" /><path d="M650.0 215.0 C650.8 217.8 655.0 227.0 655.0 232.0 C655.0 237.0 650.8 242.8 650.0 245.0" fill="none" stroke="#f5c380" stroke-width="1.4" stroke-linecap="round" stroke-linejoin="round" /><path d="M720.0 225.0 C722.5 226.7 730.3 230.8 735.0 235.0 C739.7 239.2 745.8 247.5 748.0 250.0" fill="none" stroke="#f5c380" stroke-width="1.4" stroke-linecap="round" stroke-linejoin="round" /><path d="M19.0 225.0 C22.2 227.2 30.0 232.7 38.0 238.0 C46.0 243.3 57.5 249.5 67.0 257.0 C76.5 264.5 86.0 275.8 95.0 283.0 C104.0 290.2 116.0 293.5 121.0 300.0 C126.0 306.5 123.3 314.5 125.0 322.0 C126.7 329.5 130.0 341.2 131.0 345.0" fill="none" stroke="#e4698a" stroke-width="2.6" stroke-linecap="round" stroke-linejoin="round" /><path d="M518.0 339.0 C519.3 340.2 522.2 344.8 526.0 346.0 C529.8 347.2 538.5 346.0 541.0 346.0" fill="none" stroke="#e4698a" stroke-width="2.6" stroke-linecap="round" stroke-linejoin="round" /><path d="M257.0 311.0 C259.0 311.2 263.0 315.0 269.0 312.0 C275.0 309.0 286.2 296.2 293.0 293.0 C299.8 289.8 304.8 291.2 310.0 293.0 C315.2 294.8 319.3 300.5 324.0 304.0 C328.7 307.5 335.7 312.3 338.0 314.0" fill="none" stroke="#e4698a" stroke-width="2.6" stroke-linecap="round" stroke-linejoin="round" /><path d="M257.0 474.0 C259.0 474.8 263.0 474.7 269.0 479.0 C275.0 483.3 285.8 496.0 293.0 500.0 C300.2 504.0 305.7 500.3 312.0 503.0 C318.3 505.7 325.5 510.2 331.0 516.0 C336.5 521.8 343.0 530.3 345.0 538.0 C347.0 545.7 343.2 555.0 343.0 562.0 C342.8 569.0 343.8 577.0 344.0 580.0" fill="none" stroke="#e4698a" stroke-width="2.6" stroke-linecap="round" stroke-linejoin="round" /><path d="M342.0 433.0 C338.2 436.8 325.7 448.5 319.0 456.0 C312.3 463.5 305.8 471.2 302.0 478.0 C298.2 484.8 298.5 488.2 296.0 497.0 C293.5 505.8 289.8 521.8 287.0 531.0 C284.2 540.2 282.0 544.2 279.0 552.0 C276.0 559.8 270.7 573.7 269.0 578.0" fill="none" stroke="#e4698a" stroke-width="2.6" stroke-linecap="round" stroke-linejoin="round" /><path d="M340.0 433.0 C344.0 427.8 351.2 410.2 364.0 402.0 C376.8 393.8 402.7 388.0 417.0 384.0 C431.3 380.0 440.2 381.5 450.0 378.0 C459.8 374.5 464.5 369.8 476.0 363.0 C487.5 356.2 504.3 345.8 519.0 337.0 C533.7 328.2 550.5 319.2 564.0 310.0 C577.5 300.8 592.7 287.2 600.0 282.0 C607.3 276.8 606.7 279.5 608.0 279.0" fill="none" stroke="#e4698a" stroke-width="2.6" stroke-linecap="round" stroke-linejoin="round" /><path d="M485.0 155.0 C488.0 155.2 498.0 155.0 503.0 156.0 C508.0 157.0 510.0 158.5 515.0 161.0 C520.0 163.5 527.7 166.8 533.0 171.0 C538.3 175.2 541.2 180.7 547.0 186.0 C552.8 191.3 560.2 197.3 568.0 203.0 C575.8 208.7 586.5 215.2 594.0 220.0 C601.5 224.8 607.7 228.2 613.0 232.0 C618.3 235.8 623.8 241.2 626.0 243.0" fill="none" stroke="#e4698a" stroke-width="2.6" stroke-linecap="round" stroke-linejoin="round" /><path d="M527.0 133.0 C526.5 135.3 526.0 142.3 524.0 147.0 C522.0 151.7 515.5 155.2 515.0 161.0 C514.5 166.8 519.2 175.2 521.0 182.0 C522.8 188.8 527.0 198.0 526.0 202.0 C525.0 206.0 518.3 204.0 515.0 206.0 C511.7 208.0 508.0 209.8 506.0 214.0 C504.0 218.2 503.3 222.3 503.0 231.0 C502.7 239.7 504.0 255.0 504.0 266.0 C504.0 277.0 502.8 289.0 503.0 297.0 C503.2 305.0 502.8 307.0 505.0 314.0 C507.2 321.0 514.2 334.8 516.0 339.0" fill="none" stroke="#e4698a" stroke-width="2.6" stroke-linecap="round" stroke-linejoin="round" /><path d="M640.0 148.0 C633.3 148.8 607.7 152.0 600.0 153.0 C592.3 154.0 598.2 152.0 594.0 154.0 C589.8 156.0 580.8 162.5 575.0 165.0 C569.2 167.5 563.7 165.7 559.0 169.0 C554.3 172.3 550.5 180.8 547.0 185.0 C543.5 189.2 541.5 191.2 538.0 194.0 C534.5 196.8 531.2 199.0 526.0 202.0 C520.8 205.0 510.2 210.3 507.0 212.0" fill="none" stroke="#e4698a" stroke-width="2.6" stroke-linecap="round" stroke-linejoin="round" /><path d="M559.0 169.0 C560.5 173.8 566.8 191.3 568.0 198.0 C569.2 204.7 566.3 207.2 566.0 209.0" fill="none" stroke="#e4698a" stroke-width="2.6" stroke-linecap="round" stroke-linejoin="round" /><path d="M640.0 148.0 C645.2 148.7 663.3 150.0 671.0 152.0 C678.7 154.0 678.7 156.0 686.0 160.0 C693.3 164.0 708.5 172.2 715.0 176.0 C721.5 179.8 721.0 181.0 725.0 183.0 C729.0 185.0 734.8 185.5 739.0 188.0 C743.2 190.5 746.2 195.2 750.0 198.0 C753.8 200.8 759.5 202.3 762.0 205.0 C764.5 207.7 764.0 209.5 765.0 214.0 C766.0 218.5 767.2 225.5 768.0 232.0 C768.8 238.5 769.3 245.8 770.0 253.0 C770.7 260.2 771.7 271.3 772.0 275.0" fill="none" stroke="#e4698a" stroke-width="2.6" stroke-linecap="round" stroke-linejoin="round" /><path d="M611.0 234.0 C611.0 237.5 611.3 247.3 611.0 255.0 C610.7 262.7 609.3 275.8 609.0 280.0" fill="none" stroke="#e4698a" stroke-width="2.6" stroke-linecap="round" stroke-linejoin="round" /><path d="M774.0 275.0 C778.2 275.5 791.5 278.8 799.0 278.0 C806.5 277.2 814.0 275.5 819.0 270.0 C824.0 264.5 820.7 252.0 829.0 245.0 C837.3 238.0 854.0 232.3 869.0 228.0 C884.0 223.7 907.3 224.0 919.0 219.0 C930.7 214.0 932.0 202.8 939.0 198.0 C946.0 193.2 952.7 194.2 961.0 190.0 C969.3 185.8 981.5 178.0 989.0 173.0 C996.5 168.0 999.0 165.8 1006.0 160.0 C1013.0 154.2 1026.8 141.7 1031.0 138.0" fill="none" stroke="#e4698a" stroke-width="2.6" stroke-linecap="round" stroke-linejoin="round" /><path d="M919.0 219.0 C922.3 220.3 929.0 223.0 939.0 227.0 C949.0 231.0 964.8 238.3 979.0 243.0 C993.2 247.7 1015.3 252.5 1024.0 255.0 C1032.7 257.5 1029.8 257.5 1031.0 258.0" fill="none" stroke="#e4698a" stroke-width="2.6" stroke-linecap="round" stroke-linejoin="round" /><path d="M731.0 338.0 C731.7 343.3 734.7 356.7 735.0 370.0 C735.3 383.3 734.7 403.7 733.0 418.0 C731.3 432.3 725.7 445.7 725.0 456.0 C724.3 466.3 726.8 473.7 729.0 480.0 C731.2 486.3 734.3 484.7 738.0 494.0 C741.7 503.3 747.5 521.7 751.0 536.0 C754.5 550.3 757.7 572.7 759.0 580.0" fill="none" stroke="#e4698a" stroke-width="2.6" stroke-linecap="round" stroke-linejoin="round" /><path d="M752.0 397.0 C755.3 397.8 763.0 399.5 772.0 402.0 C781.0 404.5 795.2 409.0 806.0 412.0 C816.8 415.0 828.7 416.5 837.0 420.0 C845.3 423.5 847.8 427.7 856.0 433.0 C864.2 438.3 876.5 445.7 886.0 452.0 C895.5 458.3 906.7 464.0 913.0 471.0 C919.3 478.0 919.3 486.3 924.0 494.0 C928.7 501.7 938.2 513.2 941.0 517.0" fill="none" stroke="#e4698a" stroke-width="2.6" stroke-linecap="round" stroke-linejoin="round" /><path d="M806.0 582.0 C811.8 578.2 827.7 569.8 841.0 559.0 C854.3 548.2 868.3 529.8 886.0 517.0 C903.7 504.2 922.8 495.0 947.0 482.0 C971.2 469.0 1017.0 446.2 1031.0 439.0" fill="none" stroke="#e4698a" stroke-width="2.6" stroke-linecap="round" stroke-linejoin="round" /><path d="M269.0 479.0 L250.0 474.0" fill="none" stroke="#e4698a" stroke-width="2.6" stroke-linecap="round" stroke-linejoin="round" /><path d="M340.0 140.0 C343.5 141.2 355.7 143.8 361.0 147.0 C366.3 150.2 367.8 155.7 372.0 159.0 C376.2 162.3 382.2 166.0 386.0 167.0 C389.8 168.0 391.7 166.7 395.0 165.0 C398.3 163.3 403.0 158.7 406.0 157.0 C409.0 155.3 410.3 154.5 413.0 155.0 C415.7 155.5 417.7 160.5 422.0 160.0 C426.3 159.5 435.2 152.7 439.0 152.0 C442.8 151.3 442.8 155.2 445.0 156.0 C447.2 156.8 450.8 156.8 452.0 157.0" fill="none" stroke="#e4698a" stroke-width="2.6" stroke-linecap="round" stroke-linejoin="round" /><path d="M386.0 167.0 C385.5 169.0 384.3 175.2 383.0 179.0 C381.7 182.8 380.3 186.0 378.0 190.0 C375.7 194.0 370.5 200.8 369.0 203.0" fill="none" stroke="#e4698a" stroke-width="2.6" stroke-linecap="round" stroke-linejoin="round" /><path d="M411.0 133.0 L409.0 156.0" fill="none" stroke="#e4698a" stroke-width="2.6" stroke-linecap="round" stroke-linejoin="round" /><path d="M436.0 133.0 L439.0 150.0" fill="none" stroke="#e4698a" stroke-width="2.6" stroke-linecap="round" stroke-linejoin="round" /><path d="M608.0 281.0 C608.7 277.7 609.0 267.3 612.0 261.0 C615.0 254.7 620.2 248.5 626.0 243.0 C631.8 237.5 641.2 232.2 647.0 228.0 C652.8 223.8 654.7 219.7 661.0 218.0 C667.3 216.3 678.3 216.7 685.0 218.0 C691.7 219.3 696.3 222.3 701.0 226.0 C705.7 229.7 708.7 234.2 713.0 240.0 C717.3 245.8 724.2 255.8 727.0 261.0 C729.8 266.2 724.5 268.7 730.0 271.0 C735.5 273.3 755.0 274.3 760.0 275.0" fill="none" stroke="#e4698a" stroke-width="2.6" stroke-linecap="round" stroke-linejoin="round" /><path d="M600.0 277.0 C601.3 277.0 603.7 275.0 608.0 277.0 C612.3 279.0 619.5 286.7 626.0 289.0 C632.5 291.3 639.8 291.3 647.0 291.0 C654.2 290.7 661.0 287.7 669.0 287.0 C677.0 286.3 687.7 286.3 695.0 287.0 C702.3 287.7 709.0 288.7 713.0 291.0 C717.0 293.3 717.3 296.0 719.0 301.0 C720.7 306.0 721.7 314.2 723.0 321.0 C724.3 327.8 725.7 337.2 727.0 342.0 C728.3 346.8 730.3 348.7 731.0 350.0" fill="none" stroke="#e4698a" stroke-width="2.6" stroke-linecap="round" stroke-linejoin="round" /><path d="M647.0 356.0 C649.3 352.0 657.3 338.5 661.0 332.0 C664.7 325.5 667.7 319.5 669.0 317.0" fill="none" stroke="#e4698a" stroke-width="2.6" stroke-linecap="round" stroke-linejoin="round" /><text x="41" y="207" font-size="10.5" fill="#3a3a3a" text-anchor="end" stroke="rgba(242,239,233,0.85)" stroke-width="2.5" paint-order="stroke" stroke-linejoin="round" >Liberty</text><text x="39" y="257" font-size="10.5" fill="#3a3a3a" text-anchor="middle" stroke="rgba(242,239,233,0.85)" stroke-width="2.5" paint-order="stroke" stroke-linejoin="round" >Staley</text><text x="581" y="265" font-size="13" fill="#3a3a3a" text-anchor="middle" stroke="rgba(242,239,233,0.85)" stroke-width="2.5" paint-order="stroke" stroke-linejoin="round" >Cary</text><text x="792" y="264" font-size="10.5" fill="#3a3a3a" text-anchor="middle" stroke="rgba(242,239,233,0.85)" stroke-width="2.5" paint-order="stroke" stroke-linejoin="round" >Knightdale</text><text x="544" y="383" font-size="10.5" fill="#3a3a3a" text-anchor="middle" stroke="rgba(242,239,233,0.85)" stroke-width="2.5" paint-order="stroke" stroke-linejoin="round" >Holly Springs</text><text x="810" y="383" font-size="10.5" fill="#3a3a3a" text-anchor="middle" stroke="rgba(242,239,233,0.85)" stroke-width="2.5" paint-order="stroke" stroke-linejoin="round" >Clayton</text><text x="881" y="441" font-size="10.5" fill="#3a3a3a" text-anchor="middle" stroke="rgba(242,239,233,0.85)" stroke-width="2.5" paint-order="stroke" stroke-linejoin="round" >Wilson's Mills</text><text x="893" y="506" font-size="10.5" fill="#3a3a3a" text-anchor="middle" stroke="rgba(242,239,233,0.85)" stroke-width="2.5" paint-order="stroke" stroke-linejoin="round" >Smithfield</text><text x="390" y="550" font-size="10.5" fill="#3a3a3a" text-anchor="middle" stroke="rgba(242,239,233,0.85)" stroke-width="2.5" paint-order="stroke" stroke-linejoin="round" >Broadway</text><text x="568" y="440" font-size="10.5" fill="#3a3a3a" text-anchor="middle" stroke="rgba(242,239,233,0.85)" stroke-width="2.5" paint-order="stroke" stroke-linejoin="round" >Fuquay-Varina</text><text x="550" y="233" font-size="10.5" fill="#3a3a3a" text-anchor="middle" stroke="rgba(242,239,233,0.85)" stroke-width="2.5" paint-order="stroke" stroke-linejoin="round" >Morrisville</text><text x="303" y="323" font-size="10.5" fill="#3a3a3a" text-anchor="middle" stroke="rgba(242,239,233,0.85)" stroke-width="2.5" paint-order="stroke" stroke-linejoin="round" >Pittsboro</text><text x="301" y="531" font-size="10.5" fill="#3a3a3a" text-anchor="middle" stroke="rgba(242,239,233,0.85)" stroke-width="2.5" paint-order="stroke" stroke-linejoin="round" >Sanford</text><text x="247" y="340" font-size="10" fill="#a078a4" text-anchor="middle" stroke="rgba(242,239,233,0.85)" stroke-width="2.5" paint-order="stroke" stroke-linejoin="round" font-style="italic">Chatham</text><text x="247" y="351" font-size="10" fill="#a078a4" text-anchor="middle" stroke="rgba(242,239,233,0.85)" stroke-width="2.5" paint-order="stroke" stroke-linejoin="round" font-style="italic">County</text><text x="857" y="478" font-size="10" fill="#a078a4" text-anchor="middle" stroke="rgba(242,239,233,0.85)" stroke-width="2.5" paint-order="stroke" stroke-linejoin="round" font-style="italic">Johnston</text><text x="857" y="490" font-size="10" fill="#a078a4" text-anchor="middle" stroke="rgba(242,239,233,0.85)" stroke-width="2.5" paint-order="stroke" stroke-linejoin="round" font-style="italic">County</text><text x="438" y="288" font-size="10" fill="#3b9a3b" text-anchor="middle" stroke="rgba(242,239,233,0.85)" stroke-width="2.5" paint-order="stroke" stroke-linejoin="round" font-style="italic">New Hope</text><text x="439" y="300" font-size="10" fill="#3b9a3b" text-anchor="middle" stroke="rgba(242,239,233,0.85)" stroke-width="2.5" paint-order="stroke" stroke-linejoin="round" font-style="italic">Game Lands</text><text x="382" y="341" font-size="10" fill="#3b9a3b" text-anchor="middle" stroke="rgba(242,239,233,0.85)" stroke-width="2.5" paint-order="stroke" stroke-linejoin="round" font-style="italic">B. Everett</text><text x="382" y="352" font-size="10" fill="#3b9a3b" text-anchor="middle" stroke="rgba(242,239,233,0.85)" stroke-width="2.5" paint-order="stroke" stroke-linejoin="round" font-style="italic">Jordan</text><text x="382" y="364" font-size="10" fill="#3b9a3b" text-anchor="middle" stroke="rgba(242,239,233,0.85)" stroke-width="2.5" paint-order="stroke" stroke-linejoin="round" font-style="italic">Project</text><path d="M577 174 L578.2 178.5 L583 181 L583 182.3 L578.2 181.2 L577.8 184.5 L579.5 186 L579.5 187 L577 186.2 L574.5 187 L574.5 186 L576.2 184.5 L575.8 181.2 L571 182.3 L571 181 L575.8 178.5 Z" fill="#7b60cf"/><circle cx="499" cy="80.5" r="72.5" fill="rgb(192,16,32)" fill-opacity="0.6"/><circle cx="679.4" cy="287.5" r="73" fill="rgb(192,16,32)" fill-opacity="0.6"/><circle cx="395.5" cy="143" r="50" fill="rgb(165,45,205)" fill-opacity="0.58"/><circle cx="364" cy="246.5" r="14.5" fill="rgb(0,0,255)" fill-opacity="0.5"/><circle cx="303" cy="319" r="24" fill="rgb(165,45,205)" fill-opacity="0.58"/><circle cx="538.6" cy="303.9" r="28.8" fill="rgb(165,45,205)" fill-opacity="0.58"/><circle cx="550.4" cy="229.2" r="16.3" fill="rgb(165,45,205)" fill-opacity="0.58"/><circle cx="569" cy="435" r="14" fill="rgb(165,45,205)" fill-opacity="0.58"/><circle cx="301" cy="526" r="14.3" fill="rgb(165,45,205)" fill-opacity="0.58"/><text x="389" y="156" font-size="12" fill="#5d2a6a" text-anchor="middle" opacity="0.85">Chapel Hill</text><text x="682" y="272" font-size="14" fill="#6a1a26" text-anchor="middle" opacity="0.85">Raleigh</text><text x="699" y="330" font-size="11" fill="#5a1a26" text-anchor="middle" opacity="0.85">Garner</text><text x="395.5" y="147" font-size="11" font-weight="bold" fill="#fff" text-anchor="middle" stroke="#333" stroke-width="1.6" stroke-opacity="0.35" paint-order="stroke">3528</text><text x="679.4" y="291" font-size="11" font-weight="bold" fill="#fff" text-anchor="middle" stroke="#333" stroke-width="1.6" stroke-opacity="0.35" paint-order="stroke">7621</text><text x="303" y="323" font-size="11" font-weight="bold" fill="#fff" text-anchor="middle" stroke="#333" stroke-width="1.6" stroke-opacity="0.35" paint-order="stroke">839</text><text x="539" y="307" font-size="11" font-weight="bold" fill="#fff" text-anchor="middle" stroke="#333" stroke-width="1.6" stroke-opacity="0.35" paint-order="stroke">1175</text><text x="550.5" y="233" font-size="11" font-weight="bold" fill="#fff" text-anchor="middle" stroke="#333" stroke-width="1.6" stroke-opacity="0.35" paint-order="stroke">383</text><text x="569" y="439" font-size="11" font-weight="bold" fill="#fff" text-anchor="middle" stroke="#333" stroke-width="1.6" stroke-opacity="0.35" paint-order="stroke">187</text><text x="301" y="530" font-size="11" font-weight="bold" fill="#fff" text-anchor="middle" stroke="#333" stroke-width="1.6" stroke-opacity="0.35" paint-order="stroke">111</text><rect x="452.5" y="147.5" width="32.5" height="16.0" rx="2" fill="#f1d4d9" stroke="#d9a0ab" stroke-width="1"/><text x="468.75" y="159.3" font-size="10.5" fill="#83354b" text-anchor="middle">I 40</text><rect x="686.5" y="158" width="38.0" height="16.5" rx="2" fill="#f1d4d9" stroke="#d9a0ab" stroke-width="1"/><text x="705.5" y="170.05" font-size="10.5" fill="#83354b" text-anchor="middle">I 540</text><rect x="955.5" y="173.5" width="38.0" height="17.0" rx="2" fill="#f1d4d9" stroke="#d9a0ab" stroke-width="1"/><text x="974.5" y="185.8" font-size="10.5" fill="#83354b" text-anchor="middle">US 64</text><rect x="871.5" y="204.5" width="44.5" height="28.5" rx="2" fill="#f1d4d9" stroke="#d9a0ab" stroke-width="1"/><text x="893.75" y="216.55" font-size="10.5" fill="#83354b" text-anchor="middle">US 64</text><text x="893.75" y="228.55" font-size="10.5" fill="#83354b" text-anchor="middle">US 264</text><rect x="976" y="242.5" width="45.5" height="16.0" rx="2" fill="#f1d4d9" stroke="#d9a0ab" stroke-width="1"/><text x="998.75" y="254.3" font-size="10.5" fill="#83354b" text-anchor="middle">US 264</text><rect x="103" y="323.5" width="44.5" height="16.5" rx="2" fill="#f1d4d9" stroke="#d9a0ab" stroke-width="1"/><text x="125.25" y="335.55" font-size="10.5" fill="#83354b" text-anchor="middle">US 421</text><rect x="418" y="377" width="31.5" height="16" rx="2" fill="#f1d4d9" stroke="#d9a0ab" stroke-width="1"/><text x="433.75" y="388.8" font-size="10.5" fill="#83354b" text-anchor="middle">US 1</text><rect x="715.5" y="371" width="37.0" height="28" rx="2" fill="#f1d4d9" stroke="#d9a0ab" stroke-width="1"/><text x="734.0" y="382.8" font-size="10.5" fill="#83354b" text-anchor="middle">I 40</text><text x="734.0" y="394.8" font-size="10.5" fill="#83354b" text-anchor="middle">US 70</text><rect x="1026" y="405" width="14" height="20" rx="2" fill="#f1d4d9" stroke="#d9a0ab" stroke-width="1"/><text x="1033.0" y="418.8" font-size="10.5" fill="#83354b" text-anchor="middle"></text><rect x="29" y="143" width="231" height="28" fill="#fff" fill-opacity="0.7"/><text x="39" y="163" font-size="14.5" font-weight="bold" fill="#1a1a1a" textLength="211" lengthAdjust="spacingAndGlyphs">Year total requests up to 2022-04</text><rect x="943" y="143" width="77" height="16" fill="#fff" fill-opacity="0.5"/><path d="M944 143 V158 H1020 V143" fill="none" stroke="#777" stroke-width="2"/><text x="949" y="155" font-size="11" fill="#333">10 km</text><rect x="989" y="494.5" width="31" height="60" rx="4" fill="#fff" stroke="rgba(0,0,0,0.25)" stroke-width="2"/><line x1="990" y1="523.5" x2="1019" y2="523.5" stroke="#ccc" stroke-width="1"/><text x="1004.5" y="515" font-size="18" font-weight="bold" fill="#000" text-anchor="middle">+</text><rect x="1001" y="540" width="7" height="2.5" fill="#000"/><rect x="836" y="564" width="195" height="16" fill="#fff" fill-opacity="0.8"/><text x="841" y="576" font-size="11" fill="#333" textLength="184" lengthAdjust="spacingAndGlyphs"><tspan fill="#0078a8">Leaflet</tspan> | © <tspan fill="#0078a8">OpenStreetMap</tspan> contributors</text></svg></div>
<div id="foot"></div>
<div class="btn" style="left:401px;width:75px;background:#b3b1c3"><span style="display:inline-block;transform:scaleX(0.93)">HOME</span></div>
<div class="btn" style="left:479px;width:75px"><span style="display:inline-block;transform:scaleX(0.87)">ABOUT</span></div>
<div class="btn" style="left:562px;width:84px"><span style="display:inline-block;transform:scaleX(0.865)">LOGOUT</span></div>
<div id="copy">©2022 — OAPEN.org</div>
</body></html>
